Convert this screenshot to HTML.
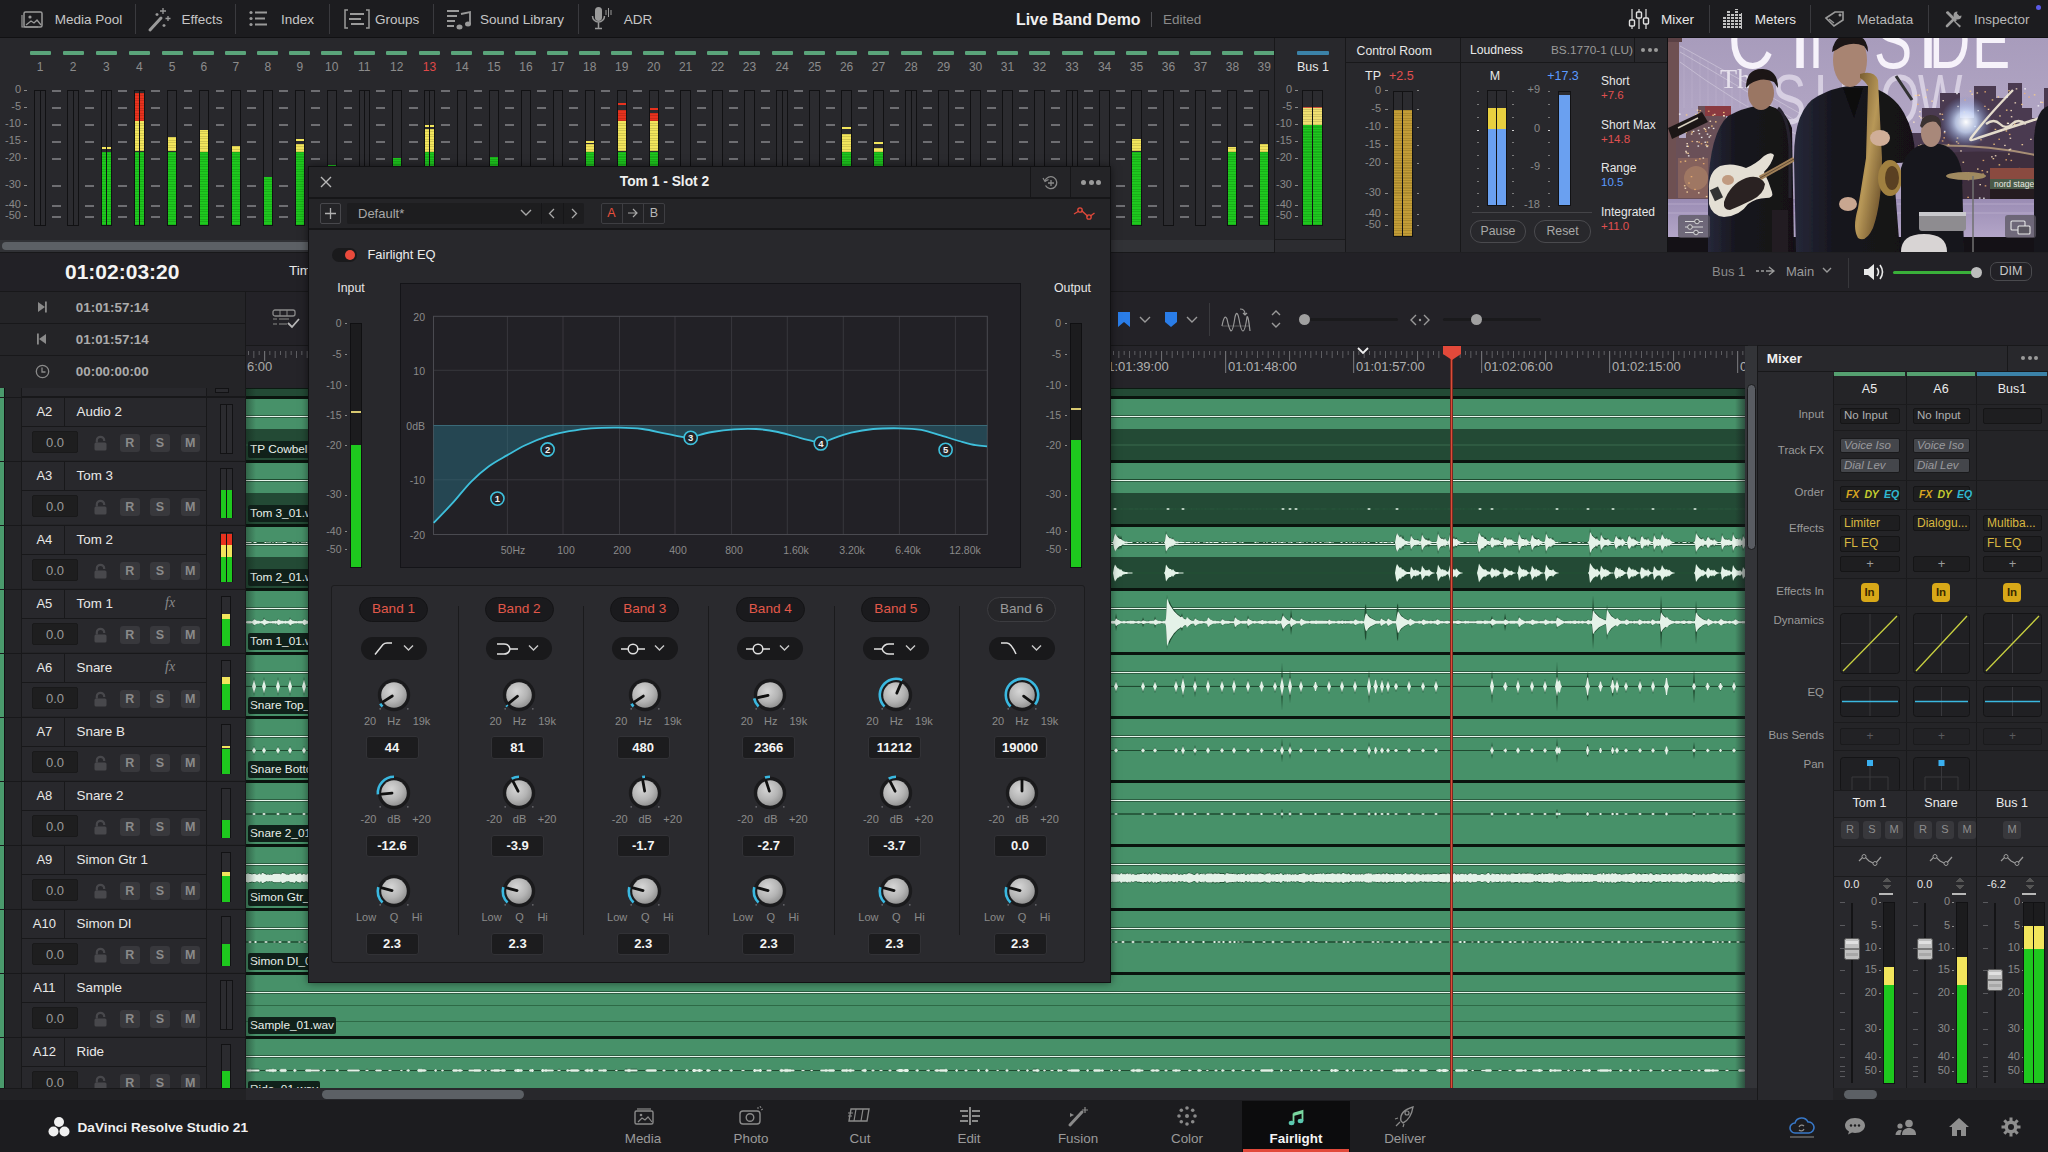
<!DOCTYPE html><html><head><meta charset="utf-8"><title>Fairlight</title><style>*{margin:0;padding:0}
body{width:2048px;height:1152px;overflow:hidden;position:relative;background:#1f1f22;font-family:"Liberation Sans",sans-serif}
div{position:absolute}
.t{white-space:nowrap}
svg{overflow:visible}
</style></head><body><div style="left:0px;top:0px;width:2048px;height:37px;background:#1c1c1f"></div>
<div style="left:0px;top:37px;width:2048px;height:1px;background:#111113"></div>
<div class="t" style="left:54.7px;top:11.7px;font-size:13.5px;line-height:16.2px;color:#c6c6c6;font-weight:400;">Media Pool</div>
<div class="t" style="left:181.6px;top:11.7px;font-size:13.5px;line-height:16.2px;color:#c6c6c6;font-weight:400;">Effects</div>
<div class="t" style="left:281px;top:11.7px;font-size:13.5px;line-height:16.2px;color:#c6c6c6;font-weight:400;">Index</div>
<div class="t" style="left:375px;top:11.7px;font-size:13.5px;line-height:16.2px;color:#c6c6c6;font-weight:400;">Groups</div>
<div class="t" style="left:480px;top:11.7px;font-size:13.5px;line-height:16.2px;color:#c6c6c6;font-weight:400;">Sound Library</div>
<div class="t" style="left:623.7px;top:11.7px;font-size:13.5px;line-height:16.2px;color:#c6c6c6;font-weight:400;">ADR</div>
<div style="left:135px;top:4px;width:1px;height:30px;background:#3a3a3e"></div>
<div style="left:235px;top:4px;width:1px;height:30px;background:#3a3a3e"></div>
<div style="left:329px;top:4px;width:1px;height:30px;background:#3a3a3e"></div>
<div style="left:433px;top:4px;width:1px;height:30px;background:#3a3a3e"></div>
<div style="left:578px;top:4px;width:1px;height:30px;background:#3a3a3e"></div>
<svg style="position:absolute;left:21px;top:8px;" width="23" height="22" viewBox="0 0 23 22"><rect x="3" y="4" width="18" height="15" rx="1.5" fill="none" stroke="#9a9a9a" stroke-width="1.5"/><path d="M1 7 v12 h16" fill="none" stroke="#9a9a9a" stroke-width="1.2"/><circle cx="9" cy="9" r="1.6" fill="#9a9a9a"/><path d="M5 17 l5-4 l3 2 l3-3 l4 5" fill="none" stroke="#9a9a9a" stroke-width="1.3"/></svg>
<svg style="position:absolute;left:148px;top:6px;" width="24" height="26" viewBox="0 0 24 26"><path d="M2 24 L13 12" stroke="#9a9a9a" stroke-width="3" stroke-linecap="round"/><path d="M15 2v6M12 5h6M20 10v5M17.5 12.5h5M9 7v3M7.5 8.5h3M16 18v3M14.5 19.5h3" stroke="#9a9a9a" stroke-width="1.3"/></svg>
<svg style="position:absolute;left:249px;top:10px;" width="20" height="17" viewBox="0 0 20 17"><circle cx="2" cy="2.5" r="1.6" fill="#9a9a9a"/><circle cx="2" cy="8.5" r="1.6" fill="#9a9a9a"/><circle cx="2" cy="14.5" r="1.6" fill="#9a9a9a"/><path d="M6 2.5h12M6 8.5h10M6 14.5h12" stroke="#9a9a9a" stroke-width="2"/></svg>
<svg style="position:absolute;left:344px;top:8px;" width="26" height="22" viewBox="0 0 26 22"><path d="M4 2H1v18h3M22 2h3v18h-3" fill="none" stroke="#9a9a9a" stroke-width="1.5"/><path d="M6 6h14M5 11h12M7 16h13" stroke="#9a9a9a" stroke-width="2.2"/></svg>
<svg style="position:absolute;left:446px;top:7px;" width="26" height="24" viewBox="0 0 26 24"><path d="M1 4h12M1 9h10M1 14h8M1 19h7" stroke="#9a9a9a" stroke-width="1.8"/><path d="M15 7 l9-2 v12" fill="none" stroke="#9a9a9a" stroke-width="1.8"/><ellipse cx="13.5" cy="20" rx="3" ry="2.5" fill="#9a9a9a"/><ellipse cx="22" cy="17" rx="3" ry="2.5" fill="#9a9a9a"/></svg>
<svg style="position:absolute;left:592px;top:6px;" width="22" height="26" viewBox="0 0 22 26"><rect x="3" y="1" width="7" height="14" rx="3.5" fill="#9a9a9a"/><path d="M0.5 10a6 6 0 0 0 12 0M6.5 16v6M3 22.5h7" fill="none" stroke="#9a9a9a" stroke-width="1.5"/><path d="M14 4v5M16.5 2v9M19 4v5" stroke="#9a9a9a" stroke-width="1"/></svg>
<div class="t" style="left:1016px;top:10.1px;font-size:15.9px;line-height:19.1px;color:#f0f0f0;font-weight:700;">Live Band Demo</div>
<div style="left:1151px;top:12px;width:1px;height:15px;background:#505054"></div>
<div class="t" style="left:1163px;top:11.5px;font-size:13.5px;line-height:16.2px;color:#8a8a8a;font-weight:400;">Edited</div>
<div class="t" style="left:1661px;top:11.7px;font-size:13.5px;line-height:16.2px;color:#e6e6e6;font-weight:400;">Mixer</div>
<div class="t" style="left:1754.7px;top:11.7px;font-size:13.5px;line-height:16.2px;color:#e6e6e6;font-weight:400;">Meters</div>
<div class="t" style="left:1857px;top:11.7px;font-size:13.5px;line-height:16.2px;color:#b8b8b8;font-weight:400;">Metadata</div>
<div class="t" style="left:1974px;top:11.7px;font-size:13.5px;line-height:16.2px;color:#b8b8b8;font-weight:400;">Inspector</div>
<div style="left:1709px;top:5px;width:1px;height:28px;background:#3a3a3e"></div>
<div style="left:1810px;top:5px;width:1px;height:28px;background:#3a3a3e"></div>
<div style="left:1928px;top:5px;width:1px;height:28px;background:#3a3a3e"></div>
<svg style="position:absolute;left:1628px;top:8px;" width="22" height="22" viewBox="0 0 22 22"><path d="M4 1v20M11 1v20M18 1v20" stroke="#e0e0e0" stroke-width="1.2"/><rect x="1.5" y="12" width="5" height="6" rx="1" fill="#1f1f22" stroke="#e0e0e0" stroke-width="1.4"/><rect x="8.5" y="4" width="5" height="6" rx="1" fill="#1f1f22" stroke="#e0e0e0" stroke-width="1.4"/><rect x="15.5" y="10" width="5" height="6" rx="1" fill="#1f1f22" stroke="#e0e0e0" stroke-width="1.4"/></svg>
<svg style="position:absolute;left:1723px;top:8px;" width="18" height="22" viewBox="0 0 18 22"><rect x="0" y="8" width="3" height="13" fill="#e0e0e0" opacity="0.85"/><rect x="4" y="3" width="3" height="18" fill="#e0e0e0" opacity="0.85"/><rect x="8" y="6" width="3" height="15" fill="#e0e0e0" opacity="0.85"/><rect x="12" y="1" width="3" height="20" fill="#e0e0e0" opacity="0.85"/><rect x="16" y="5" width="3" height="16" fill="#e0e0e0" opacity="0.85"/><rect x="0" y="2" width="18" height="1" fill="#1f1f22"/><rect x="0" y="5" width="18" height="1" fill="#1f1f22"/><rect x="0" y="8" width="18" height="1" fill="#1f1f22"/><rect x="0" y="11" width="18" height="1" fill="#1f1f22"/><rect x="0" y="14" width="18" height="1" fill="#1f1f22"/><rect x="0" y="17" width="18" height="1" fill="#1f1f22"/><rect x="0" y="20" width="18" height="1" fill="#1f1f22"/></svg>
<svg style="position:absolute;left:1824px;top:9px;" width="22" height="20" viewBox="0 0 22 20"><path d="M2 9 l9-6 h8 v8 l-9 6 z" fill="none" stroke="#9a9a9a" stroke-width="1.6"/><circle cx="16" cy="6" r="1.5" fill="#9a9a9a"/><path d="M5 10l5 4" stroke="#9a9a9a" stroke-width="1.3"/></svg>
<svg style="position:absolute;left:1944px;top:9px;" width="20" height="20" viewBox="0 0 20 20"><path d="M3 17 L12 8" stroke="#9a9a9a" stroke-width="2.6" stroke-linecap="round"/><path d="M13.5 2.5a4 4 0 1 0 4 4l-2 .5-2.5-2.5z" fill="#9a9a9a"/><path d="M2 3l2-1 9 9-2 2-9-9z" fill="#9a9a9a"/><path d="M11 12l6 5-1.5 1.5-5.5-6z" fill="#9a9a9a"/></svg>
<div style="left:2036px;top:5px;width:5px;height:5px;background:#5a5ae8;border-radius:50%"></div>
<div style="left:0px;top:38px;width:1275px;height:214px;background:#28282c"></div>
<div class="t" style="left:-9.0px;top:83.1px;width:30px;text-align:right;font-size:11px;line-height:13.2px;color:#8a8a8a;font-weight:400;">0</div>
<div style="left:24px;top:90px;width:3px;height:1px;background:#8a8a8a"></div>
<div class="t" style="left:-9.0px;top:100.3px;width:30px;text-align:right;font-size:11px;line-height:13.2px;color:#8a8a8a;font-weight:400;">-5</div>
<div style="left:24px;top:107px;width:3px;height:1px;background:#8a8a8a"></div>
<div class="t" style="left:-9.0px;top:117.4px;width:30px;text-align:right;font-size:11px;line-height:13.2px;color:#8a8a8a;font-weight:400;">-10</div>
<div style="left:24px;top:124px;width:3px;height:1px;background:#8a8a8a"></div>
<div class="t" style="left:-9.0px;top:134.4px;width:30px;text-align:right;font-size:11px;line-height:13.2px;color:#8a8a8a;font-weight:400;">-15</div>
<div style="left:24px;top:141px;width:3px;height:1px;background:#8a8a8a"></div>
<div class="t" style="left:-9.0px;top:151.4px;width:30px;text-align:right;font-size:11px;line-height:13.2px;color:#8a8a8a;font-weight:400;">-20</div>
<div style="left:24px;top:158px;width:3px;height:1px;background:#8a8a8a"></div>
<div class="t" style="left:-9.0px;top:178.1px;width:30px;text-align:right;font-size:11px;line-height:13.2px;color:#8a8a8a;font-weight:400;">-30</div>
<div style="left:24px;top:185px;width:3px;height:1px;background:#8a8a8a"></div>
<div class="t" style="left:-9.0px;top:198.4px;width:30px;text-align:right;font-size:11px;line-height:13.2px;color:#8a8a8a;font-weight:400;">-40</div>
<div style="left:24px;top:205px;width:3px;height:1px;background:#8a8a8a"></div>
<div class="t" style="left:-9.0px;top:209.0px;width:30px;text-align:right;font-size:11px;line-height:13.2px;color:#8a8a8a;font-weight:400;">-50</div>
<div style="left:24px;top:216px;width:3px;height:1px;background:#8a8a8a"></div>
<div style="left:29.50px;top:51px;width:21px;height:3.5px;background:#5aa47a;border-radius:1px"></div>
<div class="t" style="left:25.0px;top:60.1px;width:30px;text-align:center;font-size:12px;line-height:14.4px;color:#8c8c8c;font-weight:400;">1</div>
<div style="left:34.25px;top:89.7px;width:11.50px;height:136px;background:#2b2b2f;border:1px solid #111113;box-sizing:border-box"></div>
<div style="left:39.50px;top:89.7px;width:1px;height:136px;background:#111113"></div>
<div style="left:52.18px;top:90px;width:8.8px;height:2px;background:#6e6e72"></div>
<div style="left:52.18px;top:107px;width:8.8px;height:2px;background:#6e6e72"></div>
<div style="left:52.18px;top:124px;width:8.8px;height:2px;background:#6e6e72"></div>
<div style="left:52.18px;top:141px;width:8.8px;height:2px;background:#6e6e72"></div>
<div style="left:52.18px;top:158px;width:8.8px;height:2px;background:#6e6e72"></div>
<div style="left:52.18px;top:185px;width:8.8px;height:2px;background:#6e6e72"></div>
<div style="left:52.18px;top:205px;width:8.8px;height:2px;background:#6e6e72"></div>
<div style="left:52.18px;top:216px;width:8.8px;height:2px;background:#6e6e72"></div>
<div style="left:62.65px;top:51px;width:21px;height:3.5px;background:#5aa47a;border-radius:1px"></div>
<div class="t" style="left:58.2px;top:60.1px;width:30px;text-align:center;font-size:12px;line-height:14.4px;color:#8c8c8c;font-weight:400;">2</div>
<div style="left:67.40px;top:89.7px;width:11.50px;height:136px;background:#2b2b2f;border:1px solid #111113;box-sizing:border-box"></div>
<div style="left:72.65px;top:89.7px;width:1px;height:136px;background:#111113"></div>
<div style="left:85.33px;top:90px;width:8.8px;height:2px;background:#6e6e72"></div>
<div style="left:85.33px;top:107px;width:8.8px;height:2px;background:#6e6e72"></div>
<div style="left:85.33px;top:124px;width:8.8px;height:2px;background:#6e6e72"></div>
<div style="left:85.33px;top:141px;width:8.8px;height:2px;background:#6e6e72"></div>
<div style="left:85.33px;top:158px;width:8.8px;height:2px;background:#6e6e72"></div>
<div style="left:85.33px;top:185px;width:8.8px;height:2px;background:#6e6e72"></div>
<div style="left:85.33px;top:205px;width:8.8px;height:2px;background:#6e6e72"></div>
<div style="left:85.33px;top:216px;width:8.8px;height:2px;background:#6e6e72"></div>
<div style="left:95.80px;top:51px;width:21px;height:3.5px;background:#5aa47a;border-radius:1px"></div>
<div class="t" style="left:91.3px;top:60.1px;width:30px;text-align:center;font-size:12px;line-height:14.4px;color:#8c8c8c;font-weight:400;">3</div>
<div style="left:100.55px;top:89.7px;width:11.50px;height:136px;background:#2b2b2f;border:1px solid #111113;box-sizing:border-box"></div>
<div style="left:101.55px;top:151.5px;width:4.25px;height:73.5px;background:#1ec81e repeating-linear-gradient(0deg,rgba(0,0,0,.13) 0 1px,transparent 1px 2.5px)"></div>
<div style="left:101.55px;top:147px;width:4.25px;height:2px;background:#f2e55c"></div>
<div style="left:106.80px;top:151.5px;width:4.25px;height:73.5px;background:#1ec81e repeating-linear-gradient(0deg,rgba(0,0,0,.13) 0 1px,transparent 1px 2.5px)"></div>
<div style="left:106.80px;top:147px;width:4.25px;height:2px;background:#f2e55c"></div>
<div style="left:105.80px;top:89.7px;width:1px;height:136px;background:#111113"></div>
<div style="left:118.47px;top:90px;width:8.8px;height:2px;background:#6e6e72"></div>
<div style="left:118.47px;top:107px;width:8.8px;height:2px;background:#6e6e72"></div>
<div style="left:118.47px;top:124px;width:8.8px;height:2px;background:#6e6e72"></div>
<div style="left:118.47px;top:141px;width:8.8px;height:2px;background:#6e6e72"></div>
<div style="left:118.47px;top:158px;width:8.8px;height:2px;background:#6e6e72"></div>
<div style="left:118.47px;top:185px;width:8.8px;height:2px;background:#6e6e72"></div>
<div style="left:118.47px;top:205px;width:8.8px;height:2px;background:#6e6e72"></div>
<div style="left:118.47px;top:216px;width:8.8px;height:2px;background:#6e6e72"></div>
<div style="left:128.95px;top:51px;width:21px;height:3.5px;background:#5aa47a;border-radius:1px"></div>
<div class="t" style="left:124.4px;top:60.1px;width:30px;text-align:center;font-size:12px;line-height:14.4px;color:#8c8c8c;font-weight:400;">4</div>
<div style="left:133.70px;top:89.7px;width:11.50px;height:136px;background:#2b2b2f;border:1px solid #111113;box-sizing:border-box"></div>
<div style="left:134.70px;top:93.0px;width:4.25px;height:28.4px;background:#e8321e repeating-linear-gradient(0deg,rgba(0,0,0,.13) 0 1px,transparent 1px 2.5px)"></div>
<div style="left:134.70px;top:121.4px;width:4.25px;height:30.1px;background:#f2e55c repeating-linear-gradient(0deg,rgba(0,0,0,.13) 0 1px,transparent 1px 2.5px)"></div>
<div style="left:134.70px;top:151.5px;width:4.25px;height:73.5px;background:#1ec81e repeating-linear-gradient(0deg,rgba(0,0,0,.13) 0 1px,transparent 1px 2.5px)"></div>
<div style="left:139.95px;top:93.0px;width:4.25px;height:28.4px;background:#e8321e repeating-linear-gradient(0deg,rgba(0,0,0,.13) 0 1px,transparent 1px 2.5px)"></div>
<div style="left:139.95px;top:121.4px;width:4.25px;height:30.1px;background:#f2e55c repeating-linear-gradient(0deg,rgba(0,0,0,.13) 0 1px,transparent 1px 2.5px)"></div>
<div style="left:139.95px;top:151.5px;width:4.25px;height:73.5px;background:#1ec81e repeating-linear-gradient(0deg,rgba(0,0,0,.13) 0 1px,transparent 1px 2.5px)"></div>
<div style="left:138.95px;top:89.7px;width:1px;height:136px;background:#111113"></div>
<div style="left:151.32px;top:90px;width:8.8px;height:2px;background:#6e6e72"></div>
<div style="left:151.32px;top:107px;width:8.8px;height:2px;background:#6e6e72"></div>
<div style="left:151.32px;top:124px;width:8.8px;height:2px;background:#6e6e72"></div>
<div style="left:151.32px;top:141px;width:8.8px;height:2px;background:#6e6e72"></div>
<div style="left:151.32px;top:158px;width:8.8px;height:2px;background:#6e6e72"></div>
<div style="left:151.32px;top:185px;width:8.8px;height:2px;background:#6e6e72"></div>
<div style="left:151.32px;top:205px;width:8.8px;height:2px;background:#6e6e72"></div>
<div style="left:151.32px;top:216px;width:8.8px;height:2px;background:#6e6e72"></div>
<div style="left:161.50px;top:51px;width:21px;height:3.5px;background:#5aa47a;border-radius:1px"></div>
<div class="t" style="left:157.0px;top:60.1px;width:30px;text-align:center;font-size:12px;line-height:14.4px;color:#8c8c8c;font-weight:400;">5</div>
<div style="left:166.85px;top:89.7px;width:10.30px;height:136px;background:#2b2b2f;border:1px solid #111113;box-sizing:border-box"></div>
<div style="left:167.85px;top:136.7px;width:8.30px;height:14.8px;background:#f2e55c repeating-linear-gradient(0deg,rgba(0,0,0,.13) 0 1px,transparent 1px 2.5px)"></div>
<div style="left:167.85px;top:151.5px;width:8.30px;height:73.5px;background:#1ec81e repeating-linear-gradient(0deg,rgba(0,0,0,.13) 0 1px,transparent 1px 2.5px)"></div>
<div style="left:183.57px;top:90px;width:8.8px;height:2px;background:#6e6e72"></div>
<div style="left:183.57px;top:107px;width:8.8px;height:2px;background:#6e6e72"></div>
<div style="left:183.57px;top:124px;width:8.8px;height:2px;background:#6e6e72"></div>
<div style="left:183.57px;top:141px;width:8.8px;height:2px;background:#6e6e72"></div>
<div style="left:183.57px;top:158px;width:8.8px;height:2px;background:#6e6e72"></div>
<div style="left:183.57px;top:185px;width:8.8px;height:2px;background:#6e6e72"></div>
<div style="left:183.57px;top:205px;width:8.8px;height:2px;background:#6e6e72"></div>
<div style="left:183.57px;top:216px;width:8.8px;height:2px;background:#6e6e72"></div>
<div style="left:193.45px;top:51px;width:21px;height:3.5px;background:#5aa47a;border-radius:1px"></div>
<div class="t" style="left:188.9px;top:60.1px;width:30px;text-align:center;font-size:12px;line-height:14.4px;color:#8c8c8c;font-weight:400;">6</div>
<div style="left:198.80px;top:89.7px;width:10.30px;height:136px;background:#2b2b2f;border:1px solid #111113;box-sizing:border-box"></div>
<div style="left:199.80px;top:130.0px;width:8.30px;height:21.5px;background:#f2e55c repeating-linear-gradient(0deg,rgba(0,0,0,.13) 0 1px,transparent 1px 2.5px)"></div>
<div style="left:199.80px;top:151.5px;width:8.30px;height:73.5px;background:#1ec81e repeating-linear-gradient(0deg,rgba(0,0,0,.13) 0 1px,transparent 1px 2.5px)"></div>
<div style="left:215.52px;top:90px;width:8.8px;height:2px;background:#6e6e72"></div>
<div style="left:215.52px;top:107px;width:8.8px;height:2px;background:#6e6e72"></div>
<div style="left:215.52px;top:124px;width:8.8px;height:2px;background:#6e6e72"></div>
<div style="left:215.52px;top:141px;width:8.8px;height:2px;background:#6e6e72"></div>
<div style="left:215.52px;top:158px;width:8.8px;height:2px;background:#6e6e72"></div>
<div style="left:215.52px;top:185px;width:8.8px;height:2px;background:#6e6e72"></div>
<div style="left:215.52px;top:205px;width:8.8px;height:2px;background:#6e6e72"></div>
<div style="left:215.52px;top:216px;width:8.8px;height:2px;background:#6e6e72"></div>
<div style="left:225.40px;top:51px;width:21px;height:3.5px;background:#5aa47a;border-radius:1px"></div>
<div class="t" style="left:220.9px;top:60.1px;width:30px;text-align:center;font-size:12px;line-height:14.4px;color:#8c8c8c;font-weight:400;">7</div>
<div style="left:230.75px;top:89.7px;width:10.30px;height:136px;background:#2b2b2f;border:1px solid #111113;box-sizing:border-box"></div>
<div style="left:231.75px;top:146.0px;width:8.30px;height:5.5px;background:#f2e55c repeating-linear-gradient(0deg,rgba(0,0,0,.13) 0 1px,transparent 1px 2.5px)"></div>
<div style="left:231.75px;top:151.5px;width:8.30px;height:73.5px;background:#1ec81e repeating-linear-gradient(0deg,rgba(0,0,0,.13) 0 1px,transparent 1px 2.5px)"></div>
<div style="left:247.47px;top:90px;width:8.8px;height:2px;background:#6e6e72"></div>
<div style="left:247.47px;top:107px;width:8.8px;height:2px;background:#6e6e72"></div>
<div style="left:247.47px;top:124px;width:8.8px;height:2px;background:#6e6e72"></div>
<div style="left:247.47px;top:141px;width:8.8px;height:2px;background:#6e6e72"></div>
<div style="left:247.47px;top:158px;width:8.8px;height:2px;background:#6e6e72"></div>
<div style="left:247.47px;top:185px;width:8.8px;height:2px;background:#6e6e72"></div>
<div style="left:247.47px;top:205px;width:8.8px;height:2px;background:#6e6e72"></div>
<div style="left:247.47px;top:216px;width:8.8px;height:2px;background:#6e6e72"></div>
<div style="left:257.35px;top:51px;width:21px;height:3.5px;background:#5aa47a;border-radius:1px"></div>
<div class="t" style="left:252.8px;top:60.1px;width:30px;text-align:center;font-size:12px;line-height:14.4px;color:#8c8c8c;font-weight:400;">8</div>
<div style="left:262.70px;top:89.7px;width:10.30px;height:136px;background:#2b2b2f;border:1px solid #111113;box-sizing:border-box"></div>
<div style="left:263.70px;top:176.7px;width:8.30px;height:48.3px;background:#1ec81e repeating-linear-gradient(0deg,rgba(0,0,0,.13) 0 1px,transparent 1px 2.5px)"></div>
<div style="left:279.42px;top:90px;width:8.8px;height:2px;background:#6e6e72"></div>
<div style="left:279.42px;top:107px;width:8.8px;height:2px;background:#6e6e72"></div>
<div style="left:279.42px;top:124px;width:8.8px;height:2px;background:#6e6e72"></div>
<div style="left:279.42px;top:141px;width:8.8px;height:2px;background:#6e6e72"></div>
<div style="left:279.42px;top:158px;width:8.8px;height:2px;background:#6e6e72"></div>
<div style="left:279.42px;top:185px;width:8.8px;height:2px;background:#6e6e72"></div>
<div style="left:279.42px;top:205px;width:8.8px;height:2px;background:#6e6e72"></div>
<div style="left:279.42px;top:216px;width:8.8px;height:2px;background:#6e6e72"></div>
<div style="left:289.30px;top:51px;width:21px;height:3.5px;background:#5aa47a;border-radius:1px"></div>
<div class="t" style="left:284.8px;top:60.1px;width:30px;text-align:center;font-size:12px;line-height:14.4px;color:#8c8c8c;font-weight:400;">9</div>
<div style="left:294.65px;top:89.7px;width:10.30px;height:136px;background:#2b2b2f;border:1px solid #111113;box-sizing:border-box"></div>
<div style="left:295.65px;top:143.5px;width:8.30px;height:8.0px;background:#f2e55c repeating-linear-gradient(0deg,rgba(0,0,0,.13) 0 1px,transparent 1px 2.5px)"></div>
<div style="left:295.65px;top:151.5px;width:8.30px;height:73.5px;background:#1ec81e repeating-linear-gradient(0deg,rgba(0,0,0,.13) 0 1px,transparent 1px 2.5px)"></div>
<div style="left:295.65px;top:139px;width:8.30px;height:2px;background:#f2e55c"></div>
<div style="left:311.38px;top:90px;width:8.8px;height:2px;background:#6e6e72"></div>
<div style="left:311.38px;top:107px;width:8.8px;height:2px;background:#6e6e72"></div>
<div style="left:311.38px;top:124px;width:8.8px;height:2px;background:#6e6e72"></div>
<div style="left:311.38px;top:141px;width:8.8px;height:2px;background:#6e6e72"></div>
<div style="left:311.38px;top:158px;width:8.8px;height:2px;background:#6e6e72"></div>
<div style="left:311.38px;top:185px;width:8.8px;height:2px;background:#6e6e72"></div>
<div style="left:311.38px;top:205px;width:8.8px;height:2px;background:#6e6e72"></div>
<div style="left:311.38px;top:216px;width:8.8px;height:2px;background:#6e6e72"></div>
<div style="left:321.25px;top:51px;width:21px;height:3.5px;background:#5aa47a;border-radius:1px"></div>
<div class="t" style="left:316.7px;top:60.1px;width:30px;text-align:center;font-size:12px;line-height:14.4px;color:#8c8c8c;font-weight:400;">10</div>
<div style="left:326.60px;top:89.7px;width:10.30px;height:136px;background:#2b2b2f;border:1px solid #111113;box-sizing:border-box"></div>
<div style="left:327.60px;top:165.0px;width:8.30px;height:60.0px;background:#1ec81e repeating-linear-gradient(0deg,rgba(0,0,0,.13) 0 1px,transparent 1px 2.5px)"></div>
<div style="left:343.62px;top:90px;width:8.8px;height:2px;background:#6e6e72"></div>
<div style="left:343.62px;top:107px;width:8.8px;height:2px;background:#6e6e72"></div>
<div style="left:343.62px;top:124px;width:8.8px;height:2px;background:#6e6e72"></div>
<div style="left:343.62px;top:141px;width:8.8px;height:2px;background:#6e6e72"></div>
<div style="left:343.62px;top:158px;width:8.8px;height:2px;background:#6e6e72"></div>
<div style="left:343.62px;top:185px;width:8.8px;height:2px;background:#6e6e72"></div>
<div style="left:343.62px;top:205px;width:8.8px;height:2px;background:#6e6e72"></div>
<div style="left:343.62px;top:216px;width:8.8px;height:2px;background:#6e6e72"></div>
<div style="left:353.80px;top:51px;width:21px;height:3.5px;background:#5aa47a;border-radius:1px"></div>
<div class="t" style="left:349.3px;top:60.1px;width:30px;text-align:center;font-size:12px;line-height:14.4px;color:#8c8c8c;font-weight:400;">11</div>
<div style="left:358.55px;top:89.7px;width:11.50px;height:136px;background:#2b2b2f;border:1px solid #111113;box-sizing:border-box"></div>
<div style="left:363.80px;top:89.7px;width:1px;height:136px;background:#111113"></div>
<div style="left:376.17px;top:90px;width:8.8px;height:2px;background:#6e6e72"></div>
<div style="left:376.17px;top:107px;width:8.8px;height:2px;background:#6e6e72"></div>
<div style="left:376.17px;top:124px;width:8.8px;height:2px;background:#6e6e72"></div>
<div style="left:376.17px;top:141px;width:8.8px;height:2px;background:#6e6e72"></div>
<div style="left:376.17px;top:158px;width:8.8px;height:2px;background:#6e6e72"></div>
<div style="left:376.17px;top:185px;width:8.8px;height:2px;background:#6e6e72"></div>
<div style="left:376.17px;top:205px;width:8.8px;height:2px;background:#6e6e72"></div>
<div style="left:376.17px;top:216px;width:8.8px;height:2px;background:#6e6e72"></div>
<div style="left:386.35px;top:51px;width:21px;height:3.5px;background:#5aa47a;border-radius:1px"></div>
<div class="t" style="left:381.8px;top:60.1px;width:30px;text-align:center;font-size:12px;line-height:14.4px;color:#8c8c8c;font-weight:400;">12</div>
<div style="left:391.70px;top:89.7px;width:10.30px;height:136px;background:#2b2b2f;border:1px solid #111113;box-sizing:border-box"></div>
<div style="left:392.70px;top:158.0px;width:8.30px;height:67.0px;background:#1ec81e repeating-linear-gradient(0deg,rgba(0,0,0,.13) 0 1px,transparent 1px 2.5px)"></div>
<div style="left:408.73px;top:90px;width:8.8px;height:2px;background:#6e6e72"></div>
<div style="left:408.73px;top:107px;width:8.8px;height:2px;background:#6e6e72"></div>
<div style="left:408.73px;top:124px;width:8.8px;height:2px;background:#6e6e72"></div>
<div style="left:408.73px;top:141px;width:8.8px;height:2px;background:#6e6e72"></div>
<div style="left:408.73px;top:158px;width:8.8px;height:2px;background:#6e6e72"></div>
<div style="left:408.73px;top:185px;width:8.8px;height:2px;background:#6e6e72"></div>
<div style="left:408.73px;top:205px;width:8.8px;height:2px;background:#6e6e72"></div>
<div style="left:408.73px;top:216px;width:8.8px;height:2px;background:#6e6e72"></div>
<div style="left:418.90px;top:51px;width:21px;height:3.5px;background:#5aa47a;border-radius:1px"></div>
<div class="t" style="left:414.4px;top:60.1px;width:30px;text-align:center;font-size:12px;line-height:14.4px;color:#e04848;font-weight:400;">13</div>
<div style="left:423.65px;top:89.7px;width:11.50px;height:136px;background:#2b2b2f;border:1px solid #111113;box-sizing:border-box"></div>
<div style="left:424.65px;top:129.0px;width:4.25px;height:22.5px;background:#f2e55c repeating-linear-gradient(0deg,rgba(0,0,0,.13) 0 1px,transparent 1px 2.5px)"></div>
<div style="left:424.65px;top:151.5px;width:4.25px;height:73.5px;background:#1ec81e repeating-linear-gradient(0deg,rgba(0,0,0,.13) 0 1px,transparent 1px 2.5px)"></div>
<div style="left:424.65px;top:125px;width:4.25px;height:2px;background:#f2e55c"></div>
<div style="left:429.90px;top:129.0px;width:4.25px;height:22.5px;background:#f2e55c repeating-linear-gradient(0deg,rgba(0,0,0,.13) 0 1px,transparent 1px 2.5px)"></div>
<div style="left:429.90px;top:151.5px;width:4.25px;height:73.5px;background:#1ec81e repeating-linear-gradient(0deg,rgba(0,0,0,.13) 0 1px,transparent 1px 2.5px)"></div>
<div style="left:429.90px;top:125px;width:4.25px;height:2px;background:#f2e55c"></div>
<div style="left:428.90px;top:89.7px;width:1px;height:136px;background:#111113"></div>
<div style="left:441.27px;top:90px;width:8.8px;height:2px;background:#6e6e72"></div>
<div style="left:441.27px;top:107px;width:8.8px;height:2px;background:#6e6e72"></div>
<div style="left:441.27px;top:124px;width:8.8px;height:2px;background:#6e6e72"></div>
<div style="left:441.27px;top:141px;width:8.8px;height:2px;background:#6e6e72"></div>
<div style="left:441.27px;top:158px;width:8.8px;height:2px;background:#6e6e72"></div>
<div style="left:441.27px;top:185px;width:8.8px;height:2px;background:#6e6e72"></div>
<div style="left:441.27px;top:205px;width:8.8px;height:2px;background:#6e6e72"></div>
<div style="left:441.27px;top:216px;width:8.8px;height:2px;background:#6e6e72"></div>
<div style="left:451.45px;top:51px;width:21px;height:3.5px;background:#5aa47a;border-radius:1px"></div>
<div class="t" style="left:446.9px;top:60.1px;width:30px;text-align:center;font-size:12px;line-height:14.4px;color:#8c8c8c;font-weight:400;">14</div>
<div style="left:456.80px;top:89.7px;width:10.30px;height:136px;background:#2b2b2f;border:1px solid #111113;box-sizing:border-box"></div>
<div style="left:473.52px;top:90px;width:8.8px;height:2px;background:#6e6e72"></div>
<div style="left:473.52px;top:107px;width:8.8px;height:2px;background:#6e6e72"></div>
<div style="left:473.52px;top:124px;width:8.8px;height:2px;background:#6e6e72"></div>
<div style="left:473.52px;top:141px;width:8.8px;height:2px;background:#6e6e72"></div>
<div style="left:473.52px;top:158px;width:8.8px;height:2px;background:#6e6e72"></div>
<div style="left:473.52px;top:185px;width:8.8px;height:2px;background:#6e6e72"></div>
<div style="left:473.52px;top:205px;width:8.8px;height:2px;background:#6e6e72"></div>
<div style="left:473.52px;top:216px;width:8.8px;height:2px;background:#6e6e72"></div>
<div style="left:483.40px;top:51px;width:21px;height:3.5px;background:#5aa47a;border-radius:1px"></div>
<div class="t" style="left:478.9px;top:60.1px;width:30px;text-align:center;font-size:12px;line-height:14.4px;color:#8c8c8c;font-weight:400;">15</div>
<div style="left:488.75px;top:89.7px;width:10.30px;height:136px;background:#2b2b2f;border:1px solid #111113;box-sizing:border-box"></div>
<div style="left:489.75px;top:156.5px;width:8.30px;height:68.5px;background:#1ec81e repeating-linear-gradient(0deg,rgba(0,0,0,.13) 0 1px,transparent 1px 2.5px)"></div>
<div style="left:505.48px;top:90px;width:8.8px;height:2px;background:#6e6e72"></div>
<div style="left:505.48px;top:107px;width:8.8px;height:2px;background:#6e6e72"></div>
<div style="left:505.48px;top:124px;width:8.8px;height:2px;background:#6e6e72"></div>
<div style="left:505.48px;top:141px;width:8.8px;height:2px;background:#6e6e72"></div>
<div style="left:505.48px;top:158px;width:8.8px;height:2px;background:#6e6e72"></div>
<div style="left:505.48px;top:185px;width:8.8px;height:2px;background:#6e6e72"></div>
<div style="left:505.48px;top:205px;width:8.8px;height:2px;background:#6e6e72"></div>
<div style="left:505.48px;top:216px;width:8.8px;height:2px;background:#6e6e72"></div>
<div style="left:515.35px;top:51px;width:21px;height:3.5px;background:#5aa47a;border-radius:1px"></div>
<div class="t" style="left:510.9px;top:60.1px;width:30px;text-align:center;font-size:12px;line-height:14.4px;color:#8c8c8c;font-weight:400;">16</div>
<div style="left:520.70px;top:89.7px;width:10.30px;height:136px;background:#2b2b2f;border:1px solid #111113;box-sizing:border-box"></div>
<div style="left:537.43px;top:90px;width:8.8px;height:2px;background:#6e6e72"></div>
<div style="left:537.43px;top:107px;width:8.8px;height:2px;background:#6e6e72"></div>
<div style="left:537.43px;top:124px;width:8.8px;height:2px;background:#6e6e72"></div>
<div style="left:537.43px;top:141px;width:8.8px;height:2px;background:#6e6e72"></div>
<div style="left:537.43px;top:158px;width:8.8px;height:2px;background:#6e6e72"></div>
<div style="left:537.43px;top:185px;width:8.8px;height:2px;background:#6e6e72"></div>
<div style="left:537.43px;top:205px;width:8.8px;height:2px;background:#6e6e72"></div>
<div style="left:537.43px;top:216px;width:8.8px;height:2px;background:#6e6e72"></div>
<div style="left:547.30px;top:51px;width:21px;height:3.5px;background:#5aa47a;border-radius:1px"></div>
<div class="t" style="left:542.8px;top:60.1px;width:30px;text-align:center;font-size:12px;line-height:14.4px;color:#8c8c8c;font-weight:400;">17</div>
<div style="left:552.65px;top:89.7px;width:10.30px;height:136px;background:#2b2b2f;border:1px solid #111113;box-sizing:border-box"></div>
<div style="left:569.38px;top:90px;width:8.8px;height:2px;background:#6e6e72"></div>
<div style="left:569.38px;top:107px;width:8.8px;height:2px;background:#6e6e72"></div>
<div style="left:569.38px;top:124px;width:8.8px;height:2px;background:#6e6e72"></div>
<div style="left:569.38px;top:141px;width:8.8px;height:2px;background:#6e6e72"></div>
<div style="left:569.38px;top:158px;width:8.8px;height:2px;background:#6e6e72"></div>
<div style="left:569.38px;top:185px;width:8.8px;height:2px;background:#6e6e72"></div>
<div style="left:569.38px;top:205px;width:8.8px;height:2px;background:#6e6e72"></div>
<div style="left:569.38px;top:216px;width:8.8px;height:2px;background:#6e6e72"></div>
<div style="left:579.25px;top:51px;width:21px;height:3.5px;background:#5aa47a;border-radius:1px"></div>
<div class="t" style="left:574.8px;top:60.1px;width:30px;text-align:center;font-size:12px;line-height:14.4px;color:#8c8c8c;font-weight:400;">18</div>
<div style="left:584.60px;top:89.7px;width:10.30px;height:136px;background:#2b2b2f;border:1px solid #111113;box-sizing:border-box"></div>
<div style="left:585.60px;top:144.0px;width:8.30px;height:7.5px;background:#f2e55c repeating-linear-gradient(0deg,rgba(0,0,0,.13) 0 1px,transparent 1px 2.5px)"></div>
<div style="left:585.60px;top:151.5px;width:8.30px;height:73.5px;background:#1ec81e repeating-linear-gradient(0deg,rgba(0,0,0,.13) 0 1px,transparent 1px 2.5px)"></div>
<div style="left:585.60px;top:141px;width:8.30px;height:2px;background:#f2e55c"></div>
<div style="left:601.33px;top:90px;width:8.8px;height:2px;background:#6e6e72"></div>
<div style="left:601.33px;top:107px;width:8.8px;height:2px;background:#6e6e72"></div>
<div style="left:601.33px;top:124px;width:8.8px;height:2px;background:#6e6e72"></div>
<div style="left:601.33px;top:141px;width:8.8px;height:2px;background:#6e6e72"></div>
<div style="left:601.33px;top:158px;width:8.8px;height:2px;background:#6e6e72"></div>
<div style="left:601.33px;top:185px;width:8.8px;height:2px;background:#6e6e72"></div>
<div style="left:601.33px;top:205px;width:8.8px;height:2px;background:#6e6e72"></div>
<div style="left:601.33px;top:216px;width:8.8px;height:2px;background:#6e6e72"></div>
<div style="left:611.20px;top:51px;width:21px;height:3.5px;background:#5aa47a;border-radius:1px"></div>
<div class="t" style="left:606.7px;top:60.1px;width:30px;text-align:center;font-size:12px;line-height:14.4px;color:#8c8c8c;font-weight:400;">19</div>
<div style="left:616.55px;top:89.7px;width:10.30px;height:136px;background:#2b2b2f;border:1px solid #111113;box-sizing:border-box"></div>
<div style="left:617.55px;top:110.0px;width:8.30px;height:11.4px;background:#e8321e repeating-linear-gradient(0deg,rgba(0,0,0,.13) 0 1px,transparent 1px 2.5px)"></div>
<div style="left:617.55px;top:121.4px;width:8.30px;height:30.1px;background:#f2e55c repeating-linear-gradient(0deg,rgba(0,0,0,.13) 0 1px,transparent 1px 2.5px)"></div>
<div style="left:617.55px;top:151.5px;width:8.30px;height:73.5px;background:#1ec81e repeating-linear-gradient(0deg,rgba(0,0,0,.13) 0 1px,transparent 1px 2.5px)"></div>
<div style="left:617.55px;top:103px;width:8.30px;height:2px;background:#e8321e"></div>
<div style="left:633.28px;top:90px;width:8.8px;height:2px;background:#6e6e72"></div>
<div style="left:633.28px;top:107px;width:8.8px;height:2px;background:#6e6e72"></div>
<div style="left:633.28px;top:124px;width:8.8px;height:2px;background:#6e6e72"></div>
<div style="left:633.28px;top:141px;width:8.8px;height:2px;background:#6e6e72"></div>
<div style="left:633.28px;top:158px;width:8.8px;height:2px;background:#6e6e72"></div>
<div style="left:633.28px;top:185px;width:8.8px;height:2px;background:#6e6e72"></div>
<div style="left:633.28px;top:205px;width:8.8px;height:2px;background:#6e6e72"></div>
<div style="left:633.28px;top:216px;width:8.8px;height:2px;background:#6e6e72"></div>
<div style="left:643.15px;top:51px;width:21px;height:3.5px;background:#5aa47a;border-radius:1px"></div>
<div class="t" style="left:638.7px;top:60.1px;width:30px;text-align:center;font-size:12px;line-height:14.4px;color:#8c8c8c;font-weight:400;">20</div>
<div style="left:648.50px;top:89.7px;width:10.30px;height:136px;background:#2b2b2f;border:1px solid #111113;box-sizing:border-box"></div>
<div style="left:649.50px;top:112.8px;width:8.30px;height:8.6px;background:#e8321e repeating-linear-gradient(0deg,rgba(0,0,0,.13) 0 1px,transparent 1px 2.5px)"></div>
<div style="left:649.50px;top:121.4px;width:8.30px;height:30.1px;background:#f2e55c repeating-linear-gradient(0deg,rgba(0,0,0,.13) 0 1px,transparent 1px 2.5px)"></div>
<div style="left:649.50px;top:151.5px;width:8.30px;height:73.5px;background:#1ec81e repeating-linear-gradient(0deg,rgba(0,0,0,.13) 0 1px,transparent 1px 2.5px)"></div>
<div style="left:649.50px;top:108px;width:8.30px;height:2px;background:#e8321e"></div>
<div style="left:665.23px;top:90px;width:8.8px;height:2px;background:#6e6e72"></div>
<div style="left:665.23px;top:107px;width:8.8px;height:2px;background:#6e6e72"></div>
<div style="left:665.23px;top:124px;width:8.8px;height:2px;background:#6e6e72"></div>
<div style="left:665.23px;top:141px;width:8.8px;height:2px;background:#6e6e72"></div>
<div style="left:665.23px;top:158px;width:8.8px;height:2px;background:#6e6e72"></div>
<div style="left:665.23px;top:185px;width:8.8px;height:2px;background:#6e6e72"></div>
<div style="left:665.23px;top:205px;width:8.8px;height:2px;background:#6e6e72"></div>
<div style="left:665.23px;top:216px;width:8.8px;height:2px;background:#6e6e72"></div>
<div style="left:675.10px;top:51px;width:21px;height:3.5px;background:#5aa47a;border-radius:1px"></div>
<div class="t" style="left:670.6px;top:60.1px;width:30px;text-align:center;font-size:12px;line-height:14.4px;color:#8c8c8c;font-weight:400;">21</div>
<div style="left:680.45px;top:89.7px;width:10.30px;height:136px;background:#2b2b2f;border:1px solid #111113;box-sizing:border-box"></div>
<div style="left:697.18px;top:90px;width:8.8px;height:2px;background:#6e6e72"></div>
<div style="left:697.18px;top:107px;width:8.8px;height:2px;background:#6e6e72"></div>
<div style="left:697.18px;top:124px;width:8.8px;height:2px;background:#6e6e72"></div>
<div style="left:697.18px;top:141px;width:8.8px;height:2px;background:#6e6e72"></div>
<div style="left:697.18px;top:158px;width:8.8px;height:2px;background:#6e6e72"></div>
<div style="left:697.18px;top:185px;width:8.8px;height:2px;background:#6e6e72"></div>
<div style="left:697.18px;top:205px;width:8.8px;height:2px;background:#6e6e72"></div>
<div style="left:697.18px;top:216px;width:8.8px;height:2px;background:#6e6e72"></div>
<div style="left:707.05px;top:51px;width:21px;height:3.5px;background:#5aa47a;border-radius:1px"></div>
<div class="t" style="left:702.6px;top:60.1px;width:30px;text-align:center;font-size:12px;line-height:14.4px;color:#8c8c8c;font-weight:400;">22</div>
<div style="left:712.40px;top:89.7px;width:10.30px;height:136px;background:#2b2b2f;border:1px solid #111113;box-sizing:border-box"></div>
<div style="left:729.13px;top:90px;width:8.8px;height:2px;background:#6e6e72"></div>
<div style="left:729.13px;top:107px;width:8.8px;height:2px;background:#6e6e72"></div>
<div style="left:729.13px;top:124px;width:8.8px;height:2px;background:#6e6e72"></div>
<div style="left:729.13px;top:141px;width:8.8px;height:2px;background:#6e6e72"></div>
<div style="left:729.13px;top:158px;width:8.8px;height:2px;background:#6e6e72"></div>
<div style="left:729.13px;top:185px;width:8.8px;height:2px;background:#6e6e72"></div>
<div style="left:729.13px;top:205px;width:8.8px;height:2px;background:#6e6e72"></div>
<div style="left:729.13px;top:216px;width:8.8px;height:2px;background:#6e6e72"></div>
<div style="left:739.00px;top:51px;width:21px;height:3.5px;background:#5aa47a;border-radius:1px"></div>
<div class="t" style="left:734.5px;top:60.1px;width:30px;text-align:center;font-size:12px;line-height:14.4px;color:#8c8c8c;font-weight:400;">23</div>
<div style="left:744.35px;top:89.7px;width:10.30px;height:136px;background:#2b2b2f;border:1px solid #111113;box-sizing:border-box"></div>
<div style="left:761.38px;top:90px;width:8.8px;height:2px;background:#6e6e72"></div>
<div style="left:761.38px;top:107px;width:8.8px;height:2px;background:#6e6e72"></div>
<div style="left:761.38px;top:124px;width:8.8px;height:2px;background:#6e6e72"></div>
<div style="left:761.38px;top:141px;width:8.8px;height:2px;background:#6e6e72"></div>
<div style="left:761.38px;top:158px;width:8.8px;height:2px;background:#6e6e72"></div>
<div style="left:761.38px;top:185px;width:8.8px;height:2px;background:#6e6e72"></div>
<div style="left:761.38px;top:205px;width:8.8px;height:2px;background:#6e6e72"></div>
<div style="left:761.38px;top:216px;width:8.8px;height:2px;background:#6e6e72"></div>
<div style="left:771.55px;top:51px;width:21px;height:3.5px;background:#5aa47a;border-radius:1px"></div>
<div class="t" style="left:767.1px;top:60.1px;width:30px;text-align:center;font-size:12px;line-height:14.4px;color:#8c8c8c;font-weight:400;">24</div>
<div style="left:776.30px;top:89.7px;width:11.50px;height:136px;background:#2b2b2f;border:1px solid #111113;box-sizing:border-box"></div>
<div style="left:781.55px;top:89.7px;width:1px;height:136px;background:#111113"></div>
<div style="left:793.93px;top:90px;width:8.8px;height:2px;background:#6e6e72"></div>
<div style="left:793.93px;top:107px;width:8.8px;height:2px;background:#6e6e72"></div>
<div style="left:793.93px;top:124px;width:8.8px;height:2px;background:#6e6e72"></div>
<div style="left:793.93px;top:141px;width:8.8px;height:2px;background:#6e6e72"></div>
<div style="left:793.93px;top:158px;width:8.8px;height:2px;background:#6e6e72"></div>
<div style="left:793.93px;top:185px;width:8.8px;height:2px;background:#6e6e72"></div>
<div style="left:793.93px;top:205px;width:8.8px;height:2px;background:#6e6e72"></div>
<div style="left:793.93px;top:216px;width:8.8px;height:2px;background:#6e6e72"></div>
<div style="left:804.10px;top:51px;width:21px;height:3.5px;background:#5aa47a;border-radius:1px"></div>
<div class="t" style="left:799.6px;top:60.1px;width:30px;text-align:center;font-size:12px;line-height:14.4px;color:#8c8c8c;font-weight:400;">25</div>
<div style="left:809.45px;top:89.7px;width:10.30px;height:136px;background:#2b2b2f;border:1px solid #111113;box-sizing:border-box"></div>
<div style="left:826.18px;top:90px;width:8.8px;height:2px;background:#6e6e72"></div>
<div style="left:826.18px;top:107px;width:8.8px;height:2px;background:#6e6e72"></div>
<div style="left:826.18px;top:124px;width:8.8px;height:2px;background:#6e6e72"></div>
<div style="left:826.18px;top:141px;width:8.8px;height:2px;background:#6e6e72"></div>
<div style="left:826.18px;top:158px;width:8.8px;height:2px;background:#6e6e72"></div>
<div style="left:826.18px;top:185px;width:8.8px;height:2px;background:#6e6e72"></div>
<div style="left:826.18px;top:205px;width:8.8px;height:2px;background:#6e6e72"></div>
<div style="left:826.18px;top:216px;width:8.8px;height:2px;background:#6e6e72"></div>
<div style="left:836.05px;top:51px;width:21px;height:3.5px;background:#5aa47a;border-radius:1px"></div>
<div class="t" style="left:831.6px;top:60.1px;width:30px;text-align:center;font-size:12px;line-height:14.4px;color:#8c8c8c;font-weight:400;">26</div>
<div style="left:841.40px;top:89.7px;width:10.30px;height:136px;background:#2b2b2f;border:1px solid #111113;box-sizing:border-box"></div>
<div style="left:842.40px;top:134.0px;width:8.30px;height:17.5px;background:#f2e55c repeating-linear-gradient(0deg,rgba(0,0,0,.13) 0 1px,transparent 1px 2.5px)"></div>
<div style="left:842.40px;top:151.5px;width:8.30px;height:73.5px;background:#1ec81e repeating-linear-gradient(0deg,rgba(0,0,0,.13) 0 1px,transparent 1px 2.5px)"></div>
<div style="left:842.40px;top:127px;width:8.30px;height:2px;background:#f2e55c"></div>
<div style="left:858.13px;top:90px;width:8.8px;height:2px;background:#6e6e72"></div>
<div style="left:858.13px;top:107px;width:8.8px;height:2px;background:#6e6e72"></div>
<div style="left:858.13px;top:124px;width:8.8px;height:2px;background:#6e6e72"></div>
<div style="left:858.13px;top:141px;width:8.8px;height:2px;background:#6e6e72"></div>
<div style="left:858.13px;top:158px;width:8.8px;height:2px;background:#6e6e72"></div>
<div style="left:858.13px;top:185px;width:8.8px;height:2px;background:#6e6e72"></div>
<div style="left:858.13px;top:205px;width:8.8px;height:2px;background:#6e6e72"></div>
<div style="left:858.13px;top:216px;width:8.8px;height:2px;background:#6e6e72"></div>
<div style="left:868.00px;top:51px;width:21px;height:3.5px;background:#5aa47a;border-radius:1px"></div>
<div class="t" style="left:863.5px;top:60.1px;width:30px;text-align:center;font-size:12px;line-height:14.4px;color:#8c8c8c;font-weight:400;">27</div>
<div style="left:873.35px;top:89.7px;width:10.30px;height:136px;background:#2b2b2f;border:1px solid #111113;box-sizing:border-box"></div>
<div style="left:874.35px;top:148.0px;width:8.30px;height:3.5px;background:#f2e55c repeating-linear-gradient(0deg,rgba(0,0,0,.13) 0 1px,transparent 1px 2.5px)"></div>
<div style="left:874.35px;top:151.5px;width:8.30px;height:73.5px;background:#1ec81e repeating-linear-gradient(0deg,rgba(0,0,0,.13) 0 1px,transparent 1px 2.5px)"></div>
<div style="left:874.35px;top:142px;width:8.30px;height:2px;background:#f2e55c"></div>
<div style="left:890.38px;top:90px;width:8.8px;height:2px;background:#6e6e72"></div>
<div style="left:890.38px;top:107px;width:8.8px;height:2px;background:#6e6e72"></div>
<div style="left:890.38px;top:124px;width:8.8px;height:2px;background:#6e6e72"></div>
<div style="left:890.38px;top:141px;width:8.8px;height:2px;background:#6e6e72"></div>
<div style="left:890.38px;top:158px;width:8.8px;height:2px;background:#6e6e72"></div>
<div style="left:890.38px;top:185px;width:8.8px;height:2px;background:#6e6e72"></div>
<div style="left:890.38px;top:205px;width:8.8px;height:2px;background:#6e6e72"></div>
<div style="left:890.38px;top:216px;width:8.8px;height:2px;background:#6e6e72"></div>
<div style="left:900.55px;top:51px;width:21px;height:3.5px;background:#5aa47a;border-radius:1px"></div>
<div class="t" style="left:896.1px;top:60.1px;width:30px;text-align:center;font-size:12px;line-height:14.4px;color:#8c8c8c;font-weight:400;">28</div>
<div style="left:905.30px;top:89.7px;width:11.50px;height:136px;background:#2b2b2f;border:1px solid #111113;box-sizing:border-box"></div>
<div style="left:910.55px;top:89.7px;width:1px;height:136px;background:#111113"></div>
<div style="left:922.93px;top:90px;width:8.8px;height:2px;background:#6e6e72"></div>
<div style="left:922.93px;top:107px;width:8.8px;height:2px;background:#6e6e72"></div>
<div style="left:922.93px;top:124px;width:8.8px;height:2px;background:#6e6e72"></div>
<div style="left:922.93px;top:141px;width:8.8px;height:2px;background:#6e6e72"></div>
<div style="left:922.93px;top:158px;width:8.8px;height:2px;background:#6e6e72"></div>
<div style="left:922.93px;top:185px;width:8.8px;height:2px;background:#6e6e72"></div>
<div style="left:922.93px;top:205px;width:8.8px;height:2px;background:#6e6e72"></div>
<div style="left:922.93px;top:216px;width:8.8px;height:2px;background:#6e6e72"></div>
<div style="left:933.10px;top:51px;width:21px;height:3.5px;background:#5aa47a;border-radius:1px"></div>
<div class="t" style="left:928.6px;top:60.1px;width:30px;text-align:center;font-size:12px;line-height:14.4px;color:#8c8c8c;font-weight:400;">29</div>
<div style="left:938.45px;top:89.7px;width:10.30px;height:136px;background:#2b2b2f;border:1px solid #111113;box-sizing:border-box"></div>
<div style="left:955.18px;top:90px;width:8.8px;height:2px;background:#6e6e72"></div>
<div style="left:955.18px;top:107px;width:8.8px;height:2px;background:#6e6e72"></div>
<div style="left:955.18px;top:124px;width:8.8px;height:2px;background:#6e6e72"></div>
<div style="left:955.18px;top:141px;width:8.8px;height:2px;background:#6e6e72"></div>
<div style="left:955.18px;top:158px;width:8.8px;height:2px;background:#6e6e72"></div>
<div style="left:955.18px;top:185px;width:8.8px;height:2px;background:#6e6e72"></div>
<div style="left:955.18px;top:205px;width:8.8px;height:2px;background:#6e6e72"></div>
<div style="left:955.18px;top:216px;width:8.8px;height:2px;background:#6e6e72"></div>
<div style="left:965.05px;top:51px;width:21px;height:3.5px;background:#5aa47a;border-radius:1px"></div>
<div class="t" style="left:960.6px;top:60.1px;width:30px;text-align:center;font-size:12px;line-height:14.4px;color:#8c8c8c;font-weight:400;">30</div>
<div style="left:970.40px;top:89.7px;width:10.30px;height:136px;background:#2b2b2f;border:1px solid #111113;box-sizing:border-box"></div>
<div style="left:987.13px;top:90px;width:8.8px;height:2px;background:#6e6e72"></div>
<div style="left:987.13px;top:107px;width:8.8px;height:2px;background:#6e6e72"></div>
<div style="left:987.13px;top:124px;width:8.8px;height:2px;background:#6e6e72"></div>
<div style="left:987.13px;top:141px;width:8.8px;height:2px;background:#6e6e72"></div>
<div style="left:987.13px;top:158px;width:8.8px;height:2px;background:#6e6e72"></div>
<div style="left:987.13px;top:185px;width:8.8px;height:2px;background:#6e6e72"></div>
<div style="left:987.13px;top:205px;width:8.8px;height:2px;background:#6e6e72"></div>
<div style="left:987.13px;top:216px;width:8.8px;height:2px;background:#6e6e72"></div>
<div style="left:997.00px;top:51px;width:21px;height:3.5px;background:#5aa47a;border-radius:1px"></div>
<div class="t" style="left:992.5px;top:60.1px;width:30px;text-align:center;font-size:12px;line-height:14.4px;color:#8c8c8c;font-weight:400;">31</div>
<div style="left:1002.35px;top:89.7px;width:10.30px;height:136px;background:#2b2b2f;border:1px solid #111113;box-sizing:border-box"></div>
<div style="left:1019.08px;top:90px;width:8.8px;height:2px;background:#6e6e72"></div>
<div style="left:1019.08px;top:107px;width:8.8px;height:2px;background:#6e6e72"></div>
<div style="left:1019.08px;top:124px;width:8.8px;height:2px;background:#6e6e72"></div>
<div style="left:1019.08px;top:141px;width:8.8px;height:2px;background:#6e6e72"></div>
<div style="left:1019.08px;top:158px;width:8.8px;height:2px;background:#6e6e72"></div>
<div style="left:1019.08px;top:185px;width:8.8px;height:2px;background:#6e6e72"></div>
<div style="left:1019.08px;top:205px;width:8.8px;height:2px;background:#6e6e72"></div>
<div style="left:1019.08px;top:216px;width:8.8px;height:2px;background:#6e6e72"></div>
<div style="left:1028.95px;top:51px;width:21px;height:3.5px;background:#5aa47a;border-radius:1px"></div>
<div class="t" style="left:1024.5px;top:60.1px;width:30px;text-align:center;font-size:12px;line-height:14.4px;color:#8c8c8c;font-weight:400;">32</div>
<div style="left:1034.30px;top:89.7px;width:10.30px;height:136px;background:#2b2b2f;border:1px solid #111113;box-sizing:border-box"></div>
<div style="left:1051.33px;top:90px;width:8.8px;height:2px;background:#6e6e72"></div>
<div style="left:1051.33px;top:107px;width:8.8px;height:2px;background:#6e6e72"></div>
<div style="left:1051.33px;top:124px;width:8.8px;height:2px;background:#6e6e72"></div>
<div style="left:1051.33px;top:141px;width:8.8px;height:2px;background:#6e6e72"></div>
<div style="left:1051.33px;top:158px;width:8.8px;height:2px;background:#6e6e72"></div>
<div style="left:1051.33px;top:185px;width:8.8px;height:2px;background:#6e6e72"></div>
<div style="left:1051.33px;top:205px;width:8.8px;height:2px;background:#6e6e72"></div>
<div style="left:1051.33px;top:216px;width:8.8px;height:2px;background:#6e6e72"></div>
<div style="left:1061.50px;top:51px;width:21px;height:3.5px;background:#5aa47a;border-radius:1px"></div>
<div class="t" style="left:1057.0px;top:60.1px;width:30px;text-align:center;font-size:12px;line-height:14.4px;color:#8c8c8c;font-weight:400;">33</div>
<div style="left:1066.25px;top:89.7px;width:11.50px;height:136px;background:#2b2b2f;border:1px solid #111113;box-sizing:border-box"></div>
<div style="left:1071.50px;top:89.7px;width:1px;height:136px;background:#111113"></div>
<div style="left:1083.88px;top:90px;width:8.8px;height:2px;background:#6e6e72"></div>
<div style="left:1083.88px;top:107px;width:8.8px;height:2px;background:#6e6e72"></div>
<div style="left:1083.88px;top:124px;width:8.8px;height:2px;background:#6e6e72"></div>
<div style="left:1083.88px;top:141px;width:8.8px;height:2px;background:#6e6e72"></div>
<div style="left:1083.88px;top:158px;width:8.8px;height:2px;background:#6e6e72"></div>
<div style="left:1083.88px;top:185px;width:8.8px;height:2px;background:#6e6e72"></div>
<div style="left:1083.88px;top:205px;width:8.8px;height:2px;background:#6e6e72"></div>
<div style="left:1083.88px;top:216px;width:8.8px;height:2px;background:#6e6e72"></div>
<div style="left:1094.05px;top:51px;width:21px;height:3.5px;background:#5aa47a;border-radius:1px"></div>
<div class="t" style="left:1089.6px;top:60.1px;width:30px;text-align:center;font-size:12px;line-height:14.4px;color:#8c8c8c;font-weight:400;">34</div>
<div style="left:1099.40px;top:89.7px;width:10.30px;height:136px;background:#2b2b2f;border:1px solid #111113;box-sizing:border-box"></div>
<div style="left:1116.13px;top:90px;width:8.8px;height:2px;background:#6e6e72"></div>
<div style="left:1116.13px;top:107px;width:8.8px;height:2px;background:#6e6e72"></div>
<div style="left:1116.13px;top:124px;width:8.8px;height:2px;background:#6e6e72"></div>
<div style="left:1116.13px;top:141px;width:8.8px;height:2px;background:#6e6e72"></div>
<div style="left:1116.13px;top:158px;width:8.8px;height:2px;background:#6e6e72"></div>
<div style="left:1116.13px;top:185px;width:8.8px;height:2px;background:#6e6e72"></div>
<div style="left:1116.13px;top:205px;width:8.8px;height:2px;background:#6e6e72"></div>
<div style="left:1116.13px;top:216px;width:8.8px;height:2px;background:#6e6e72"></div>
<div style="left:1126.00px;top:51px;width:21px;height:3.5px;background:#5aa47a;border-radius:1px"></div>
<div class="t" style="left:1121.5px;top:60.1px;width:30px;text-align:center;font-size:12px;line-height:14.4px;color:#8c8c8c;font-weight:400;">35</div>
<div style="left:1131.35px;top:89.7px;width:10.30px;height:136px;background:#2b2b2f;border:1px solid #111113;box-sizing:border-box"></div>
<div style="left:1132.35px;top:139.4px;width:8.30px;height:12.1px;background:#f2e55c repeating-linear-gradient(0deg,rgba(0,0,0,.13) 0 1px,transparent 1px 2.5px)"></div>
<div style="left:1132.35px;top:151.5px;width:8.30px;height:73.5px;background:#1ec81e repeating-linear-gradient(0deg,rgba(0,0,0,.13) 0 1px,transparent 1px 2.5px)"></div>
<div style="left:1148.08px;top:90px;width:8.8px;height:2px;background:#6e6e72"></div>
<div style="left:1148.08px;top:107px;width:8.8px;height:2px;background:#6e6e72"></div>
<div style="left:1148.08px;top:124px;width:8.8px;height:2px;background:#6e6e72"></div>
<div style="left:1148.08px;top:141px;width:8.8px;height:2px;background:#6e6e72"></div>
<div style="left:1148.08px;top:158px;width:8.8px;height:2px;background:#6e6e72"></div>
<div style="left:1148.08px;top:185px;width:8.8px;height:2px;background:#6e6e72"></div>
<div style="left:1148.08px;top:205px;width:8.8px;height:2px;background:#6e6e72"></div>
<div style="left:1148.08px;top:216px;width:8.8px;height:2px;background:#6e6e72"></div>
<div style="left:1157.95px;top:51px;width:21px;height:3.5px;background:#5aa47a;border-radius:1px"></div>
<div class="t" style="left:1153.5px;top:60.1px;width:30px;text-align:center;font-size:12px;line-height:14.4px;color:#8c8c8c;font-weight:400;">36</div>
<div style="left:1163.30px;top:89.7px;width:10.30px;height:136px;background:#2b2b2f;border:1px solid #111113;box-sizing:border-box"></div>
<div style="left:1180.03px;top:90px;width:8.8px;height:2px;background:#6e6e72"></div>
<div style="left:1180.03px;top:107px;width:8.8px;height:2px;background:#6e6e72"></div>
<div style="left:1180.03px;top:124px;width:8.8px;height:2px;background:#6e6e72"></div>
<div style="left:1180.03px;top:141px;width:8.8px;height:2px;background:#6e6e72"></div>
<div style="left:1180.03px;top:158px;width:8.8px;height:2px;background:#6e6e72"></div>
<div style="left:1180.03px;top:185px;width:8.8px;height:2px;background:#6e6e72"></div>
<div style="left:1180.03px;top:205px;width:8.8px;height:2px;background:#6e6e72"></div>
<div style="left:1180.03px;top:216px;width:8.8px;height:2px;background:#6e6e72"></div>
<div style="left:1189.90px;top:51px;width:21px;height:3.5px;background:#5aa47a;border-radius:1px"></div>
<div class="t" style="left:1185.4px;top:60.1px;width:30px;text-align:center;font-size:12px;line-height:14.4px;color:#8c8c8c;font-weight:400;">37</div>
<div style="left:1195.25px;top:89.7px;width:10.30px;height:136px;background:#2b2b2f;border:1px solid #111113;box-sizing:border-box"></div>
<div style="left:1211.98px;top:90px;width:8.8px;height:2px;background:#6e6e72"></div>
<div style="left:1211.98px;top:107px;width:8.8px;height:2px;background:#6e6e72"></div>
<div style="left:1211.98px;top:124px;width:8.8px;height:2px;background:#6e6e72"></div>
<div style="left:1211.98px;top:141px;width:8.8px;height:2px;background:#6e6e72"></div>
<div style="left:1211.98px;top:158px;width:8.8px;height:2px;background:#6e6e72"></div>
<div style="left:1211.98px;top:185px;width:8.8px;height:2px;background:#6e6e72"></div>
<div style="left:1211.98px;top:205px;width:8.8px;height:2px;background:#6e6e72"></div>
<div style="left:1211.98px;top:216px;width:8.8px;height:2px;background:#6e6e72"></div>
<div style="left:1221.85px;top:51px;width:21px;height:3.5px;background:#5aa47a;border-radius:1px"></div>
<div class="t" style="left:1217.4px;top:60.1px;width:30px;text-align:center;font-size:12px;line-height:14.4px;color:#8c8c8c;font-weight:400;">38</div>
<div style="left:1227.20px;top:89.7px;width:10.30px;height:136px;background:#2b2b2f;border:1px solid #111113;box-sizing:border-box"></div>
<div style="left:1228.20px;top:147.0px;width:8.30px;height:4.5px;background:#f2e55c repeating-linear-gradient(0deg,rgba(0,0,0,.13) 0 1px,transparent 1px 2.5px)"></div>
<div style="left:1228.20px;top:151.5px;width:8.30px;height:73.5px;background:#1ec81e repeating-linear-gradient(0deg,rgba(0,0,0,.13) 0 1px,transparent 1px 2.5px)"></div>
<div style="left:1243.93px;top:90px;width:8.8px;height:2px;background:#6e6e72"></div>
<div style="left:1243.93px;top:107px;width:8.8px;height:2px;background:#6e6e72"></div>
<div style="left:1243.93px;top:124px;width:8.8px;height:2px;background:#6e6e72"></div>
<div style="left:1243.93px;top:141px;width:8.8px;height:2px;background:#6e6e72"></div>
<div style="left:1243.93px;top:158px;width:8.8px;height:2px;background:#6e6e72"></div>
<div style="left:1243.93px;top:185px;width:8.8px;height:2px;background:#6e6e72"></div>
<div style="left:1243.93px;top:205px;width:8.8px;height:2px;background:#6e6e72"></div>
<div style="left:1243.93px;top:216px;width:8.8px;height:2px;background:#6e6e72"></div>
<div style="left:1253.80px;top:51px;width:21px;height:3.5px;background:#5aa47a;border-radius:1px"></div>
<div class="t" style="left:1249.3px;top:60.1px;width:30px;text-align:center;font-size:12px;line-height:14.4px;color:#8c8c8c;font-weight:400;">39</div>
<div style="left:1259.15px;top:89.7px;width:10.30px;height:136px;background:#2b2b2f;border:1px solid #111113;box-sizing:border-box"></div>
<div style="left:1260.15px;top:143.5px;width:8.30px;height:8.0px;background:#f2e55c repeating-linear-gradient(0deg,rgba(0,0,0,.13) 0 1px,transparent 1px 2.5px)"></div>
<div style="left:1260.15px;top:151.5px;width:8.30px;height:73.5px;background:#1ec81e repeating-linear-gradient(0deg,rgba(0,0,0,.13) 0 1px,transparent 1px 2.5px)"></div>
<div style="left:0px;top:240px;width:1275px;height:12px;background:#313236"></div>
<div style="left:2px;top:242px;width:1000px;height:8px;background:#5c6065;border-radius:4px"></div>
<div style="left:0px;top:252px;width:1275px;height:1px;background:#18181a"></div>
<div style="left:1274px;top:38px;width:1px;height:214px;background:#18181a"></div>
<div style="left:1275px;top:38px;width:70px;height:214px;background:#28282c"></div>
<div style="left:1297px;top:51px;width:32px;height:4px;background:#3b82a8;border-radius:1px"></div>
<div class="t" style="left:1283.0px;top:59.5px;width:60px;text-align:center;font-size:12.5px;line-height:15.0px;color:#e8e8e8;font-weight:400;">Bus 1</div>
<div class="t" style="left:1262.0px;top:83.1px;width:30px;text-align:right;font-size:11px;line-height:13.2px;color:#8a8a8a;font-weight:400;">0</div>
<div style="left:1295px;top:90px;width:3px;height:1px;background:#8a8a8a"></div>
<div class="t" style="left:1262.0px;top:100.3px;width:30px;text-align:right;font-size:11px;line-height:13.2px;color:#8a8a8a;font-weight:400;">-5</div>
<div style="left:1295px;top:107px;width:3px;height:1px;background:#8a8a8a"></div>
<div class="t" style="left:1262.0px;top:117.4px;width:30px;text-align:right;font-size:11px;line-height:13.2px;color:#8a8a8a;font-weight:400;">-10</div>
<div style="left:1295px;top:124px;width:3px;height:1px;background:#8a8a8a"></div>
<div class="t" style="left:1262.0px;top:134.4px;width:30px;text-align:right;font-size:11px;line-height:13.2px;color:#8a8a8a;font-weight:400;">-15</div>
<div style="left:1295px;top:141px;width:3px;height:1px;background:#8a8a8a"></div>
<div class="t" style="left:1262.0px;top:151.4px;width:30px;text-align:right;font-size:11px;line-height:13.2px;color:#8a8a8a;font-weight:400;">-20</div>
<div style="left:1295px;top:158px;width:3px;height:1px;background:#8a8a8a"></div>
<div class="t" style="left:1262.0px;top:178.1px;width:30px;text-align:right;font-size:11px;line-height:13.2px;color:#8a8a8a;font-weight:400;">-30</div>
<div style="left:1295px;top:185px;width:3px;height:1px;background:#8a8a8a"></div>
<div class="t" style="left:1262.0px;top:198.4px;width:30px;text-align:right;font-size:11px;line-height:13.2px;color:#8a8a8a;font-weight:400;">-40</div>
<div style="left:1295px;top:205px;width:3px;height:1px;background:#8a8a8a"></div>
<div class="t" style="left:1262.0px;top:209.0px;width:30px;text-align:right;font-size:11px;line-height:13.2px;color:#8a8a8a;font-weight:400;">-50</div>
<div style="left:1295px;top:216px;width:3px;height:1px;background:#8a8a8a"></div>
<div style="left:1302px;top:90px;width:21px;height:136px;background:#2b2b2f;border:1px solid #121214;box-sizing:border-box"></div>
<div style="left:1303px;top:107px;width:9px;height:1px;background:#c8503a"></div>
<div style="left:1303px;top:108px;width:9px;height:17px;background:#f0e070 repeating-linear-gradient(0deg,rgba(0,0,0,.13) 0 1px,transparent 1px 2.5px)"></div>
<div style="left:1303px;top:125px;width:9px;height:100px;background:#1ec81e repeating-linear-gradient(0deg,rgba(0,0,0,.13) 0 1px,transparent 1px 2.5px)"></div>
<div style="left:1313px;top:107px;width:9px;height:1px;background:#c8503a"></div>
<div style="left:1313px;top:108px;width:9px;height:17px;background:#f0e070 repeating-linear-gradient(0deg,rgba(0,0,0,.13) 0 1px,transparent 1px 2.5px)"></div>
<div style="left:1313px;top:125px;width:9px;height:100px;background:#1ec81e repeating-linear-gradient(0deg,rgba(0,0,0,.13) 0 1px,transparent 1px 2.5px)"></div>
<div style="left:1312px;top:90px;width:1px;height:136px;background:#121214"></div>
<div style="left:1275px;top:239px;width:70px;height:13px;background:#2c2c30"></div>
<div style="left:1275px;top:239px;width:70px;height:1px;background:#1a1a1c"></div>
<div style="left:1345px;top:38px;width:1px;height:214px;background:#18181a"></div>
<div style="left:1346px;top:38px;width:115px;height:214px;background:#28282c"></div>
<div style="left:1346px;top:62px;width:115px;height:1px;background:#18181a"></div>
<div class="t" style="left:1356.6px;top:43.7px;font-size:12.2px;line-height:14.6px;color:#e8e8e8;font-weight:400;">Control Room</div>
<div class="t" style="left:1365px;top:68.5px;font-size:12.5px;line-height:15.0px;color:#e8e8e8;font-weight:400;">TP</div>
<div class="t" style="left:1389px;top:68.5px;font-size:12.5px;line-height:15.0px;color:#e05050;font-weight:400;">+2.5</div>
<div class="t" style="left:1351.0px;top:83.9px;width:30px;text-align:right;font-size:11px;line-height:13.2px;color:#8a8a8a;font-weight:400;">0</div>
<div style="left:1385px;top:90px;width:3px;height:1px;background:#8a8a8a"></div>
<div style="left:1417px;top:90px;width:2px;height:1px;background:#8a8a8a"></div>
<div class="t" style="left:1351.0px;top:102.0px;width:30px;text-align:right;font-size:11px;line-height:13.2px;color:#8a8a8a;font-weight:400;">-5</div>
<div style="left:1385px;top:109px;width:3px;height:1px;background:#8a8a8a"></div>
<div style="left:1417px;top:109px;width:2px;height:1px;background:#8a8a8a"></div>
<div class="t" style="left:1351.0px;top:120.0px;width:30px;text-align:right;font-size:11px;line-height:13.2px;color:#8a8a8a;font-weight:400;">-10</div>
<div style="left:1385px;top:127px;width:3px;height:1px;background:#8a8a8a"></div>
<div style="left:1417px;top:127px;width:2px;height:1px;background:#8a8a8a"></div>
<div class="t" style="left:1351.0px;top:138.0px;width:30px;text-align:right;font-size:11px;line-height:13.2px;color:#8a8a8a;font-weight:400;">-15</div>
<div style="left:1385px;top:145px;width:3px;height:1px;background:#8a8a8a"></div>
<div style="left:1417px;top:145px;width:2px;height:1px;background:#8a8a8a"></div>
<div class="t" style="left:1351.0px;top:156.2px;width:30px;text-align:right;font-size:11px;line-height:13.2px;color:#8a8a8a;font-weight:400;">-20</div>
<div style="left:1385px;top:163px;width:3px;height:1px;background:#8a8a8a"></div>
<div style="left:1417px;top:163px;width:2px;height:1px;background:#8a8a8a"></div>
<div class="t" style="left:1351.0px;top:186.0px;width:30px;text-align:right;font-size:11px;line-height:13.2px;color:#8a8a8a;font-weight:400;">-30</div>
<div style="left:1385px;top:193px;width:3px;height:1px;background:#8a8a8a"></div>
<div style="left:1417px;top:193px;width:2px;height:1px;background:#8a8a8a"></div>
<div class="t" style="left:1351.0px;top:207.4px;width:30px;text-align:right;font-size:11px;line-height:13.2px;color:#8a8a8a;font-weight:400;">-40</div>
<div style="left:1385px;top:214px;width:3px;height:1px;background:#8a8a8a"></div>
<div style="left:1417px;top:214px;width:2px;height:1px;background:#8a8a8a"></div>
<div class="t" style="left:1351.0px;top:218.4px;width:30px;text-align:right;font-size:11px;line-height:13.2px;color:#8a8a8a;font-weight:400;">-50</div>
<div style="left:1385px;top:225px;width:3px;height:1px;background:#8a8a8a"></div>
<div style="left:1417px;top:225px;width:2px;height:1px;background:#8a8a8a"></div>
<div style="left:1393px;top:91px;width:20px;height:146px;background:#2b2b2f;border:1px solid #121214;box-sizing:border-box"></div>
<div style="left:1394px;top:110px;width:8px;height:126px;background:#c39d36 repeating-linear-gradient(0deg,rgba(0,0,0,.13) 0 1px,transparent 1px 2.5px)"></div>
<div style="left:1403px;top:110px;width:9px;height:126px;background:#c39d36 repeating-linear-gradient(0deg,rgba(0,0,0,.13) 0 1px,transparent 1px 2.5px)"></div>
<div style="left:1402px;top:91px;width:1px;height:146px;background:#121214"></div>
<div style="left:1460px;top:38px;width:1px;height:214px;background:#18181a"></div>
<div style="left:1461px;top:38px;width:207px;height:214px;background:#28282c"></div>
<div style="left:1461px;top:62px;width:207px;height:1px;background:#18181a"></div>
<div class="t" style="left:1470px;top:42.7px;font-size:12.2px;line-height:14.6px;color:#e8e8e8;font-weight:400;">Loudness</div>
<div class="t" style="left:1551px;top:42.9px;font-size:11.8px;line-height:14.2px;color:#9a9a9a;font-weight:400;">BS.1770-1 (LU)</div>
<div style="left:1634px;top:38px;width:1px;height:24px;background:#18181a"></div>
<div style="left:1641.0px;top:48px;width:4px;height:4px;background:#9a9a9a;border-radius:50%"></div>
<div style="left:1647.5px;top:48px;width:4px;height:4px;background:#9a9a9a;border-radius:50%"></div>
<div style="left:1654.0px;top:48px;width:4px;height:4px;background:#9a9a9a;border-radius:50%"></div>
<div class="t" style="left:1480.0px;top:68.5px;width:30px;text-align:center;font-size:12.5px;line-height:15.0px;color:#e8e8e8;font-weight:400;">M</div>
<div class="t" style="left:1538.0px;top:68.5px;width:50px;text-align:center;font-size:12.5px;line-height:15.0px;color:#5b9bff;font-weight:400;">+17.3</div>
<div style="left:1487px;top:90px;width:20px;height:116px;background:#2b2b2f;border:1px solid #121214;box-sizing:border-box"></div>
<div style="left:1488px;top:107.5px;width:8px;height:22px;background:#e8d040"></div>
<div style="left:1497px;top:107.5px;width:9px;height:22px;background:#e8d040"></div>
<div style="left:1488px;top:129px;width:8px;height:76px;background:#6aa0f0"></div>
<div style="left:1497px;top:129px;width:9px;height:76px;background:#6aa0f0"></div>
<div style="left:1496px;top:90px;width:1px;height:116px;background:#121214"></div>
<div style="left:1558px;top:91px;width:13px;height:115px;background:#2b2b2f;border:1px solid #121214;box-sizing:border-box"></div>
<div style="left:1559px;top:95px;width:11px;height:110px;background:#6aa0f0"></div>
<div class="t" style="left:1510.0px;top:83.4px;width:30px;text-align:right;font-size:11px;line-height:13.2px;color:#8a8a8a;font-weight:400;">+9</div>
<div class="t" style="left:1510.0px;top:122.4px;width:30px;text-align:right;font-size:11px;line-height:13.2px;color:#8a8a8a;font-weight:400;">0</div>
<div class="t" style="left:1510.0px;top:160.4px;width:30px;text-align:right;font-size:11px;line-height:13.2px;color:#8a8a8a;font-weight:400;">-9</div>
<div class="t" style="left:1510.0px;top:198.4px;width:30px;text-align:right;font-size:11px;line-height:13.2px;color:#8a8a8a;font-weight:400;">-18</div>
<div style="left:1477px;top:91px;width:2px;height:1.2px;background:#7a7a7a"></div>
<div style="left:1512px;top:91px;width:2px;height:1.2px;background:#7a7a7a"></div>
<div style="left:1548px;top:91px;width:2px;height:1.2px;background:#7a7a7a"></div>
<div style="left:1477px;top:104px;width:2px;height:1.2px;background:#7a7a7a"></div>
<div style="left:1512px;top:104px;width:2px;height:1.2px;background:#7a7a7a"></div>
<div style="left:1548px;top:104px;width:2px;height:1.2px;background:#7a7a7a"></div>
<div style="left:1477px;top:117px;width:2px;height:1.2px;background:#7a7a7a"></div>
<div style="left:1512px;top:117px;width:2px;height:1.2px;background:#7a7a7a"></div>
<div style="left:1548px;top:117px;width:2px;height:1.2px;background:#7a7a7a"></div>
<div style="left:1477px;top:130px;width:2px;height:1.2px;background:#d0d0d0"></div>
<div style="left:1512px;top:130px;width:2px;height:1.2px;background:#d0d0d0"></div>
<div style="left:1548px;top:130px;width:2px;height:1.2px;background:#d0d0d0"></div>
<div style="left:1477px;top:142px;width:2px;height:1.2px;background:#7a7a7a"></div>
<div style="left:1512px;top:142px;width:2px;height:1.2px;background:#7a7a7a"></div>
<div style="left:1548px;top:142px;width:2px;height:1.2px;background:#7a7a7a"></div>
<div style="left:1477px;top:155px;width:2px;height:1.2px;background:#7a7a7a"></div>
<div style="left:1512px;top:155px;width:2px;height:1.2px;background:#7a7a7a"></div>
<div style="left:1548px;top:155px;width:2px;height:1.2px;background:#7a7a7a"></div>
<div style="left:1477px;top:168px;width:2px;height:1.2px;background:#7a7a7a"></div>
<div style="left:1512px;top:168px;width:2px;height:1.2px;background:#7a7a7a"></div>
<div style="left:1548px;top:168px;width:2px;height:1.2px;background:#7a7a7a"></div>
<div style="left:1477px;top:181px;width:2px;height:1.2px;background:#7a7a7a"></div>
<div style="left:1512px;top:181px;width:2px;height:1.2px;background:#7a7a7a"></div>
<div style="left:1548px;top:181px;width:2px;height:1.2px;background:#7a7a7a"></div>
<div style="left:1477px;top:193px;width:2px;height:1.2px;background:#7a7a7a"></div>
<div style="left:1512px;top:193px;width:2px;height:1.2px;background:#7a7a7a"></div>
<div style="left:1548px;top:193px;width:2px;height:1.2px;background:#7a7a7a"></div>
<div style="left:1477px;top:206px;width:2px;height:1.2px;background:#7a7a7a"></div>
<div style="left:1512px;top:206px;width:2px;height:1.2px;background:#7a7a7a"></div>
<div style="left:1548px;top:206px;width:2px;height:1.2px;background:#7a7a7a"></div>
<div style="left:1472px;top:212px;width:120px;height:1px;background:#444448"></div>
<div style="left:1470px;top:220px;width:56px;height:23px;border:1px solid #4a4a4e;border-radius:11px;box-sizing:border-box"></div>
<div class="t" style="left:1468.0px;top:224.1px;width:60px;text-align:center;font-size:12.3px;line-height:14.8px;color:#a8a8a8;font-weight:400;">Pause</div>
<div style="left:1534px;top:220px;width:57px;height:23px;border:1px solid #4a4a4e;border-radius:11px;box-sizing:border-box"></div>
<div class="t" style="left:1532.5px;top:224.1px;width:60px;text-align:center;font-size:12.3px;line-height:14.8px;color:#a8a8a8;font-weight:400;">Reset</div>
<div class="t" style="left:1601px;top:73.8px;font-size:12px;line-height:14.4px;color:#e6e6e6;font-weight:400;">Short</div>
<div class="t" style="left:1601px;top:89.1px;font-size:11.5px;line-height:13.8px;color:#e05050;font-weight:400;">+7.6</div>
<div class="t" style="left:1601px;top:117.8px;font-size:12px;line-height:14.4px;color:#e6e6e6;font-weight:400;">Short Max</div>
<div class="t" style="left:1601px;top:133.1px;font-size:11.5px;line-height:13.8px;color:#e05050;font-weight:400;">+14.8</div>
<div class="t" style="left:1601px;top:160.8px;font-size:12px;line-height:14.4px;color:#e6e6e6;font-weight:400;">Range</div>
<div class="t" style="left:1601px;top:176.1px;font-size:11.5px;line-height:13.8px;color:#5b9bff;font-weight:400;">10.5</div>
<div class="t" style="left:1601px;top:204.8px;font-size:12px;line-height:14.4px;color:#e6e6e6;font-weight:400;">Integrated</div>
<div class="t" style="left:1601px;top:220.1px;font-size:11.5px;line-height:13.8px;color:#e05050;font-weight:400;">+11.0</div>
<div style="left:1667px;top:38px;width:1px;height:214px;background:#111113"></div>
<svg style="position:absolute;left:1668px;top:38px;overflow:hidden" width="380" height="214" viewBox="0 0 380 214"><defs><linearGradient id="vbg" x1="0" y1="0" x2="0" y2="1"><stop offset="0" stop-color="#a89cbc"/><stop offset="0.5" stop-color="#b4a8c6"/><stop offset="1" stop-color="#a898bc"/></linearGradient><radialGradient id="glow" cx="0.5" cy="0.5" r="0.5"><stop offset="0" stop-color="#ffffff" stop-opacity="1"/><stop offset="0.4" stop-color="#cfe0ff" stop-opacity="0.8"/><stop offset="1" stop-color="#6a88d0" stop-opacity="0"/></radialGradient><linearGradient id="sax" x1="0" y1="0" x2="1" y2="1"><stop offset="0" stop-color="#6a5028"/><stop offset="0.5" stop-color="#b89858"/><stop offset="1" stop-color="#5a4020"/></linearGradient><linearGradient id="wat" x1="0" y1="0" x2="0" y2="1"><stop offset="0" stop-color="#9a8cb4"/><stop offset="1" stop-color="#b4a6c8"/></linearGradient></defs><rect width="380" height="214" fill="url(#vbg)"/><rect x="0" y="0" width="11" height="165" fill="#6e5052"/><rect x="0" y="0" width="14" height="4" fill="#5a4044"/><path d="M12 8 Q70 40 140 80 M12 14 Q70 48 140 90 M12 24 Q60 60 135 100" stroke="#d8d0e0" stroke-width="0.8" fill="none" opacity="0.7"/><path d="M16 10.0 V70" stroke="#c8c0d4" stroke-width="0.5" opacity="0.5"/><path d="M24 14.5 V70" stroke="#c8c0d4" stroke-width="0.5" opacity="0.5"/><path d="M32 19.0 V70" stroke="#c8c0d4" stroke-width="0.5" opacity="0.5"/><path d="M40 23.5 V70" stroke="#c8c0d4" stroke-width="0.5" opacity="0.5"/><path d="M48 28.0 V70" stroke="#c8c0d4" stroke-width="0.5" opacity="0.5"/><path d="M56 32.5 V70" stroke="#c8c0d4" stroke-width="0.5" opacity="0.5"/><path d="M64 37.0 V70" stroke="#c8c0d4" stroke-width="0.5" opacity="0.5"/><path d="M72 41.5 V70" stroke="#c8c0d4" stroke-width="0.5" opacity="0.5"/><path d="M80 46.0 V70" stroke="#c8c0d4" stroke-width="0.5" opacity="0.5"/><path d="M88 50.5 V70" stroke="#c8c0d4" stroke-width="0.5" opacity="0.5"/><path d="M96 55.0 V70" stroke="#c8c0d4" stroke-width="0.5" opacity="0.5"/><path d="M104 59.5 V70" stroke="#c8c0d4" stroke-width="0.5" opacity="0.5"/><path d="M112 64.0 V70" stroke="#c8c0d4" stroke-width="0.5" opacity="0.5"/><path d="M120 68.5 V70" stroke="#c8c0d4" stroke-width="0.5" opacity="0.5"/><text x="0" y="0" font-family="Liberation Sans" font-weight="400" font-size="79.6" fill="#f6f2fa" opacity="1.0" transform="translate(60 30) scale(0.8 1)">C</text><text x="0" y="0" font-family="Liberation Sans" font-weight="400" font-size="79.6" fill="#f6f2fa" opacity="1.0" transform="translate(121 30) scale(1.0 1)">I</text><text x="0" y="0" font-family="Liberation Sans" font-weight="400" font-size="79.6" fill="#f6f2fa" opacity="1.0" transform="translate(131 30) scale(0.7 1)">T</text><text x="0" y="0" font-family="Liberation Sans" font-weight="400" font-size="79.6" fill="#f6f2fa" opacity="1.0" transform="translate(206 30) scale(0.72 1)">S</text><text x="0" y="0" font-family="Liberation Sans" font-weight="400" font-size="79.6" fill="#f6f2fa" opacity="1.0" transform="translate(249 30) scale(1.0 1)">I</text><text x="0" y="0" font-family="Liberation Sans" font-weight="400" font-size="79.6" fill="#f6f2fa" opacity="1.0" transform="translate(261 30) scale(0.72 1)">D</text><text x="0" y="0" font-family="Liberation Sans" font-weight="400" font-size="79.6" fill="#f6f2fa" opacity="1.0" transform="translate(304 30) scale(0.72 1)">E</text><text x="0" y="0" font-family="Liberation Sans" font-weight="400" font-size="71.3" fill="#e8e2f0" opacity="0.7" transform="translate(104 86) scale(0.72 1)">S</text><text x="0" y="0" font-family="Liberation Sans" font-weight="400" font-size="71.3" fill="#e8e2f0" opacity="0.7" transform="translate(146 86) scale(0.72 1)">H</text><text x="0" y="0" font-family="Liberation Sans" font-weight="400" font-size="71.3" fill="#e8e2f0" opacity="0.7" transform="translate(212 86) scale(0.72 1)">O</text><text x="0" y="0" font-family="Liberation Sans" font-weight="400" font-size="71.3" fill="#e8e2f0" opacity="0.7" transform="translate(250 86) scale(0.66 1)">W</text><text x="52" y="50" font-family="Liberation Serif" font-size="28" fill="#f0ecf4" opacity="0.85">Th</text><path d="M240 162 V95 h14 V70 h18 V55 h20 V80 h14 V48 h22 V60 h12 V45 h14 V70 h10 V80 h12 V50 h14 V162 Z" fill="#4a3a50"/><path d="M240 162 V120 Q300 108 380 118 V162Z" fill="#3e2e3e"/><path d="M8 162 V100 h10 V85 h12 V68 h28 V90 h30 V162Z" fill="#6a5058"/><rect x="10" y="120" width="30" height="40" fill="#9a7060" opacity="0.55"/><circle cx="28" cy="140" r="12" fill="#d0a070" opacity="0.35"/><rect x="37" y="68" width="26" height="10" fill="#8a3a40"/><rect x="262.5" y="121.6" width="1.6" height="1.3" fill="#ffdca0" opacity="0.85"/><rect x="16.6" y="122.5" width="1.6" height="1.3" fill="#ffd080" opacity="0.85"/><rect x="253.7" y="96.0" width="1.6" height="1.3" fill="#ffe8c8" opacity="0.85"/><rect x="299.7" y="141.0" width="1.6" height="1.3" fill="#ffdca0" opacity="0.85"/><rect x="54.1" y="122.5" width="1.6" height="1.3" fill="#ffdca0" opacity="0.85"/><rect x="37.8" y="157.9" width="1.6" height="1.3" fill="#ffdca0" opacity="0.85"/><rect x="19.3" y="107.7" width="1.6" height="1.3" fill="#ffd080" opacity="0.85"/><rect x="284.0" y="139.8" width="1.6" height="1.3" fill="#ffe8c8" opacity="0.85"/><rect x="319.7" y="70.7" width="1.6" height="1.3" fill="#ffdca0" opacity="0.85"/><rect x="250.5" y="56.6" width="1.6" height="1.3" fill="#ffe8c8" opacity="0.85"/><rect x="314.3" y="135.5" width="1.6" height="1.3" fill="#f0b070" opacity="0.85"/><rect x="41.7" y="97.0" width="1.6" height="1.3" fill="#ffe8c8" opacity="0.85"/><rect x="27.1" y="121.7" width="1.6" height="1.3" fill="#ffd080" opacity="0.85"/><rect x="288.7" y="99.4" width="1.6" height="1.3" fill="#ffd080" opacity="0.85"/><rect x="18.3" y="107.6" width="1.6" height="1.3" fill="#ffffff" opacity="0.85"/><rect x="308.5" y="54.3" width="1.6" height="1.3" fill="#ffdca0" opacity="0.85"/><rect x="50.1" y="148.8" width="1.6" height="1.3" fill="#ffffff" opacity="0.85"/><rect x="289.6" y="104.6" width="1.6" height="1.3" fill="#f0b070" opacity="0.85"/><rect x="254.7" y="79.7" width="1.6" height="1.3" fill="#ffdca0" opacity="0.85"/><rect x="337.4" y="121.2" width="1.6" height="1.3" fill="#f0b070" opacity="0.85"/><rect x="294.5" y="123.6" width="1.6" height="1.3" fill="#ffdca0" opacity="0.85"/><rect x="34.9" y="125.0" width="1.6" height="1.3" fill="#f0b070" opacity="0.85"/><rect x="346.5" y="64.2" width="1.6" height="1.3" fill="#ffe8c8" opacity="0.85"/><rect x="366.7" y="104.6" width="1.6" height="1.3" fill="#ffe8c8" opacity="0.85"/><rect x="316.7" y="147.2" width="1.6" height="1.3" fill="#f0b070" opacity="0.85"/><rect x="29.5" y="107.4" width="1.6" height="1.3" fill="#ffffff" opacity="0.85"/><rect x="36.6" y="90.8" width="1.6" height="1.3" fill="#ffdca0" opacity="0.85"/><rect x="273.5" y="75.7" width="1.6" height="1.3" fill="#f0b070" opacity="0.85"/><rect x="22.8" y="95.4" width="1.6" height="1.3" fill="#ffe8c8" opacity="0.85"/><rect x="292.2" y="112.3" width="1.6" height="1.3" fill="#ffe8c8" opacity="0.85"/><rect x="46.1" y="125.6" width="1.6" height="1.3" fill="#ffdca0" opacity="0.85"/><rect x="360.5" y="154.7" width="1.6" height="1.3" fill="#ffd080" opacity="0.85"/><rect x="296.3" y="61.4" width="1.6" height="1.3" fill="#f0b070" opacity="0.85"/><rect x="251.2" y="73.0" width="1.6" height="1.3" fill="#ffe8c8" opacity="0.85"/><rect x="323.7" y="61.3" width="1.6" height="1.3" fill="#ffd080" opacity="0.85"/><rect x="255.8" y="90.0" width="1.6" height="1.3" fill="#ffdca0" opacity="0.85"/><rect x="270.3" y="91.4" width="1.6" height="1.3" fill="#ffffff" opacity="0.85"/><rect x="52.2" y="112.7" width="1.6" height="1.3" fill="#ffdca0" opacity="0.85"/><rect x="79.5" y="111.9" width="1.6" height="1.3" fill="#f0b070" opacity="0.85"/><rect x="261.6" y="132.5" width="1.6" height="1.3" fill="#ffffff" opacity="0.85"/><rect x="336.1" y="106.8" width="1.6" height="1.3" fill="#ffe8c8" opacity="0.85"/><rect x="47.0" y="83.2" width="1.6" height="1.3" fill="#ffd080" opacity="0.85"/><rect x="63.1" y="96.8" width="1.6" height="1.3" fill="#ffdca0" opacity="0.85"/><rect x="28.3" y="103.0" width="1.6" height="1.3" fill="#ffe8c8" opacity="0.85"/><rect x="272.3" y="109.6" width="1.6" height="1.3" fill="#ffd080" opacity="0.85"/><rect x="272.3" y="139.3" width="1.6" height="1.3" fill="#ffe8c8" opacity="0.85"/><rect x="67.3" y="136.6" width="1.6" height="1.3" fill="#ffe8c8" opacity="0.85"/><rect x="309.0" y="130.4" width="1.6" height="1.3" fill="#ffdca0" opacity="0.85"/><rect x="43.1" y="87.4" width="1.6" height="1.3" fill="#ffd080" opacity="0.85"/><rect x="41.3" y="154.3" width="1.6" height="1.3" fill="#ffffff" opacity="0.85"/><rect x="35.5" y="89.8" width="1.6" height="1.3" fill="#ffe8c8" opacity="0.85"/><rect x="287.9" y="103.1" width="1.6" height="1.3" fill="#ffd080" opacity="0.85"/><rect x="43.6" y="128.8" width="1.6" height="1.3" fill="#ffdca0" opacity="0.85"/><rect x="18.4" y="105.0" width="1.6" height="1.3" fill="#ffe8c8" opacity="0.85"/><rect x="266.3" y="136.8" width="1.6" height="1.3" fill="#ffffff" opacity="0.85"/><rect x="370.7" y="129.4" width="1.6" height="1.3" fill="#f0b070" opacity="0.85"/><rect x="370.8" y="129.7" width="1.6" height="1.3" fill="#ffe8c8" opacity="0.85"/><rect x="11.9" y="123.2" width="1.6" height="1.3" fill="#f0b070" opacity="0.85"/><rect x="20.2" y="144.4" width="1.6" height="1.3" fill="#f0b070" opacity="0.85"/><rect x="34.5" y="119.4" width="1.6" height="1.3" fill="#ffe8c8" opacity="0.85"/><rect x="350.7" y="129.9" width="1.6" height="1.3" fill="#ffdca0" opacity="0.85"/><rect x="369.0" y="97.7" width="1.6" height="1.3" fill="#ffe8c8" opacity="0.85"/><rect x="24.8" y="92.7" width="1.6" height="1.3" fill="#ffffff" opacity="0.85"/><rect x="345.9" y="85.9" width="1.6" height="1.3" fill="#ffd080" opacity="0.85"/><rect x="259.8" y="150.1" width="1.6" height="1.3" fill="#ffffff" opacity="0.85"/><rect x="56.4" y="143.4" width="1.6" height="1.3" fill="#ffd080" opacity="0.85"/><rect x="366.8" y="105.2" width="1.6" height="1.3" fill="#ffd080" opacity="0.85"/><rect x="311.4" y="146.0" width="1.6" height="1.3" fill="#ffe8c8" opacity="0.85"/><rect x="64.3" y="83.5" width="1.6" height="1.3" fill="#ffe8c8" opacity="0.85"/><rect x="340.6" y="111.2" width="1.6" height="1.3" fill="#ffffff" opacity="0.85"/><rect x="47.2" y="113.4" width="1.6" height="1.3" fill="#ffdca0" opacity="0.85"/><rect x="14.0" y="87.2" width="1.6" height="1.3" fill="#ffdca0" opacity="0.85"/><rect x="45.5" y="120.6" width="1.6" height="1.3" fill="#ffdca0" opacity="0.85"/><rect x="325.3" y="105.6" width="1.6" height="1.3" fill="#ffd080" opacity="0.85"/><rect x="279.7" y="105.9" width="1.6" height="1.3" fill="#f0b070" opacity="0.85"/><rect x="275.7" y="107.6" width="1.6" height="1.3" fill="#ffffff" opacity="0.85"/><rect x="72.5" y="88.2" width="1.6" height="1.3" fill="#f0b070" opacity="0.85"/><rect x="258.5" y="98.6" width="1.6" height="1.3" fill="#ffdca0" opacity="0.85"/><rect x="40.0" y="89.1" width="1.6" height="1.3" fill="#ffffff" opacity="0.85"/><rect x="72.8" y="83.9" width="1.6" height="1.3" fill="#ffffff" opacity="0.85"/><rect x="362.1" y="156.4" width="1.6" height="1.3" fill="#ffe8c8" opacity="0.85"/><rect x="16.6" y="149.6" width="1.6" height="1.3" fill="#ffe8c8" opacity="0.85"/><rect x="68.3" y="84.5" width="1.6" height="1.3" fill="#f0b070" opacity="0.85"/><rect x="38.3" y="107.9" width="1.6" height="1.3" fill="#ffffff" opacity="0.85"/><rect x="340.2" y="52.1" width="1.6" height="1.3" fill="#ffd080" opacity="0.85"/><rect x="337.6" y="92.3" width="1.6" height="1.3" fill="#ffd080" opacity="0.85"/><rect x="45.9" y="75.8" width="1.6" height="1.3" fill="#ffe8c8" opacity="0.85"/><rect x="17.3" y="93.9" width="1.6" height="1.3" fill="#ffdca0" opacity="0.85"/><rect x="22.7" y="138.0" width="1.6" height="1.3" fill="#f0b070" opacity="0.85"/><rect x="57.3" y="155.1" width="1.6" height="1.3" fill="#f0b070" opacity="0.85"/><rect x="367.0" y="112.8" width="1.6" height="1.3" fill="#ffffff" opacity="0.85"/><rect x="249.8" y="125.7" width="1.6" height="1.3" fill="#f0b070" opacity="0.85"/><rect x="28.8" y="71.5" width="1.6" height="1.3" fill="#ffdca0" opacity="0.85"/><rect x="15.9" y="147.1" width="1.6" height="1.3" fill="#ffdca0" opacity="0.85"/><rect x="258.5" y="51.3" width="1.6" height="1.3" fill="#ffd080" opacity="0.85"/><rect x="366.5" y="118.4" width="1.6" height="1.3" fill="#ffdca0" opacity="0.85"/><rect x="274.4" y="62.0" width="1.6" height="1.3" fill="#ffe8c8" opacity="0.85"/><rect x="266.6" y="152.5" width="1.6" height="1.3" fill="#ffffff" opacity="0.85"/><rect x="270.0" y="99.0" width="1.6" height="1.3" fill="#ffe8c8" opacity="0.85"/><rect x="351.3" y="159.4" width="1.6" height="1.3" fill="#ffdca0" opacity="0.85"/><rect x="341.7" y="110.6" width="1.6" height="1.3" fill="#ffe8c8" opacity="0.85"/><rect x="275.4" y="99.2" width="1.6" height="1.3" fill="#f0b070" opacity="0.85"/><rect x="48.2" y="150.0" width="1.6" height="1.3" fill="#ffd080" opacity="0.85"/><rect x="271.3" y="75.3" width="1.6" height="1.3" fill="#ffe8c8" opacity="0.85"/><rect x="59.5" y="127.2" width="1.6" height="1.3" fill="#f0b070" opacity="0.85"/><rect x="78.7" y="145.3" width="1.6" height="1.3" fill="#ffdca0" opacity="0.85"/><rect x="342.8" y="78.1" width="1.6" height="1.3" fill="#ffe8c8" opacity="0.85"/><rect x="332.5" y="91.9" width="1.6" height="1.3" fill="#ffd080" opacity="0.85"/><rect x="29.7" y="91.8" width="1.6" height="1.3" fill="#ffffff" opacity="0.85"/><rect x="267.2" y="79.6" width="1.6" height="1.3" fill="#ffdca0" opacity="0.85"/><rect x="372.8" y="157.0" width="1.6" height="1.3" fill="#ffd080" opacity="0.85"/><rect x="246.7" y="147.1" width="1.6" height="1.3" fill="#ffe8c8" opacity="0.85"/><rect x="242.1" y="92.0" width="1.6" height="1.3" fill="#f0b070" opacity="0.85"/><rect x="331.2" y="77.3" width="1.6" height="1.3" fill="#ffdca0" opacity="0.85"/><rect x="353.1" y="65.8" width="1.6" height="1.3" fill="#ffd080" opacity="0.85"/><rect x="245.1" y="83.5" width="1.6" height="1.3" fill="#ffe8c8" opacity="0.85"/><rect x="372.2" y="143.9" width="1.6" height="1.3" fill="#ffe8c8" opacity="0.85"/><rect x="60.1" y="149.1" width="1.6" height="1.3" fill="#f0b070" opacity="0.85"/><rect x="60.4" y="114.5" width="1.6" height="1.3" fill="#ffffff" opacity="0.85"/><rect x="55.0" y="73.9" width="1.6" height="1.3" fill="#ffd080" opacity="0.85"/><rect x="61.4" y="143.1" width="1.6" height="1.3" fill="#ffe8c8" opacity="0.85"/><rect x="62.7" y="121.2" width="1.6" height="1.3" fill="#ffdca0" opacity="0.85"/><rect x="50.9" y="150.4" width="1.6" height="1.3" fill="#ffe8c8" opacity="0.85"/><rect x="247.7" y="120.1" width="1.6" height="1.3" fill="#ffdca0" opacity="0.85"/><rect x="303.4" y="55.6" width="1.6" height="1.3" fill="#ffdca0" opacity="0.85"/><rect x="57.6" y="114.0" width="1.6" height="1.3" fill="#ffdca0" opacity="0.85"/><rect x="251.5" y="152.6" width="1.6" height="1.3" fill="#ffd080" opacity="0.85"/><rect x="313.5" y="132.0" width="1.6" height="1.3" fill="#f0b070" opacity="0.85"/><rect x="252.1" y="79.2" width="1.6" height="1.3" fill="#ffe8c8" opacity="0.85"/><rect x="330.4" y="100.6" width="1.6" height="1.3" fill="#f0b070" opacity="0.85"/><rect x="365.8" y="81.6" width="1.6" height="1.3" fill="#ffdca0" opacity="0.85"/><rect x="55.0" y="77.0" width="1.6" height="1.3" fill="#ffe8c8" opacity="0.85"/><rect x="330.6" y="126.2" width="1.6" height="1.3" fill="#ffd080" opacity="0.85"/><rect x="10.9" y="75.5" width="1.6" height="1.3" fill="#ffffff" opacity="0.85"/><rect x="17.0" y="89.6" width="1.6" height="1.3" fill="#f0b070" opacity="0.85"/><rect x="312.2" y="101.1" width="1.6" height="1.3" fill="#f0b070" opacity="0.85"/><rect x="79.5" y="119.4" width="1.6" height="1.3" fill="#ffffff" opacity="0.85"/><rect x="75.5" y="71.6" width="1.6" height="1.3" fill="#f0b070" opacity="0.85"/><rect x="310.9" y="159.4" width="1.6" height="1.3" fill="#ffffff" opacity="0.85"/><rect x="366.7" y="152.4" width="1.6" height="1.3" fill="#ffdca0" opacity="0.85"/><rect x="19.9" y="117.2" width="1.6" height="1.3" fill="#ffffff" opacity="0.85"/><rect x="353.5" y="106.0" width="1.6" height="1.3" fill="#ffdca0" opacity="0.85"/><rect x="26.2" y="150.8" width="1.6" height="1.3" fill="#f0b070" opacity="0.85"/><rect x="263.6" y="154.5" width="1.6" height="1.3" fill="#f0b070" opacity="0.85"/><rect x="340.9" y="95.8" width="1.6" height="1.3" fill="#f0b070" opacity="0.85"/><rect x="356.3" y="50.2" width="1.6" height="1.3" fill="#ffffff" opacity="0.85"/><rect x="18.4" y="153.4" width="1.6" height="1.3" fill="#ffdca0" opacity="0.85"/><rect x="30.3" y="103.5" width="1.6" height="1.3" fill="#f0b070" opacity="0.85"/><rect x="360.3" y="58.4" width="1.6" height="1.3" fill="#f0b070" opacity="0.85"/><rect x="69.8" y="95.3" width="1.6" height="1.3" fill="#ffdca0" opacity="0.85"/><rect x="30.0" y="154.2" width="1.6" height="1.3" fill="#ffe8c8" opacity="0.85"/><rect x="40.5" y="98.4" width="1.6" height="1.3" fill="#ffffff" opacity="0.85"/><rect x="39.9" y="72.6" width="1.6" height="1.3" fill="#f0b070" opacity="0.85"/><rect x="75.8" y="119.4" width="1.6" height="1.3" fill="#ffdca0" opacity="0.85"/><rect x="341.6" y="99.6" width="1.6" height="1.3" fill="#ffe8c8" opacity="0.85"/><rect x="30.0" y="74.4" width="1.6" height="1.3" fill="#ffd080" opacity="0.85"/><rect x="306.2" y="87.8" width="1.6" height="1.3" fill="#ffffff" opacity="0.85"/><rect x="342.5" y="121.8" width="1.6" height="1.3" fill="#f0b070" opacity="0.85"/><rect x="31.1" y="120.2" width="1.6" height="1.3" fill="#f0b070" opacity="0.85"/><rect x="329.5" y="58.3" width="1.6" height="1.3" fill="#ffd080" opacity="0.85"/><rect x="44.8" y="89.8" width="1.6" height="1.3" fill="#ffffff" opacity="0.85"/><rect x="41.5" y="82.6" width="1.6" height="1.3" fill="#ffe8c8" opacity="0.85"/><rect x="265.8" y="111.1" width="1.6" height="1.3" fill="#ffffff" opacity="0.85"/><rect x="277.1" y="112.7" width="1.6" height="1.3" fill="#ffdca0" opacity="0.85"/><rect x="38.9" y="107.2" width="1.6" height="1.3" fill="#ffd080" opacity="0.85"/><rect x="278.8" y="132.7" width="1.6" height="1.3" fill="#f0b070" opacity="0.85"/><rect x="373.6" y="63.8" width="1.6" height="1.3" fill="#ffd080" opacity="0.85"/><rect x="349.5" y="143.3" width="1.6" height="1.3" fill="#ffdca0" opacity="0.85"/><rect x="275.8" y="94.0" width="1.6" height="1.3" fill="#f0b070" opacity="0.85"/><rect x="284.4" y="139.6" width="1.6" height="1.3" fill="#ffdca0" opacity="0.85"/><rect x="299.8" y="134.0" width="1.6" height="1.3" fill="#f0b070" opacity="0.85"/><rect x="44.3" y="76.6" width="1.6" height="1.3" fill="#ffd080" opacity="0.85"/><rect x="78.1" y="92.4" width="1.6" height="1.3" fill="#ffdca0" opacity="0.85"/><rect x="262.7" y="156.9" width="1.6" height="1.3" fill="#ffdca0" opacity="0.85"/><rect x="60.5" y="128.3" width="1.6" height="1.3" fill="#f0b070" opacity="0.85"/><rect x="347.7" y="50.2" width="1.6" height="1.3" fill="#ffe8c8" opacity="0.85"/><rect x="367.1" y="121.0" width="1.6" height="1.3" fill="#ffffff" opacity="0.85"/><rect x="53.9" y="117.5" width="1.6" height="1.3" fill="#f0b070" opacity="0.85"/><rect x="17.8" y="76.3" width="1.6" height="1.3" fill="#ffd080" opacity="0.85"/><rect x="23.4" y="93.5" width="1.6" height="1.3" fill="#ffd080" opacity="0.85"/><rect x="315.1" y="159.6" width="1.6" height="1.3" fill="#ffffff" opacity="0.85"/><rect x="55.1" y="149.5" width="1.6" height="1.3" fill="#f0b070" opacity="0.85"/><rect x="316.4" y="53.2" width="1.6" height="1.3" fill="#f0b070" opacity="0.85"/><rect x="31.5" y="72.0" width="1.6" height="1.3" fill="#f0b070" opacity="0.85"/><rect x="55.3" y="77.3" width="1.6" height="1.3" fill="#ffe8c8" opacity="0.85"/><rect x="74.8" y="90.4" width="1.6" height="1.3" fill="#ffdca0" opacity="0.85"/><rect x="60.3" y="102.6" width="1.6" height="1.3" fill="#f0b070" opacity="0.85"/><rect x="350.4" y="131.3" width="1.6" height="1.3" fill="#ffd080" opacity="0.85"/><rect x="309.4" y="72.0" width="1.6" height="1.3" fill="#ffe8c8" opacity="0.85"/><rect x="272.1" y="133.7" width="1.6" height="1.3" fill="#ffffff" opacity="0.85"/><rect x="326.8" y="117.1" width="1.6" height="1.3" fill="#ffe8c8" opacity="0.85"/><rect x="365.8" y="56.2" width="1.6" height="1.3" fill="#ffd080" opacity="0.85"/><rect x="295.5" y="73.4" width="1.6" height="1.3" fill="#ffd080" opacity="0.85"/><rect x="249.1" y="56.6" width="1.6" height="1.3" fill="#f0b070" opacity="0.85"/><rect x="338.8" y="84.6" width="1.6" height="1.3" fill="#ffdca0" opacity="0.85"/><rect x="75.2" y="99.6" width="1.6" height="1.3" fill="#ffe8c8" opacity="0.85"/><rect x="46.7" y="112.1" width="1.6" height="1.3" fill="#ffffff" opacity="0.85"/><rect x="36.5" y="103.6" width="1.6" height="1.3" fill="#ffffff" opacity="0.85"/><rect x="256.8" y="58.6" width="1.6" height="1.3" fill="#ffdca0" opacity="0.85"/><rect x="372.0" y="63.6" width="1.6" height="1.3" fill="#ffe8c8" opacity="0.85"/><rect x="346.5" y="84.0" width="1.6" height="1.3" fill="#f0b070" opacity="0.85"/><rect x="337.9" y="71.5" width="1.6" height="1.3" fill="#ffd080" opacity="0.85"/><rect x="23.5" y="102.8" width="1.6" height="1.3" fill="#f0b070" opacity="0.85"/><rect x="297.9" y="139.3" width="1.6" height="1.3" fill="#f0b070" opacity="0.85"/><rect x="246.7" y="56.9" width="1.6" height="1.3" fill="#ffdca0" opacity="0.85"/><rect x="343.6" y="148.8" width="1.6" height="1.3" fill="#ffffff" opacity="0.85"/><rect x="287.6" y="154.9" width="1.6" height="1.3" fill="#ffdca0" opacity="0.85"/><rect x="339.5" y="84.8" width="1.6" height="1.3" fill="#ffffff" opacity="0.85"/><rect x="340.1" y="115.5" width="1.6" height="1.3" fill="#ffdca0" opacity="0.85"/><rect x="273.8" y="102.3" width="1.6" height="1.3" fill="#f0b070" opacity="0.85"/><rect x="37.1" y="92.6" width="1.6" height="1.3" fill="#f0b070" opacity="0.85"/><rect x="19.3" y="114.7" width="1.6" height="1.3" fill="#ffdca0" opacity="0.85"/><rect x="61.7" y="144.0" width="1.6" height="1.3" fill="#ffe8c8" opacity="0.85"/><rect x="32.9" y="98.8" width="1.6" height="1.3" fill="#ffffff" opacity="0.85"/><rect x="51.7" y="116.1" width="1.6" height="1.3" fill="#f0b070" opacity="0.85"/><rect x="27.3" y="75.8" width="1.6" height="1.3" fill="#ffdca0" opacity="0.85"/><rect x="316.1" y="67.7" width="1.6" height="1.3" fill="#f0b070" opacity="0.85"/><rect x="79.1" y="93.8" width="1.6" height="1.3" fill="#ffdca0" opacity="0.85"/><rect x="299.3" y="158.7" width="1.6" height="1.3" fill="#f0b070" opacity="0.85"/><rect x="260.1" y="100.7" width="1.6" height="1.3" fill="#ffe8c8" opacity="0.85"/><rect x="69.3" y="129.8" width="1.6" height="1.3" fill="#ffdca0" opacity="0.85"/><rect x="30.6" y="95.1" width="1.6" height="1.3" fill="#ffffff" opacity="0.85"/><rect x="342.4" y="71.9" width="1.6" height="1.3" fill="#ffe8c8" opacity="0.85"/><rect x="274.0" y="80.9" width="1.6" height="1.3" fill="#ffd080" opacity="0.85"/><rect x="250.8" y="77.7" width="1.6" height="1.3" fill="#ffe8c8" opacity="0.85"/><rect x="273.5" y="138.9" width="1.6" height="1.3" fill="#f0b070" opacity="0.85"/><rect x="17.2" y="112.7" width="1.6" height="1.3" fill="#ffe8c8" opacity="0.85"/><rect x="74.0" y="73.6" width="1.6" height="1.3" fill="#ffffff" opacity="0.85"/><rect x="248.9" y="116.1" width="1.6" height="1.3" fill="#ffd080" opacity="0.85"/><rect x="252.2" y="106.4" width="1.6" height="1.3" fill="#ffe8c8" opacity="0.85"/><rect x="277.4" y="135.6" width="1.6" height="1.3" fill="#ffdca0" opacity="0.85"/><rect x="323.1" y="118.2" width="1.6" height="1.3" fill="#ffe8c8" opacity="0.85"/><rect x="288.2" y="54.9" width="1.6" height="1.3" fill="#ffffff" opacity="0.85"/><rect x="341.6" y="150.5" width="1.6" height="1.3" fill="#ffdca0" opacity="0.85"/><rect x="38.6" y="103.5" width="1.6" height="1.3" fill="#ffd080" opacity="0.85"/><rect x="269.7" y="137.5" width="1.6" height="1.3" fill="#ffd080" opacity="0.85"/><rect x="297.5" y="137.5" width="1.6" height="1.3" fill="#ffd080" opacity="0.85"/><rect x="314.6" y="121.8" width="1.6" height="1.3" fill="#f0b070" opacity="0.85"/><rect x="38.7" y="95.5" width="1.6" height="1.3" fill="#ffffff" opacity="0.85"/><rect x="249.0" y="132.0" width="1.6" height="1.3" fill="#ffffff" opacity="0.85"/><rect x="244.5" y="134.3" width="1.6" height="1.3" fill="#ffffff" opacity="0.85"/><rect x="37.4" y="106.4" width="1.6" height="1.3" fill="#ffdca0" opacity="0.85"/><rect x="263.3" y="62.5" width="1.6" height="1.3" fill="#ffdca0" opacity="0.85"/><rect x="362.1" y="100.7" width="1.6" height="1.3" fill="#ffe8c8" opacity="0.85"/><rect x="249.0" y="65.7" width="1.6" height="1.3" fill="#f0b070" opacity="0.85"/><rect x="326.6" y="90.8" width="1.6" height="1.3" fill="#ffd080" opacity="0.85"/><rect x="289.3" y="67.8" width="1.6" height="1.3" fill="#ffe8c8" opacity="0.85"/><rect x="17.6" y="114.1" width="1.6" height="1.3" fill="#ffe8c8" opacity="0.85"/><rect x="355.9" y="54.8" width="1.6" height="1.3" fill="#f0b070" opacity="0.85"/><rect x="324.6" y="120.0" width="1.6" height="1.3" fill="#ffdca0" opacity="0.85"/><rect x="53.4" y="144.2" width="1.6" height="1.3" fill="#ffe8c8" opacity="0.85"/><rect x="70.0" y="125.9" width="1.6" height="1.3" fill="#ffd080" opacity="0.85"/><rect x="68.0" y="86.5" width="1.6" height="1.3" fill="#ffe8c8" opacity="0.85"/><rect x="369.6" y="67.2" width="1.6" height="1.3" fill="#ffffff" opacity="0.85"/><rect x="275.6" y="129.7" width="1.6" height="1.3" fill="#ffe8c8" opacity="0.85"/><rect x="318.5" y="133.3" width="1.6" height="1.3" fill="#ffdca0" opacity="0.85"/><rect x="32.7" y="105.1" width="1.6" height="1.3" fill="#f0b070" opacity="0.85"/><rect x="53.9" y="97.6" width="1.6" height="1.3" fill="#f0b070" opacity="0.85"/><rect x="275.9" y="92.8" width="1.6" height="1.3" fill="#ffffff" opacity="0.85"/><rect x="301.6" y="52.6" width="1.6" height="1.3" fill="#ffd080" opacity="0.85"/><path d="M250 108 Q320 105 380 120" stroke="#e8c890" stroke-width="2" fill="none" opacity="0.6"/><circle cx="298" cy="84" r="26" fill="url(#glow)"/><path d="M345 52 Q318 80 303 100 Q300 104 310 100 Q340 90 372 80 M318 86 q8-6 14 0 q6 6 12 0 q6-6 14 0" stroke="#f4ecd8" stroke-width="2.4" fill="none" opacity="0.9"/><rect x="0" y="161" width="380" height="39" fill="url(#wat)"/><path d="M0 166 H380 M0 175 H380" stroke="#c8bcd8" stroke-width="1" opacity="0.5"/><rect x="0" y="199" width="380" height="15" fill="#141116"/><rect x="322" y="130" width="58" height="11" fill="#8a4a40"/><rect x="322" y="141" width="58" height="10" fill="#4a5a48"/><text x="326" y="149" font-family="Liberation Sans" font-size="8.5" fill="#e8e8e0">nord stage2</text><rect x="322" y="151" width="58" height="10" fill="#241c20"/><path d="M0 90 L34 74 L40 84 L4 101 Z" fill="#1c1616"/><path d="M10 90 L30 80" stroke="#d8d0c0" stroke-width="1.5"/><defs><filter id="soft" x="-5%" y="-5%" width="110%" height="110%"><feGaussianBlur stdDeviation="0.6"/></filter><linearGradient id="jk" x1="0" y1="0" x2="1" y2="0"><stop offset="0" stop-color="#26283a"/><stop offset="0.35" stop-color="#16151c"/><stop offset="1" stop-color="#121116"/></linearGradient></defs><g filter="url(#soft)"><path d="M40 214 L40 150 Q42 95 60 78 Q75 70 88 68 L102 68 Q118 72 124 90 L126 214 Z" fill="url(#jk)"/><path d="M110 70 Q120 78 122 110 L122 160" stroke="#26242e" stroke-width="3" fill="none"/><ellipse cx="93" cy="55" rx="13" ry="17" fill="#9a7664"/><path d="M78 50 Q78 30 95 31 Q110 32 110 50 L106 44 Q94 38 82 46 Z" fill="#1a1414"/><rect x="104" y="172" width="16" height="42" fill="#201c22"/><path d="M41 152 Q40 134 52 128 Q64 124 78 130 Q88 126 96 118 Q103 113 106 117 Q104 126 96 134 Q101 144 104 154 Q106 160 98 160 Q88 160 80 166 Q72 178 56 179 Q44 178 41 166 Z" fill="#e4dfd4"/><path d="M56 164 Q62 146 78 140 Q92 136 97 146 Q96 156 84 162 Q72 168 62 172 Q55 172 56 164Z" fill="#2a2220"/><path d="M92 140 L126 121" stroke="#a08058" stroke-width="4.5"/><path d="M92 140 L126 121" stroke="#3a2a20" stroke-width="1" opacity="0.6"/><rect x="44" y="150" width="9" height="12" fill="#333" transform="rotate(-25 48 156)"/><ellipse cx="60" cy="142" rx="6" ry="5" fill="#c09a80"/><path d="M128 214 L126 120 Q126 70 150 58 Q165 50 180 48 L200 48 Q225 55 236 75 Q247 95 247 118 Q240 126 225 125 L232 214 Z" fill="url(#jk)"/><path d="M175 50 L186 80 L195 50" fill="#0c0c10"/><ellipse cx="182" cy="22" rx="17" ry="27" fill="#a88472"/><path d="M164 14 Q166 -4 184 -4 Q200 -2 200 14 L196 8 Q182 2 168 12 Z" fill="#1a1414"/><path d="M192 36 Q206 32 210 42 L214 120 Q214 165 205 190 Q198 205 190 200 Q184 190 190 170 L198 120 L200 48 Q196 42 192 40 Z" fill="url(#sax)"/><ellipse cx="222" cy="140" rx="12" ry="18" fill="#a08040"/><ellipse cx="224" cy="140" rx="7" ry="12" fill="#5a4020"/><ellipse cx="212" cy="100" rx="10" ry="8" fill="#d0ae98"/><ellipse cx="180" cy="166" rx="9" ry="7" fill="#c8a690"/><path d="M228 38 L244 62" stroke="#303030" stroke-width="3"/><path d="M233 214 L233 130 Q240 108 258 106 L272 106 Q290 110 294 135 L296 214Z" fill="#17161c"/><ellipse cx="263" cy="95" rx="10" ry="14" fill="#a8887a"/><path d="M252 88 Q254 76 264 77 Q274 78 273 90 L268 84 Q260 82 254 90Z" fill="#3a3030"/><ellipse cx="298" cy="138" rx="20" ry="4" fill="#a08a60"/><path d="M305 138 V214" stroke="#707070" stroke-width="1.5"/><rect x="251" y="174" width="47" height="19" rx="3" fill="#8e8c90"/><rect x="251" y="174" width="47" height="4" fill="#c8c8cc"/><path d="M233 214 Q233 196 256 196 Q279 196 279 214Z" fill="#d8d4d4"/><path d="M366 214 L366 100 Q368 72 380 68 V214 Z" fill="#16151a"/></g><rect x="10" y="177" width="32" height="23" rx="3" fill="#5a5660" opacity="0.75"/><path d="M17 183.5h18M17 189h18M17 194.5h18" stroke="#e0e0e0" stroke-width="0.9"/><circle cx="29" cy="183.5" r="2.3" fill="#5a5660" stroke="#e0e0e0" stroke-width="0.9"/><circle cx="22" cy="189" r="2.3" fill="#5a5660" stroke="#e0e0e0" stroke-width="0.9"/><circle cx="28" cy="194.5" r="2.3" fill="#5a5660" stroke="#e0e0e0" stroke-width="0.9"/><rect x="337" y="177" width="31" height="23" rx="3" fill="#5a5660" opacity="0.75"/><rect x="343" y="183" width="14" height="9" rx="1" fill="none" stroke="#e8e8e8" stroke-width="1.1"/><rect x="350" y="188" width="12" height="8" rx="1" fill="#5a5660" stroke="#e8e8e8" stroke-width="1.1"/></svg>
<div style="left:0px;top:253px;width:1757px;height:38px;background:#222126"></div>
<div style="left:1757px;top:253px;width:291px;height:38px;background:#222126"></div>
<div class="t" style="left:65px;top:258.9px;font-size:21px;line-height:25.2px;color:#f4f4f4;font-weight:700;">01:02:03:20</div>
<div class="t" style="left:289px;top:263.4px;font-size:13.5px;line-height:16.2px;color:#e8e8e8;font-weight:400;">Tim</div>
<div style="left:0px;top:291px;width:2048px;height:1px;background:#18181a"></div>
<div class="t" style="left:1712px;top:263.7px;font-size:13px;line-height:15.6px;color:#8a8a8a;font-weight:400;">Bus 1</div>
<svg style="position:absolute;left:1755px;top:265px;" width="22" height="12" viewBox="0 0 22 12"><path d="M1 6h3M6 6h3M11 6h7M14 2l5 4-5 4" fill="none" stroke="#9a9a9a" stroke-width="1.3"/></svg>
<div class="t" style="left:1786px;top:263.7px;font-size:13px;line-height:15.6px;color:#9a9a9a;font-weight:400;">Main</div>
<svg style="position:absolute;left:1822px;top:267px;" width="10" height="7" viewBox="0 0 10 7"><path d="M1 1l4 4 4-4" fill="none" stroke="#9a9a9a" stroke-width="1.4"/></svg>
<div style="left:1848px;top:258px;width:1px;height:30px;background:#38383c"></div>
<svg style="position:absolute;left:1862px;top:262px;" width="22" height="20" viewBox="0 0 22 20"><path d="M2 7h4l6-5v16l-6-5H2z" fill="#e8e8e8"/><path d="M15 6q3 4 0 8M18 3q5 7 0 14" fill="none" stroke="#e8e8e8" stroke-width="1.6"/></svg>
<div style="left:1893px;top:271px;width:84px;height:3px;background:#3ab03a;border-radius:2px"></div>
<div style="left:1971px;top:267px;width:11px;height:11px;background:#bdbdbd;border-radius:50%"></div>
<div style="left:1990px;top:262px;width:42px;height:19px;border:1px solid #4a4a4e;border-radius:7px;box-sizing:border-box"></div>
<div class="t" style="left:1991.0px;top:264.0px;width:40px;text-align:center;font-size:12.5px;line-height:15.0px;color:#c8c8c8;font-weight:400;">DIM</div>
<div style="left:0px;top:292px;width:246px;height:96px;background:#242427"></div>
<div style="left:0px;top:323px;width:246px;height:1px;background:#18181a"></div>
<div style="left:0px;top:355px;width:246px;height:1px;background:#18181a"></div>
<div style="left:245px;top:292px;width:1px;height:96px;background:#18181a"></div>
<svg style="position:absolute;left:37px;top:301px;" width="10" height="12" viewBox="0 0 10 12"><path d="M1 1l7 5-7 5z" fill="#8a8a8a"/><rect x="8" y="0.5" width="1.8" height="11" fill="#8a8a8a"/></svg>
<svg style="position:absolute;left:37px;top:333px;" width="10" height="12" viewBox="0 0 10 12"><path d="M9 1L2 6l7 5z" fill="#8a8a8a"/><rect x="0" y="0.5" width="1.8" height="11" fill="#8a8a8a"/></svg>
<svg style="position:absolute;left:35px;top:364px;" width="15" height="15" viewBox="0 0 15 15"><circle cx="7.5" cy="7.5" r="6.2" fill="none" stroke="#8a8a8a" stroke-width="1.3"/><path d="M7 3.5v4.5h3.5" fill="none" stroke="#8a8a8a" stroke-width="1.3"/></svg>
<div class="t" style="left:75.8px;top:299.5px;font-size:13.4px;line-height:16.1px;color:#ababab;font-weight:600;">01:01:57:14</div>
<div class="t" style="left:75.8px;top:331.5px;font-size:13.4px;line-height:16.1px;color:#ababab;font-weight:600;">01:01:57:14</div>
<div class="t" style="left:75.8px;top:363.5px;font-size:13.4px;line-height:16.1px;color:#ababab;font-weight:600;">00:00:00:00</div>
<div style="left:246px;top:292px;width:1511px;height:53px;background:#232227"></div>
<div style="left:246px;top:345px;width:1px;height:1px;"></div>
<svg style="position:absolute;left:272px;top:309px;" width="28" height="20" viewBox="0 0 28 20"><rect x="1" y="1" width="22" height="6" rx="2" fill="none" stroke="#8a8a8a" stroke-width="1.3"/><path d="M8 1v6M15 1v6" stroke="#8a8a8a"/><path d="M1 10h4M7 10h10M1 15h4M7 15h8" stroke="#6a6a6a" stroke-width="1.5"/><path d="M16 14l4 4 7-8" fill="none" stroke="#b8b8b8" stroke-width="1.8"/></svg>
<div style="left:246px;top:345px;width:1502px;height:44px;background:#252429"></div>
<div style="left:246px;top:345px;width:1502px;height:1px;background:#18181a"></div>
<svg style="position:absolute;left:1117px;top:311px;" width="14" height="17" viewBox="0 0 14 17"><path d="M1 1h12v15l-6-5-6 5z" fill="#2a7de8"/></svg>
<svg style="position:absolute;left:1139px;top:316px;" width="12" height="8" viewBox="0 0 12 8"><path d="M1 1l5 5 5-5" fill="none" stroke="#9a9a9a" stroke-width="1.4"/></svg>
<svg style="position:absolute;left:1164px;top:311px;" width="14" height="17" viewBox="0 0 14 17"><path d="M1 1h12v10l-6 5-6-5z" fill="#2a7de8"/></svg>
<svg style="position:absolute;left:1186px;top:316px;" width="12" height="8" viewBox="0 0 12 8"><path d="M1 1l5 5 5-5" fill="none" stroke="#9a9a9a" stroke-width="1.4"/></svg>
<div style="left:1209px;top:303px;width:1px;height:33px;background:#3a3a3e"></div>
<svg style="position:absolute;left:1221px;top:305px;" width="30" height="27" viewBox="0 0 30 27"><path d="M1 21H29" stroke="#6a6a6a" stroke-width="0.8"/><path d="M1 21 Q3.5 8 6 14 Q8 24 10 26 Q12 26 14 12 Q16 4 18 14 Q20 26 22 26 Q24 26 26 12 Q27 9 29 26" fill="none" stroke="#9a9a9a" stroke-width="1.2"/><path d="M19 4q5 0 5 5M22 8l2 2 2-2" fill="none" stroke="#9a9a9a" stroke-width="1.2"/></svg>
<svg style="position:absolute;left:1269px;top:309px;" width="14" height="20" viewBox="0 0 14 20"><path d="M3 6l4-4 4 4M3 14l4 4 4-4" fill="none" stroke="#9a9a9a" stroke-width="1.4"/></svg>
<div style="left:1299px;top:314px;width:11px;height:11px;background:#a0a0a0;border-radius:50%"></div>
<div style="left:1310px;top:318px;width:88px;height:3px;background:#1a1a1c;border-radius:1.5px"></div>
<svg style="position:absolute;left:1410px;top:314px;" width="20" height="12" viewBox="0 0 20 12"><path d="M6 1L1 6l5 5M14 1l5 5-5 5" fill="none" stroke="#9a9a9a" stroke-width="1.4"/><circle cx="10" cy="6" r="1.2" fill="#9a9a9a"/></svg>
<div style="left:1443px;top:318px;width:98px;height:3px;background:#1a1a1c;border-radius:1.5px"></div>
<div style="left:1471px;top:314px;width:11px;height:11px;background:#a0a0a0;border-radius:50%"></div>
<svg style="position:absolute;left:246px;top:346px;" width="1502" height="30" viewBox="0 0 1502 30"><rect x="856.33" y="5" width="1" height="4" fill="#5e5e62"/><rect x="861.67" y="5" width="1" height="7" fill="#5e5e62"/><rect x="867.00" y="5" width="1" height="4" fill="#5e5e62"/><rect x="872.33" y="5" width="1" height="7" fill="#5e5e62"/><rect x="877.67" y="5" width="1" height="4" fill="#5e5e62"/><rect x="883.00" y="5" width="1" height="7" fill="#5e5e62"/><rect x="888.33" y="5" width="1" height="4" fill="#5e5e62"/><rect x="893.67" y="5" width="1" height="7" fill="#5e5e62"/><rect x="899.00" y="5" width="1" height="4" fill="#5e5e62"/><rect x="904.33" y="5" width="1" height="7" fill="#5e5e62"/><rect x="909.67" y="5" width="1" height="4" fill="#5e5e62"/><rect x="915.00" y="5" width="1.1" height="10" fill="#6a6a6e"/><rect x="920.33" y="5" width="1" height="4" fill="#5e5e62"/><rect x="925.67" y="5" width="1" height="7" fill="#5e5e62"/><rect x="931.00" y="5" width="1" height="4" fill="#5e5e62"/><rect x="936.33" y="5" width="1" height="7" fill="#5e5e62"/><rect x="941.67" y="5" width="1" height="4" fill="#5e5e62"/><rect x="947.00" y="5" width="1" height="7" fill="#5e5e62"/><rect x="952.33" y="5" width="1" height="4" fill="#5e5e62"/><rect x="957.67" y="5" width="1" height="7" fill="#5e5e62"/><rect x="963.00" y="5" width="1" height="4" fill="#5e5e62"/><rect x="968.33" y="5" width="1" height="7" fill="#5e5e62"/><rect x="973.67" y="5" width="1" height="4" fill="#5e5e62"/><rect x="979.00" y="5" width="1.2" height="22" fill="#6e6e72"/><rect x="984.33" y="5" width="1" height="4" fill="#5e5e62"/><rect x="989.67" y="5" width="1" height="7" fill="#5e5e62"/><rect x="995.00" y="5" width="1" height="4" fill="#5e5e62"/><rect x="1000.33" y="5" width="1" height="7" fill="#5e5e62"/><rect x="1005.67" y="5" width="1" height="4" fill="#5e5e62"/><rect x="1011.00" y="5" width="1" height="7" fill="#5e5e62"/><rect x="1016.33" y="5" width="1" height="4" fill="#5e5e62"/><rect x="1021.67" y="5" width="1" height="7" fill="#5e5e62"/><rect x="1027.00" y="5" width="1" height="4" fill="#5e5e62"/><rect x="1032.33" y="5" width="1" height="7" fill="#5e5e62"/><rect x="1037.67" y="5" width="1" height="4" fill="#5e5e62"/><rect x="1043.00" y="5" width="1.1" height="10" fill="#6a6a6e"/><rect x="1048.33" y="5" width="1" height="4" fill="#5e5e62"/><rect x="1053.67" y="5" width="1" height="7" fill="#5e5e62"/><rect x="1059.00" y="5" width="1" height="4" fill="#5e5e62"/><rect x="1064.33" y="5" width="1" height="7" fill="#5e5e62"/><rect x="1069.67" y="5" width="1" height="4" fill="#5e5e62"/><rect x="1075.00" y="5" width="1" height="7" fill="#5e5e62"/><rect x="1080.33" y="5" width="1" height="4" fill="#5e5e62"/><rect x="1085.67" y="5" width="1" height="7" fill="#5e5e62"/><rect x="1091.00" y="5" width="1" height="4" fill="#5e5e62"/><rect x="1096.33" y="5" width="1" height="7" fill="#5e5e62"/><rect x="1101.67" y="5" width="1" height="4" fill="#5e5e62"/><rect x="1107.00" y="5" width="1.2" height="22" fill="#6e6e72"/><rect x="1112.33" y="5" width="1" height="4" fill="#5e5e62"/><rect x="1117.67" y="5" width="1" height="7" fill="#5e5e62"/><rect x="1123.00" y="5" width="1" height="4" fill="#5e5e62"/><rect x="1128.33" y="5" width="1" height="7" fill="#5e5e62"/><rect x="1133.67" y="5" width="1" height="4" fill="#5e5e62"/><rect x="1139.00" y="5" width="1" height="7" fill="#5e5e62"/><rect x="1144.33" y="5" width="1" height="4" fill="#5e5e62"/><rect x="1149.67" y="5" width="1" height="7" fill="#5e5e62"/><rect x="1155.00" y="5" width="1" height="4" fill="#5e5e62"/><rect x="1160.33" y="5" width="1" height="7" fill="#5e5e62"/><rect x="1165.67" y="5" width="1" height="4" fill="#5e5e62"/><rect x="1171.00" y="5" width="1.1" height="10" fill="#6a6a6e"/><rect x="1176.33" y="5" width="1" height="4" fill="#5e5e62"/><rect x="1181.67" y="5" width="1" height="7" fill="#5e5e62"/><rect x="1187.00" y="5" width="1" height="4" fill="#5e5e62"/><rect x="1192.33" y="5" width="1" height="7" fill="#5e5e62"/><rect x="1197.67" y="5" width="1" height="4" fill="#5e5e62"/><rect x="1203.00" y="5" width="1" height="7" fill="#5e5e62"/><rect x="1208.33" y="5" width="1" height="4" fill="#5e5e62"/><rect x="1213.67" y="5" width="1" height="7" fill="#5e5e62"/><rect x="1219.00" y="5" width="1" height="4" fill="#5e5e62"/><rect x="1224.33" y="5" width="1" height="7" fill="#5e5e62"/><rect x="1229.67" y="5" width="1" height="4" fill="#5e5e62"/><rect x="1235.00" y="5" width="1.2" height="22" fill="#6e6e72"/><rect x="1240.33" y="5" width="1" height="4" fill="#5e5e62"/><rect x="1245.67" y="5" width="1" height="7" fill="#5e5e62"/><rect x="1251.00" y="5" width="1" height="4" fill="#5e5e62"/><rect x="1256.33" y="5" width="1" height="7" fill="#5e5e62"/><rect x="1261.67" y="5" width="1" height="4" fill="#5e5e62"/><rect x="1267.00" y="5" width="1" height="7" fill="#5e5e62"/><rect x="1272.33" y="5" width="1" height="4" fill="#5e5e62"/><rect x="1277.67" y="5" width="1" height="7" fill="#5e5e62"/><rect x="1283.00" y="5" width="1" height="4" fill="#5e5e62"/><rect x="1288.33" y="5" width="1" height="7" fill="#5e5e62"/><rect x="1293.67" y="5" width="1" height="4" fill="#5e5e62"/><rect x="1299.00" y="5" width="1.1" height="10" fill="#6a6a6e"/><rect x="1304.33" y="5" width="1" height="4" fill="#5e5e62"/><rect x="1309.67" y="5" width="1" height="7" fill="#5e5e62"/><rect x="1315.00" y="5" width="1" height="4" fill="#5e5e62"/><rect x="1320.33" y="5" width="1" height="7" fill="#5e5e62"/><rect x="1325.67" y="5" width="1" height="4" fill="#5e5e62"/><rect x="1331.00" y="5" width="1" height="7" fill="#5e5e62"/><rect x="1336.33" y="5" width="1" height="4" fill="#5e5e62"/><rect x="1341.67" y="5" width="1" height="7" fill="#5e5e62"/><rect x="1347.00" y="5" width="1" height="4" fill="#5e5e62"/><rect x="1352.33" y="5" width="1" height="7" fill="#5e5e62"/><rect x="1357.67" y="5" width="1" height="4" fill="#5e5e62"/><rect x="1363.00" y="5" width="1.2" height="22" fill="#6e6e72"/><rect x="1368.33" y="5" width="1" height="4" fill="#5e5e62"/><rect x="1373.67" y="5" width="1" height="7" fill="#5e5e62"/><rect x="1379.00" y="5" width="1" height="4" fill="#5e5e62"/><rect x="1384.33" y="5" width="1" height="7" fill="#5e5e62"/><rect x="1389.67" y="5" width="1" height="4" fill="#5e5e62"/><rect x="1395.00" y="5" width="1" height="7" fill="#5e5e62"/><rect x="1400.33" y="5" width="1" height="4" fill="#5e5e62"/><rect x="1405.67" y="5" width="1" height="7" fill="#5e5e62"/><rect x="1411.00" y="5" width="1" height="4" fill="#5e5e62"/><rect x="1416.33" y="5" width="1" height="7" fill="#5e5e62"/><rect x="1421.67" y="5" width="1" height="4" fill="#5e5e62"/><rect x="1427.00" y="5" width="1.1" height="10" fill="#6a6a6e"/><rect x="1432.33" y="5" width="1" height="4" fill="#5e5e62"/><rect x="1437.67" y="5" width="1" height="7" fill="#5e5e62"/><rect x="1443.00" y="5" width="1" height="4" fill="#5e5e62"/><rect x="1448.33" y="5" width="1" height="7" fill="#5e5e62"/><rect x="1453.67" y="5" width="1" height="4" fill="#5e5e62"/><rect x="1459.00" y="5" width="1" height="7" fill="#5e5e62"/><rect x="1464.33" y="5" width="1" height="4" fill="#5e5e62"/><rect x="1469.67" y="5" width="1" height="7" fill="#5e5e62"/><rect x="1475.00" y="5" width="1" height="4" fill="#5e5e62"/><rect x="1480.33" y="5" width="1" height="7" fill="#5e5e62"/><rect x="1485.67" y="5" width="1" height="4" fill="#5e5e62"/><rect x="1491.00" y="5" width="1.2" height="22" fill="#6e6e72"/><rect x="1496.33" y="5" width="1" height="4" fill="#5e5e62"/><rect x="2.00" y="5" width="1" height="4" fill="#5e5e62"/><rect x="7.33" y="5" width="1" height="7" fill="#5e5e62"/><rect x="12.67" y="5" width="1" height="4" fill="#5e5e62"/><rect x="18.00" y="5" width="1.2" height="10" fill="#6e6e72"/><rect x="23.33" y="5" width="1" height="4" fill="#5e5e62"/><rect x="28.67" y="5" width="1" height="7" fill="#5e5e62"/><rect x="34.00" y="5" width="1" height="4" fill="#5e5e62"/><rect x="39.33" y="5" width="1" height="7" fill="#5e5e62"/><rect x="44.67" y="5" width="1" height="4" fill="#5e5e62"/><rect x="50.00" y="5" width="1" height="7" fill="#5e5e62"/><rect x="55.33" y="5" width="1" height="4" fill="#5e5e62"/><rect x="60.67" y="5" width="1" height="7" fill="#5e5e62"/><rect x="66.00" y="5" width="1" height="4" fill="#5e5e62"/></svg>
<div class="t" style="left:247px;top:359.2px;font-size:13px;line-height:15.6px;color:#a8a8a8;font-weight:400;">6:00</div>
<div class="t" style="left:1100px;top:359.2px;font-size:13px;line-height:15.6px;color:#b0b0b0;font-weight:400;">01:01:39:00</div>
<div class="t" style="left:1228px;top:359.2px;font-size:13px;line-height:15.6px;color:#b0b0b0;font-weight:400;">01:01:48:00</div>
<div class="t" style="left:1356px;top:359.2px;font-size:13px;line-height:15.6px;color:#b0b0b0;font-weight:400;">01:01:57:00</div>
<div class="t" style="left:1484px;top:359.2px;font-size:13px;line-height:15.6px;color:#b0b0b0;font-weight:400;">01:02:06:00</div>
<div class="t" style="left:1612px;top:359.2px;font-size:13px;line-height:15.6px;color:#b0b0b0;font-weight:400;">01:02:15:00</div>
<div class="t" style="left:1740px;top:359.2px;font-size:13px;line-height:15.6px;color:#b0b0b0;font-weight:400;">0</div>
<div style="left:0px;top:388px;width:246px;height:712px;background:#242427"></div>
<div style="left:0px;top:388px;width:5px;height:700px;background:#4a9a6c"></div>
<div style="left:4px;top:388px;width:1px;height:700px;background:#101012"></div>
<div style="left:21px;top:388px;width:1px;height:700px;background:#18181a"></div>
<div style="left:206px;top:388px;width:1px;height:700px;background:#18181a"></div>
<div style="left:245px;top:388px;width:1px;height:712px;background:#18181a"></div>
<div style="left:22px;top:388px;width:184px;height:9px;background:#28282c"></div>
<div style="left:22px;top:396px;width:224px;height:1px;background:#18181a"></div>
<div style="left:215px;top:388px;width:14px;height:5px;background:#2b2b2f;border:1px solid #121214;box-sizing:border-box"></div>
<div style="left:22px;top:397px;width:184px;height:63px;background:#28282c"></div>
<div style="left:207px;top:397px;width:38px;height:63px;background:#26262a"></div>
<div style="left:0px;top:396.8px;width:246px;height:1.2px;background:#18181a"></div>
<div style="left:22px;top:426px;width:184px;height:1px;background:#18181a"></div>
<div style="left:64px;top:397px;width:1px;height:29px;background:#18181a"></div>
<div class="t" style="left:24.4px;top:403.7px;width:40px;text-align:center;font-size:13px;line-height:15.6px;color:#e8e8e8;font-weight:400;">A2</div>
<div class="t" style="left:76.5px;top:403.5px;font-size:13.4px;line-height:16.1px;color:#e8e8e8;font-weight:400;">Audio 2</div>
<div style="left:32px;top:431px;width:46px;height:22px;background:#1e1e1f;border:1px solid #19191a;border-radius:2px;box-sizing:border-box"></div>
<div class="t" style="left:32.0px;top:434.7px;width:46px;text-align:center;font-size:13px;line-height:15.6px;color:#9a9a9a;font-weight:400;">0.0</div>
<svg style="position:absolute;left:94px;top:434px;" width="13" height="17" viewBox="0 0 13 17"><path d="M2.8 8.5V6.5a3.7 3.7 0 0 1 7.4 0V7" fill="none" stroke="#48484c" stroke-width="2.2"/><rect x="0.5" y="8.5" width="12" height="8" rx="1.5" fill="#48484c"/></svg>
<div style="left:120px;top:433.5px;width:19.5px;height:18.5px;background:#38383c;border-radius:3px"></div>
<div class="t" style="left:119.8px;top:435.5px;width:20px;text-align:center;font-size:12.5px;line-height:15.0px;color:#8a8a8a;font-weight:700;">R</div>
<div style="left:150px;top:433.5px;width:19.5px;height:18.5px;background:#38383c;border-radius:3px"></div>
<div class="t" style="left:149.8px;top:435.5px;width:20px;text-align:center;font-size:12.5px;line-height:15.0px;color:#8a8a8a;font-weight:700;">S</div>
<div style="left:180.5px;top:433.5px;width:19.5px;height:18.5px;background:#38383c;border-radius:3px"></div>
<div class="t" style="left:180.2px;top:435.5px;width:20px;text-align:center;font-size:12.5px;line-height:15.0px;color:#8a8a8a;font-weight:700;">M</div>
<div style="left:219.5px;top:404px;width:13px;height:50px;background:#2b2b2f;border:1px solid #121214;box-sizing:border-box"></div>
<div style="left:225.5px;top:404px;width:1px;height:50px;background:#121214"></div>
<div style="left:22px;top:461px;width:184px;height:63px;background:#28282c"></div>
<div style="left:207px;top:461px;width:38px;height:63px;background:#26262a"></div>
<div style="left:0px;top:460.8px;width:246px;height:1.2px;background:#18181a"></div>
<div style="left:22px;top:490px;width:184px;height:1px;background:#18181a"></div>
<div style="left:64px;top:461px;width:1px;height:29px;background:#18181a"></div>
<div class="t" style="left:24.4px;top:467.7px;width:40px;text-align:center;font-size:13px;line-height:15.6px;color:#e8e8e8;font-weight:400;">A3</div>
<div class="t" style="left:76.5px;top:467.5px;font-size:13.4px;line-height:16.1px;color:#e8e8e8;font-weight:400;">Tom 3</div>
<div style="left:32px;top:495px;width:46px;height:22px;background:#1e1e1f;border:1px solid #19191a;border-radius:2px;box-sizing:border-box"></div>
<div class="t" style="left:32.0px;top:498.7px;width:46px;text-align:center;font-size:13px;line-height:15.6px;color:#9a9a9a;font-weight:400;">0.0</div>
<svg style="position:absolute;left:94px;top:498px;" width="13" height="17" viewBox="0 0 13 17"><path d="M2.8 8.5V6.5a3.7 3.7 0 0 1 7.4 0V7" fill="none" stroke="#48484c" stroke-width="2.2"/><rect x="0.5" y="8.5" width="12" height="8" rx="1.5" fill="#48484c"/></svg>
<div style="left:120px;top:497.5px;width:19.5px;height:18.5px;background:#38383c;border-radius:3px"></div>
<div class="t" style="left:119.8px;top:499.5px;width:20px;text-align:center;font-size:12.5px;line-height:15.0px;color:#8a8a8a;font-weight:700;">R</div>
<div style="left:150px;top:497.5px;width:19.5px;height:18.5px;background:#38383c;border-radius:3px"></div>
<div class="t" style="left:149.8px;top:499.5px;width:20px;text-align:center;font-size:12.5px;line-height:15.0px;color:#8a8a8a;font-weight:700;">S</div>
<div style="left:180.5px;top:497.5px;width:19.5px;height:18.5px;background:#38383c;border-radius:3px"></div>
<div class="t" style="left:180.2px;top:499.5px;width:20px;text-align:center;font-size:12.5px;line-height:15.0px;color:#8a8a8a;font-weight:700;">M</div>
<div style="left:219.5px;top:468px;width:13px;height:50px;background:#2b2b2f;border:1px solid #121214;box-sizing:border-box"></div>
<div style="left:220.5px;top:490px;width:5px;height:28px;background:#1ec81e"></div>
<div style="left:226.5px;top:490px;width:5px;height:28px;background:#1ec81e"></div>
<div style="left:225.5px;top:468px;width:1px;height:50px;background:#121214"></div>
<div style="left:22px;top:525px;width:184px;height:63px;background:#28282c"></div>
<div style="left:207px;top:525px;width:38px;height:63px;background:#26262a"></div>
<div style="left:0px;top:524.8px;width:246px;height:1.2px;background:#18181a"></div>
<div style="left:22px;top:554px;width:184px;height:1px;background:#18181a"></div>
<div style="left:64px;top:525px;width:1px;height:29px;background:#18181a"></div>
<div class="t" style="left:24.4px;top:531.7px;width:40px;text-align:center;font-size:13px;line-height:15.6px;color:#e8e8e8;font-weight:400;">A4</div>
<div class="t" style="left:76.5px;top:531.5px;font-size:13.4px;line-height:16.1px;color:#e8e8e8;font-weight:400;">Tom 2</div>
<div style="left:32px;top:559px;width:46px;height:22px;background:#1e1e1f;border:1px solid #19191a;border-radius:2px;box-sizing:border-box"></div>
<div class="t" style="left:32.0px;top:562.7px;width:46px;text-align:center;font-size:13px;line-height:15.6px;color:#9a9a9a;font-weight:400;">0.0</div>
<svg style="position:absolute;left:94px;top:562px;" width="13" height="17" viewBox="0 0 13 17"><path d="M2.8 8.5V6.5a3.7 3.7 0 0 1 7.4 0V7" fill="none" stroke="#48484c" stroke-width="2.2"/><rect x="0.5" y="8.5" width="12" height="8" rx="1.5" fill="#48484c"/></svg>
<div style="left:120px;top:561.5px;width:19.5px;height:18.5px;background:#38383c;border-radius:3px"></div>
<div class="t" style="left:119.8px;top:563.5px;width:20px;text-align:center;font-size:12.5px;line-height:15.0px;color:#8a8a8a;font-weight:700;">R</div>
<div style="left:150px;top:561.5px;width:19.5px;height:18.5px;background:#38383c;border-radius:3px"></div>
<div class="t" style="left:149.8px;top:563.5px;width:20px;text-align:center;font-size:12.5px;line-height:15.0px;color:#8a8a8a;font-weight:700;">S</div>
<div style="left:180.5px;top:561.5px;width:19.5px;height:18.5px;background:#38383c;border-radius:3px"></div>
<div class="t" style="left:180.2px;top:563.5px;width:20px;text-align:center;font-size:12.5px;line-height:15.0px;color:#8a8a8a;font-weight:700;">M</div>
<div style="left:219.5px;top:532px;width:13px;height:50px;background:#2b2b2f;border:1px solid #121214;box-sizing:border-box"></div>
<div style="left:220.5px;top:534px;width:5px;height:11px;background:#e8321e"></div>
<div style="left:220.5px;top:545px;width:5px;height:12px;background:#f2e55c"></div>
<div style="left:220.5px;top:557px;width:5px;height:25px;background:#1ec81e"></div>
<div style="left:226.5px;top:534px;width:5px;height:11px;background:#e8321e"></div>
<div style="left:226.5px;top:545px;width:5px;height:12px;background:#f2e55c"></div>
<div style="left:226.5px;top:557px;width:5px;height:25px;background:#1ec81e"></div>
<div style="left:225.5px;top:532px;width:1px;height:50px;background:#121214"></div>
<div style="left:22px;top:589px;width:184px;height:63px;background:#28282c"></div>
<div style="left:207px;top:589px;width:38px;height:63px;background:#26262a"></div>
<div style="left:0px;top:588.8px;width:246px;height:1.2px;background:#18181a"></div>
<div style="left:22px;top:618px;width:184px;height:1px;background:#18181a"></div>
<div style="left:64px;top:589px;width:1px;height:29px;background:#18181a"></div>
<div class="t" style="left:24.4px;top:595.7px;width:40px;text-align:center;font-size:13px;line-height:15.6px;color:#e8e8e8;font-weight:400;">A5</div>
<div class="t" style="left:76.5px;top:595.5px;font-size:13.4px;line-height:16.1px;color:#e8e8e8;font-weight:400;">Tom 1</div>
<div class="t" style="left:165px;top:595.1px;font-size:14px;line-height:16.8px;color:#8a8a8a;font-weight:400;font-style:italic;font-family:'Liberation Serif'">fx</div>
<div style="left:32px;top:623px;width:46px;height:22px;background:#1e1e1f;border:1px solid #19191a;border-radius:2px;box-sizing:border-box"></div>
<div class="t" style="left:32.0px;top:626.7px;width:46px;text-align:center;font-size:13px;line-height:15.6px;color:#9a9a9a;font-weight:400;">0.0</div>
<svg style="position:absolute;left:94px;top:626px;" width="13" height="17" viewBox="0 0 13 17"><path d="M2.8 8.5V6.5a3.7 3.7 0 0 1 7.4 0V7" fill="none" stroke="#48484c" stroke-width="2.2"/><rect x="0.5" y="8.5" width="12" height="8" rx="1.5" fill="#48484c"/></svg>
<div style="left:120px;top:625.5px;width:19.5px;height:18.5px;background:#38383c;border-radius:3px"></div>
<div class="t" style="left:119.8px;top:627.5px;width:20px;text-align:center;font-size:12.5px;line-height:15.0px;color:#8a8a8a;font-weight:700;">R</div>
<div style="left:150px;top:625.5px;width:19.5px;height:18.5px;background:#38383c;border-radius:3px"></div>
<div class="t" style="left:149.8px;top:627.5px;width:20px;text-align:center;font-size:12.5px;line-height:15.0px;color:#8a8a8a;font-weight:700;">S</div>
<div style="left:180.5px;top:625.5px;width:19.5px;height:18.5px;background:#38383c;border-radius:3px"></div>
<div class="t" style="left:180.2px;top:627.5px;width:20px;text-align:center;font-size:12.5px;line-height:15.0px;color:#8a8a8a;font-weight:700;">M</div>
<div style="left:221px;top:596px;width:10px;height:50px;background:#2b2b2f;border:1px solid #121214;box-sizing:border-box"></div>
<div style="left:222px;top:614px;width:8px;height:5px;background:#f2e55c"></div>
<div style="left:222px;top:619px;width:8px;height:27px;background:#1ec81e"></div>
<div style="left:22px;top:653px;width:184px;height:63px;background:#28282c"></div>
<div style="left:207px;top:653px;width:38px;height:63px;background:#26262a"></div>
<div style="left:0px;top:652.8px;width:246px;height:1.2px;background:#18181a"></div>
<div style="left:22px;top:682px;width:184px;height:1px;background:#18181a"></div>
<div style="left:64px;top:653px;width:1px;height:29px;background:#18181a"></div>
<div class="t" style="left:24.4px;top:659.7px;width:40px;text-align:center;font-size:13px;line-height:15.6px;color:#e8e8e8;font-weight:400;">A6</div>
<div class="t" style="left:76.5px;top:659.5px;font-size:13.4px;line-height:16.1px;color:#e8e8e8;font-weight:400;">Snare</div>
<div class="t" style="left:165px;top:659.1px;font-size:14px;line-height:16.8px;color:#8a8a8a;font-weight:400;font-style:italic;font-family:'Liberation Serif'">fx</div>
<div style="left:32px;top:687px;width:46px;height:22px;background:#1e1e1f;border:1px solid #19191a;border-radius:2px;box-sizing:border-box"></div>
<div class="t" style="left:32.0px;top:690.7px;width:46px;text-align:center;font-size:13px;line-height:15.6px;color:#9a9a9a;font-weight:400;">0.0</div>
<svg style="position:absolute;left:94px;top:690px;" width="13" height="17" viewBox="0 0 13 17"><path d="M2.8 8.5V6.5a3.7 3.7 0 0 1 7.4 0V7" fill="none" stroke="#48484c" stroke-width="2.2"/><rect x="0.5" y="8.5" width="12" height="8" rx="1.5" fill="#48484c"/></svg>
<div style="left:120px;top:689.5px;width:19.5px;height:18.5px;background:#38383c;border-radius:3px"></div>
<div class="t" style="left:119.8px;top:691.5px;width:20px;text-align:center;font-size:12.5px;line-height:15.0px;color:#8a8a8a;font-weight:700;">R</div>
<div style="left:150px;top:689.5px;width:19.5px;height:18.5px;background:#38383c;border-radius:3px"></div>
<div class="t" style="left:149.8px;top:691.5px;width:20px;text-align:center;font-size:12.5px;line-height:15.0px;color:#8a8a8a;font-weight:700;">S</div>
<div style="left:180.5px;top:689.5px;width:19.5px;height:18.5px;background:#38383c;border-radius:3px"></div>
<div class="t" style="left:180.2px;top:691.5px;width:20px;text-align:center;font-size:12.5px;line-height:15.0px;color:#8a8a8a;font-weight:700;">M</div>
<div style="left:221px;top:660px;width:10px;height:50px;background:#2b2b2f;border:1px solid #121214;box-sizing:border-box"></div>
<div style="left:222px;top:677px;width:8px;height:7px;background:#f2e55c"></div>
<div style="left:222px;top:684px;width:8px;height:26px;background:#1ec81e"></div>
<div style="left:22px;top:717px;width:184px;height:63px;background:#28282c"></div>
<div style="left:207px;top:717px;width:38px;height:63px;background:#26262a"></div>
<div style="left:0px;top:716.8px;width:246px;height:1.2px;background:#18181a"></div>
<div style="left:22px;top:746px;width:184px;height:1px;background:#18181a"></div>
<div style="left:64px;top:717px;width:1px;height:29px;background:#18181a"></div>
<div class="t" style="left:24.4px;top:723.7px;width:40px;text-align:center;font-size:13px;line-height:15.6px;color:#e8e8e8;font-weight:400;">A7</div>
<div class="t" style="left:76.5px;top:723.5px;font-size:13.4px;line-height:16.1px;color:#e8e8e8;font-weight:400;">Snare B</div>
<div style="left:32px;top:751px;width:46px;height:22px;background:#1e1e1f;border:1px solid #19191a;border-radius:2px;box-sizing:border-box"></div>
<div class="t" style="left:32.0px;top:754.7px;width:46px;text-align:center;font-size:13px;line-height:15.6px;color:#9a9a9a;font-weight:400;">0.0</div>
<svg style="position:absolute;left:94px;top:754px;" width="13" height="17" viewBox="0 0 13 17"><path d="M2.8 8.5V6.5a3.7 3.7 0 0 1 7.4 0V7" fill="none" stroke="#48484c" stroke-width="2.2"/><rect x="0.5" y="8.5" width="12" height="8" rx="1.5" fill="#48484c"/></svg>
<div style="left:120px;top:753.5px;width:19.5px;height:18.5px;background:#38383c;border-radius:3px"></div>
<div class="t" style="left:119.8px;top:755.5px;width:20px;text-align:center;font-size:12.5px;line-height:15.0px;color:#8a8a8a;font-weight:700;">R</div>
<div style="left:150px;top:753.5px;width:19.5px;height:18.5px;background:#38383c;border-radius:3px"></div>
<div class="t" style="left:149.8px;top:755.5px;width:20px;text-align:center;font-size:12.5px;line-height:15.0px;color:#8a8a8a;font-weight:700;">S</div>
<div style="left:180.5px;top:753.5px;width:19.5px;height:18.5px;background:#38383c;border-radius:3px"></div>
<div class="t" style="left:180.2px;top:755.5px;width:20px;text-align:center;font-size:12.5px;line-height:15.0px;color:#8a8a8a;font-weight:700;">M</div>
<div style="left:221px;top:724px;width:10px;height:50px;background:#2b2b2f;border:1px solid #121214;box-sizing:border-box"></div>
<div style="left:222px;top:749px;width:8px;height:25px;background:#1ec81e"></div>
<div style="left:222px;top:746px;width:8px;height:2px;background:#f2e55c"></div>
<div style="left:22px;top:781px;width:184px;height:63px;background:#28282c"></div>
<div style="left:207px;top:781px;width:38px;height:63px;background:#26262a"></div>
<div style="left:0px;top:780.8px;width:246px;height:1.2px;background:#18181a"></div>
<div style="left:22px;top:810px;width:184px;height:1px;background:#18181a"></div>
<div style="left:64px;top:781px;width:1px;height:29px;background:#18181a"></div>
<div class="t" style="left:24.4px;top:787.7px;width:40px;text-align:center;font-size:13px;line-height:15.6px;color:#e8e8e8;font-weight:400;">A8</div>
<div class="t" style="left:76.5px;top:787.5px;font-size:13.4px;line-height:16.1px;color:#e8e8e8;font-weight:400;">Snare 2</div>
<div style="left:32px;top:815px;width:46px;height:22px;background:#1e1e1f;border:1px solid #19191a;border-radius:2px;box-sizing:border-box"></div>
<div class="t" style="left:32.0px;top:818.7px;width:46px;text-align:center;font-size:13px;line-height:15.6px;color:#9a9a9a;font-weight:400;">0.0</div>
<svg style="position:absolute;left:94px;top:818px;" width="13" height="17" viewBox="0 0 13 17"><path d="M2.8 8.5V6.5a3.7 3.7 0 0 1 7.4 0V7" fill="none" stroke="#48484c" stroke-width="2.2"/><rect x="0.5" y="8.5" width="12" height="8" rx="1.5" fill="#48484c"/></svg>
<div style="left:120px;top:817.5px;width:19.5px;height:18.5px;background:#38383c;border-radius:3px"></div>
<div class="t" style="left:119.8px;top:819.5px;width:20px;text-align:center;font-size:12.5px;line-height:15.0px;color:#8a8a8a;font-weight:700;">R</div>
<div style="left:150px;top:817.5px;width:19.5px;height:18.5px;background:#38383c;border-radius:3px"></div>
<div class="t" style="left:149.8px;top:819.5px;width:20px;text-align:center;font-size:12.5px;line-height:15.0px;color:#8a8a8a;font-weight:700;">S</div>
<div style="left:180.5px;top:817.5px;width:19.5px;height:18.5px;background:#38383c;border-radius:3px"></div>
<div class="t" style="left:180.2px;top:819.5px;width:20px;text-align:center;font-size:12.5px;line-height:15.0px;color:#8a8a8a;font-weight:700;">M</div>
<div style="left:221px;top:788px;width:10px;height:50px;background:#2b2b2f;border:1px solid #121214;box-sizing:border-box"></div>
<div style="left:222px;top:820px;width:8px;height:18px;background:#1ec81e"></div>
<div style="left:22px;top:845px;width:184px;height:63px;background:#28282c"></div>
<div style="left:207px;top:845px;width:38px;height:63px;background:#26262a"></div>
<div style="left:0px;top:844.8px;width:246px;height:1.2px;background:#18181a"></div>
<div style="left:22px;top:874px;width:184px;height:1px;background:#18181a"></div>
<div style="left:64px;top:845px;width:1px;height:29px;background:#18181a"></div>
<div class="t" style="left:24.4px;top:851.7px;width:40px;text-align:center;font-size:13px;line-height:15.6px;color:#e8e8e8;font-weight:400;">A9</div>
<div class="t" style="left:76.5px;top:851.5px;font-size:13.4px;line-height:16.1px;color:#e8e8e8;font-weight:400;">Simon Gtr 1</div>
<div style="left:32px;top:879px;width:46px;height:22px;background:#1e1e1f;border:1px solid #19191a;border-radius:2px;box-sizing:border-box"></div>
<div class="t" style="left:32.0px;top:882.7px;width:46px;text-align:center;font-size:13px;line-height:15.6px;color:#9a9a9a;font-weight:400;">0.0</div>
<svg style="position:absolute;left:94px;top:882px;" width="13" height="17" viewBox="0 0 13 17"><path d="M2.8 8.5V6.5a3.7 3.7 0 0 1 7.4 0V7" fill="none" stroke="#48484c" stroke-width="2.2"/><rect x="0.5" y="8.5" width="12" height="8" rx="1.5" fill="#48484c"/></svg>
<div style="left:120px;top:881.5px;width:19.5px;height:18.5px;background:#38383c;border-radius:3px"></div>
<div class="t" style="left:119.8px;top:883.5px;width:20px;text-align:center;font-size:12.5px;line-height:15.0px;color:#8a8a8a;font-weight:700;">R</div>
<div style="left:150px;top:881.5px;width:19.5px;height:18.5px;background:#38383c;border-radius:3px"></div>
<div class="t" style="left:149.8px;top:883.5px;width:20px;text-align:center;font-size:12.5px;line-height:15.0px;color:#8a8a8a;font-weight:700;">S</div>
<div style="left:180.5px;top:881.5px;width:19.5px;height:18.5px;background:#38383c;border-radius:3px"></div>
<div class="t" style="left:180.2px;top:883.5px;width:20px;text-align:center;font-size:12.5px;line-height:15.0px;color:#8a8a8a;font-weight:700;">M</div>
<div style="left:221px;top:852px;width:10px;height:50px;background:#2b2b2f;border:1px solid #121214;box-sizing:border-box"></div>
<div style="left:222px;top:872px;width:8px;height:4px;background:#f2e55c"></div>
<div style="left:222px;top:876px;width:8px;height:26px;background:#1ec81e"></div>
<div style="left:22px;top:909px;width:184px;height:63px;background:#28282c"></div>
<div style="left:207px;top:909px;width:38px;height:63px;background:#26262a"></div>
<div style="left:0px;top:908.8px;width:246px;height:1.2px;background:#18181a"></div>
<div style="left:22px;top:938px;width:184px;height:1px;background:#18181a"></div>
<div style="left:64px;top:909px;width:1px;height:29px;background:#18181a"></div>
<div class="t" style="left:24.4px;top:915.7px;width:40px;text-align:center;font-size:13px;line-height:15.6px;color:#e8e8e8;font-weight:400;">A10</div>
<div class="t" style="left:76.5px;top:915.5px;font-size:13.4px;line-height:16.1px;color:#e8e8e8;font-weight:400;">Simon DI</div>
<div style="left:32px;top:943px;width:46px;height:22px;background:#1e1e1f;border:1px solid #19191a;border-radius:2px;box-sizing:border-box"></div>
<div class="t" style="left:32.0px;top:946.7px;width:46px;text-align:center;font-size:13px;line-height:15.6px;color:#9a9a9a;font-weight:400;">0.0</div>
<svg style="position:absolute;left:94px;top:946px;" width="13" height="17" viewBox="0 0 13 17"><path d="M2.8 8.5V6.5a3.7 3.7 0 0 1 7.4 0V7" fill="none" stroke="#48484c" stroke-width="2.2"/><rect x="0.5" y="8.5" width="12" height="8" rx="1.5" fill="#48484c"/></svg>
<div style="left:120px;top:945.5px;width:19.5px;height:18.5px;background:#38383c;border-radius:3px"></div>
<div class="t" style="left:119.8px;top:947.5px;width:20px;text-align:center;font-size:12.5px;line-height:15.0px;color:#8a8a8a;font-weight:700;">R</div>
<div style="left:150px;top:945.5px;width:19.5px;height:18.5px;background:#38383c;border-radius:3px"></div>
<div class="t" style="left:149.8px;top:947.5px;width:20px;text-align:center;font-size:12.5px;line-height:15.0px;color:#8a8a8a;font-weight:700;">S</div>
<div style="left:180.5px;top:945.5px;width:19.5px;height:18.5px;background:#38383c;border-radius:3px"></div>
<div class="t" style="left:180.2px;top:947.5px;width:20px;text-align:center;font-size:12.5px;line-height:15.0px;color:#8a8a8a;font-weight:700;">M</div>
<div style="left:221px;top:916px;width:10px;height:50px;background:#2b2b2f;border:1px solid #121214;box-sizing:border-box"></div>
<div style="left:222px;top:944px;width:8px;height:22px;background:#1ec81e"></div>
<div style="left:22px;top:973px;width:184px;height:63px;background:#28282c"></div>
<div style="left:207px;top:973px;width:38px;height:63px;background:#26262a"></div>
<div style="left:0px;top:972.8px;width:246px;height:1.2px;background:#18181a"></div>
<div style="left:22px;top:1002px;width:184px;height:1px;background:#18181a"></div>
<div style="left:64px;top:973px;width:1px;height:29px;background:#18181a"></div>
<div class="t" style="left:24.4px;top:979.7px;width:40px;text-align:center;font-size:13px;line-height:15.6px;color:#e8e8e8;font-weight:400;">A11</div>
<div class="t" style="left:76.5px;top:979.5px;font-size:13.4px;line-height:16.1px;color:#e8e8e8;font-weight:400;">Sample</div>
<div style="left:32px;top:1007px;width:46px;height:22px;background:#1e1e1f;border:1px solid #19191a;border-radius:2px;box-sizing:border-box"></div>
<div class="t" style="left:32.0px;top:1010.7px;width:46px;text-align:center;font-size:13px;line-height:15.6px;color:#9a9a9a;font-weight:400;">0.0</div>
<svg style="position:absolute;left:94px;top:1010px;" width="13" height="17" viewBox="0 0 13 17"><path d="M2.8 8.5V6.5a3.7 3.7 0 0 1 7.4 0V7" fill="none" stroke="#48484c" stroke-width="2.2"/><rect x="0.5" y="8.5" width="12" height="8" rx="1.5" fill="#48484c"/></svg>
<div style="left:120px;top:1009.5px;width:19.5px;height:18.5px;background:#38383c;border-radius:3px"></div>
<div class="t" style="left:119.8px;top:1011.5px;width:20px;text-align:center;font-size:12.5px;line-height:15.0px;color:#8a8a8a;font-weight:700;">R</div>
<div style="left:150px;top:1009.5px;width:19.5px;height:18.5px;background:#38383c;border-radius:3px"></div>
<div class="t" style="left:149.8px;top:1011.5px;width:20px;text-align:center;font-size:12.5px;line-height:15.0px;color:#8a8a8a;font-weight:700;">S</div>
<div style="left:180.5px;top:1009.5px;width:19.5px;height:18.5px;background:#38383c;border-radius:3px"></div>
<div class="t" style="left:180.2px;top:1011.5px;width:20px;text-align:center;font-size:12.5px;line-height:15.0px;color:#8a8a8a;font-weight:700;">M</div>
<div style="left:219.5px;top:980px;width:13px;height:50px;background:#2b2b2f;border:1px solid #121214;box-sizing:border-box"></div>
<div style="left:225.5px;top:980px;width:1px;height:50px;background:#121214"></div>
<div style="left:22px;top:1037px;width:184px;height:63px;background:#28282c"></div>
<div style="left:207px;top:1037px;width:38px;height:63px;background:#26262a"></div>
<div style="left:0px;top:1036.8px;width:246px;height:1.2px;background:#18181a"></div>
<div style="left:22px;top:1066px;width:184px;height:1px;background:#18181a"></div>
<div style="left:64px;top:1037px;width:1px;height:29px;background:#18181a"></div>
<div class="t" style="left:24.4px;top:1043.7px;width:40px;text-align:center;font-size:13px;line-height:15.6px;color:#e8e8e8;font-weight:400;">A12</div>
<div class="t" style="left:76.5px;top:1043.5px;font-size:13.4px;line-height:16.1px;color:#e8e8e8;font-weight:400;">Ride</div>
<div style="left:32px;top:1071px;width:46px;height:22px;background:#1e1e1f;border:1px solid #19191a;border-radius:2px;box-sizing:border-box"></div>
<div class="t" style="left:32.0px;top:1074.7px;width:46px;text-align:center;font-size:13px;line-height:15.6px;color:#9a9a9a;font-weight:400;">0.0</div>
<svg style="position:absolute;left:94px;top:1074px;" width="13" height="17" viewBox="0 0 13 17"><path d="M2.8 8.5V6.5a3.7 3.7 0 0 1 7.4 0V7" fill="none" stroke="#48484c" stroke-width="2.2"/><rect x="0.5" y="8.5" width="12" height="8" rx="1.5" fill="#48484c"/></svg>
<div style="left:120px;top:1073.5px;width:19.5px;height:18.5px;background:#38383c;border-radius:3px"></div>
<div class="t" style="left:119.8px;top:1075.5px;width:20px;text-align:center;font-size:12.5px;line-height:15.0px;color:#8a8a8a;font-weight:700;">R</div>
<div style="left:150px;top:1073.5px;width:19.5px;height:18.5px;background:#38383c;border-radius:3px"></div>
<div class="t" style="left:149.8px;top:1075.5px;width:20px;text-align:center;font-size:12.5px;line-height:15.0px;color:#8a8a8a;font-weight:700;">S</div>
<div style="left:180.5px;top:1073.5px;width:19.5px;height:18.5px;background:#38383c;border-radius:3px"></div>
<div class="t" style="left:180.2px;top:1075.5px;width:20px;text-align:center;font-size:12.5px;line-height:15.0px;color:#8a8a8a;font-weight:700;">M</div>
<div style="left:221px;top:1044px;width:10px;height:50px;background:#2b2b2f;border:1px solid #121214;box-sizing:border-box"></div>
<div style="left:222px;top:1071px;width:8px;height:23px;background:#1ec81e"></div>
<div style="left:0px;top:1088px;width:246px;height:12px;background:#222225"></div>
<div style="left:0px;top:1088px;width:246px;height:1px;background:#18181a"></div>
<div style="left:246px;top:388px;width:1511px;height:712px;background:#1f1f22"></div>
<div style="left:246px;top:388px;width:1500px;height:9px;background:#0c1a12"></div>
<div style="left:246px;top:389px;width:1500px;height:7px;background:#234a35"></div>
<div style="left:246px;top:396px;width:1500px;height:3px;background:#0a140e"></div>
<div style="left:246px;top:399px;width:1500px;height:30px;background:#479169"></div>
<div style="left:246px;top:429px;width:1500px;height:31px;background:#234a35"></div>
<div style="left:246px;top:460px;width:1500px;height:3px;background:#0a140e"></div>
<div style="left:246px;top:463px;width:1500px;height:30px;background:#479169"></div>
<div style="left:246px;top:493px;width:1500px;height:31px;background:#234a35"></div>
<div style="left:246px;top:524px;width:1500px;height:3px;background:#0a140e"></div>
<div style="left:246px;top:527px;width:1500px;height:30px;background:#479169"></div>
<div style="left:246px;top:557px;width:1500px;height:31px;background:#234a35"></div>
<div style="left:246px;top:588px;width:1500px;height:3px;background:#0a140e"></div>
<div style="left:246px;top:591px;width:1500px;height:61px;background:#479169"></div>
<div style="left:246px;top:652px;width:1500px;height:3px;background:#0a140e"></div>
<div style="left:246px;top:655px;width:1500px;height:61px;background:#479169"></div>
<div style="left:246px;top:716px;width:1500px;height:3px;background:#0a140e"></div>
<div style="left:246px;top:719px;width:1500px;height:61px;background:#479169"></div>
<div style="left:246px;top:780px;width:1500px;height:3px;background:#0a140e"></div>
<div style="left:246px;top:783px;width:1500px;height:61px;background:#479169"></div>
<div style="left:246px;top:844px;width:1500px;height:3px;background:#0a140e"></div>
<div style="left:246px;top:847px;width:1500px;height:61px;background:#479169"></div>
<div style="left:246px;top:908px;width:1500px;height:3px;background:#0a140e"></div>
<div style="left:246px;top:911px;width:1500px;height:61px;background:#479169"></div>
<div style="left:246px;top:972px;width:1500px;height:3px;background:#0a140e"></div>
<div style="left:246px;top:975px;width:1500px;height:61px;background:#479169"></div>
<div style="left:246px;top:1036px;width:1500px;height:3px;background:#0a140e"></div>
<div style="left:246px;top:1039px;width:1500px;height:61px;background:#479169"></div>
<svg style="position:absolute;left:246px;top:388px;" width="1500" height="700" viewBox="0 0 1500 700"><rect x="0" y="56.5" width="1500" height="1" fill="#3a6a4e"/><rect x="0" y="27" width="1500" height="1" fill="#1c3a28" opacity="0.6"/><rect x="0" y="28" width="1500" height="1" fill="#e8f6ec"/><rect x="0" y="29" width="1500" height="1" fill="#1c3a28" opacity="0.6"/><rect x="0" y="120.5" width="1500" height="1" fill="#3a6a4e"/><rect x="0" y="91" width="1500" height="1" fill="#1c3a28" opacity="0.6"/><rect x="0" y="92" width="1500" height="1" fill="#e8f6ec"/><rect x="0" y="93" width="1500" height="1" fill="#1c3a28" opacity="0.6"/><rect x="0" y="184.5" width="1500" height="1" fill="#3a6a4e"/><rect x="0" y="155" width="1500" height="1" fill="#1c3a28" opacity="0.6"/><rect x="0" y="156" width="1500" height="1" fill="#e8f6ec"/><rect x="0" y="157" width="1500" height="1" fill="#1c3a28" opacity="0.6"/><rect x="0" y="219" width="1500" height="1" fill="#1c3a28" opacity="0.6"/><rect x="0" y="220" width="1500" height="1" fill="#e8f6ec"/><rect x="0" y="221" width="1500" height="1" fill="#1c3a28" opacity="0.6"/><rect x="0" y="283" width="1500" height="1" fill="#1c3a28" opacity="0.6"/><rect x="0" y="284" width="1500" height="1" fill="#e8f6ec"/><rect x="0" y="285" width="1500" height="1" fill="#1c3a28" opacity="0.6"/><rect x="0" y="347" width="1500" height="1" fill="#1c3a28" opacity="0.6"/><rect x="0" y="348" width="1500" height="1" fill="#e8f6ec"/><rect x="0" y="349" width="1500" height="1" fill="#1c3a28" opacity="0.6"/><rect x="0" y="411" width="1500" height="1" fill="#1c3a28" opacity="0.6"/><rect x="0" y="412" width="1500" height="1" fill="#e8f6ec"/><rect x="0" y="413" width="1500" height="1" fill="#1c3a28" opacity="0.6"/><rect x="0" y="475" width="1500" height="1" fill="#1c3a28" opacity="0.6"/><rect x="0" y="476" width="1500" height="1" fill="#e8f6ec"/><rect x="0" y="477" width="1500" height="1" fill="#1c3a28" opacity="0.6"/><rect x="0" y="539" width="1500" height="1" fill="#1c3a28" opacity="0.6"/><rect x="0" y="540" width="1500" height="1" fill="#e8f6ec"/><rect x="0" y="541" width="1500" height="1" fill="#1c3a28" opacity="0.6"/><rect x="0" y="603" width="1500" height="1" fill="#1c3a28" opacity="0.6"/><rect x="0" y="604" width="1500" height="1" fill="#e8f6ec"/><rect x="0" y="605" width="1500" height="1" fill="#1c3a28" opacity="0.6"/><rect x="0" y="667" width="1500" height="1" fill="#1c3a28" opacity="0.6"/><rect x="0" y="668" width="1500" height="1" fill="#e8f6ec"/><rect x="0" y="669" width="1500" height="1" fill="#1c3a28" opacity="0.6"/><path d="M0 91.5H1500" stroke="#1d4630" stroke-width="0.9"/><path d="M0 91 66 91 L66 92 0 92Z M862 91 1499 91 L1499 92 862 92Z" fill="#1f4a30"/><path d="M0 91.5 66 91.5 L66 91.5 0 91.5Z M862 91.5 1499 91.5 L1499 91.5 862 91.5Z" fill="#e4f2e8"/><path d="M0 121H1500" stroke="#1d4630" stroke-width="0.9"/><path d="M0 121 5 121 6 120.5 8 120.5 9 121 14 121 15 120.5 18 120.5 19 121 21 121 22 120.5 24 120.5 25 121 31 121 32 120.5 33 120.5 34 121 35 121 36 120.5 37 121 38 120.5 39 120.5 40 121 45 121 46 120.5 47 121 53 121 54 120.5 55 121 60 121 61 120.5 62 121 63 121 64 120.5 65 121 66 121 L66 121 65 121 64 121.5 63 121 62 121 61 121.5 60 121 55 121 54 121.5 53 121 47 121 46 121.5 45 121 40 121 39 121.5 38 121.5 37 121 36 121.5 35 121 34 121 33 121.5 32 121.5 31 121 25 121 24 121.5 22 121.5 21 121 19 121 18 121.5 15 121.5 14 121 9 121 8 121.5 6 121.5 5 121 0 121Z M862 121 863 120.5 864 121 868 121 869 119 870 120.5 874 120.5 875 121 876 121 877 120.5 878 120.5 879 121 880 120.5 881 121 882 120.5 883 121 887 121 888 120.5 889 121 892 121 893 120.5 894 121 896 121 897 120.5 898 121 902 121 903 120.5 904 121 907 121 908 120.5 909 121 910 121 911 120.5 912 121 913 120.5 914 121 919 121 920 120.5 921 120.5 922 119 923 121 927 121 928 120.5 929 121 930 121 931 120.5 932 121 933 120.5 934 121 935 120.5 936 121 937 119 938 120.5 939 121 941 121 942 120.5 944 120.5 945 121 946 121 947 120.5 948 121 949 120.5 950 121 951 121 952 120.5 953 121 954 120.5 955 120.5 956 121 957 120.5 958 120.5 959 121 960 121 961 120.5 962 121 963 120.5 964 121 968 121 969 120.5 970 120.5 971 121 972 121 973 120.5 974 121 975 120.5 976 121 977 120.5 979 120.5 980 121 981 120.5 982 121 984 121 985 120.5 986 120.5 987 121 992 121 993 120.5 994 121 996 121 997 120.5 998 121 999 121 1000 120.5 1001 120.5 1002 121 1004 121 1005 120.5 1006 121 1008 121 1009 120.5 1010 121 1012 121 1013 120.5 1014 121 1015 121 1016 120.5 1017 120.5 1018 121 1019 120.5 1020 121 1021 121 1022 120.5 1023 121 1024 120.5 1025 121 1026 120.5 1027 121 1031 121 1032 120.5 1033 120.5 1034 121 1036 121 1037 119 1038 120.5 1039 121 1041 121 1042 120.5 1043 121 1044 119 1045 120.5 1046 121 1047 120.5 1048 121 1049 121 1050 119 1051 121 1052 120.5 1053 121 1054 120.5 1055 120.5 1056 121 1058 121 1059 120.5 1060 121 1064 121 1065 120.5 1066 121 1067 120.5 1068 121 1073 121 1074 120.5 1075 121 1080 121 1081 120.5 1085 120.5 1086 121 1089 121 1090 120.5 1092 120.5 1093 121 1094 121 1095 120.5 1096 120.5 1097 121 1098 120.5 1099 121 1100 120.5 1101 121 1102 121 1103 120.5 1104 120.5 1105 121 1108 121 1109 120.5 1110 120.5 1111 121 1112 121 1113 120.5 1114 121 1118 121 1119 120.5 1120 121 1121 121 1122 120.5 1123 119 1124 121 1125 121 1126 120.5 1128 120.5 1129 121 1133 121 1134 120.5 1136 120.5 1137 121 1139 121 1140 120.5 1141 121 1142 120.5 1143 120.5 1144 121 1145 120.5 1146 121 1150 121 1151 119 1152 121 1153 121 1154 120.5 1155 121 1156 120.5 1158 120.5 1159 121 1160 120.5 1162 120.5 1163 121 1164 120.5 1165 120.5 1166 121 1168 121 1169 120.5 1170 121 1172 121 1173 120.5 1174 121 1175 121 1176 120.5 1177 120.5 1178 121 1181 121 1182 120.5 1183 121 1184 120.5 1185 121 1186 121 1187 120.5 1188 120.5 1189 121 1191 121 1192 120.5 1193 121 1194 120.5 1198 120.5 1199 121 1200 120.5 1201 120.5 1202 121 1204 121 1205 120.5 1206 121 1207 121 1208 120.5 1209 121 1212 121 1213 120.5 1214 121 1215 121 1216 120.5 1217 121 1218 121 1219 120.5 1222 120.5 1223 121 1224 120.5 1225 121 1226 121 1227 120.5 1228 121 1229 121 1230 120.5 1231 121 1233 121 1234 119 1235 121 1236 121 1237 120.5 1239 120.5 1240 121 1241 120.5 1242 120.5 1243 121 1244 121 1245 120.5 1246 119 1247 121 1248 121 1249 120.5 1250 121 1253 121 1254 120.5 1256 120.5 1257 121 1261 121 1262 120.5 1264 120.5 1265 121 1266 120.5 1268 120.5 1269 121 1271 121 1272 120.5 1273 120.5 1274 121 1275 120.5 1276 121 1277 121 1278 120.5 1279 121 1285 121 1286 120.5 1287 121 1288 120.5 1289 121 1290 120.5 1291 121 1293 121 1294 120.5 1295 121 1296 120.5 1297 121 1300 121 1301 120.5 1302 121 1303 121 1304 120.5 1305 121 1306 120.5 1307 121 1309 121 1310 120.5 1311 119 1312 120.5 1313 121 1314 120.5 1315 121 1316 120.5 1317 121 1321 121 1322 120.5 1323 121 1324 121 1325 120.5 1326 121 1327 121 1328 120.5 1331 120.5 1332 121 1333 120.5 1334 120.5 1335 121 1336 120.5 1337 121 1341 121 1342 119 1343 121 1344 120.5 1346 120.5 1347 121 1355 121 1356 120.5 1357 120.5 1358 121 1359 121 1360 120.5 1361 121 1363 121 1364 120.5 1366 120.5 1367 119 1368 121 1369 121 1370 120.5 1371 121 1378 121 1379 120.5 1380 120.5 1381 121 1384 121 1385 120.5 1386 121 1387 120.5 1388 121 1392 121 1393 120.5 1394 121 1395 121 1396 120.5 1397 121 1405 121 1406 120.5 1407 119 1408 120.5 1409 120.5 1410 121 1414 121 1415 120.5 1416 121 1418 121 1419 120.5 1420 121 1421 120.5 1422 121 1423 120.5 1424 121 1425 121 1426 120.5 1427 120.5 1428 121 1429 120.5 1430 120.5 1431 121 1435 121 1436 120.5 1437 121 1439 121 1440 120.5 1442 120.5 1443 121 1446 121 1447 120.5 1448 120.5 1449 119 1450 121 1452 121 1453 120.5 1454 121 1455 120.5 1457 120.5 1458 121 1459 120.5 1461 120.5 1462 121 1472 121 1473 120.5 1474 121 1477 121 1478 120.5 1479 121 1485 121 1486 120.5 1487 121 1488 120.5 1489 121 1492 121 1493 120.5 1494 121 1499 121 L1499 121 1494 121 1493 121.5 1492 121 1489 121 1488 121.5 1487 121 1486 121.5 1485 121 1479 121 1478 121.5 1477 121 1474 121 1473 121.5 1472 121 1462 121 1461 121.5 1459 121.5 1458 121 1457 121.5 1455 121.5 1454 121 1453 121.5 1452 121 1450 121 1449 123 1448 121.5 1447 121.5 1446 121 1443 121 1442 121.5 1440 121.5 1439 121 1437 121 1436 121.5 1435 121 1431 121 1430 121.5 1429 121.5 1428 121 1427 121.5 1426 121.5 1425 121 1424 121 1423 121.5 1422 121 1421 121.5 1420 121 1419 121.5 1418 121 1416 121 1415 121.5 1414 121 1410 121 1409 121.5 1408 121.5 1407 123 1406 121.5 1405 121 1397 121 1396 121.5 1395 121 1394 121 1393 121.5 1392 121 1388 121 1387 121.5 1386 121 1385 121.5 1384 121 1381 121 1380 121.5 1379 121.5 1378 121 1371 121 1370 121.5 1369 121 1368 121 1367 123 1366 121.5 1364 121.5 1363 121 1361 121 1360 121.5 1359 121 1358 121 1357 121.5 1356 121.5 1355 121 1347 121 1346 121.5 1344 121.5 1343 121 1342 123 1341 121 1337 121 1336 121.5 1335 121 1334 121.5 1333 121.5 1332 121 1331 121.5 1328 121.5 1327 121 1326 121 1325 121.5 1324 121 1323 121 1322 121.5 1321 121 1317 121 1316 121.5 1315 121 1314 121.5 1313 121 1312 121.5 1311 123 1310 121.5 1309 121 1307 121 1306 121.5 1305 121 1304 121.5 1303 121 1302 121 1301 121.5 1300 121 1297 121 1296 121.5 1295 121 1294 121.5 1293 121 1291 121 1290 121.5 1289 121 1288 121.5 1287 121 1286 121.5 1285 121 1279 121 1278 121.5 1277 121 1276 121 1275 121.5 1274 121 1273 121.5 1272 121.5 1271 121 1269 121 1268 121.5 1266 121.5 1265 121 1264 121.5 1262 121.5 1261 121 1257 121 1256 121.5 1254 121.5 1253 121 1250 121 1249 121.5 1248 121 1247 121 1246 123 1245 121.5 1244 121 1243 121 1242 121.5 1241 121.5 1240 121 1239 121.5 1237 121.5 1236 121 1235 121 1234 123 1233 121 1231 121 1230 121.5 1229 121 1228 121 1227 121.5 1226 121 1225 121 1224 121.5 1223 121 1222 121.5 1219 121.5 1218 121 1217 121 1216 121.5 1215 121 1214 121 1213 121.5 1212 121 1209 121 1208 121.5 1207 121 1206 121 1205 121.5 1204 121 1202 121 1201 121.5 1200 121.5 1199 121 1198 121.5 1194 121.5 1193 121 1192 121.5 1191 121 1189 121 1188 121.5 1187 121.5 1186 121 1185 121 1184 121.5 1183 121 1182 121.5 1181 121 1178 121 1177 121.5 1176 121.5 1175 121 1174 121 1173 121.5 1172 121 1170 121 1169 121.5 1168 121 1166 121 1165 121.5 1164 121.5 1163 121 1162 121.5 1160 121.5 1159 121 1158 121.5 1156 121.5 1155 121 1154 121.5 1153 121 1152 121 1151 123 1150 121 1146 121 1145 121.5 1144 121 1143 121.5 1142 121.5 1141 121 1140 121.5 1139 121 1137 121 1136 121.5 1134 121.5 1133 121 1129 121 1128 121.5 1126 121.5 1125 121 1124 121 1123 123 1122 121.5 1121 121 1120 121 1119 121.5 1118 121 1114 121 1113 121.5 1112 121 1111 121 1110 121.5 1109 121.5 1108 121 1105 121 1104 121.5 1103 121.5 1102 121 1101 121 1100 121.5 1099 121 1098 121.5 1097 121 1096 121.5 1095 121.5 1094 121 1093 121 1092 121.5 1090 121.5 1089 121 1086 121 1085 121.5 1081 121.5 1080 121 1075 121 1074 121.5 1073 121 1068 121 1067 121.5 1066 121 1065 121.5 1064 121 1060 121 1059 121.5 1058 121 1056 121 1055 121.5 1054 121.5 1053 121 1052 121.5 1051 121 1050 123 1049 121 1048 121 1047 121.5 1046 121 1045 121.5 1044 123 1043 121 1042 121.5 1041 121 1039 121 1038 121.5 1037 123 1036 121 1034 121 1033 121.5 1032 121.5 1031 121 1027 121 1026 121.5 1025 121 1024 121.5 1023 121 1022 121.5 1021 121 1020 121 1019 121.5 1018 121 1017 121.5 1016 121.5 1015 121 1014 121 1013 121.5 1012 121 1010 121 1009 121.5 1008 121 1006 121 1005 121.5 1004 121 1002 121 1001 121.5 1000 121.5 999 121 998 121 997 121.5 996 121 994 121 993 121.5 992 121 987 121 986 121.5 985 121.5 984 121 982 121 981 121.5 980 121 979 121.5 977 121.5 976 121 975 121.5 974 121 973 121.5 972 121 971 121 970 121.5 969 121.5 968 121 964 121 963 121.5 962 121 961 121.5 960 121 959 121 958 121.5 957 121.5 956 121 955 121.5 954 121.5 953 121 952 121.5 951 121 950 121 949 121.5 948 121 947 121.5 946 121 945 121 944 121.5 942 121.5 941 121 939 121 938 121.5 937 123 936 121 935 121.5 934 121 933 121.5 932 121 931 121.5 930 121 929 121 928 121.5 927 121 923 121 922 123 921 121.5 920 121.5 919 121 914 121 913 121.5 912 121 911 121.5 910 121 909 121 908 121.5 907 121 904 121 903 121.5 902 121 898 121 897 121.5 896 121 894 121 893 121.5 892 121 889 121 888 121.5 887 121 883 121 882 121.5 881 121 880 121.5 879 121 878 121.5 877 121.5 876 121 875 121 874 121.5 870 121.5 869 123 868 121 864 121 863 121.5 862 121Z" fill="#1f4a30"/><path d="M0 121 66 121 L66 121 0 121Z M862 121 867 121 868 120.5 869 120 870 120.5 871 121 920 121 921 120.5 922 120 923 120.5 924 121 935 121 936 120.5 937 120 938 120.5 939 121 1035 121 1036 120.5 1037 120 1038 120.5 1039 121 1042 121 1043 120.5 1044 120 1045 120.5 1046 121 1048 121 1049 120.5 1050 120 1051 120.5 1052 121 1121 121 1122 120.5 1123 120 1124 120.5 1125 121 1149 121 1150 120.5 1151 120 1152 120.5 1153 121 1232 121 1233 120.5 1234 120 1235 120.5 1236 121 1244 121 1245 120.5 1246 120 1247 120.5 1248 121 1309 121 1310 120.5 1311 120 1312 120.5 1313 121 1340 121 1341 120.5 1342 120 1343 120.5 1344 121 1365 121 1366 120.5 1367 120 1368 120.5 1369 121 1405 121 1406 120.5 1407 120 1408 120.5 1409 121 1447 121 1448 120.5 1449 120 1450 120.5 1451 121 1499 121 L1499 121 1451 121 1450 121.5 1449 122 1448 121.5 1447 121 1409 121 1408 121.5 1407 122 1406 121.5 1405 121 1369 121 1368 121.5 1367 122 1366 121.5 1365 121 1344 121 1343 121.5 1342 122 1341 121.5 1340 121 1313 121 1312 121.5 1311 122 1310 121.5 1309 121 1248 121 1247 121.5 1246 122 1245 121.5 1244 121 1236 121 1235 121.5 1234 122 1233 121.5 1232 121 1153 121 1152 121.5 1151 122 1150 121.5 1149 121 1125 121 1124 121.5 1123 122 1122 121.5 1121 121 1052 121 1051 121.5 1050 122 1049 121.5 1048 121 1046 121 1045 121.5 1044 122 1043 121.5 1042 121 1039 121 1038 121.5 1037 122 1036 121.5 1035 121 939 121 938 121.5 937 122 936 121.5 935 121 924 121 923 121.5 922 122 921 121.5 920 121 871 121 870 121.5 869 122 868 121.5 867 121 862 121Z" fill="#e4f2e8"/><path d="M0 154.5H1500" stroke="#1d4630" stroke-width="0.9"/><path d="M0 154 1 153.5 5 153.5 6 154 7 154 8 153.5 9 154 10 153.5 11 154 18 154 19 153.5 20 153.5 21 154 22 153.5 23 154 26 154 27 153.5 28 154 29 154 30 153.5 31 153.5 32 154 33 153.5 34 154 35 153.5 36 154 37 153.5 40 153.5 41 154 48 154 49 153.5 50 154 51 154 52 153.5 53 154 55 154 56 153.5 57 154 58 153.5 59 154 60 153.5 61 153.5 62 154 63 153.5 64 154 66 154 L66 155 64 155 63 155.5 62 155 61 155.5 60 155.5 59 155 58 155.5 57 155 56 155.5 55 155 53 155 52 155.5 51 155 50 155 49 155.5 48 155 41 155 40 155.5 37 155.5 36 155 35 155.5 34 155 33 155.5 32 155 31 155.5 30 155.5 29 155 28 155 27 155.5 26 155 23 155 22 155.5 21 155 20 155.5 19 155.5 18 155 11 155 10 155.5 9 155 8 155.5 7 155 6 155 5 155.5 1 155.5 0 155Z M862 154 863 154 864 153.5 865 154 866 153.5 867 153.5 868 147 869 145.5 870 151 871 147.5 872 149 873 147 874 150.5 875 147.5 876 151 877 152.5 878 153 879 153 880 153.5 882 153.5 883 154 884 153.5 885 154 890 154 891 153.5 892 153.5 893 154 894 154 895 153.5 896 154 899 154 900 153.5 901 154 903 154 904 153.5 905 154 906 154 907 153.5 908 154 909 153.5 910 153.5 911 154 912 153.5 913 154 915 154 916 153.5 917 154 918 154 919 152.5 920 142.5 921 150 922 147.5 923 149 924 149.5 925 150 926 151 927 149 928 152.5 929 153 930 153 931 153.5 933 153.5 934 154 936 154 937 153.5 938 153.5 939 154 940 153.5 942 153.5 943 154 944 153.5 945 154 946 153.5 947 154 948 154 949 153.5 950 153.5 951 154 952 153.5 953 154 959 154 960 153.5 961 154 962 153.5 963 154 964 154 965 153.5 966 153.5 967 154 968 153.5 972 153.5 973 154 975 154 976 153.5 977 153.5 978 154 979 153.5 981 153.5 982 154 983 153.5 984 154 987 154 988 153.5 989 154 990 153.5 991 154 995 154 996 153.5 997 154 1011 154 1012 153.5 1013 154 1017 154 1018 153.5 1019 154 1025 154 1026 153.5 1027 153.5 1028 154 1029 153.5 1030 154 1034 154 1035 153.5 1036 153.5 1037 154 1038 154 1039 153.5 1040 154 1045 154 1046 153.5 1047 154 1050 154 1051 153.5 1052 154 1053 153.5 1054 153.5 1055 154 1056 154 1057 153.5 1058 154 1060 154 1061 153.5 1062 154 1068 154 1069 153.5 1070 153.5 1071 154 1073 154 1074 153.5 1075 153.5 1076 154 1078 154 1079 153.5 1080 154 1084 154 1085 153.5 1086 154 1087 153.5 1088 154 1094 154 1095 153.5 1096 154 1099 154 1100 153.5 1101 153.5 1102 154 1103 154 1104 153.5 1105 154 1106 154 1107 153.5 1108 154 1109 154 1110 153.5 1111 154 1112 154 1113 153.5 1114 154 1115 154 1116 153.5 1117 154 1118 153.5 1119 153.5 1120 154 1121 154 1122 153.5 1123 153.5 1124 154 1130 154 1131 153.5 1132 154 1133 154 1134 153.5 1135 153.5 1136 154 1137 154 1138 153.5 1141 153.5 1142 154 1143 153.5 1144 154 1145 154 1146 153.5 1147 153.5 1148 154 1149 154 1150 146.5 1151 145 1152 151 1153 147.5 1154 148.5 1155 146.5 1156 150.5 1157 147 1158 151 1159 152.5 1160 152.5 1161 153 1162 153.5 1163 153.5 1164 153 1165 145.5 1166 151 1167 150 1168 151 1170 151 1171 152 1172 150.5 1173 153.5 1174 153.5 1175 152.5 1176 144 1177 150.5 1178 149 1179 150.5 1181 150.5 1182 151.5 1183 149.5 1184 153.5 1185 153.5 1186 154 1187 153.5 1188 154 1189 153.5 1190 154 1191 152.5 1192 142.5 1193 150 1194 148.5 1195 150 1196 149.5 1197 150 1198 151 1199 149 1200 153.5 1201 152.5 1202 153.5 1203 149.5 1204 144.5 1205 152 1206 148 1207 150.5 1208 148 1209 151.5 1210 149 1211 150.5 1212 152 1213 153 1214 153.5 1215 154 1220 154 1221 153.5 1222 154 1223 153.5 1224 154 1225 153.5 1226 154 1228 154 1229 153.5 1230 154 1231 154 1232 148.5 1233 143 1234 152 1235 146.5 1236 148.5 1237 147 1238 150.5 1239 148.5 1240 150 1241 152 1242 152.5 1243 153 1244 153.5 1245 149.5 1246 148.5 1247 152.5 1248 150 1249 151.5 1250 149.5 1251 153 1252 149.5 1253 152 1254 153 1255 153.5 1256 154 1257 154 1258 149 1259 148 1260 152 1261 150 1262 151.5 1263 149.5 1264 153 1265 149.5 1266 152 1267 153 1268 153.5 1269 153.5 1270 154 1271 154 1272 152.5 1273 143 1274 150.5 1275 149 1276 150.5 1277 150 1278 150.5 1279 151 1280 149.5 1281 153.5 1282 153 1283 153.5 1284 154 1285 150.5 1286 144.5 1287 151.5 1288 148 1289 150.5 1290 149 1291 151 1292 150 1293 150.5 1294 152 1295 153 1296 153.5 1297 154 1298 154 1299 152.5 1300 142.5 1301 150 1302 148.5 1303 150 1304 149.5 1305 150 1306 151 1307 149 1308 153.5 1309 153 1310 153.5 1311 154 1313 154 1314 153.5 1315 154 1322 154 1323 153.5 1324 154 1325 153.5 1326 154 1332 154 1333 153.5 1334 153.5 1335 154 1336 154 1337 153.5 1338 154 1341 154 1342 153.5 1343 152 1344 140 1345 149 1346 146 1347 147.5 1348 149 1349 149 1350 150 1351 148 1352 152 1353 152.5 1354 152.5 1355 143.5 1356 150.5 1357 149 1358 150.5 1359 150 1360 150.5 1361 151 1362 149.5 1363 153.5 1364 153 1365 153.5 1366 154 1367 154 1368 153.5 1369 149 1370 146.5 1371 152.5 1372 149 1373 151 1374 148 1375 152 1376 149.5 1377 151.5 1378 152 1379 153 1380 153.5 1381 154 1382 148 1383 147 1384 152 1385 149 1386 151 1387 148.5 1388 152.5 1389 148.5 1390 151.5 1391 153 1392 153.5 1393 154 1394 154 1395 147.5 1396 148 1397 151.5 1398 150 1399 151.5 1400 149 1401 152.5 1402 148.5 1403 152 1404 152.5 1405 153.5 1406 153.5 1407 153 1408 144.5 1409 150.5 1410 149.5 1411 151 1412 150.5 1413 151 1414 151.5 1415 150 1416 143 1417 150 1418 149 1419 150.5 1420 150 1421 150 1422 151 1423 149.5 1424 153.5 1425 152.5 1426 153.5 1427 154 1432 154 1433 153.5 1434 154 1436 154 1437 153.5 1439 153.5 1440 154 1442 154 1443 153.5 1444 154 1447 154 1448 153.5 1449 152.5 1450 142 1451 149.5 1452 147 1453 148.5 1454 149.5 1455 150 1456 150.5 1457 149 1458 152.5 1459 152.5 1460 153 1461 149 1462 148 1463 152 1464 150 1465 151.5 1466 149.5 1467 153 1468 149.5 1469 152 1470 153 1471 153.5 1473 153.5 1474 154 1475 153 1476 144.5 1477 150.5 1478 149.5 1479 151 1480 150.5 1481 151 1482 151.5 1483 150 1484 153.5 1485 153 1486 152.5 1487 143.5 1488 150.5 1489 149 1490 150.5 1491 150 1492 150.5 1493 151 1494 149.5 1495 153.5 1496 152.5 1497 145.5 1498 151 1499 150 L1499 159 1498 158 1497 163.5 1496 156.5 1495 155.5 1494 159.5 1493 158 1492 158.5 1491 159 1490 158.5 1489 160 1488 158.5 1487 165.5 1486 156.5 1485 156 1484 155.5 1483 159 1482 157.5 1481 158 1480 158.5 1479 158 1478 159.5 1477 158.5 1476 164.5 1475 156 1474 155 1473 155.5 1471 155.5 1470 156 1469 157 1468 159.5 1467 156 1466 159.5 1465 157.5 1464 159 1463 157 1462 161 1461 160 1460 156 1459 156.5 1458 156.5 1457 160 1456 158.5 1455 159 1454 159.5 1453 160.5 1452 162 1451 159.5 1450 167 1449 156.5 1448 155.5 1447 155 1444 155 1443 155.5 1442 155 1440 155 1439 155.5 1437 155.5 1436 155 1434 155 1433 155.5 1432 155 1427 155 1426 155.5 1425 156.5 1424 155.5 1423 159.5 1422 158 1421 159 1420 159 1419 158.5 1418 160 1417 159 1416 166 1415 159 1414 157.5 1413 158 1412 158.5 1411 158 1410 159.5 1409 158.5 1408 164.5 1407 156 1406 155.5 1405 155.5 1404 156.5 1403 157 1402 160.5 1401 156.5 1400 160 1399 157.5 1398 159 1397 157.5 1396 161 1395 161.5 1394 155 1393 155 1392 155.5 1391 156 1390 157.5 1389 160.5 1388 156.5 1387 160.5 1386 158 1385 160 1384 157 1383 162 1382 161 1381 155 1380 155.5 1379 156 1378 157 1377 157.5 1376 159.5 1375 157 1374 161 1373 158 1372 160 1371 156.5 1370 162.5 1369 160 1368 155.5 1367 155 1366 155 1365 155.5 1364 156 1363 155.5 1362 159.5 1361 158 1360 158.5 1359 159 1358 158.5 1357 160 1356 158.5 1355 165.5 1354 156.5 1353 156.5 1352 157 1351 161 1350 159 1349 160 1348 160 1347 161.5 1346 163 1345 160 1344 169 1343 157 1342 155.5 1341 155 1338 155 1337 155.5 1336 155 1335 155 1334 155.5 1333 155.5 1332 155 1326 155 1325 155.5 1324 155 1323 155.5 1322 155 1315 155 1314 155.5 1313 155 1311 155 1310 155.5 1309 156 1308 155.5 1307 160 1306 158 1305 159 1304 159.5 1303 159 1302 160.5 1301 159 1300 166.5 1299 156.5 1298 155 1297 155 1296 155.5 1295 156 1294 157 1293 158.5 1292 159 1291 158 1290 160 1289 158.5 1288 161 1287 157.5 1286 164.5 1285 158.5 1284 155 1283 155.5 1282 156 1281 155.5 1280 159.5 1279 158 1278 158.5 1277 159 1276 158.5 1275 160 1274 158.5 1273 166 1272 156.5 1271 155 1270 155 1269 155.5 1268 155.5 1267 156 1266 157 1265 159.5 1264 156 1263 159.5 1262 157.5 1261 159 1260 157 1259 161 1258 160 1257 155 1256 155 1255 155.5 1254 156 1253 157 1252 159.5 1251 156 1250 159.5 1249 157.5 1248 159 1247 156.5 1246 160.5 1245 159.5 1244 155.5 1243 156 1242 156.5 1241 157 1240 159 1239 160.5 1238 158.5 1237 162 1236 160.5 1235 162.5 1234 157 1233 166 1232 160.5 1231 155 1230 155 1229 155.5 1228 155 1226 155 1225 155.5 1224 155 1223 155.5 1222 155 1221 155.5 1220 155 1215 155 1214 155.5 1213 156 1212 157 1211 158.5 1210 160 1209 157.5 1208 161 1207 158.5 1206 161 1205 157 1204 164.5 1203 159.5 1202 155.5 1201 156.5 1200 155.5 1199 160 1198 158 1197 159 1196 159.5 1195 159 1194 160.5 1193 159 1192 166.5 1191 156.5 1190 155 1189 155.5 1188 155 1187 155.5 1186 155 1185 155.5 1184 155.5 1183 159.5 1182 157.5 1181 158.5 1179 158.5 1178 160 1177 158.5 1176 165 1175 156.5 1174 155.5 1173 155.5 1172 158.5 1171 157 1170 158 1168 158 1167 159 1166 158 1165 163.5 1164 156 1163 155.5 1162 155.5 1161 156 1160 156.5 1159 156.5 1158 158 1157 162 1156 158.5 1155 162.5 1154 160.5 1153 161.5 1152 158 1151 164 1150 162.5 1149 155 1148 155 1147 155.5 1146 155.5 1145 155 1144 155 1143 155.5 1142 155 1141 155.5 1138 155.5 1137 155 1136 155 1135 155.5 1134 155.5 1133 155 1132 155 1131 155.5 1130 155 1124 155 1123 155.5 1122 155.5 1121 155 1120 155 1119 155.5 1118 155.5 1117 155 1116 155.5 1115 155 1114 155 1113 155.5 1112 155 1111 155 1110 155.5 1109 155 1108 155 1107 155.5 1106 155 1105 155 1104 155.5 1103 155 1102 155 1101 155.5 1100 155.5 1099 155 1096 155 1095 155.5 1094 155 1088 155 1087 155.5 1086 155 1085 155.5 1084 155 1080 155 1079 155.5 1078 155 1076 155 1075 155.5 1074 155.5 1073 155 1071 155 1070 155.5 1069 155.5 1068 155 1062 155 1061 155.5 1060 155 1058 155 1057 155.5 1056 155 1055 155 1054 155.5 1053 155.5 1052 155 1051 155.5 1050 155 1047 155 1046 155.5 1045 155 1040 155 1039 155.5 1038 155 1037 155 1036 155.5 1035 155.5 1034 155 1030 155 1029 155.5 1028 155 1027 155.5 1026 155.5 1025 155 1019 155 1018 155.5 1017 155 1013 155 1012 155.5 1011 155 997 155 996 155.5 995 155 991 155 990 155.5 989 155 988 155.5 987 155 984 155 983 155.5 982 155 981 155.5 979 155.5 978 155 977 155.5 976 155.5 975 155 973 155 972 155.5 968 155.5 967 155 966 155.5 965 155.5 964 155 963 155 962 155.5 961 155 960 155.5 959 155 953 155 952 155.5 951 155 950 155.5 949 155.5 948 155 947 155 946 155.5 945 155 944 155.5 943 155 942 155.5 940 155.5 939 155 938 155.5 937 155.5 936 155 934 155 933 155.5 931 155.5 930 156 929 156 928 156.5 927 160 926 158 925 159 924 159.5 923 160 922 161.5 921 159 920 166.5 919 156.5 918 155 917 155 916 155.5 915 155 913 155 912 155.5 911 155 910 155.5 909 155.5 908 155 907 155.5 906 155 905 155 904 155.5 903 155 901 155 900 155.5 899 155 896 155 895 155.5 894 155 893 155 892 155.5 891 155.5 890 155 885 155 884 155.5 883 155 882 155.5 880 155.5 879 156 878 156 877 156.5 876 158 875 161.5 874 158.5 873 162 872 160 871 161.5 870 158 869 163.5 868 162 867 155.5 866 155.5 865 155 864 155.5 863 155 862 155Z" fill="#1f4a30"/><path d="M0 154 5 154 6 154.5 7 154.5 8 154 10 154 11 154.5 18 154.5 19 154 20 154 21 154.5 22 154 23 154.5 24 154 25 154.5 26 154.5 27 154 28 154.5 29 154.5 30 154 31 154 32 154.5 33 154 34 154.5 35 154 36 154.5 37 154 40 154 41 154.5 46 154.5 47 154 48 154.5 49 154 50 154.5 51 154.5 52 154 53 154.5 55 154.5 56 154 57 154.5 58 154 59 154.5 60 154 61 154 62 154.5 63 154 64 154.5 66 154.5 L66 154.5 64 154.5 63 155 62 154.5 61 155 60 155 59 154.5 58 155 57 154.5 56 155 55 154.5 53 154.5 52 155 51 154.5 50 154.5 49 155 48 154.5 47 155 46 154.5 41 154.5 40 155 37 155 36 154.5 35 155 34 154.5 33 155 32 154.5 31 155 30 155 29 154.5 28 154.5 27 155 26 154.5 25 154.5 24 155 23 154.5 22 155 21 154.5 20 155 19 155 18 154.5 11 154.5 10 155 8 155 7 154.5 6 154.5 5 155 0 155Z M862 154.5 863 154.5 864 154 865 154.5 866 154 867 154 868 149 869 145.5 870 147 871 148.5 872 149.5 873 150.5 874 151 875 151 876 152 877 152.5 878 153 879 153.5 881 153.5 882 154 886 154 887 154.5 890 154.5 891 154 892 154 893 154.5 894 154.5 895 154 896 154.5 898 154.5 899 154 900 154 901 154.5 903 154.5 904 154 905 154.5 906 154.5 907 154 908 154.5 909 154 912 154 913 154.5 915 154.5 916 154 917 154.5 918 154.5 919 153 920 145.5 921 147 922 148.5 923 149.5 924 150.5 925 150 926 151.5 927 150.5 928 152 929 153 930 153.5 932 153.5 933 154 938 154 939 154.5 940 154 944 154 945 154.5 946 154 947 154.5 948 154.5 949 154 950 154 951 154.5 952 154 953 154 954 154.5 957 154.5 958 154 959 154.5 960 154 962 154 963 154.5 964 154 966 154 967 154.5 968 154 972 154 973 154.5 975 154.5 976 154 977 154 978 154.5 979 154 981 154 982 154.5 983 154 984 154.5 985 154 986 154.5 987 154 990 154 991 154.5 993 154.5 994 154 995 154.5 996 154 997 154 998 154.5 1008 154.5 1009 154 1010 154 1011 154.5 1012 154 1013 154.5 1017 154.5 1018 154 1019 154.5 1020 154.5 1021 154 1022 154.5 1025 154.5 1026 154 1027 154 1028 154.5 1029 154 1030 154 1031 154.5 1032 154.5 1033 154 1034 154.5 1035 154 1037 154 1038 154.5 1039 154 1040 154.5 1042 154.5 1043 154 1044 154.5 1045 154 1046 154 1047 154.5 1050 154.5 1051 154 1052 154.5 1053 154 1055 154 1056 154.5 1057 154 1058 154.5 1060 154.5 1061 154 1062 154.5 1065 154.5 1066 154 1067 154.5 1068 154.5 1069 154 1070 154 1071 154.5 1073 154.5 1074 154 1075 154 1076 154.5 1078 154.5 1079 154 1080 154.5 1081 154 1082 154.5 1083 154 1085 154 1086 154.5 1087 154 1088 154.5 1094 154.5 1095 154 1096 154 1097 154.5 1099 154.5 1100 154 1101 154 1102 154.5 1103 154.5 1104 154 1105 154.5 1106 154.5 1107 154 1108 154 1109 154.5 1110 154 1111 154.5 1112 154.5 1113 154 1114 154.5 1115 154.5 1116 154 1117 154.5 1118 154 1119 154 1120 154.5 1121 154.5 1122 154 1123 154 1124 154.5 1129 154.5 1130 154 1131 154 1132 154.5 1133 154.5 1134 154 1136 154 1137 154.5 1138 154 1141 154 1142 154.5 1143 154 1144 154.5 1145 154 1147 154 1148 154.5 1149 154.5 1150 148.5 1151 145 1152 147 1153 148 1154 149.5 1155 148 1156 150.5 1157 150.5 1158 151.5 1159 152.5 1160 153 1161 153 1162 153.5 1164 153.5 1165 147.5 1166 149.5 1167 150.5 1168 151.5 1169 152 1170 151.5 1171 152.5 1172 152 1173 153 1174 153.5 1175 153 1176 146.5 1177 148.5 1178 150 1179 151 1180 152 1181 151.5 1182 153 1183 152 1184 153 1185 153.5 1186 154 1190 154 1191 153 1192 145.5 1193 148 1194 149.5 1195 150.5 1196 151 1197 150.5 1198 152 1199 150 1200 152 1201 153 1202 153.5 1203 151 1204 146 1205 148.5 1206 149.5 1207 151 1208 150 1209 151.5 1210 151 1211 151 1212 152.5 1213 153 1214 153.5 1215 154 1217 154 1218 154.5 1220 154.5 1221 154 1223 154 1224 154.5 1225 154 1226 154.5 1227 154 1228 154.5 1229 154 1230 154.5 1231 154.5 1232 150 1233 144.5 1234 146.5 1235 148 1236 149 1237 148.5 1238 150 1239 151 1240 151 1241 152.5 1242 153 1243 153 1244 153.5 1245 150.5 1246 149 1247 150 1248 151 1249 152 1250 151 1251 152.5 1252 151.5 1253 152.5 1254 153 1255 153.5 1256 154 1257 154 1258 150.5 1259 148.5 1260 150 1261 151 1262 152 1263 150.5 1264 152 1265 151 1266 152 1267 153 1268 153.5 1269 154 1270 154 1271 154.5 1272 153 1273 146 1274 148 1275 150 1276 151 1278 151 1279 152 1280 150.5 1281 152 1282 153 1283 153.5 1284 154 1285 151.5 1286 146.5 1287 148.5 1288 150 1289 151 1290 151 1291 152 1292 151 1293 151 1294 152.5 1295 153 1296 153.5 1297 154 1298 154 1299 153 1300 145.5 1301 147.5 1302 149.5 1303 150.5 1304 150.5 1305 150 1306 151.5 1307 151.5 1308 152.5 1309 153.5 1310 154 1312 154 1313 154.5 1314 154 1315 154.5 1322 154.5 1323 154 1325 154 1326 154.5 1331 154.5 1332 154 1334 154 1335 154.5 1336 154.5 1337 154 1338 154.5 1341 154.5 1342 154 1343 152.5 1344 144 1345 145.5 1346 147.5 1347 148.5 1348 149.5 1349 150 1350 151.5 1351 150 1352 152 1353 152.5 1354 153 1355 146.5 1356 148.5 1357 150 1358 151 1359 152 1360 151.5 1361 152 1362 150.5 1363 152 1364 153 1365 153.5 1366 154 1368 154 1369 150.5 1370 147.5 1371 149.5 1372 150.5 1373 151.5 1374 151 1375 152.5 1376 150.5 1377 151 1378 152.5 1379 153.5 1380 154 1381 154 1382 150 1383 147.5 1384 149 1385 150 1386 151.5 1387 150 1388 151.5 1389 151.5 1390 152.5 1391 153 1392 153.5 1393 154 1394 154 1395 149.5 1396 148 1397 149.5 1398 151 1399 151.5 1400 151 1401 152.5 1402 150 1403 152 1404 153 1405 153.5 1406 154 1407 153.5 1408 147 1409 149 1410 150.5 1411 151.5 1412 151 1413 151 1414 152 1415 150.5 1416 146 1417 148 1418 149.5 1419 151 1420 150.5 1421 150 1422 152 1423 150.5 1424 152 1425 153 1426 153.5 1427 154 1428 154 1429 154.5 1432 154.5 1433 154 1434 154.5 1436 154.5 1437 154 1440 154 1441 154.5 1442 154.5 1443 154 1444 154.5 1447 154.5 1448 154 1449 153 1450 145 1451 147 1452 148 1453 149.5 1454 150.5 1455 151 1456 151.5 1457 150 1458 152 1459 153 1460 153 1461 150.5 1462 148.5 1463 150 1464 151 1465 152 1466 151.5 1467 153 1468 151 1469 152 1470 153 1471 153.5 1472 154 1474 154 1475 153.5 1476 147 1477 149 1478 150.5 1479 151.5 1481 151.5 1482 152 1483 151 1484 152.5 1485 153 1486 153 1487 146 1488 148.5 1489 150 1490 151 1491 151 1492 150.5 1493 152 1494 150 1495 152 1496 153 1497 148 1498 149.5 1499 151 L1499 158 1498 159.5 1497 161 1496 156 1495 157 1494 159 1493 157 1492 158.5 1491 158 1490 158 1489 159 1488 160.5 1487 163 1486 156 1485 156 1484 156.5 1483 158 1482 157 1481 157.5 1479 157.5 1478 158.5 1477 160 1476 162 1475 155.5 1474 155 1472 155 1471 155.5 1470 156 1469 157 1468 158 1467 156 1466 157.5 1465 157 1464 158 1463 159 1462 160.5 1461 158.5 1460 156 1459 156 1458 157 1457 159 1456 157.5 1455 158 1454 158.5 1453 159.5 1452 161 1451 162 1450 164 1449 156 1448 155 1447 154.5 1444 154.5 1443 155 1442 154.5 1441 154.5 1440 155 1437 155 1436 154.5 1434 154.5 1433 155 1432 154.5 1429 154.5 1428 155 1427 155 1426 155.5 1425 156 1424 157 1423 158.5 1422 157 1421 159 1420 158.5 1419 158 1418 159.5 1417 161 1416 163 1415 158.5 1414 157 1413 158 1412 158 1411 157.5 1410 158.5 1409 160 1408 162 1407 155.5 1406 155 1405 155.5 1404 156 1403 157 1402 159 1401 156.5 1400 158 1399 157.5 1398 158 1397 159.5 1396 161 1395 159.5 1394 155 1393 155 1392 155.5 1391 156 1390 156.5 1389 157.5 1388 157.5 1387 159 1386 157.5 1385 159 1384 160 1383 161.5 1382 159 1381 155 1380 155 1379 155.5 1378 156.5 1377 158 1376 158.5 1375 156.5 1374 158 1373 157.5 1372 158.5 1371 159.5 1370 161.5 1369 158.5 1368 155 1366 155 1365 155.5 1364 156 1363 157 1362 158.5 1361 157 1360 157.5 1359 157 1358 158 1357 159 1356 160.5 1355 162.5 1354 156 1353 156.5 1352 157 1351 159 1350 157.5 1349 159 1348 159.5 1347 160.5 1346 161.5 1345 163.5 1344 165 1343 156.5 1342 155 1341 154.5 1338 154.5 1337 155 1336 154.5 1335 154.5 1334 155 1332 155 1331 154.5 1326 154.5 1325 155 1323 155 1322 154.5 1315 154.5 1314 155 1313 154.5 1312 155 1310 155 1309 155.5 1308 156.5 1307 157.5 1306 157.5 1305 159 1304 158.5 1303 158.5 1302 159.5 1301 161.5 1300 163.5 1299 156 1298 155 1297 155 1296 155.5 1295 156 1294 156.5 1293 158 1292 158 1291 157 1290 158 1289 158 1288 159 1287 160.5 1286 162.5 1285 157.5 1284 155 1283 155.5 1282 156 1281 157 1280 158.5 1279 157 1278 158 1276 158 1275 159 1274 161 1273 163 1272 156 1271 154.5 1270 155 1269 155 1268 155.5 1267 156 1266 157 1265 158 1264 157 1263 158.5 1262 157 1261 158 1260 159 1259 160.5 1258 158.5 1257 155 1256 155 1255 155.5 1254 156 1253 156.5 1252 157.5 1251 156.5 1250 158 1249 157 1248 158 1247 159 1246 160 1245 158.5 1244 155.5 1243 156 1242 156 1241 156.5 1240 158 1239 158 1238 159 1237 160.5 1236 160 1235 161 1234 162.5 1233 164.5 1232 159 1231 154.5 1230 154.5 1229 155 1228 154.5 1227 155 1226 154.5 1225 155 1224 154.5 1223 155 1221 155 1220 154.5 1218 154.5 1217 155 1215 155 1214 155.5 1213 156 1212 156.5 1211 158 1210 158 1209 157.5 1208 159 1207 158 1206 159.5 1205 160.5 1204 163 1203 158 1202 155.5 1201 156 1200 157 1199 159 1198 157 1197 158.5 1196 158 1195 158.5 1194 159.5 1193 161 1192 163.5 1191 156 1190 155 1186 155 1185 155.5 1184 156 1183 157 1182 156 1181 157.5 1180 157 1179 158 1178 159 1177 160.5 1176 162.5 1175 156 1174 155.5 1173 156 1172 157 1171 156.5 1170 157.5 1169 157 1168 157.5 1167 158.5 1166 159.5 1165 161.5 1164 155.5 1162 155.5 1161 156 1160 156 1159 156.5 1158 157.5 1157 158.5 1156 158.5 1155 161 1154 159.5 1153 161 1152 162 1151 164 1150 160.5 1149 154.5 1148 154.5 1147 155 1145 155 1144 154.5 1143 155 1142 154.5 1141 155 1138 155 1137 154.5 1136 155 1134 155 1133 154.5 1132 154.5 1131 155 1130 155 1129 154.5 1124 154.5 1123 155 1122 155 1121 154.5 1120 154.5 1119 155 1118 155 1117 154.5 1116 155 1115 154.5 1114 154.5 1113 155 1112 154.5 1111 154.5 1110 155 1109 154.5 1108 155 1107 155 1106 154.5 1105 154.5 1104 155 1103 154.5 1102 154.5 1101 155 1100 155 1099 154.5 1097 154.5 1096 155 1095 155 1094 154.5 1088 154.5 1087 155 1086 154.5 1085 155 1083 155 1082 154.5 1081 155 1080 154.5 1079 155 1078 154.5 1076 154.5 1075 155 1074 155 1073 154.5 1071 154.5 1070 155 1069 155 1068 154.5 1067 154.5 1066 155 1065 154.5 1062 154.5 1061 155 1060 154.5 1058 154.5 1057 155 1056 154.5 1055 155 1053 155 1052 154.5 1051 155 1050 154.5 1047 154.5 1046 155 1045 155 1044 154.5 1043 155 1042 154.5 1040 154.5 1039 155 1038 154.5 1037 155 1035 155 1034 154.5 1033 155 1032 154.5 1031 154.5 1030 155 1029 155 1028 154.5 1027 155 1026 155 1025 154.5 1022 154.5 1021 155 1020 154.5 1019 154.5 1018 155 1017 154.5 1013 154.5 1012 155 1011 154.5 1010 155 1009 155 1008 154.5 998 154.5 997 155 996 155 995 154.5 994 155 993 154.5 991 154.5 990 155 987 155 986 154.5 985 155 984 154.5 983 155 982 154.5 981 155 979 155 978 154.5 977 155 976 155 975 154.5 973 154.5 972 155 968 155 967 154.5 966 155 964 155 963 154.5 962 155 960 155 959 154.5 958 155 957 154.5 954 154.5 953 155 952 155 951 154.5 950 155 949 155 948 154.5 947 154.5 946 155 945 154.5 944 155 940 155 939 154.5 938 155 933 155 932 155.5 930 155.5 929 156 928 157 927 158.5 926 157.5 925 159 924 158.5 923 159.5 922 160.5 921 162 920 163.5 919 156 918 154.5 917 154.5 916 155 915 154.5 913 154.5 912 155 909 155 908 154.5 907 155 906 154.5 905 154.5 904 155 903 154.5 901 154.5 900 155 899 155 898 154.5 896 154.5 895 155 894 154.5 893 154.5 892 155 891 155 890 154.5 887 154.5 886 155 882 155 881 155.5 879 155.5 878 156 877 156.5 876 157 875 158 874 158 873 158.5 872 159.5 871 160.5 870 162 869 163.5 868 160 867 155 866 155 865 154.5 864 155 863 154.5 862 154.5Z" fill="#e4f2e8"/><path d="M0 185H1500" stroke="#1d4630" stroke-width="0.9"/><path d="M0 184.5 66 184.5 L66 185.5 0 185.5Z M862 184.5 867 184.5 868 177.5 869 176 870 181.5 871 178.5 872 179.5 873 177.5 874 181.5 875 178 876 181.5 877 183 878 183.5 879 183.5 880 184 881 184 882 184.5 918 184.5 919 183 920 173.5 921 180.5 922 178.5 923 179.5 924 180 925 180.5 926 181.5 927 179.5 928 183 929 183.5 930 183.5 931 184 932 184 933 184.5 1149 184.5 1150 177 1151 175.5 1152 181.5 1153 178 1154 179.5 1155 177 1156 181 1157 177.5 1158 181.5 1159 183 1160 183.5 1161 183.5 1162 184 1163 184 1164 183.5 1165 176 1166 181.5 1167 180.5 1168 182 1169 181.5 1170 181.5 1171 182.5 1172 181 1173 184 1174 184 1175 183.5 1176 174.5 1177 181 1178 179.5 1179 181.5 1180 181 1181 181 1182 182 1183 180 1184 184 1185 183.5 1186 184 1187 184.5 1190 184.5 1191 183 1192 173.5 1193 180.5 1194 179 1195 181 1196 180 1197 180.5 1198 181.5 1199 179.5 1200 184 1201 183.5 1202 184 1203 180 1204 175.5 1205 183 1206 178.5 1207 181 1208 178.5 1209 182 1210 179.5 1211 181 1212 182 1213 183.5 1214 184 1215 184.5 1231 184.5 1232 179.5 1233 174 1234 182.5 1235 177 1236 179 1237 177.5 1238 181 1239 179 1240 180.5 1241 182.5 1242 183 1243 183.5 1244 184 1245 180 1246 179 1247 183 1248 180.5 1249 182.5 1250 180 1251 183.5 1252 180 1253 182.5 1254 183.5 1255 184 1256 184.5 1257 184.5 1258 180 1259 179 1260 182.5 1261 180.5 1262 182.5 1263 180 1264 183.5 1265 180 1266 182.5 1267 183.5 1268 184 1269 184.5 1271 184.5 1272 183 1273 174 1274 181 1275 179.5 1276 181 1277 180.5 1278 181 1279 181.5 1280 180 1281 184 1282 183.5 1283 184 1284 184.5 1285 181.5 1286 175.5 1287 182.5 1288 178.5 1289 181.5 1290 179.5 1291 181.5 1292 180.5 1293 181 1294 183 1295 184 1296 184.5 1298 184.5 1299 183 1300 173.5 1301 180.5 1302 179 1303 181 1304 180 1305 180.5 1306 181.5 1307 179.5 1308 184 1309 183.5 1310 184 1311 184.5 1342 184.5 1343 182.5 1344 171 1345 180 1346 177 1347 178.5 1348 179.5 1349 179.5 1350 180.5 1351 178.5 1352 182.5 1353 183 1354 183 1355 174.5 1356 181 1357 179.5 1358 181 1359 180.5 1360 181 1361 181.5 1362 180 1363 184 1364 184 1365 184.5 1368 184.5 1369 180 1370 177.5 1371 183 1372 179.5 1373 182 1374 178.5 1375 182.5 1376 180 1377 182 1378 183 1379 184 1380 184.5 1381 184.5 1382 179 1383 178 1384 182.5 1385 179.5 1386 181.5 1387 179 1388 183 1389 179 1390 182 1391 183.5 1392 184 1393 184.5 1394 184.5 1395 178.5 1396 178.5 1397 182 1398 180.5 1399 182 1400 179.5 1401 183.5 1402 179 1403 182.5 1404 183 1405 184 1406 184.5 1407 183.5 1408 175.5 1409 181.5 1410 180 1411 181.5 1412 181 1413 181.5 1414 182 1415 180.5 1416 174 1417 181 1418 179.5 1419 181 1420 180.5 1421 180.5 1422 181.5 1423 180 1424 184 1425 183.5 1426 184 1427 184.5 1448 184.5 1449 183 1450 172.5 1451 180.5 1452 178 1453 179.5 1454 180 1455 180.5 1456 181 1457 179.5 1458 183 1459 183.5 1460 183.5 1461 180 1462 179 1463 182.5 1464 180.5 1465 182 1466 180 1467 183.5 1468 180 1469 182.5 1470 183 1471 184 1472 184.5 1474 184.5 1475 183.5 1476 175.5 1477 181.5 1478 180 1479 181.5 1480 181 1481 181.5 1482 182 1483 180.5 1484 184 1485 183.5 1486 183 1487 174 1488 181 1489 179.5 1490 181 1491 180.5 1492 181 1493 181.5 1494 180 1495 184 1496 183.5 1497 176.5 1498 182 1499 180.5 L1499 189.5 1498 188 1497 193.5 1496 186.5 1495 186 1494 190 1493 188.5 1492 189 1491 189.5 1490 189 1489 190.5 1488 189 1487 196 1486 187 1485 186.5 1484 186 1483 189.5 1482 188 1481 188.5 1480 189 1479 188.5 1478 190 1477 188.5 1476 194.5 1475 186.5 1474 185.5 1472 185.5 1471 186 1470 187 1469 187.5 1468 190 1467 186.5 1466 190 1465 188 1464 189.5 1463 187.5 1462 191 1461 190 1460 186.5 1459 186.5 1458 187 1457 190.5 1456 189 1455 189.5 1454 190 1453 190.5 1452 192 1451 189.5 1450 197.5 1449 187 1448 185.5 1427 185.5 1426 186 1425 186.5 1424 186 1423 190 1422 188.5 1421 189.5 1420 189.5 1419 189 1418 190.5 1417 189 1416 196 1415 189.5 1414 188 1413 188.5 1412 189 1411 188.5 1410 190 1409 188.5 1408 194.5 1407 186.5 1406 185.5 1405 186 1404 187 1403 187.5 1402 191 1401 186.5 1400 190.5 1399 188 1398 189.5 1397 188 1396 191.5 1395 191.5 1394 185.5 1393 185.5 1392 186 1391 186.5 1390 188 1389 191 1388 187 1387 191 1386 188.5 1385 190.5 1384 187.5 1383 192 1382 191 1381 185.5 1380 185.5 1379 186 1378 187 1377 188 1376 190 1375 187.5 1374 191.5 1373 188 1372 190.5 1371 187 1370 192.5 1369 190 1368 185.5 1365 185.5 1364 186 1363 186 1362 190 1361 188.5 1360 189 1359 189.5 1358 189 1357 190.5 1356 189 1355 195.5 1354 187 1353 187 1352 187.5 1351 191.5 1350 189.5 1349 190.5 1348 190.5 1347 191.5 1346 193 1345 190 1344 199 1343 187.5 1342 185.5 1311 185.5 1310 186 1309 186.5 1308 186 1307 190.5 1306 188.5 1305 189.5 1304 190 1303 189 1302 191 1301 189.5 1300 196.5 1299 187 1298 185.5 1296 185.5 1295 186 1294 187 1293 189 1292 189.5 1291 188.5 1290 190.5 1289 188.5 1288 191.5 1287 187.5 1286 194.5 1285 188.5 1284 185.5 1283 186 1282 186.5 1281 186 1280 190 1279 188.5 1278 189 1277 189.5 1276 189 1275 190.5 1274 189 1273 196 1272 187 1271 185.5 1269 185.5 1268 186 1267 186.5 1266 187.5 1265 190 1264 186.5 1263 190 1262 187.5 1261 189.5 1260 187.5 1259 191 1258 190 1257 185.5 1256 185.5 1255 186 1254 186.5 1253 187.5 1252 190 1251 186.5 1250 190 1249 187.5 1248 189.5 1247 187 1246 191 1245 190 1244 186 1243 186.5 1242 187 1241 187.5 1240 189.5 1239 191 1238 189 1237 192.5 1236 191 1235 193 1234 187.5 1233 196 1232 190.5 1231 185.5 1215 185.5 1214 186 1213 186.5 1212 188 1211 189 1210 190.5 1209 188 1208 191.5 1207 189 1206 191.5 1205 187 1204 194.5 1203 190 1202 186 1201 186.5 1200 186 1199 190.5 1198 188.5 1197 189.5 1196 190 1195 189 1194 191 1193 189.5 1192 196.5 1191 187 1190 185.5 1187 185.5 1186 186 1185 186.5 1184 186 1183 190 1182 188 1181 189 1180 189 1179 188.5 1178 190.5 1177 189 1176 195.5 1175 186.5 1174 186 1173 186 1172 189 1171 187.5 1170 188.5 1169 188.5 1168 188 1167 189.5 1166 188.5 1165 194 1164 186.5 1163 186 1162 186 1161 186.5 1160 186.5 1159 187 1158 188.5 1157 192.5 1156 189 1155 193 1154 190.5 1153 192 1152 188.5 1151 194.5 1150 193 1149 185.5 933 185.5 932 186 931 186 930 186.5 929 186.5 928 187 927 190.5 926 188.5 925 189.5 924 190 923 190.5 922 191.5 921 189.5 920 196.5 919 187 918 185.5 882 185.5 881 186 880 186 879 186.5 878 186.5 877 187 876 188.5 875 192 874 188.5 873 192.5 872 190.5 871 191.5 870 188.5 869 194 868 192.5 867 185.5 862 185.5Z" fill="#1f4a30"/><path d="M0 185 66 185 L66 185 0 185Z M862 185 867 185 868 179.5 869 176.5 870 178 871 179.5 872 180.5 873 180.5 874 182 875 181 876 182.5 877 183.5 878 183.5 879 184 881 184 882 184.5 886 184.5 887 185 918 185 919 183.5 920 176.5 921 178 922 179.5 923 180.5 924 181 925 181 926 182.5 927 181 928 182.5 929 183.5 930 184 932 184 933 184.5 937 184.5 938 185 1149 185 1150 179 1151 176 1152 177.5 1153 179 1154 180 1155 179 1156 181.5 1157 181 1158 182 1159 183 1160 183.5 1161 184 1164 184 1165 178.5 1166 180 1167 181.5 1168 182.5 1169 182 1170 181.5 1171 183 1172 182 1173 183.5 1174 184 1175 183.5 1176 177.5 1177 179.5 1178 180.5 1179 182 1180 182.5 1181 182 1182 182.5 1183 181 1184 182.5 1185 183.5 1186 184 1187 184.5 1188 184.5 1189 185 1190 185 1191 183.5 1192 176.5 1193 178.5 1194 180 1195 181.5 1196 181.5 1197 181 1198 182.5 1199 181.5 1200 183 1201 183.5 1202 184 1203 181.5 1204 177 1205 179 1206 180 1207 181.5 1208 181 1209 182.5 1210 180.5 1211 181 1212 182.5 1213 183.5 1214 184 1215 184.5 1216 184.5 1217 185 1231 185 1232 181 1233 175.5 1234 177.5 1235 178.5 1236 180 1237 181 1238 181.5 1240 181.5 1241 183 1242 183.5 1243 183.5 1244 184 1245 181.5 1246 179.5 1247 181 1248 181.5 1249 182.5 1250 180.5 1251 182.5 1252 182 1253 183 1254 184 1255 184.5 1257 184.5 1258 181 1259 179.5 1260 181 1261 181 1262 182.5 1263 182.5 1264 183.5 1265 182.5 1266 183 1267 184 1268 184.5 1269 184.5 1270 185 1271 185 1272 183.5 1273 177 1274 179 1275 180.5 1276 181.5 1277 181.5 1278 181 1279 182.5 1280 181.5 1281 183 1282 184 1283 184.5 1284 184.5 1285 182.5 1286 177.5 1287 179.5 1288 180.5 1289 182 1290 180.5 1291 181.5 1292 182.5 1293 182 1294 183.5 1295 184 1296 184.5 1297 184.5 1298 185 1299 183.5 1300 176.5 1301 178.5 1302 180 1303 181.5 1304 182 1305 182 1306 182.5 1307 181 1308 182.5 1309 183.5 1310 184 1311 184.5 1312 184.5 1313 185 1342 185 1343 183.5 1344 175 1345 176.5 1346 178 1347 179.5 1348 180.5 1349 181 1350 182 1351 180.5 1352 182 1353 183.5 1354 183.5 1355 177.5 1356 179 1357 180.5 1358 181.5 1359 181.5 1360 181 1361 182.5 1362 182 1363 183.5 1364 184 1365 184.5 1367 184.5 1368 185 1369 181.5 1370 178.5 1371 180 1372 180 1373 182 1374 180 1375 182 1376 182 1377 182.5 1378 183.5 1379 184 1380 184.5 1381 184.5 1382 180.5 1383 178.5 1384 180 1385 181 1386 182 1387 180.5 1388 182.5 1389 181.5 1390 182.5 1391 183.5 1392 184 1393 184.5 1394 184.5 1395 180 1396 179 1397 180.5 1398 180.5 1399 182.5 1400 181.5 1401 183 1402 180.5 1403 182.5 1404 183.5 1405 184 1406 184.5 1407 184 1408 178 1409 179.5 1410 181 1411 182 1412 182.5 1414 182.5 1415 181 1416 177 1417 179 1418 180.5 1419 181.5 1420 181.5 1421 181 1422 182.5 1423 181.5 1424 182.5 1425 183.5 1426 184 1427 184.5 1428 184.5 1429 185 1448 185 1449 183.5 1450 176 1451 177.5 1452 179 1453 180 1454 181 1455 181.5 1456 182.5 1457 181.5 1458 183 1459 183.5 1460 184 1461 181 1462 179.5 1463 180.5 1464 182 1465 182.5 1466 181.5 1467 183 1468 181.5 1469 182.5 1470 183.5 1471 184 1472 184.5 1473 184.5 1474 185 1475 184 1476 178 1477 179.5 1478 181 1479 181.5 1480 182 1481 181.5 1482 183 1483 182 1484 183 1485 184 1486 183.5 1487 177 1488 179 1489 180.5 1490 181.5 1491 182.5 1492 182.5 1493 183 1494 182 1495 183 1496 184 1497 179 1498 180.5 1499 181.5 L1499 188.5 1498 189.5 1497 191 1496 186 1495 187 1494 188 1493 187 1492 187.5 1491 187.5 1490 188.5 1489 189.5 1488 191 1487 193 1486 186.5 1485 186 1484 187 1483 188 1482 187 1481 188.5 1480 188 1479 188.5 1478 189 1477 190.5 1476 192 1475 186 1474 185 1473 185.5 1472 185.5 1471 186 1470 186.5 1469 187.5 1468 188.5 1467 187 1466 188.5 1465 187.5 1464 188 1463 189.5 1462 190.5 1461 189 1460 186 1459 186.5 1458 187 1457 188.5 1456 187.5 1455 188.5 1454 189 1453 190 1452 191 1451 192.5 1450 194 1449 186.5 1448 185 1429 185 1428 185.5 1427 185.5 1426 186 1425 186.5 1424 187.5 1423 188.5 1422 187.5 1421 189 1420 188.5 1419 188.5 1418 189.5 1417 191 1416 193 1415 189 1414 187.5 1412 187.5 1411 188 1410 189 1409 190.5 1408 192 1407 186 1406 185.5 1405 186 1404 186.5 1403 187.5 1402 189.5 1401 187 1400 188.5 1399 187.5 1398 189.5 1397 189.5 1396 191 1395 190 1394 185.5 1393 185.5 1392 186 1391 186.5 1390 187.5 1389 188.5 1388 187.5 1387 189.5 1386 188 1385 189 1384 190 1383 191.5 1382 189.5 1381 185.5 1380 185.5 1379 186 1378 186.5 1377 187.5 1376 188 1375 188 1374 190 1373 188 1372 190 1371 190 1370 191.5 1369 188.5 1368 185 1367 185.5 1365 185.5 1364 186 1363 186.5 1362 188 1361 187.5 1360 189 1359 188.5 1358 188.5 1357 189.5 1356 191 1355 192.5 1354 186.5 1353 186.5 1352 188 1351 189.5 1350 188 1349 189 1348 189.5 1347 190.5 1346 192 1345 193.5 1344 195 1343 186.5 1342 185 1313 185 1312 185.5 1311 185.5 1310 186 1309 186.5 1308 187.5 1307 189 1306 187.5 1305 188 1304 188 1303 188.5 1302 190 1301 191.5 1300 193.5 1299 186.5 1298 185 1297 185.5 1296 185.5 1295 186 1294 186.5 1293 188 1292 187.5 1291 188.5 1290 189.5 1289 188 1288 189.5 1287 190.5 1286 192.5 1285 187.5 1284 185.5 1283 185.5 1282 186 1281 187 1280 188.5 1279 187.5 1278 189 1277 188.5 1276 188.5 1275 189.5 1274 191 1273 193 1272 186.5 1271 185 1270 185 1269 185.5 1268 185.5 1267 186 1266 187 1265 187.5 1264 186.5 1263 187.5 1262 187.5 1261 189 1260 189 1259 190.5 1258 189 1257 185.5 1255 185.5 1254 186 1253 187 1252 188 1251 187.5 1250 189.5 1249 187.5 1248 188.5 1247 189 1246 190.5 1245 188.5 1244 186 1243 186.5 1242 186.5 1241 187 1240 188.5 1238 188.5 1237 189 1236 190 1235 191.5 1234 192.5 1233 194.5 1232 189 1231 185 1217 185 1216 185.5 1215 185.5 1214 186 1213 186.5 1212 187.5 1211 189 1210 189.5 1209 187.5 1208 189 1207 188.5 1206 190 1205 191 1204 193 1203 188.5 1202 186 1201 186.5 1200 187 1199 188.5 1198 187.5 1197 189 1196 188.5 1195 188.5 1194 190 1193 191.5 1192 193.5 1191 186.5 1190 185 1189 185 1188 185.5 1187 185.5 1186 186 1185 186.5 1184 187.5 1183 189 1182 187.5 1181 188 1180 187.5 1179 188 1178 189.5 1177 190.5 1176 192.5 1175 186.5 1174 186 1173 186.5 1172 188 1171 187 1170 188.5 1169 188 1168 187.5 1167 188.5 1166 190 1165 191.5 1164 186 1161 186 1160 186.5 1159 187 1158 188 1157 189 1156 188.5 1155 191 1154 190 1153 191 1152 192.5 1151 194 1150 191 1149 185 938 185 937 185.5 933 185.5 932 186 930 186 929 186.5 928 187.5 927 189 926 187.5 925 189 924 189 923 189.5 922 190.5 921 192 920 193.5 919 186.5 918 185 887 185 886 185.5 882 185.5 881 186 879 186 878 186.5 877 186.5 876 187.5 875 189 874 188 873 189.5 872 189.5 871 190.5 870 192 869 193.5 868 190.5 867 185 862 185Z" fill="#e4f2e8"/><path d="M0 234.29999999999995H1500" stroke="#1d4630" stroke-width="0.9"/><path d="M0 232.8 1 233.3 2 232.8 3 233.3 4 232.8 5 232.8 6 233.3 7 232.8 8 230.3 9 232.8 10 232.3 11 232.8 13 232.8 14 233.3 15 232.8 16 232.8 17 232.3 18 229.3 19 232.3 20 231.8 21 232.3 22 232.3 23 232.8 24 233.3 25 233.3 26 232.8 31 232.8 32 230.3 33 232.8 34 232.3 35 232.8 43 232.8 44 229.3 45 232.3 46 231.8 47 232.3 48 232.8 49 232.8 50 232.3 51 233.3 52 232.8 53 232.8 54 233.3 55 232.8 56 233.3 57 232.8 58 230.3 59 232.8 60 232.3 61 232.8 66 232.8 L66 235.8 61 235.8 60 236.3 59 235.8 58 238.3 57 235.8 56 235.3 55 235.8 54 235.3 53 235.8 52 235.8 51 235.3 50 236.3 49 235.8 48 235.8 47 236.3 46 236.8 45 236.3 44 239.3 43 235.8 35 235.8 34 236.3 33 235.8 32 238.3 31 235.8 26 235.8 25 235.3 24 235.3 23 235.8 22 236.3 21 236.3 20 236.8 19 236.3 18 239.3 17 236.3 16 235.8 15 235.8 14 235.3 13 235.8 11 235.8 10 236.3 9 235.8 8 238.3 7 235.8 6 235.3 5 235.8 4 235.8 3 235.3 2 235.8 1 235.3 0 235.8Z M862 232.3 863 232.8 864 232.8 865 233.3 866 232.8 867 232.8 868 232.3 869 232.8 870 225.3 871 230.8 872 231.3 873 232.3 874 232.8 875 232.8 876 233.3 877 233.3 878 232.8 879 233.3 880 232.8 881 232.8 882 232.3 883 233.3 884 232.8 885 232.8 886 232.3 887 232.8 888 232.3 889 232.8 891 232.8 892 232.3 893 232.3 894 233.3 895 232.8 896 232.8 897 229.3 898 232.3 899 232.8 900 232.8 901 233.3 902 232.8 904 232.8 905 232.3 906 232.8 908 232.8 909 228.3 910 232.3 911 232.3 912 232.8 913 232.3 914 232.8 916 232.8 917 233.3 918 232.8 919 233.3 920 229.8 921 206.3 922 223.8 923 212.3 924 214.3 925 216.8 926 218.3 927 220.3 928 221.8 929 222.8 930 224.3 931 225.3 932 226.3 933 226.8 934 227.8 935 228.3 936 225.3 937 229.8 938 230.3 939 230.8 940 230.8 941 229.3 942 231.8 943 230.3 944 231.3 945 231.8 946 232.3 947 232.8 948 232.3 949 229.3 950 232.3 951 231.3 952 232.3 953 232.8 954 232.3 955 232.3 956 232.8 958 232.8 959 233.3 960 232.8 961 232.8 962 228.3 963 232.3 964 230.8 965 231.8 966 232.3 967 232.3 968 232.8 973 232.8 974 233.3 975 233.3 976 230.3 977 232.8 978 232.3 979 232.3 980 232.8 981 232.3 983 232.3 984 232.8 988 232.8 989 227.3 990 231.8 991 230.8 992 231.8 993 232.3 994 232.8 996 232.8 997 232.3 998 232.8 1001 232.8 1002 227.3 1003 231.8 1004 231.3 1005 232.3 1006 232.8 1007 232.8 1008 232.3 1009 232.8 1010 233.3 1012 233.3 1013 232.3 1014 232.8 1015 232.3 1016 231.3 1017 232.3 1018 232.3 1019 232.8 1020 232.8 1021 233.3 1022 233.3 1023 232.3 1024 232.8 1025 232.8 1026 232.3 1027 232.8 1028 232.3 1029 232.3 1030 231.3 1031 232.8 1032 232.3 1033 232.8 1035 232.8 1036 227.8 1037 224.8 1038 232.3 1039 229.3 1040 230.3 1041 231.3 1042 231.8 1043 232.3 1044 232.3 1045 221.3 1046 229.3 1047 230.8 1048 231.8 1049 232.3 1050 232.8 1054 232.8 1055 229.3 1056 232.3 1057 231.3 1058 232.3 1059 232.8 1060 232.8 1061 233.3 1062 232.8 1068 232.8 1069 232.3 1070 232.3 1071 232.8 1077 232.8 1078 232.3 1079 232.8 1080 232.3 1081 232.3 1082 232.8 1083 230.8 1084 232.3 1085 232.3 1086 232.8 1087 233.3 1088 232.8 1089 233.3 1090 232.8 1091 233.3 1092 232.8 1093 232.8 1094 232.3 1095 233.3 1096 231.3 1097 232.8 1098 232.8 1099 232.3 1100 232.3 1101 232.8 1102 232.3 1103 232.8 1104 232.8 1105 232.3 1106 232.8 1107 233.3 1108 232.8 1109 230.3 1110 232.8 1111 232.3 1112 232.8 1113 232.8 1114 233.3 1115 232.8 1116 232.8 1117 233.3 1118 232.8 1119 218.8 1120 215.8 1121 232.8 1122 226.8 1123 227.8 1124 228.8 1125 229.8 1126 230.3 1127 230.8 1128 231.3 1129 231.8 1130 232.3 1131 232.8 1132 232.3 1133 232.8 1134 232.8 1135 229.3 1136 232.3 1137 231.3 1138 232.3 1139 232.8 1141 232.8 1142 229.3 1143 232.3 1144 231.3 1145 232.3 1146 232.8 1147 232.8 1148 232.3 1149 233.3 1150 232.3 1151 217.8 1152 215.3 1153 232.3 1154 225.3 1155 226.8 1156 227.8 1157 228.8 1158 229.8 1159 230.3 1160 230.8 1161 231.3 1162 231.8 1163 232.3 1164 229.3 1165 232.3 1166 231.3 1167 232.3 1168 232.8 1169 232.8 1170 233.3 1171 232.8 1172 233.3 1173 232.8 1176 232.8 1177 230.3 1178 232.8 1179 232.3 1180 232.8 1185 232.8 1186 232.3 1187 232.8 1190 232.8 1191 230.3 1192 232.8 1193 232.3 1194 232.8 1197 232.8 1198 233.3 1199 233.3 1200 232.3 1201 232.3 1202 232.8 1206 232.8 1207 233.3 1208 232.8 1209 232.8 1210 232.3 1211 232.3 1212 231.3 1213 232.8 1214 232.3 1215 232.8 1216 232.8 1217 233.3 1218 232.8 1222 232.8 1223 233.3 1224 232.8 1225 233.3 1226 232.8 1227 233.3 1228 233.3 1229 232.8 1235 232.8 1236 232.3 1237 232.8 1238 232.8 1239 232.3 1240 233.3 1241 232.8 1242 232.8 1243 233.3 1244 232.8 1245 230.8 1246 227.8 1247 232.8 1248 231.8 1249 232.3 1250 232.8 1255 232.8 1256 232.3 1257 232.8 1258 232.8 1259 225.3 1260 230.8 1261 232.3 1262 232.8 1269 232.8 1270 233.3 1271 232.8 1272 232.8 1273 227.3 1274 231.8 1275 230.8 1276 231.8 1277 232.3 1278 232.8 1283 232.8 1284 232.3 1285 232.8 1286 230.3 1287 232.8 1288 232.3 1289 232.8 1291 232.8 1292 233.3 1293 233.3 1294 232.8 1297 232.8 1298 233.3 1299 230.3 1300 232.8 1301 232.3 1302 232.8 1307 232.8 1308 233.3 1309 232.3 1310 232.8 1311 227.3 1312 231.8 1313 229.3 1314 231.8 1315 231.3 1316 232.3 1317 232.8 1319 232.8 1320 232.3 1321 232.8 1322 232.8 1323 233.3 1324 232.8 1325 232.3 1326 233.3 1327 232.8 1328 232.8 1329 231.8 1330 232.8 1331 232.8 1332 232.3 1333 232.8 1334 233.3 1335 233.3 1336 232.8 1338 232.8 1339 233.3 1340 232.8 1341 232.3 1342 231.3 1343 233.3 1344 232.3 1345 232.8 1346 229.8 1347 207.3 1348 224.3 1349 223.8 1350 225.3 1351 226.3 1352 227.3 1353 228.3 1354 229.3 1355 229.8 1356 230.3 1357 230.8 1358 231.3 1359 231.8 1360 231.3 1361 216.3 1362 227.3 1363 223.8 1364 225.3 1365 226.8 1366 227.8 1367 228.8 1368 229.8 1369 230.3 1370 230.8 1371 229.8 1372 231.8 1373 231.3 1374 231.8 1375 232.3 1376 232.8 1379 232.8 1380 230.3 1381 232.8 1382 232.3 1383 232.3 1384 232.8 1388 232.8 1389 232.3 1390 232.8 1392 232.8 1393 230.3 1394 232.8 1395 232.3 1396 232.8 1397 232.8 1398 232.3 1399 232.8 1400 232.8 1401 232.3 1402 232.3 1403 232.8 1404 233.3 1405 232.8 1406 230.3 1407 232.8 1408 232.3 1409 232.8 1411 232.8 1412 232.3 1413 232.8 1414 229.8 1415 207.3 1416 224.3 1417 226.3 1418 227.3 1419 228.3 1420 229.3 1421 229.3 1422 230.8 1423 230.8 1424 231.3 1425 232.3 1426 232.3 1427 232.8 1430 232.8 1431 232.3 1433 232.3 1434 233.3 1435 233.3 1436 232.8 1437 232.3 1438 231.3 1439 232.8 1441 232.8 1442 232.3 1443 232.8 1444 232.3 1445 232.3 1446 232.8 1447 233.3 1448 233.3 1449 230.8 1450 212.3 1451 226.3 1452 226.3 1453 227.3 1454 228.3 1455 229.3 1456 230.3 1457 230.8 1458 231.3 1459 231.8 1460 232.3 1461 232.3 1462 229.3 1463 232.3 1464 231.3 1465 232.3 1466 232.8 1467 232.8 1468 233.3 1469 232.8 1473 232.8 1474 231.3 1475 230.8 1476 232.8 1477 231.8 1478 232.3 1479 232.3 1480 232.8 1482 232.8 1483 232.3 1484 232.8 1485 232.8 1486 233.3 1487 232.8 1488 232.8 1489 230.3 1490 232.8 1491 232.3 1492 232.3 1493 232.8 1494 233.3 1495 232.8 1499 232.8 L1499 235.8 1495 235.8 1494 235.3 1493 235.8 1492 236.3 1491 236.3 1490 235.8 1489 238.3 1488 235.8 1487 235.8 1486 235.3 1485 235.8 1484 235.8 1483 236.3 1482 235.8 1480 235.8 1479 236.3 1478 236.3 1477 236.8 1476 235.8 1475 237.8 1474 237.3 1473 235.8 1469 235.8 1468 235.3 1467 235.8 1466 235.8 1465 236.3 1464 237.3 1463 236.3 1462 239.3 1461 236.3 1460 236.3 1459 236.8 1458 237.3 1457 237.8 1456 238.3 1455 239.3 1454 240.3 1453 241.3 1452 242.3 1451 242.3 1450 256.3 1449 237.8 1448 235.3 1447 235.3 1446 235.8 1445 236.3 1444 236.3 1443 235.8 1442 236.3 1441 235.8 1439 235.8 1438 237.3 1437 236.3 1436 235.8 1435 235.3 1434 235.3 1433 236.3 1431 236.3 1430 235.8 1427 235.8 1426 236.3 1425 236.3 1424 237.3 1423 237.8 1422 237.8 1421 239.3 1420 239.3 1419 240.3 1418 241.3 1417 242.3 1416 244.3 1415 261.3 1414 238.8 1413 235.8 1412 236.3 1411 235.8 1409 235.8 1408 236.3 1407 235.8 1406 238.3 1405 235.8 1404 235.3 1403 235.8 1402 236.3 1401 236.3 1400 235.8 1399 235.8 1398 236.3 1397 235.8 1396 235.8 1395 236.3 1394 235.8 1393 238.3 1392 235.8 1390 235.8 1389 236.3 1388 235.8 1384 235.8 1383 236.3 1382 236.3 1381 235.8 1380 238.3 1379 235.8 1376 235.8 1375 236.3 1374 236.8 1373 237.3 1372 236.8 1371 238.8 1370 237.8 1369 238.3 1368 238.8 1367 239.8 1366 240.8 1365 241.8 1364 243.3 1363 244.8 1362 241.3 1361 252.3 1360 237.3 1359 236.8 1358 237.3 1357 237.8 1356 238.3 1355 238.8 1354 239.3 1353 240.3 1352 241.3 1351 242.3 1350 243.3 1349 244.8 1348 244.3 1347 261.3 1346 238.8 1345 235.8 1344 236.3 1343 235.3 1342 237.3 1341 236.3 1340 235.8 1339 235.3 1338 235.8 1336 235.8 1335 235.3 1334 235.3 1333 235.8 1332 236.3 1331 235.8 1330 235.8 1329 236.8 1328 235.8 1327 235.8 1326 235.3 1325 236.3 1324 235.8 1323 235.3 1322 235.8 1321 235.8 1320 236.3 1319 235.8 1317 235.8 1316 236.3 1315 237.3 1314 236.8 1313 239.3 1312 236.8 1311 241.3 1310 235.8 1309 236.3 1308 235.3 1307 235.8 1302 235.8 1301 236.3 1300 235.8 1299 238.3 1298 235.3 1297 235.8 1294 235.8 1293 235.3 1292 235.3 1291 235.8 1289 235.8 1288 236.3 1287 235.8 1286 238.3 1285 235.8 1284 236.3 1283 235.8 1278 235.8 1277 236.3 1276 236.8 1275 237.8 1274 236.8 1273 241.3 1272 235.8 1271 235.8 1270 235.3 1269 235.8 1262 235.8 1261 236.3 1260 237.8 1259 243.3 1258 235.8 1257 235.8 1256 236.3 1255 235.8 1250 235.8 1249 236.3 1248 236.8 1247 235.8 1246 240.8 1245 237.8 1244 235.8 1243 235.3 1242 235.8 1241 235.8 1240 235.3 1239 236.3 1238 235.8 1237 235.8 1236 236.3 1235 235.8 1229 235.8 1228 235.3 1227 235.3 1226 235.8 1225 235.3 1224 235.8 1223 235.3 1222 235.8 1218 235.8 1217 235.3 1216 235.8 1215 235.8 1214 236.3 1213 235.8 1212 237.3 1211 236.3 1210 236.3 1209 235.8 1208 235.8 1207 235.3 1206 235.8 1202 235.8 1201 236.3 1200 236.3 1199 235.3 1198 235.3 1197 235.8 1194 235.8 1193 236.3 1192 235.8 1191 238.3 1190 235.8 1187 235.8 1186 236.3 1185 235.8 1180 235.8 1179 236.3 1178 235.8 1177 238.3 1176 235.8 1173 235.8 1172 235.3 1171 235.8 1170 235.3 1169 235.8 1168 235.8 1167 236.3 1166 237.3 1165 236.3 1164 239.3 1163 236.3 1162 236.8 1161 237.3 1160 237.8 1159 238.3 1158 238.8 1157 239.8 1156 240.8 1155 241.8 1154 243.3 1153 236.3 1152 253.3 1151 250.8 1150 236.3 1149 235.3 1148 236.3 1147 235.8 1146 235.8 1145 236.3 1144 237.3 1143 236.3 1142 239.3 1141 235.8 1139 235.8 1138 236.3 1137 237.3 1136 236.3 1135 239.3 1134 235.8 1133 235.8 1132 236.3 1131 235.8 1130 236.3 1129 236.8 1128 237.3 1127 237.8 1126 238.3 1125 238.8 1124 239.8 1123 240.8 1122 241.8 1121 235.8 1120 252.8 1119 249.8 1118 235.8 1117 235.3 1116 235.8 1115 235.8 1114 235.3 1113 235.8 1112 235.8 1111 236.3 1110 235.8 1109 238.3 1108 235.8 1107 235.3 1106 235.8 1105 236.3 1104 235.8 1103 235.8 1102 236.3 1101 235.8 1100 236.3 1099 236.3 1098 235.8 1097 235.8 1096 237.3 1095 235.3 1094 236.3 1093 235.8 1092 235.8 1091 235.3 1090 235.8 1089 235.3 1088 235.8 1087 235.3 1086 235.8 1085 236.3 1084 236.3 1083 237.8 1082 235.8 1081 236.3 1080 236.3 1079 235.8 1078 236.3 1077 235.8 1071 235.8 1070 236.3 1069 236.3 1068 235.8 1062 235.8 1061 235.3 1060 235.8 1059 235.8 1058 236.3 1057 237.3 1056 236.3 1055 239.3 1054 235.8 1050 235.8 1049 236.3 1048 236.8 1047 237.8 1046 239.3 1045 247.3 1044 236.3 1043 236.3 1042 236.8 1041 237.3 1040 238.3 1039 239.3 1038 236.3 1037 243.8 1036 240.8 1035 235.8 1033 235.8 1032 236.3 1031 235.8 1030 237.3 1029 236.3 1028 236.3 1027 235.8 1026 236.3 1025 235.8 1024 235.8 1023 236.3 1022 235.3 1021 235.3 1020 235.8 1019 235.8 1018 236.3 1017 236.3 1016 237.3 1015 236.3 1014 235.8 1013 236.3 1012 235.3 1010 235.3 1009 235.8 1008 236.3 1007 235.8 1006 235.8 1005 236.3 1004 237.3 1003 236.8 1002 241.3 1001 235.8 998 235.8 997 236.3 996 235.8 994 235.8 993 236.3 992 236.8 991 237.8 990 236.8 989 241.3 988 235.8 984 235.8 983 236.3 981 236.3 980 235.8 979 236.3 978 236.3 977 235.8 976 238.3 975 235.3 974 235.3 973 235.8 968 235.8 967 236.3 966 236.3 965 236.8 964 237.8 963 236.3 962 240.3 961 235.8 960 235.8 959 235.3 958 235.8 956 235.8 955 236.3 954 236.3 953 235.8 952 236.3 951 237.3 950 236.3 949 239.3 948 236.3 947 235.8 946 236.3 945 236.8 944 237.3 943 238.3 942 236.8 941 239.3 940 237.8 939 237.8 938 238.3 937 238.8 936 243.3 935 240.3 934 240.8 933 241.8 932 242.3 931 243.3 930 244.3 929 245.8 928 246.8 927 248.3 926 250.3 925 251.8 924 254.3 923 256.3 922 244.8 921 262.3 920 238.8 919 235.3 918 235.8 917 235.3 916 235.8 914 235.8 913 236.3 912 235.8 911 236.3 910 236.3 909 240.3 908 235.8 906 235.8 905 236.3 904 235.8 902 235.8 901 235.3 900 235.8 899 235.8 898 236.3 897 239.3 896 235.8 895 235.8 894 235.3 893 236.3 892 236.3 891 235.8 889 235.8 888 236.3 887 235.8 886 236.3 885 235.8 884 235.8 883 235.3 882 236.3 881 235.8 880 235.8 879 235.3 878 235.8 877 235.3 876 235.3 875 235.8 874 235.8 873 236.3 872 237.3 871 237.8 870 243.3 869 235.8 868 236.3 867 235.8 866 235.8 865 235.3 864 235.8 863 235.8 862 236.3Z" fill="#1f4a30"/><path d="M0 233.3 1 233.3 2 232.8 3 233.3 4 232.8 5 233.3 6 233.3 7 232.8 8 231.3 9 231.8 10 232.3 11 232.8 13 232.8 14 233.3 15 233.3 16 232.8 17 232.8 18 230.8 19 231.8 20 232.3 21 232.8 22 232.8 23 233.3 26 233.3 27 232.8 28 233.3 29 232.8 30 232.8 31 233.3 32 231.3 33 231.8 34 232.3 35 232.8 37 232.8 38 233.3 39 232.8 40 232.8 41 233.3 42 232.8 43 232.8 44 230.8 45 231.8 46 232.3 47 232.8 48 232.8 49 233.3 50 232.8 51 233.3 52 233.3 53 232.8 54 233.3 55 232.8 56 233.3 57 232.8 58 231.3 59 231.8 60 232.3 61 232.8 66 232.8 L66 235.8 61 235.8 60 236.3 59 236.8 58 237.3 57 235.8 56 235.3 55 235.8 54 235.3 53 235.8 52 235.3 51 235.3 50 235.8 49 235.3 48 235.8 47 235.8 46 236.3 45 236.8 44 237.8 43 235.8 42 235.8 41 235.3 40 235.8 39 235.8 38 235.3 37 235.8 35 235.8 34 236.3 33 236.8 32 237.3 31 235.3 30 235.8 29 235.8 28 235.3 27 235.8 26 235.3 23 235.3 22 235.8 21 235.8 20 236.3 19 236.8 18 237.8 17 235.8 16 235.8 15 235.3 14 235.3 13 235.8 11 235.8 10 236.3 9 236.8 8 237.3 7 235.8 6 235.3 5 235.3 4 235.8 3 235.3 2 235.8 1 235.3 0 235.3Z M862 232.8 864 232.8 865 233.3 866 232.8 869 232.8 870 230.3 871 231.3 872 231.8 873 232.3 874 232.8 875 233.3 877 233.3 878 232.8 879 233.3 881 233.3 882 232.8 883 233.3 884 232.8 888 232.8 889 233.3 891 233.3 892 232.8 893 232.8 894 233.3 896 233.3 897 232.3 898 232.8 899 232.8 900 233.3 903 233.3 904 232.8 908 232.8 909 231.3 910 231.8 911 232.3 912 232.8 914 232.8 915 233.3 917 233.3 918 232.8 919 233.3 920 230.3 921 210.3 922 212.8 923 215.3 924 217.3 925 218.8 926 220.3 927 221.8 928 223.3 929 224.3 930 225.3 931 226.3 932 227.3 933 227.8 934 228.8 935 229.3 936 228.3 937 229.8 938 230.8 939 231.3 940 231.3 941 228.8 942 230.3 943 230.8 944 231.8 945 232.3 946 232.8 948 232.8 949 230.3 950 231.3 951 231.8 952 232.3 953 232.8 956 232.8 957 233.3 959 233.3 960 232.8 961 232.8 962 229.3 963 230.3 964 231.3 965 231.8 966 232.3 967 232.8 970 232.8 971 233.3 972 232.8 973 233.3 975 233.3 976 231.3 977 231.8 978 232.3 979 232.8 983 232.8 984 233.3 988 233.3 989 229.3 990 230.3 991 231.3 992 231.8 993 232.3 994 232.8 995 233.3 996 232.8 1000 232.8 1001 233.3 1002 230.3 1003 231.3 1004 231.8 1005 232.3 1006 232.8 1007 233.3 1008 232.8 1009 232.8 1010 233.3 1012 233.3 1013 232.8 1015 232.8 1016 231.8 1017 232.3 1018 232.8 1020 232.8 1021 233.3 1022 233.3 1023 232.8 1029 232.8 1030 231.8 1031 232.3 1032 232.8 1034 232.8 1035 233.3 1036 230.3 1037 227.3 1038 228.8 1039 229.8 1040 230.8 1041 231.8 1042 232.3 1043 232.8 1044 232.8 1045 229.3 1046 230.3 1047 231.3 1048 231.8 1049 232.3 1050 232.8 1051 233.3 1052 232.8 1053 233.3 1054 232.8 1055 230.3 1056 231.3 1057 231.8 1058 232.3 1059 232.8 1060 232.8 1061 233.3 1062 232.8 1063 233.3 1064 233.3 1065 232.8 1069 232.8 1070 232.3 1071 232.8 1081 232.8 1082 233.3 1083 231.3 1084 232.3 1085 232.8 1086 232.8 1087 233.3 1088 232.8 1089 233.3 1091 233.3 1092 232.8 1094 232.8 1095 233.3 1096 232.3 1097 232.8 1098 233.3 1099 232.8 1100 232.8 1101 233.3 1102 232.8 1103 233.3 1104 232.8 1106 232.8 1107 233.3 1108 232.8 1109 231.3 1110 231.8 1111 232.3 1112 232.8 1113 232.8 1114 233.3 1115 232.8 1116 232.8 1117 233.3 1118 233.3 1119 228.3 1120 225.3 1121 226.3 1122 227.8 1123 228.8 1124 229.8 1125 230.3 1126 230.8 1127 231.3 1128 231.8 1129 232.3 1130 232.8 1133 232.8 1134 233.3 1135 230.3 1136 231.3 1137 231.8 1138 232.3 1139 232.8 1140 233.3 1141 232.8 1142 230.3 1143 231.3 1144 231.8 1145 232.3 1146 232.8 1147 233.3 1148 232.8 1149 233.3 1150 232.8 1151 227.3 1152 223.3 1153 224.8 1154 226.3 1155 227.8 1156 228.8 1157 229.3 1158 230.3 1159 230.8 1160 231.3 1161 231.8 1162 232.3 1163 232.3 1164 230.3 1165 231.3 1166 231.8 1167 232.3 1168 232.8 1169 233.3 1172 233.3 1173 232.8 1174 232.8 1175 233.3 1176 232.8 1177 231.3 1178 231.8 1179 232.3 1180 232.8 1182 232.8 1183 233.3 1184 232.8 1186 232.8 1187 233.3 1188 232.8 1190 232.8 1191 231.3 1192 231.8 1193 232.3 1194 232.8 1195 233.3 1196 232.8 1197 233.3 1199 233.3 1200 232.8 1202 232.8 1203 233.3 1205 233.3 1206 232.8 1207 233.3 1208 232.8 1209 233.3 1210 232.8 1211 232.8 1212 232.3 1213 232.8 1214 232.8 1215 233.3 1218 233.3 1219 232.8 1220 232.8 1221 233.3 1222 232.8 1223 233.3 1230 233.3 1231 232.8 1236 232.8 1237 233.3 1238 232.8 1239 232.3 1240 232.8 1242 232.8 1243 233.3 1244 232.8 1245 232.8 1246 230.8 1247 231.3 1248 231.8 1249 232.3 1250 232.8 1258 232.8 1259 231.3 1260 231.8 1261 232.3 1262 232.8 1263 233.3 1264 232.8 1269 232.8 1270 233.3 1271 232.8 1272 232.8 1273 229.3 1274 230.3 1275 231.3 1276 231.8 1277 232.3 1278 232.8 1279 233.3 1280 233.3 1281 232.8 1282 233.3 1283 232.8 1285 232.8 1286 231.3 1287 231.8 1288 232.3 1289 232.8 1291 232.8 1292 233.3 1294 233.3 1295 232.8 1296 233.3 1297 232.8 1298 233.3 1299 231.3 1300 231.8 1301 232.3 1302 232.8 1303 232.8 1304 233.3 1305 232.8 1307 232.8 1308 233.3 1309 232.8 1310 233.3 1311 229.3 1312 230.3 1313 230.3 1314 231.3 1315 231.8 1316 232.3 1317 232.8 1318 233.3 1319 233.3 1320 232.8 1321 233.3 1322 232.8 1323 233.3 1324 232.8 1325 232.8 1326 233.3 1327 232.8 1328 232.8 1329 232.3 1330 232.8 1331 233.3 1332 232.8 1333 232.8 1334 233.3 1335 233.3 1336 232.8 1337 232.8 1338 233.3 1340 233.3 1341 232.8 1342 231.8 1343 232.3 1344 232.8 1345 232.8 1346 232.3 1347 222.3 1348 223.8 1349 225.3 1350 226.3 1351 227.3 1352 228.3 1353 229.3 1354 229.8 1355 230.3 1356 230.8 1357 231.3 1358 231.8 1359 232.3 1360 232.3 1361 221.3 1362 223.3 1363 224.8 1364 226.3 1365 227.8 1366 228.8 1367 229.3 1368 230.3 1369 230.8 1370 231.3 1371 229.8 1372 230.8 1373 231.8 1374 232.3 1375 232.8 1379 232.8 1380 231.3 1381 231.8 1382 232.3 1383 232.8 1384 233.3 1385 232.8 1386 233.3 1387 233.3 1388 232.8 1389 232.8 1390 233.3 1391 232.8 1392 233.3 1393 231.3 1394 231.8 1395 232.3 1396 232.8 1397 233.3 1398 232.8 1399 232.8 1400 233.3 1401 232.8 1403 232.8 1404 233.3 1405 233.3 1406 231.3 1407 231.8 1408 232.3 1409 232.8 1410 233.3 1411 232.8 1414 232.8 1415 224.3 1416 225.8 1417 227.3 1418 228.3 1419 229.3 1420 229.8 1421 228.8 1422 230.3 1423 231.3 1424 231.8 1425 232.3 1426 232.8 1427 232.8 1428 233.3 1429 233.3 1430 232.8 1433 232.8 1434 233.3 1435 233.3 1436 232.8 1437 232.8 1438 232.3 1439 232.8 1440 233.3 1441 233.3 1442 232.8 1445 232.8 1446 233.3 1448 233.3 1449 232.8 1450 224.3 1451 225.8 1452 227.3 1453 228.3 1454 229.3 1455 229.8 1456 230.8 1457 231.3 1458 231.8 1459 232.3 1460 232.3 1461 232.8 1462 230.3 1463 231.3 1464 231.8 1465 232.3 1466 232.8 1467 233.3 1468 233.3 1469 232.8 1470 232.8 1471 233.3 1472 233.3 1473 232.8 1474 231.8 1475 230.8 1476 231.8 1477 232.3 1478 232.8 1480 232.8 1481 233.3 1482 233.3 1483 232.8 1484 232.8 1485 233.3 1486 233.3 1487 232.8 1488 232.8 1489 231.3 1490 231.8 1491 232.3 1492 232.8 1493 233.3 1496 233.3 1497 232.8 1498 233.3 1499 232.8 L1499 235.8 1498 235.3 1497 235.8 1496 235.3 1493 235.3 1492 235.8 1491 236.3 1490 236.8 1489 237.3 1488 235.8 1487 235.8 1486 235.3 1485 235.3 1484 235.8 1483 235.8 1482 235.3 1481 235.3 1480 235.8 1478 235.8 1477 236.3 1476 236.8 1475 237.8 1474 236.8 1473 235.8 1472 235.3 1471 235.3 1470 235.8 1469 235.8 1468 235.3 1467 235.3 1466 235.8 1465 236.3 1464 236.8 1463 237.3 1462 238.3 1461 235.8 1460 236.3 1459 236.3 1458 236.8 1457 237.3 1456 237.8 1455 238.8 1454 239.3 1453 240.3 1452 241.3 1451 242.8 1450 244.3 1449 235.8 1448 235.3 1446 235.3 1445 235.8 1442 235.8 1441 235.3 1440 235.3 1439 235.8 1438 236.3 1437 235.8 1436 235.8 1435 235.3 1434 235.3 1433 235.8 1430 235.8 1429 235.3 1428 235.3 1427 235.8 1426 235.8 1425 236.3 1424 236.8 1423 237.3 1422 238.3 1421 239.8 1420 238.8 1419 239.3 1418 240.3 1417 241.3 1416 242.8 1415 244.3 1414 235.8 1411 235.8 1410 235.3 1409 235.8 1408 236.3 1407 236.8 1406 237.3 1405 235.3 1404 235.3 1403 235.8 1401 235.8 1400 235.3 1399 235.8 1398 235.8 1397 235.3 1396 235.8 1395 236.3 1394 236.8 1393 237.3 1392 235.3 1391 235.8 1390 235.3 1389 235.8 1388 235.8 1387 235.3 1386 235.3 1385 235.8 1384 235.3 1383 235.8 1382 236.3 1381 236.8 1380 237.3 1379 235.8 1375 235.8 1374 236.3 1373 236.8 1372 237.8 1371 238.8 1370 237.3 1369 237.8 1368 238.3 1367 239.3 1366 239.8 1365 240.8 1364 242.3 1363 243.8 1362 245.3 1361 247.3 1360 236.3 1359 236.3 1358 236.8 1357 237.3 1356 237.8 1355 238.3 1354 238.8 1353 239.3 1352 240.3 1351 241.3 1350 242.3 1349 243.3 1348 244.8 1347 246.3 1346 236.3 1345 235.8 1344 235.8 1343 236.3 1342 236.8 1341 235.8 1340 235.3 1338 235.3 1337 235.8 1336 235.8 1335 235.3 1334 235.3 1333 235.8 1332 235.8 1331 235.3 1330 235.8 1329 236.3 1328 235.8 1327 235.8 1326 235.3 1325 235.8 1324 235.8 1323 235.3 1322 235.8 1321 235.3 1320 235.8 1319 235.3 1318 235.3 1317 235.8 1316 236.3 1315 236.8 1314 237.3 1313 238.3 1312 238.3 1311 239.3 1310 235.3 1309 235.8 1308 235.3 1307 235.8 1305 235.8 1304 235.3 1303 235.8 1302 235.8 1301 236.3 1300 236.8 1299 237.3 1298 235.3 1297 235.8 1296 235.3 1295 235.8 1294 235.3 1292 235.3 1291 235.8 1289 235.8 1288 236.3 1287 236.8 1286 237.3 1285 235.8 1283 235.8 1282 235.3 1281 235.8 1280 235.3 1279 235.3 1278 235.8 1277 236.3 1276 236.8 1275 237.3 1274 238.3 1273 239.3 1272 235.8 1271 235.8 1270 235.3 1269 235.8 1264 235.8 1263 235.3 1262 235.8 1261 236.3 1260 236.8 1259 237.3 1258 235.8 1250 235.8 1249 236.3 1248 236.8 1247 237.3 1246 237.8 1245 235.8 1244 235.8 1243 235.3 1242 235.8 1240 235.8 1239 236.3 1238 235.8 1237 235.3 1236 235.8 1231 235.8 1230 235.3 1223 235.3 1222 235.8 1221 235.3 1220 235.8 1219 235.8 1218 235.3 1215 235.3 1214 235.8 1213 235.8 1212 236.3 1211 235.8 1210 235.8 1209 235.3 1208 235.8 1207 235.3 1206 235.8 1205 235.3 1203 235.3 1202 235.8 1200 235.8 1199 235.3 1197 235.3 1196 235.8 1195 235.3 1194 235.8 1193 236.3 1192 236.8 1191 237.3 1190 235.8 1188 235.8 1187 235.3 1186 235.8 1184 235.8 1183 235.3 1182 235.8 1180 235.8 1179 236.3 1178 236.8 1177 237.3 1176 235.8 1175 235.3 1174 235.8 1173 235.8 1172 235.3 1169 235.3 1168 235.8 1167 236.3 1166 236.8 1165 237.3 1164 238.3 1163 236.3 1162 236.3 1161 236.8 1160 237.3 1159 237.8 1158 238.3 1157 239.3 1156 239.8 1155 240.8 1154 242.3 1153 243.8 1152 245.3 1151 241.3 1150 235.8 1149 235.3 1148 235.8 1147 235.3 1146 235.8 1145 236.3 1144 236.8 1143 237.3 1142 238.3 1141 235.8 1140 235.3 1139 235.8 1138 236.3 1137 236.8 1136 237.3 1135 238.3 1134 235.3 1133 235.8 1130 235.8 1129 236.3 1128 236.8 1127 237.3 1126 237.8 1125 238.3 1124 238.8 1123 239.8 1122 240.8 1121 242.3 1120 243.3 1119 240.3 1118 235.3 1117 235.3 1116 235.8 1115 235.8 1114 235.3 1113 235.8 1112 235.8 1111 236.3 1110 236.8 1109 237.3 1108 235.8 1107 235.3 1106 235.8 1104 235.8 1103 235.3 1102 235.8 1101 235.3 1100 235.8 1099 235.8 1098 235.3 1097 235.8 1096 236.3 1095 235.3 1094 235.8 1092 235.8 1091 235.3 1089 235.3 1088 235.8 1087 235.3 1086 235.8 1085 235.8 1084 236.3 1083 237.3 1082 235.3 1081 235.8 1071 235.8 1070 236.3 1069 235.8 1065 235.8 1064 235.3 1063 235.3 1062 235.8 1061 235.3 1060 235.8 1059 235.8 1058 236.3 1057 236.8 1056 237.3 1055 238.3 1054 235.8 1053 235.3 1052 235.8 1051 235.3 1050 235.8 1049 236.3 1048 236.8 1047 237.3 1046 238.3 1045 239.3 1044 235.8 1043 235.8 1042 236.3 1041 236.8 1040 237.8 1039 238.8 1038 239.8 1037 241.3 1036 238.3 1035 235.3 1034 235.8 1032 235.8 1031 236.3 1030 236.8 1029 235.8 1023 235.8 1022 235.3 1021 235.3 1020 235.8 1018 235.8 1017 236.3 1016 236.8 1015 235.8 1013 235.8 1012 235.3 1010 235.3 1009 235.8 1008 235.8 1007 235.3 1006 235.8 1005 236.3 1004 236.8 1003 237.3 1002 238.3 1001 235.3 1000 235.8 996 235.8 995 235.3 994 235.8 993 236.3 992 236.8 991 237.3 990 238.3 989 239.3 988 235.3 984 235.3 983 235.8 979 235.8 978 236.3 977 236.8 976 237.3 975 235.3 973 235.3 972 235.8 971 235.3 970 235.8 967 235.8 966 236.3 965 236.8 964 237.3 963 238.3 962 239.3 961 235.8 960 235.8 959 235.3 957 235.3 956 235.8 953 235.8 952 236.3 951 236.8 950 237.3 949 238.3 948 235.8 946 235.8 945 236.3 944 236.8 943 237.8 942 238.3 941 239.8 940 237.3 939 237.3 938 237.8 937 238.8 936 240.3 935 239.3 934 239.8 933 240.8 932 241.3 931 242.3 930 243.3 929 244.3 928 245.3 927 246.8 926 248.3 925 249.8 924 251.3 923 253.3 922 255.8 921 258.3 920 238.3 919 235.3 918 235.8 917 235.3 915 235.3 914 235.8 912 235.8 911 236.3 910 236.8 909 237.3 908 235.8 904 235.8 903 235.3 900 235.3 899 235.8 898 235.8 897 236.3 896 235.3 894 235.3 893 235.8 892 235.8 891 235.3 889 235.3 888 235.8 884 235.8 883 235.3 882 235.8 881 235.3 879 235.3 878 235.8 877 235.3 875 235.3 874 235.8 873 236.3 872 236.8 871 237.3 870 238.3 869 235.8 866 235.8 865 235.3 864 235.8 862 235.8Z" fill="#e4f2e8"/><path d="M0 298.4H1500" stroke="#1d4630" stroke-width="0.9"/><path d="M0 297.9 7 297.9 8 288.4 9 297.9 17 297.9 18 288.4 19 297.9 31 297.9 32 288.4 33 297.9 43 297.9 44 288.4 45 297.9 57 297.9 58 288.4 59 297.9 66 297.9 L66 298.9 59 298.9 58 308.4 57 298.9 45 298.9 44 308.4 43 298.9 33 298.9 32 308.4 31 298.9 19 298.9 18 308.4 17 298.9 9 298.9 8 308.4 7 298.9 0 298.9Z M862 297.9 869 297.9 870 291.4 871 297.9 896 297.9 897 291.4 898 297.9 908 297.9 909 291.4 910 297.9 929 297.9 930 290.4 931 297.9 935 297.9 936 297.4 937 286.4 938 297.4 939 297.9 947 297.9 948 297.4 949 287.4 950 297.4 951 297.9 961 297.9 962 289.4 963 297.9 975 297.9 976 290.4 977 297.9 987 297.9 988 289.4 989 297.9 1001 297.9 1002 290.4 1003 297.9 1014 297.9 1015 294.4 1016 292.9 1017 297.9 1028 297.9 1029 291.4 1030 297.9 1034 297.9 1035 296.4 1036 274.4 1037 296.4 1038 297.9 1042 297.9 1043 296.9 1044 281.4 1045 296.9 1046 297.9 1054 297.9 1055 290.4 1056 297.9 1068 297.9 1069 293.9 1070 293.9 1071 297.9 1082 297.9 1083 290.4 1084 297.9 1095 297.9 1096 290.4 1097 297.9 1108 297.9 1109 290.4 1110 297.9 1121 297.9 1122 296.9 1123 281.4 1124 296.9 1125 297.9 1128 297.9 1129 293.4 1130 291.4 1131 297.9 1135 297.9 1136 289.4 1137 297.9 1141 297.9 1142 290.4 1143 297.9 1149 297.9 1150 292.4 1151 297.9 1162 297.9 1163 290.4 1164 297.9 1176 297.9 1177 291.4 1178 297.9 1189 297.9 1190 290.4 1191 297.9 1244 297.9 1245 296.9 1246 281.4 1247 296.9 1248 297.9 1258 297.9 1259 293.4 1260 294.9 1261 297.9 1271 297.9 1272 289.4 1273 297.9 1285 297.9 1286 290.4 1287 297.9 1298 297.9 1299 290.4 1300 297.9 1309 297.9 1310 296.4 1311 273.4 1312 296.4 1313 292.9 1314 292.9 1315 297.9 1340 297.9 1341 287.9 1342 283.4 1343 297.9 1353 297.9 1354 293.4 1355 293.4 1356 297.9 1365 297.9 1366 290.9 1367 287.9 1368 297.9 1370 297.9 1371 289.4 1372 297.9 1379 297.9 1380 291.4 1381 297.9 1393 297.9 1394 290.4 1395 297.9 1406 297.9 1407 290.4 1408 297.9 1419 297.9 1420 290.4 1421 290.4 1422 297.9 1446 297.9 1447 296.9 1448 281.4 1449 296.9 1450 297.9 1460 297.9 1461 295.4 1462 293.9 1463 297.9 1473 297.9 1474 294.4 1475 294.4 1476 297.9 1487 297.9 1488 291.4 1489 297.9 1499 297.9 L1499 298.9 1489 298.9 1488 305.4 1487 298.9 1476 298.9 1475 302.4 1474 302.4 1473 298.9 1463 298.9 1462 302.9 1461 301.4 1460 298.9 1450 298.9 1449 299.9 1448 315.4 1447 299.9 1446 298.9 1422 298.9 1421 306.4 1420 306.4 1419 298.9 1408 298.9 1407 306.4 1406 298.9 1395 298.9 1394 306.4 1393 298.9 1381 298.9 1380 305.4 1379 298.9 1372 298.9 1371 307.4 1370 298.9 1368 298.9 1367 308.9 1366 305.9 1365 298.9 1356 298.9 1355 303.4 1354 303.4 1353 298.9 1343 298.9 1342 313.4 1341 308.9 1340 298.9 1315 298.9 1314 303.9 1313 303.9 1312 300.4 1311 323.4 1310 300.4 1309 298.9 1300 298.9 1299 306.4 1298 298.9 1287 298.9 1286 306.4 1285 298.9 1273 298.9 1272 307.4 1271 298.9 1261 298.9 1260 301.9 1259 303.4 1258 298.9 1248 298.9 1247 299.9 1246 315.4 1245 299.9 1244 298.9 1191 298.9 1190 306.4 1189 298.9 1178 298.9 1177 305.4 1176 298.9 1164 298.9 1163 306.4 1162 298.9 1151 298.9 1150 304.4 1149 298.9 1143 298.9 1142 306.4 1141 298.9 1137 298.9 1136 307.4 1135 298.9 1131 298.9 1130 305.4 1129 303.4 1128 298.9 1125 298.9 1124 299.9 1123 315.4 1122 299.9 1121 298.9 1110 298.9 1109 306.4 1108 298.9 1097 298.9 1096 306.4 1095 298.9 1084 298.9 1083 306.4 1082 298.9 1071 298.9 1070 302.9 1069 302.9 1068 298.9 1056 298.9 1055 306.4 1054 298.9 1046 298.9 1045 299.9 1044 315.4 1043 299.9 1042 298.9 1038 298.9 1037 300.4 1036 322.4 1035 300.4 1034 298.9 1030 298.9 1029 305.4 1028 298.9 1017 298.9 1016 303.9 1015 302.4 1014 298.9 1003 298.9 1002 306.4 1001 298.9 989 298.9 988 307.4 987 298.9 977 298.9 976 306.4 975 298.9 963 298.9 962 307.4 961 298.9 951 298.9 950 299.4 949 309.4 948 299.4 947 298.9 939 298.9 938 299.4 937 310.4 936 299.4 935 298.9 931 298.9 930 306.4 929 298.9 910 298.9 909 305.4 908 298.9 898 298.9 897 305.4 896 298.9 871 298.9 870 305.4 869 298.9 862 298.9Z" fill="#1f4a30"/><path d="M0 298.4 6 298.4 7 295.4 8 291.4 9 295.4 10 298.4 16 298.4 17 295.4 18 291.4 19 295.4 20 298.4 30 298.4 31 295.4 32 291.4 33 295.4 34 298.4 42 298.4 43 295.4 44 291.4 45 295.4 46 298.4 56 298.4 57 295.4 58 291.4 59 295.4 60 298.4 66 298.4 L66 298.4 60 298.4 59 301.4 58 305.4 57 301.4 56 298.4 46 298.4 45 301.4 44 305.4 43 301.4 42 298.4 34 298.4 33 301.4 32 305.4 31 301.4 30 298.4 20 298.4 19 301.4 18 305.4 17 301.4 16 298.4 10 298.4 9 301.4 8 305.4 7 301.4 6 298.4 0 298.4Z M862 298.4 868 298.4 869 296.4 870 293.4 871 296.4 872 298.4 895 298.4 896 296.4 897 293.4 898 296.4 899 298.4 907 298.4 908 296.4 909 293.4 910 296.4 911 298.4 928 298.4 929 295.9 930 292.4 931 295.9 932 298.4 935 298.4 936 294.4 937 289.4 938 294.4 939 298.4 947 298.4 948 295.9 949 292.4 950 295.9 951 298.4 960 298.4 961 295.4 962 291.4 963 295.4 964 298.4 974 298.4 975 295.9 976 292.4 977 295.9 978 298.4 986 298.4 987 295.4 988 291.4 989 295.4 990 298.4 1000 298.4 1001 295.9 1002 292.4 1003 295.9 1004 298.4 1013 298.4 1014 297.4 1015 293.9 1016 292.9 1017 296.9 1018 298.4 1027 298.4 1028 296.4 1029 293.4 1030 296.4 1031 298.4 1034 298.4 1035 293.9 1036 288.4 1037 293.9 1038 298.4 1042 298.4 1043 294.4 1044 289.4 1045 294.4 1046 298.4 1053 298.4 1054 295.9 1055 292.4 1056 295.9 1057 298.4 1067 298.4 1068 297.4 1069 293.9 1070 293.9 1071 297.4 1072 298.4 1081 298.4 1082 295.9 1083 292.4 1084 295.9 1085 298.4 1094 298.4 1095 295.9 1096 292.4 1097 295.9 1098 298.4 1107 298.4 1108 295.9 1109 292.4 1110 295.9 1111 298.4 1121 298.4 1122 293.9 1123 288.4 1124 293.9 1125 298.4 1127 298.4 1128 297.4 1129 292.4 1130 291.4 1131 296.4 1132 298.4 1134 298.4 1135 295.4 1136 291.4 1137 295.4 1138 298.4 1140 298.4 1141 295.9 1142 292.4 1143 295.9 1144 298.4 1148 298.4 1149 296.4 1150 294.4 1151 296.4 1152 298.4 1161 298.4 1162 295.9 1163 292.4 1164 295.9 1165 298.4 1175 298.4 1176 296.4 1177 293.4 1178 296.4 1179 298.4 1188 298.4 1189 295.9 1190 292.4 1191 295.9 1192 298.4 1244 298.4 1245 294.4 1246 289.4 1247 294.4 1248 298.4 1257 298.4 1258 296.9 1259 293.9 1260 294.4 1261 297.9 1262 298.4 1270 298.4 1271 295.4 1272 291.4 1273 295.4 1274 298.4 1284 298.4 1285 295.9 1286 292.4 1287 295.9 1288 298.4 1297 298.4 1298 295.9 1299 292.4 1300 295.9 1301 298.4 1309 298.4 1310 293.9 1311 288.4 1312 293.9 1313 292.4 1314 292.4 1315 296.9 1316 298.4 1339 298.4 1340 296.9 1341 290.4 1342 288.9 1343 295.9 1344 298.4 1352 298.4 1353 297.4 1354 293.4 1355 293.4 1356 297.4 1357 298.4 1364 298.4 1365 297.4 1366 292.4 1367 291.4 1368 296.4 1369 298.4 1370 295.4 1371 291.4 1372 295.4 1373 298.4 1378 298.4 1379 296.4 1380 293.4 1381 296.4 1382 298.4 1392 298.4 1393 295.9 1394 292.4 1395 295.9 1396 298.4 1405 298.4 1406 295.9 1407 292.4 1408 295.9 1409 298.4 1418 298.4 1419 296.4 1420 289.9 1421 289.9 1422 296.4 1423 298.4 1446 298.4 1447 296.4 1448 294.4 1449 296.4 1450 298.4 1459 298.4 1460 297.9 1461 294.9 1462 294.4 1463 297.4 1464 298.4 1472 298.4 1473 297.4 1474 294.9 1475 294.9 1476 297.4 1477 298.4 1486 298.4 1487 296.4 1488 293.4 1489 296.4 1490 298.4 1499 298.4 L1499 298.4 1490 298.4 1489 300.4 1488 303.4 1487 300.4 1486 298.4 1477 298.4 1476 299.4 1475 301.9 1474 301.9 1473 299.4 1472 298.4 1464 298.4 1463 299.4 1462 302.4 1461 301.9 1460 298.9 1459 298.4 1450 298.4 1449 300.4 1448 302.4 1447 300.4 1446 298.4 1423 298.4 1422 300.4 1421 306.9 1420 306.9 1419 300.4 1418 298.4 1409 298.4 1408 300.9 1407 304.4 1406 300.9 1405 298.4 1396 298.4 1395 300.9 1394 304.4 1393 300.9 1392 298.4 1382 298.4 1381 300.4 1380 303.4 1379 300.4 1378 298.4 1373 298.4 1372 301.4 1371 305.4 1370 301.4 1369 298.4 1368 300.4 1367 305.4 1366 304.4 1365 299.4 1364 298.4 1357 298.4 1356 299.4 1355 303.4 1354 303.4 1353 299.4 1352 298.4 1344 298.4 1343 300.9 1342 307.9 1341 306.4 1340 299.9 1339 298.4 1316 298.4 1315 299.9 1314 304.4 1313 304.4 1312 302.9 1311 308.4 1310 302.9 1309 298.4 1301 298.4 1300 300.9 1299 304.4 1298 300.9 1297 298.4 1288 298.4 1287 300.9 1286 304.4 1285 300.9 1284 298.4 1274 298.4 1273 301.4 1272 305.4 1271 301.4 1270 298.4 1262 298.4 1261 298.9 1260 302.4 1259 302.9 1258 299.9 1257 298.4 1248 298.4 1247 302.4 1246 307.4 1245 302.4 1244 298.4 1192 298.4 1191 300.9 1190 304.4 1189 300.9 1188 298.4 1179 298.4 1178 300.4 1177 303.4 1176 300.4 1175 298.4 1165 298.4 1164 300.9 1163 304.4 1162 300.9 1161 298.4 1152 298.4 1151 300.4 1150 302.4 1149 300.4 1148 298.4 1144 298.4 1143 300.9 1142 304.4 1141 300.9 1140 298.4 1138 298.4 1137 301.4 1136 305.4 1135 301.4 1134 298.4 1132 298.4 1131 300.4 1130 305.4 1129 304.4 1128 299.4 1127 298.4 1125 298.4 1124 302.9 1123 308.4 1122 302.9 1121 298.4 1111 298.4 1110 300.9 1109 304.4 1108 300.9 1107 298.4 1098 298.4 1097 300.9 1096 304.4 1095 300.9 1094 298.4 1085 298.4 1084 300.9 1083 304.4 1082 300.9 1081 298.4 1072 298.4 1071 299.4 1070 302.9 1069 302.9 1068 299.4 1067 298.4 1057 298.4 1056 300.9 1055 304.4 1054 300.9 1053 298.4 1046 298.4 1045 302.4 1044 307.4 1043 302.4 1042 298.4 1038 298.4 1037 302.9 1036 308.4 1035 302.9 1034 298.4 1031 298.4 1030 300.4 1029 303.4 1028 300.4 1027 298.4 1018 298.4 1017 299.9 1016 303.9 1015 302.9 1014 299.4 1013 298.4 1004 298.4 1003 300.9 1002 304.4 1001 300.9 1000 298.4 990 298.4 989 301.4 988 305.4 987 301.4 986 298.4 978 298.4 977 300.9 976 304.4 975 300.9 974 298.4 964 298.4 963 301.4 962 305.4 961 301.4 960 298.4 951 298.4 950 300.9 949 304.4 948 300.9 947 298.4 939 298.4 938 302.4 937 307.4 936 302.4 935 298.4 932 298.4 931 300.9 930 304.4 929 300.9 928 298.4 911 298.4 910 300.4 909 303.4 908 300.4 907 298.4 899 298.4 898 300.4 897 303.4 896 300.4 895 298.4 872 298.4 871 300.4 870 303.4 869 300.4 868 298.4 862 298.4Z" fill="#e4f2e8"/><path d="M0 362.5H1500" stroke="#1d4630" stroke-width="0.9"/><path d="M0 362 7 362 8 357.5 9 362 17 362 18 357.5 19 362 31 362 32 357.5 33 362 43 362 44 357.5 45 362 57 362 58 357.5 59 362 66 362 L66 363 59 363 58 367.5 57 363 45 363 44 367.5 43 363 33 363 32 367.5 31 363 19 363 18 367.5 17 363 9 363 8 367.5 7 363 0 363Z M862 362 869 362 870 359 871 362 896 362 897 359 898 362 908 362 909 359 910 362 929 362 930 358.5 931 362 936 362 937 356.5 938 362 948 362 949 357 950 362 961 362 962 358 963 362 975 362 976 358.5 977 362 987 362 988 358 989 362 1001 362 1002 358.5 1003 362 1014 362 1015 361 1016 360 1017 362 1028 362 1029 359 1030 362 1035 362 1036 350.5 1037 362 1043 362 1044 354 1045 362 1054 362 1055 358.5 1056 362 1068 362 1069 360.5 1070 360.5 1071 362 1082 362 1083 358.5 1084 362 1095 362 1096 358.5 1097 362 1108 362 1109 358.5 1110 362 1122 362 1123 354 1124 362 1128 362 1129 360.5 1130 359.5 1131 362 1135 362 1136 358 1137 362 1141 362 1142 358.5 1143 362 1149 362 1150 359.5 1151 362 1162 362 1163 358.5 1164 362 1176 362 1177 359 1178 362 1189 362 1190 358.5 1191 362 1245 362 1246 354 1247 362 1258 362 1259 360 1260 361 1261 362 1271 362 1272 358 1273 362 1285 362 1286 358.5 1287 362 1298 362 1299 358.5 1300 362 1310 362 1311 350 1312 362 1313 360 1314 360 1315 362 1340 362 1341 358 1342 355.5 1343 362 1353 362 1354 360.5 1355 360.5 1356 362 1365 362 1366 359.5 1367 357.5 1368 362 1370 362 1371 358 1372 362 1379 362 1380 359 1381 362 1393 362 1394 358.5 1395 362 1406 362 1407 358.5 1408 362 1419 362 1420 359 1421 359 1422 362 1447 362 1448 354 1449 362 1460 362 1461 361 1462 360.5 1463 362 1473 362 1474 361 1475 361 1476 362 1487 362 1488 359 1489 362 1499 362 L1499 363 1489 363 1488 366 1487 363 1476 363 1475 364 1474 364 1473 363 1463 363 1462 364.5 1461 364 1460 363 1449 363 1448 371 1447 363 1422 363 1421 366 1420 366 1419 363 1408 363 1407 366.5 1406 363 1395 363 1394 366.5 1393 363 1381 363 1380 366 1379 363 1372 363 1371 367 1370 363 1368 363 1367 367.5 1366 365.5 1365 363 1356 363 1355 364.5 1354 364.5 1353 363 1343 363 1342 369.5 1341 367 1340 363 1315 363 1314 365 1313 365 1312 363 1311 375 1310 363 1300 363 1299 366.5 1298 363 1287 363 1286 366.5 1285 363 1273 363 1272 367 1271 363 1261 363 1260 364 1259 365 1258 363 1247 363 1246 371 1245 363 1191 363 1190 366.5 1189 363 1178 363 1177 366 1176 363 1164 363 1163 366.5 1162 363 1151 363 1150 365.5 1149 363 1143 363 1142 366.5 1141 363 1137 363 1136 367 1135 363 1131 363 1130 365.5 1129 364.5 1128 363 1124 363 1123 371 1122 363 1110 363 1109 366.5 1108 363 1097 363 1096 366.5 1095 363 1084 363 1083 366.5 1082 363 1071 363 1070 364.5 1069 364.5 1068 363 1056 363 1055 366.5 1054 363 1045 363 1044 371 1043 363 1037 363 1036 374.5 1035 363 1030 363 1029 366 1028 363 1017 363 1016 365 1015 364 1014 363 1003 363 1002 366.5 1001 363 989 363 988 367 987 363 977 363 976 366.5 975 363 963 363 962 367 961 363 950 363 949 368 948 363 938 363 937 368.5 936 363 931 363 930 366.5 929 363 910 363 909 366 908 363 898 363 897 366 896 363 871 363 870 366 869 363 862 363Z" fill="#1f4a30"/><path d="M0 362.5 6 362.5 7 361 8 359 9 361 10 362.5 16 362.5 17 361 18 359 19 361 20 362.5 30 362.5 31 361 32 359 33 361 34 362.5 42 362.5 43 361 44 359 45 361 46 362.5 56 362.5 57 361 58 359 59 361 60 362.5 66 362.5 L66 362.5 60 362.5 59 364 58 366 57 364 56 362.5 46 362.5 45 364 44 366 43 364 42 362.5 34 362.5 33 364 32 366 31 364 30 362.5 20 362.5 19 364 18 366 17 364 16 362.5 10 362.5 9 364 8 366 7 364 6 362.5 0 362.5Z M862 362.5 868 362.5 869 361.5 870 360 871 361.5 872 362.5 895 362.5 896 361.5 897 360 898 361.5 899 362.5 907 362.5 908 361.5 909 360 910 361.5 911 362.5 928 362.5 929 361.5 930 359.5 931 361.5 932 362.5 935 362.5 936 361 937 358 938 361 939 362.5 947 362.5 948 361.5 949 359.5 950 361.5 951 362.5 960 362.5 961 361 962 359 963 361 964 362.5 974 362.5 975 361.5 976 359.5 977 361.5 978 362.5 986 362.5 987 361 988 359 989 361 990 362.5 1000 362.5 1001 361.5 1002 359.5 1003 361.5 1004 362.5 1014 362.5 1015 360.5 1016 360 1017 362 1018 362.5 1027 362.5 1028 361.5 1029 360 1030 361.5 1031 362.5 1034 362.5 1035 360.5 1036 357.5 1037 360.5 1038 362.5 1042 362.5 1043 361 1044 358 1045 361 1046 362.5 1053 362.5 1054 361.5 1055 359.5 1056 361.5 1057 362.5 1068 362.5 1069 360.5 1070 360.5 1071 362.5 1081 362.5 1082 361.5 1083 359.5 1084 361.5 1085 362.5 1094 362.5 1095 361.5 1096 359.5 1097 361.5 1098 362.5 1107 362.5 1108 361.5 1109 359.5 1110 361.5 1111 362.5 1121 362.5 1122 360.5 1123 357.5 1124 360.5 1125 362.5 1128 362.5 1129 359.5 1130 359 1131 362 1132 362.5 1134 362.5 1135 361 1136 359 1137 361 1138 362.5 1140 362.5 1141 361.5 1142 359.5 1143 361.5 1144 362.5 1148 362.5 1149 361.5 1150 360.5 1151 361.5 1152 362.5 1161 362.5 1162 361.5 1163 359.5 1164 361.5 1165 362.5 1175 362.5 1176 361.5 1177 360 1178 361.5 1179 362.5 1188 362.5 1189 361.5 1190 359.5 1191 361.5 1192 362.5 1244 362.5 1245 361 1246 358 1247 361 1248 362.5 1257 362.5 1258 362 1259 360.5 1260 360.5 1261 362.5 1270 362.5 1271 361 1272 359 1273 361 1274 362.5 1284 362.5 1285 361.5 1286 359.5 1287 361.5 1288 362.5 1297 362.5 1298 361.5 1299 359.5 1300 361.5 1301 362.5 1309 362.5 1310 360.5 1311 357.5 1312 360.5 1313 359.5 1314 359.5 1315 362.5 1340 362.5 1341 358.5 1342 358 1343 362 1344 362.5 1353 362.5 1354 360 1355 360 1356 362.5 1365 362.5 1366 359.5 1367 359 1368 362 1369 362.5 1370 361 1371 359 1372 361 1373 362.5 1378 362.5 1379 361.5 1380 360 1381 361.5 1382 362.5 1392 362.5 1393 361.5 1394 359.5 1395 361.5 1396 362.5 1405 362.5 1406 361.5 1407 359.5 1408 361.5 1409 362.5 1418 362.5 1419 362 1420 358.5 1421 358.5 1422 362 1423 362.5 1446 362.5 1447 361.5 1448 360.5 1449 361.5 1450 362.5 1460 362.5 1461 361 1462 360.5 1463 362 1464 362.5 1473 362.5 1474 361 1475 361 1476 362.5 1486 362.5 1487 361.5 1488 360 1489 361.5 1490 362.5 1499 362.5 L1499 362.5 1490 362.5 1489 363.5 1488 365 1487 363.5 1486 362.5 1476 362.5 1475 364 1474 364 1473 362.5 1464 362.5 1463 363 1462 364.5 1461 364 1460 362.5 1450 362.5 1449 363.5 1448 364.5 1447 363.5 1446 362.5 1423 362.5 1422 363 1421 366.5 1420 366.5 1419 363 1418 362.5 1409 362.5 1408 363.5 1407 365.5 1406 363.5 1405 362.5 1396 362.5 1395 363.5 1394 365.5 1393 363.5 1392 362.5 1382 362.5 1381 363.5 1380 365 1379 363.5 1378 362.5 1373 362.5 1372 364 1371 366 1370 364 1369 362.5 1368 363 1367 366 1366 365.5 1365 362.5 1356 362.5 1355 365 1354 365 1353 362.5 1344 362.5 1343 363 1342 367 1341 366.5 1340 362.5 1315 362.5 1314 365.5 1313 365.5 1312 364.5 1311 367.5 1310 364.5 1309 362.5 1301 362.5 1300 363.5 1299 365.5 1298 363.5 1297 362.5 1288 362.5 1287 363.5 1286 365.5 1285 363.5 1284 362.5 1274 362.5 1273 364 1272 366 1271 364 1270 362.5 1261 362.5 1260 364.5 1259 364.5 1258 363 1257 362.5 1248 362.5 1247 364 1246 367 1245 364 1244 362.5 1192 362.5 1191 363.5 1190 365.5 1189 363.5 1188 362.5 1179 362.5 1178 363.5 1177 365 1176 363.5 1175 362.5 1165 362.5 1164 363.5 1163 365.5 1162 363.5 1161 362.5 1152 362.5 1151 363.5 1150 364.5 1149 363.5 1148 362.5 1144 362.5 1143 363.5 1142 365.5 1141 363.5 1140 362.5 1138 362.5 1137 364 1136 366 1135 364 1134 362.5 1132 362.5 1131 363 1130 366 1129 365.5 1128 362.5 1125 362.5 1124 364.5 1123 367.5 1122 364.5 1121 362.5 1111 362.5 1110 363.5 1109 365.5 1108 363.5 1107 362.5 1098 362.5 1097 363.5 1096 365.5 1095 363.5 1094 362.5 1085 362.5 1084 363.5 1083 365.5 1082 363.5 1081 362.5 1071 362.5 1070 364.5 1069 364.5 1068 362.5 1057 362.5 1056 363.5 1055 365.5 1054 363.5 1053 362.5 1046 362.5 1045 364 1044 367 1043 364 1042 362.5 1038 362.5 1037 364.5 1036 367.5 1035 364.5 1034 362.5 1031 362.5 1030 363.5 1029 365 1028 363.5 1027 362.5 1018 362.5 1017 363 1016 365 1015 364.5 1014 362.5 1004 362.5 1003 363.5 1002 365.5 1001 363.5 1000 362.5 990 362.5 989 364 988 366 987 364 986 362.5 978 362.5 977 363.5 976 365.5 975 363.5 974 362.5 964 362.5 963 364 962 366 961 364 960 362.5 951 362.5 950 363.5 949 365.5 948 363.5 947 362.5 939 362.5 938 364 937 367 936 364 935 362.5 932 362.5 931 363.5 930 365.5 929 363.5 928 362.5 911 362.5 910 363.5 909 365 908 363.5 907 362.5 899 362.5 898 363.5 897 365 896 363.5 895 362.5 872 362.5 871 363.5 870 365 869 363.5 868 362.5 862 362.5Z" fill="#e4f2e8"/><path d="M0 426H1500" stroke="#1d4630" stroke-width="0.9"/><path d="M0 425.5 7 425.5 8 424 9 425.5 17 425.5 18 424 19 425.5 31 425.5 32 424 33 425.5 43 425.5 44 424 45 425.5 57 425.5 58 424 59 425.5 66 425.5 L66 426.5 59 426.5 58 428 57 426.5 45 426.5 44 428 43 426.5 33 426.5 32 428 31 426.5 19 426.5 18 428 17 426.5 9 426.5 8 428 7 426.5 0 426.5Z M862 425.5 869 425.5 870 424.5 871 425.5 896 425.5 897 424.5 898 425.5 908 425.5 909 424.5 910 425.5 929 425.5 930 424 931 425.5 936 425.5 937 423.5 938 425.5 948 425.5 949 423.5 950 425.5 961 425.5 962 424 963 425.5 975 425.5 976 424 977 425.5 987 425.5 988 424 989 425.5 1001 425.5 1002 424 1003 425.5 1015 425.5 1016 425 1017 425.5 1028 425.5 1029 424.5 1030 425.5 1035 425.5 1036 420.5 1037 425.5 1043 425.5 1044 422.5 1045 425.5 1054 425.5 1055 424 1056 425.5 1082 425.5 1083 424 1084 425.5 1095 425.5 1096 424 1097 425.5 1108 425.5 1109 424 1110 425.5 1122 425.5 1123 422.5 1124 425.5 1129 425.5 1130 424.5 1131 425.5 1135 425.5 1136 424 1137 425.5 1141 425.5 1142 424 1143 425.5 1149 425.5 1150 424.5 1151 425.5 1162 425.5 1163 424 1164 425.5 1176 425.5 1177 424.5 1178 425.5 1189 425.5 1190 424 1191 425.5 1245 425.5 1246 422.5 1247 425.5 1258 425.5 1259 425 1260 425.5 1271 425.5 1272 424 1273 425.5 1285 425.5 1286 424 1287 425.5 1298 425.5 1299 424 1300 425.5 1310 425.5 1311 420.5 1312 425.5 1313 425 1314 425 1315 425.5 1340 425.5 1341 424.5 1342 423 1343 425.5 1353 425.5 1354 425 1355 425 1356 425.5 1365 425.5 1366 425 1367 424 1368 425.5 1370 425.5 1371 424 1372 425.5 1379 425.5 1380 424.5 1381 425.5 1393 425.5 1394 424 1395 425.5 1406 425.5 1407 424 1408 425.5 1419 425.5 1420 424.5 1421 424.5 1422 425.5 1447 425.5 1448 422.5 1449 425.5 1461 425.5 1462 425 1463 425.5 1487 425.5 1488 424.5 1489 425.5 1499 425.5 L1499 426.5 1489 426.5 1488 427.5 1487 426.5 1463 426.5 1462 427 1461 426.5 1449 426.5 1448 429.5 1447 426.5 1422 426.5 1421 427.5 1420 427.5 1419 426.5 1408 426.5 1407 428 1406 426.5 1395 426.5 1394 428 1393 426.5 1381 426.5 1380 427.5 1379 426.5 1372 426.5 1371 428 1370 426.5 1368 426.5 1367 428 1366 427 1365 426.5 1356 426.5 1355 427 1354 427 1353 426.5 1343 426.5 1342 429 1341 427.5 1340 426.5 1315 426.5 1314 427 1313 427 1312 426.5 1311 431.5 1310 426.5 1300 426.5 1299 428 1298 426.5 1287 426.5 1286 428 1285 426.5 1273 426.5 1272 428 1271 426.5 1260 426.5 1259 427 1258 426.5 1247 426.5 1246 429.5 1245 426.5 1191 426.5 1190 428 1189 426.5 1178 426.5 1177 427.5 1176 426.5 1164 426.5 1163 428 1162 426.5 1151 426.5 1150 427.5 1149 426.5 1143 426.5 1142 428 1141 426.5 1137 426.5 1136 428 1135 426.5 1131 426.5 1130 427.5 1129 426.5 1124 426.5 1123 429.5 1122 426.5 1110 426.5 1109 428 1108 426.5 1097 426.5 1096 428 1095 426.5 1084 426.5 1083 428 1082 426.5 1056 426.5 1055 428 1054 426.5 1045 426.5 1044 429.5 1043 426.5 1037 426.5 1036 431.5 1035 426.5 1030 426.5 1029 427.5 1028 426.5 1017 426.5 1016 427 1015 426.5 1003 426.5 1002 428 1001 426.5 989 426.5 988 428 987 426.5 977 426.5 976 428 975 426.5 963 426.5 962 428 961 426.5 950 426.5 949 428.5 948 426.5 938 426.5 937 428.5 936 426.5 931 426.5 930 428 929 426.5 910 426.5 909 427.5 908 426.5 898 426.5 897 427.5 896 426.5 871 426.5 870 427.5 869 426.5 862 426.5Z" fill="#1f4a30"/><path d="M0 426 6 426 7 425.5 8 424.5 9 425.5 10 426 16 426 17 425.5 18 424.5 19 425.5 20 426 30 426 31 425.5 32 424.5 33 425.5 34 426 42 426 43 425.5 44 424.5 45 425.5 46 426 56 426 57 425.5 58 424.5 59 425.5 60 426 66 426 L66 426 60 426 59 426.5 58 427.5 57 426.5 56 426 46 426 45 426.5 44 427.5 43 426.5 42 426 34 426 33 426.5 32 427.5 31 426.5 30 426 20 426 19 426.5 18 427.5 17 426.5 16 426 10 426 9 426.5 8 427.5 7 426.5 6 426 0 426Z M862 426 868 426 869 425.5 870 425 871 425.5 872 426 895 426 896 425.5 897 425 898 425.5 899 426 907 426 908 425.5 909 425 910 425.5 911 426 928 426 929 425.5 930 424.5 931 425.5 932 426 935 426 936 425.5 937 424 938 425.5 939 426 947 426 948 425.5 949 424.5 950 425.5 951 426 960 426 961 425.5 962 424.5 963 425.5 964 426 974 426 975 425.5 976 424.5 977 425.5 978 426 986 426 987 425.5 988 424.5 989 425.5 990 426 1000 426 1001 425.5 1002 424.5 1003 425.5 1004 426 1014 426 1015 425 1016 425 1017 426 1027 426 1028 425.5 1029 425 1030 425.5 1031 426 1034 426 1035 425.5 1036 424 1037 425.5 1038 426 1042 426 1043 425.5 1044 424 1045 425.5 1046 426 1053 426 1054 425.5 1055 424.5 1056 425.5 1057 426 1068 426 1069 425 1070 425 1071 426 1081 426 1082 425.5 1083 424.5 1084 425.5 1085 426 1094 426 1095 425.5 1096 424.5 1097 425.5 1098 426 1107 426 1108 425.5 1109 424.5 1110 425.5 1111 426 1121 426 1122 425.5 1123 424 1124 425.5 1125 426 1128 426 1129 425 1130 424.5 1131 426 1134 426 1135 425.5 1136 424.5 1137 425.5 1138 426 1140 426 1141 425.5 1142 424.5 1143 425.5 1144 426 1148 426 1149 425.5 1150 425 1151 425.5 1152 426 1161 426 1162 425.5 1163 424.5 1164 425.5 1165 426 1175 426 1176 425.5 1177 425 1178 425.5 1179 426 1188 426 1189 425.5 1190 424.5 1191 425.5 1192 426 1244 426 1245 425.5 1246 424 1247 425.5 1248 426 1258 426 1259 425 1260 425 1261 426 1270 426 1271 425.5 1272 424.5 1273 425.5 1274 426 1284 426 1285 425.5 1286 424.5 1287 425.5 1288 426 1297 426 1298 425.5 1299 424.5 1300 425.5 1301 426 1309 426 1310 425.5 1311 424 1312 425.5 1313 425 1314 425 1315 426 1340 426 1341 424.5 1342 424 1343 426 1353 426 1354 425 1355 425 1356 426 1365 426 1366 425 1367 424.5 1368 426 1369 426 1370 425.5 1371 424.5 1372 425.5 1373 426 1378 426 1379 425.5 1380 425 1381 425.5 1382 426 1392 426 1393 425.5 1394 424.5 1395 425.5 1396 426 1405 426 1406 425.5 1407 424.5 1408 425.5 1409 426 1419 426 1420 424.5 1421 424.5 1422 426 1446 426 1447 425.5 1448 425 1449 425.5 1450 426 1460 426 1461 425.5 1462 425 1463 426 1473 426 1474 425.5 1475 425.5 1476 426 1486 426 1487 425.5 1488 425 1489 425.5 1490 426 1499 426 L1499 426 1490 426 1489 426.5 1488 427 1487 426.5 1486 426 1476 426 1475 426.5 1474 426.5 1473 426 1463 426 1462 427 1461 426.5 1460 426 1450 426 1449 426.5 1448 427 1447 426.5 1446 426 1422 426 1421 427.5 1420 427.5 1419 426 1409 426 1408 426.5 1407 427.5 1406 426.5 1405 426 1396 426 1395 426.5 1394 427.5 1393 426.5 1392 426 1382 426 1381 426.5 1380 427 1379 426.5 1378 426 1373 426 1372 426.5 1371 427.5 1370 426.5 1369 426 1368 426 1367 427.5 1366 427 1365 426 1356 426 1355 427 1354 427 1353 426 1343 426 1342 428 1341 427.5 1340 426 1315 426 1314 427 1313 427 1312 426.5 1311 428 1310 426.5 1309 426 1301 426 1300 426.5 1299 427.5 1298 426.5 1297 426 1288 426 1287 426.5 1286 427.5 1285 426.5 1284 426 1274 426 1273 426.5 1272 427.5 1271 426.5 1270 426 1261 426 1260 427 1259 427 1258 426 1248 426 1247 426.5 1246 428 1245 426.5 1244 426 1192 426 1191 426.5 1190 427.5 1189 426.5 1188 426 1179 426 1178 426.5 1177 427 1176 426.5 1175 426 1165 426 1164 426.5 1163 427.5 1162 426.5 1161 426 1152 426 1151 426.5 1150 427 1149 426.5 1148 426 1144 426 1143 426.5 1142 427.5 1141 426.5 1140 426 1138 426 1137 426.5 1136 427.5 1135 426.5 1134 426 1131 426 1130 427.5 1129 427 1128 426 1125 426 1124 426.5 1123 428 1122 426.5 1121 426 1111 426 1110 426.5 1109 427.5 1108 426.5 1107 426 1098 426 1097 426.5 1096 427.5 1095 426.5 1094 426 1085 426 1084 426.5 1083 427.5 1082 426.5 1081 426 1071 426 1070 427 1069 427 1068 426 1057 426 1056 426.5 1055 427.5 1054 426.5 1053 426 1046 426 1045 426.5 1044 428 1043 426.5 1042 426 1038 426 1037 426.5 1036 428 1035 426.5 1034 426 1031 426 1030 426.5 1029 427 1028 426.5 1027 426 1017 426 1016 427 1015 427 1014 426 1004 426 1003 426.5 1002 427.5 1001 426.5 1000 426 990 426 989 426.5 988 427.5 987 426.5 986 426 978 426 977 426.5 976 427.5 975 426.5 974 426 964 426 963 426.5 962 427.5 961 426.5 960 426 951 426 950 426.5 949 427.5 948 426.5 947 426 939 426 938 426.5 937 428 936 426.5 935 426 932 426 931 426.5 930 427.5 929 426.5 928 426 911 426 910 426.5 909 427 908 426.5 907 426 899 426 898 426.5 897 427 896 426.5 895 426 872 426 871 426.5 870 427 869 426.5 868 426 862 426Z" fill="#e4f2e8"/><path d="M0 490H1500" stroke="#1d4630" stroke-width="0.9"/><path d="M0 485.5 1 485.5 2 484.5 3 485.5 4 485.5 5 485 6 486 7 485.5 8 485 9 485 10 486 12 486 13 485 14 485 15 486.5 16 484.5 17 484.5 18 485 19 485 20 486 21 486.5 22 485.5 23 486.5 24 486 25 486 26 486.5 27 485.5 28 485.5 29 484.5 30 485.5 31 485 32 485.5 33 485 34 485.5 35 486 36 484.5 38 484.5 39 485 40 486 42 486 43 486.5 44 485 45 485.5 46 484.5 47 485.5 48 484.5 49 484.5 50 486.5 51 486 52 484.5 53 485.5 54 484.5 55 485.5 56 486.5 57 485 58 485 59 486 60 486.5 61 485.5 62 484.5 63 485 64 486 66 486 L66 494 64 494 63 495 62 495.5 61 494.5 60 493.5 59 494 58 495 57 495 56 493.5 55 494.5 54 495.5 53 494.5 52 495.5 51 494 50 493.5 49 495.5 48 495.5 47 494.5 46 495.5 45 494.5 44 495 43 493.5 42 494 40 494 39 495 38 495.5 36 495.5 35 494 34 494.5 33 495 32 494.5 31 495 30 494.5 29 495.5 28 494.5 27 494.5 26 493.5 25 494 24 494 23 493.5 22 494.5 21 493.5 20 494 19 495 18 495 17 495.5 16 495.5 15 493.5 14 495 13 495 12 494 10 494 9 495 8 495 7 494.5 6 494 5 495 4 494.5 3 494.5 2 495.5 1 494.5 0 494.5Z M862 486.5 863 485 864 486 865 485.5 866 485.5 867 486 868 485 869 486 870 485 871 486 872 485.5 873 486 874 486 875 484.5 876 485 877 486 878 484.5 879 486 880 485.5 881 484.5 882 485 883 486 884 484.5 885 486 886 486 887 485 888 486 889 486 890 486.5 891 486 892 485 893 486 894 485 895 485.5 896 485.5 897 484.5 898 485.5 899 485 900 484.5 901 486 902 486 903 484.5 904 484.5 905 486 906 486 907 485 908 484.5 909 486 910 484.5 911 484.5 912 485 913 485.5 914 486 915 486.5 916 484.5 917 486 918 485 919 486 920 484.5 921 485 922 486 923 486 924 485 925 486.5 926 486 927 485.5 928 484.5 929 485 930 486 931 484.5 932 486 933 486.5 934 486 935 485.5 936 486.5 937 486 938 485.5 939 485.5 940 486 941 485.5 942 484.5 943 484.5 944 485 946 485 947 486 948 486.5 949 486.5 950 484.5 951 485 952 484.5 953 486.5 954 485 955 485.5 956 485 957 486 958 484.5 959 486.5 960 485.5 961 485 962 484.5 963 485 965 485 966 484.5 967 485.5 968 485 969 484.5 970 484.5 971 485.5 972 485 973 484.5 974 485 975 485 976 485.5 977 485 978 485 979 486.5 980 485 981 484.5 982 484.5 983 485 984 485.5 985 485 986 485 987 485.5 988 484.5 989 486.5 990 485 991 486.5 992 485 993 485.5 994 486 995 485 996 485.5 997 485 998 484.5 999 486 1000 486.5 1001 486 1002 485 1003 486 1004 486 1005 484.5 1006 485 1007 485.5 1008 484.5 1009 486 1010 485 1011 486 1012 485.5 1013 485 1014 484.5 1015 484.5 1016 485.5 1017 485 1018 486 1019 486 1020 485.5 1021 484.5 1022 484.5 1023 485 1024 484.5 1025 486 1026 486 1027 485.5 1028 486 1029 486 1030 485.5 1031 485 1032 485.5 1033 486 1034 484.5 1035 484.5 1036 485.5 1037 486.5 1038 486.5 1039 484.5 1040 486.5 1041 485 1042 485.5 1043 486 1044 485 1045 486.5 1046 486 1047 485.5 1048 486.5 1049 484.5 1050 486 1051 486 1052 486.5 1053 485 1054 485.5 1055 485 1057 485 1058 484.5 1059 485 1060 486 1061 485.5 1062 486 1063 486.5 1064 485.5 1065 485 1066 486 1067 486 1068 485.5 1069 485 1070 485.5 1071 485 1072 485 1073 485.5 1074 485 1075 484.5 1076 486.5 1077 484.5 1078 485 1079 486 1080 485.5 1081 485 1082 484.5 1083 485.5 1084 485.5 1085 484.5 1086 485 1087 484.5 1088 485.5 1089 485 1090 486 1091 485 1092 484.5 1093 485 1094 485 1095 486 1096 484.5 1098 484.5 1099 485.5 1100 485 1101 486 1102 484.5 1103 484.5 1104 485.5 1105 486.5 1106 485.5 1107 485.5 1108 485 1109 485.5 1110 486.5 1111 485 1112 486.5 1113 485 1114 486 1115 485.5 1116 485 1117 486 1118 486 1119 485.5 1120 485 1121 484.5 1122 485 1123 484.5 1124 485.5 1125 484.5 1126 486.5 1127 486 1128 485.5 1129 486 1130 485 1131 485 1132 485.5 1133 484.5 1134 485.5 1135 486 1136 485.5 1137 484.5 1138 484.5 1139 486 1140 484.5 1141 484.5 1142 485.5 1143 485 1144 486 1145 485.5 1146 485.5 1147 485 1148 486.5 1149 484.5 1150 485.5 1151 485.5 1152 485 1153 485.5 1154 485.5 1155 485 1156 486.5 1157 485.5 1158 485.5 1159 484.5 1160 484.5 1161 486 1162 485.5 1163 486 1164 485.5 1165 484.5 1166 484.5 1167 485.5 1168 486 1169 486 1170 485 1171 484.5 1172 486 1173 485 1174 486.5 1175 486 1176 486 1177 485 1178 486 1179 485.5 1180 485 1181 486 1182 485 1183 486 1184 485.5 1185 486 1186 486 1187 485.5 1191 485.5 1192 486 1193 486 1194 485 1195 485 1196 485.5 1197 484.5 1198 485 1199 484.5 1200 486 1201 485 1202 485 1203 484.5 1204 486 1205 486 1206 484.5 1207 486 1208 484.5 1209 484.5 1210 486 1211 486 1212 485 1213 486 1214 486 1215 484.5 1216 485.5 1217 485 1218 486 1219 485.5 1220 485 1221 486.5 1222 486 1223 485 1224 484.5 1225 484.5 1226 486 1227 485.5 1228 485 1229 485.5 1230 485 1231 486 1232 486.5 1233 486 1234 486.5 1235 485.5 1237 485.5 1238 486 1240 486 1241 484.5 1243 484.5 1244 486 1245 486.5 1246 484.5 1247 485.5 1248 485 1249 486 1250 485.5 1252 485.5 1253 485 1254 486.5 1255 485 1256 484.5 1257 486 1258 485.5 1259 485 1260 485.5 1261 486 1262 486 1263 485.5 1264 486.5 1265 484.5 1266 485 1267 485 1268 484.5 1269 485 1270 485.5 1271 485 1272 485.5 1273 484.5 1274 485 1275 486 1276 484.5 1277 485 1278 485 1279 484.5 1280 485.5 1281 484.5 1282 484.5 1283 485 1285 485 1286 485.5 1287 485 1288 486.5 1289 485.5 1290 485.5 1291 486.5 1292 485.5 1293 485 1294 485 1295 486 1296 484.5 1297 485 1298 485.5 1299 485 1300 485.5 1302 485.5 1303 484.5 1304 485 1306 485 1307 484.5 1308 486.5 1309 485 1310 485 1311 486 1312 485.5 1313 486.5 1314 486 1315 485.5 1316 486 1317 486 1318 484.5 1319 485.5 1320 485.5 1321 484.5 1322 485.5 1323 484.5 1324 485 1325 485 1326 486.5 1327 485 1328 485 1329 486.5 1330 484.5 1331 486 1332 485.5 1333 486 1334 485.5 1335 485 1336 486.5 1337 484.5 1338 485.5 1339 485.5 1340 485 1341 485.5 1342 486 1343 485 1344 485.5 1345 486 1346 485 1347 486 1348 486.5 1349 486 1350 486.5 1351 486 1352 485 1353 485.5 1354 484.5 1355 485 1356 486.5 1357 484.5 1358 484.5 1359 486.5 1360 484.5 1361 485.5 1362 485.5 1363 484.5 1364 486 1365 485.5 1366 484.5 1367 485 1368 485.5 1369 484.5 1370 484.5 1371 485 1372 486 1373 485 1374 485.5 1375 486 1376 486.5 1377 485.5 1378 486 1379 485.5 1380 485 1381 485.5 1382 486 1383 485 1384 485.5 1385 485 1386 485.5 1387 484.5 1388 484.5 1389 485 1390 486 1391 486 1392 484.5 1393 485 1394 485 1395 485.5 1396 486 1397 485 1398 485.5 1399 485 1401 485 1402 486 1403 486 1404 484.5 1406 484.5 1407 486.5 1408 486.5 1409 486 1410 485.5 1411 485 1412 486 1413 485.5 1414 486.5 1415 486.5 1416 485 1417 485.5 1418 485 1419 485.5 1420 485.5 1421 486 1422 485.5 1423 485 1424 484.5 1425 486.5 1426 486 1427 485 1429 485 1430 486 1431 485.5 1432 486 1433 485 1434 485.5 1435 485 1436 484.5 1437 486 1438 485.5 1439 485 1440 484.5 1441 485.5 1442 485.5 1443 486 1444 484.5 1445 486.5 1446 486.5 1447 485.5 1448 485.5 1449 485 1450 486 1451 485 1452 486.5 1453 486 1454 485 1455 486.5 1456 486 1457 485 1458 485 1459 486 1460 486 1461 485.5 1462 485 1463 485.5 1464 486 1465 485 1466 485.5 1467 484.5 1469 484.5 1470 485.5 1471 485 1472 486 1473 486 1474 485.5 1475 484.5 1476 484.5 1477 486 1478 485.5 1482 485.5 1483 486 1484 485.5 1485 485 1486 485.5 1487 484.5 1488 485.5 1489 486 1490 485 1491 484.5 1492 486 1493 486.5 1494 485.5 1496 485.5 1497 484.5 1498 485 1499 485 L1499 495 1498 495 1497 495.5 1496 494.5 1494 494.5 1493 493.5 1492 494 1491 495.5 1490 495 1489 494 1488 494.5 1487 495.5 1486 494.5 1485 495 1484 494.5 1483 494 1482 494.5 1478 494.5 1477 494 1476 495.5 1475 495.5 1474 494.5 1473 494 1472 494 1471 495 1470 494.5 1469 495.5 1467 495.5 1466 494.5 1465 495 1464 494 1463 494.5 1462 495 1461 494.5 1460 494 1459 494 1458 495 1457 495 1456 494 1455 493.5 1454 495 1453 494 1452 493.5 1451 495 1450 494 1449 495 1448 494.5 1447 494.5 1446 493.5 1445 493.5 1444 495.5 1443 494 1442 494.5 1441 494.5 1440 495.5 1439 495 1438 494.5 1437 494 1436 495.5 1435 495 1434 494.5 1433 495 1432 494 1431 494.5 1430 494 1429 495 1427 495 1426 494 1425 493.5 1424 495.5 1423 495 1422 494.5 1421 494 1420 494.5 1419 494.5 1418 495 1417 494.5 1416 495 1415 493.5 1414 493.5 1413 494.5 1412 494 1411 495 1410 494.5 1409 494 1408 493.5 1407 493.5 1406 495.5 1404 495.5 1403 494 1402 494 1401 495 1399 495 1398 494.5 1397 495 1396 494 1395 494.5 1394 495 1393 495 1392 495.5 1391 494 1390 494 1389 495 1388 495.5 1387 495.5 1386 494.5 1385 495 1384 494.5 1383 495 1382 494 1381 494.5 1380 495 1379 494.5 1378 494 1377 494.5 1376 493.5 1375 494 1374 494.5 1373 495 1372 494 1371 495 1370 495.5 1369 495.5 1368 494.5 1367 495 1366 495.5 1365 494.5 1364 494 1363 495.5 1362 494.5 1361 494.5 1360 495.5 1359 493.5 1358 495.5 1357 495.5 1356 493.5 1355 495 1354 495.5 1353 494.5 1352 495 1351 494 1350 493.5 1349 494 1348 493.5 1347 494 1346 495 1345 494 1344 494.5 1343 495 1342 494 1341 494.5 1340 495 1339 494.5 1338 494.5 1337 495.5 1336 493.5 1335 495 1334 494.5 1333 494 1332 494.5 1331 494 1330 495.5 1329 493.5 1328 495 1327 495 1326 493.5 1325 495 1324 495 1323 495.5 1322 494.5 1321 495.5 1320 494.5 1319 494.5 1318 495.5 1317 494 1316 494 1315 494.5 1314 494 1313 493.5 1312 494.5 1311 494 1310 495 1309 495 1308 493.5 1307 495.5 1306 495 1304 495 1303 495.5 1302 494.5 1300 494.5 1299 495 1298 494.5 1297 495 1296 495.5 1295 494 1294 495 1293 495 1292 494.5 1291 493.5 1290 494.5 1289 494.5 1288 493.5 1287 495 1286 494.5 1285 495 1283 495 1282 495.5 1281 495.5 1280 494.5 1279 495.5 1278 495 1277 495 1276 495.5 1275 494 1274 495 1273 495.5 1272 494.5 1271 495 1270 494.5 1269 495 1268 495.5 1267 495 1266 495 1265 495.5 1264 493.5 1263 494.5 1262 494 1261 494 1260 494.5 1259 495 1258 494.5 1257 494 1256 495.5 1255 495 1254 493.5 1253 495 1252 494.5 1250 494.5 1249 494 1248 495 1247 494.5 1246 495.5 1245 493.5 1244 494 1243 495.5 1241 495.5 1240 494 1238 494 1237 494.5 1235 494.5 1234 493.5 1233 494 1232 493.5 1231 494 1230 495 1229 494.5 1228 495 1227 494.5 1226 494 1225 495.5 1224 495.5 1223 495 1222 494 1221 493.5 1220 495 1219 494.5 1218 494 1217 495 1216 494.5 1215 495.5 1214 494 1213 494 1212 495 1211 494 1210 494 1209 495.5 1208 495.5 1207 494 1206 495.5 1205 494 1204 494 1203 495.5 1202 495 1201 495 1200 494 1199 495.5 1198 495 1197 495.5 1196 494.5 1195 495 1194 495 1193 494 1192 494 1191 494.5 1187 494.5 1186 494 1185 494 1184 494.5 1183 494 1182 495 1181 494 1180 495 1179 494.5 1178 494 1177 495 1176 494 1175 494 1174 493.5 1173 495 1172 494 1171 495.5 1170 495 1169 494 1168 494 1167 494.5 1166 495.5 1165 495.5 1164 494.5 1163 494 1162 494.5 1161 494 1160 495.5 1159 495.5 1158 494.5 1157 494.5 1156 493.5 1155 495 1154 494.5 1153 494.5 1152 495 1151 494.5 1150 494.5 1149 495.5 1148 493.5 1147 495 1146 494.5 1145 494.5 1144 494 1143 495 1142 494.5 1141 495.5 1140 495.5 1139 494 1138 495.5 1137 495.5 1136 494.5 1135 494 1134 494.5 1133 495.5 1132 494.5 1131 495 1130 495 1129 494 1128 494.5 1127 494 1126 493.5 1125 495.5 1124 494.5 1123 495.5 1122 495 1121 495.5 1120 495 1119 494.5 1118 494 1117 494 1116 495 1115 494.5 1114 494 1113 495 1112 493.5 1111 495 1110 493.5 1109 494.5 1108 495 1107 494.5 1106 494.5 1105 493.5 1104 494.5 1103 495.5 1102 495.5 1101 494 1100 495 1099 494.5 1098 495.5 1096 495.5 1095 494 1094 495 1093 495 1092 495.5 1091 495 1090 494 1089 495 1088 494.5 1087 495.5 1086 495 1085 495.5 1084 494.5 1083 494.5 1082 495.5 1081 495 1080 494.5 1079 494 1078 495 1077 495.5 1076 493.5 1075 495.5 1074 495 1073 494.5 1072 495 1071 495 1070 494.5 1069 495 1068 494.5 1067 494 1066 494 1065 495 1064 494.5 1063 493.5 1062 494 1061 494.5 1060 494 1059 495 1058 495.5 1057 495 1055 495 1054 494.5 1053 495 1052 493.5 1051 494 1050 494 1049 495.5 1048 493.5 1047 494.5 1046 494 1045 493.5 1044 495 1043 494 1042 494.5 1041 495 1040 493.5 1039 495.5 1038 493.5 1037 493.5 1036 494.5 1035 495.5 1034 495.5 1033 494 1032 494.5 1031 495 1030 494.5 1029 494 1028 494 1027 494.5 1026 494 1025 494 1024 495.5 1023 495 1022 495.5 1021 495.5 1020 494.5 1019 494 1018 494 1017 495 1016 494.5 1015 495.5 1014 495.5 1013 495 1012 494.5 1011 494 1010 495 1009 494 1008 495.5 1007 494.5 1006 495 1005 495.5 1004 494 1003 494 1002 495 1001 494 1000 493.5 999 494 998 495.5 997 495 996 494.5 995 495 994 494 993 494.5 992 495 991 493.5 990 495 989 493.5 988 495.5 987 494.5 986 495 985 495 984 494.5 983 495 982 495.5 981 495.5 980 495 979 493.5 978 495 977 495 976 494.5 975 495 974 495 973 495.5 972 495 971 494.5 970 495.5 969 495.5 968 495 967 494.5 966 495.5 965 495 963 495 962 495.5 961 495 960 494.5 959 493.5 958 495.5 957 494 956 495 955 494.5 954 495 953 493.5 952 495.5 951 495 950 495.5 949 493.5 948 493.5 947 494 946 495 944 495 943 495.5 942 495.5 941 494.5 940 494 939 494.5 938 494.5 937 494 936 493.5 935 494.5 934 494 933 493.5 932 494 931 495.5 930 494 929 495 928 495.5 927 494.5 926 494 925 493.5 924 495 923 494 922 494 921 495 920 495.5 919 494 918 495 917 494 916 495.5 915 493.5 914 494 913 494.5 912 495 911 495.5 910 495.5 909 494 908 495.5 907 495 906 494 905 494 904 495.5 903 495.5 902 494 901 494 900 495.5 899 495 898 494.5 897 495.5 896 494.5 895 494.5 894 495 893 494 892 495 891 494 890 493.5 889 494 888 494 887 495 886 494 885 494 884 495.5 883 494 882 495 881 495.5 880 494.5 879 494 878 495.5 877 494 876 495 875 495.5 874 494 873 494 872 494.5 871 494 870 495 869 494 868 495 867 494 866 494.5 865 494.5 864 494 863 495 862 493.5Z" fill="#1f4a30"/><path d="M0 486 1 486 2 485 3 486 5 486 6 486.5 7 486 8 486 9 485.5 10 486.5 12 486.5 13 485.5 14 485.5 15 487 16 485 17 485 18 485.5 19 486 20 486.5 21 487 22 486 23 487 24 486.5 25 486.5 26 487 27 486 28 486 29 485.5 30 486 31 485.5 32 486 33 485.5 34 486 35 486.5 36 485 37 485 38 485.5 39 485.5 40 486.5 42 486.5 43 487 44 485.5 45 486 46 485.5 47 486 48 485 49 485.5 50 487 51 486.5 52 485.5 53 486 54 485 55 486 56 487 57 486 58 485.5 59 486.5 61 486.5 62 485 63 485.5 64 486.5 66 486.5 L66 493.5 64 493.5 63 494.5 62 495 61 493.5 59 493.5 58 494.5 57 494 56 493 55 494 54 495 53 494 52 494.5 51 493.5 50 493 49 494.5 48 495 47 494 46 494.5 45 494 44 494.5 43 493 42 493.5 40 493.5 39 494.5 38 494.5 37 495 36 495 35 493.5 34 494 33 494.5 32 494 31 494.5 30 494 29 494.5 28 494 27 494 26 493 25 493.5 24 493.5 23 493 22 494 21 493 20 493.5 19 494 18 494.5 17 495 16 495 15 493 14 494.5 13 494.5 12 493.5 10 493.5 9 494.5 8 494 7 494 6 493.5 5 494 3 494 2 495 1 494 0 494Z M862 487 863 485.5 864 486.5 865 486 866 486 867 486.5 868 485.5 869 486.5 870 485.5 871 486.5 872 486 873 486.5 874 486.5 875 485 876 485.5 877 486.5 878 485.5 879 486.5 880 486 881 485.5 882 485.5 883 486.5 884 485 885 486.5 886 486.5 887 485.5 888 486.5 889 486.5 890 487 891 486.5 892 486 893 486.5 894 486 896 486 897 485 898 486 899 486 900 485.5 901 486.5 902 486.5 903 485.5 904 485.5 905 486.5 906 486.5 907 485.5 908 485 909 486.5 910 485 911 485.5 912 486 913 486 914 486.5 915 487 916 485 917 486.5 918 485.5 919 486.5 920 485.5 921 486 922 486.5 923 486.5 924 485.5 925 487 926 486.5 927 486 928 485.5 929 486 930 486.5 931 485 932 486.5 933 487 934 486.5 935 486 936 487 937 486.5 938 486 939 486 940 486.5 941 486 942 485.5 943 485 944 485.5 945 485.5 946 486 947 486.5 948 487 949 487 950 485.5 951 485.5 952 485 953 487 954 486 955 486 956 485.5 957 486.5 958 485 959 487 960 486 961 485.5 966 485.5 967 486.5 968 485.5 970 485.5 971 486 972 485.5 973 485.5 974 486 978 486 979 487 980 485.5 981 485 982 485.5 983 485.5 984 486 985 485.5 986 486 987 486 988 485.5 989 486.5 990 485.5 991 487 992 486 993 486 994 486.5 995 485.5 996 486 997 486 998 485 999 486.5 1000 487 1001 486.5 1002 485.5 1003 486.5 1004 486.5 1005 485.5 1006 485.5 1007 486 1008 485.5 1009 486.5 1010 485.5 1011 486.5 1012 486 1013 485.5 1015 485.5 1016 486 1017 486 1018 486.5 1019 486.5 1020 486 1021 485.5 1023 485.5 1024 485 1025 486.5 1026 486.5 1027 486 1028 486.5 1029 486.5 1030 486 1032 486 1033 486.5 1034 485.5 1035 485 1036 486 1037 487 1038 487 1039 485.5 1040 487 1041 485.5 1042 486 1043 486.5 1044 485.5 1045 487 1046 486.5 1047 486 1048 487 1049 485.5 1050 486.5 1051 486.5 1052 487 1053 486 1055 486 1056 485.5 1057 485.5 1058 485 1059 485.5 1060 486.5 1061 486 1062 486.5 1063 487 1064 486 1065 485.5 1066 486.5 1068 486.5 1069 485.5 1070 486 1071 486 1072 485.5 1073 486 1074 485.5 1075 485.5 1076 486.5 1077 485 1078 485.5 1079 486.5 1080 486 1081 486 1082 485.5 1083 486 1084 486 1085 485.5 1086 485.5 1087 485 1088 486 1089 485.5 1090 486.5 1091 485.5 1094 485.5 1095 486.5 1096 485.5 1097 485 1098 485 1099 486 1100 485.5 1101 486.5 1102 485.5 1103 485.5 1104 486.5 1105 487 1106 486 1107 486 1108 485.5 1109 486 1110 487 1111 485.5 1112 487 1113 485.5 1114 486.5 1115 486.5 1116 485.5 1117 486.5 1118 486.5 1119 486 1120 485.5 1122 485.5 1123 485 1124 486 1125 485 1126 486.5 1127 486.5 1128 486 1129 486.5 1130 485.5 1131 486 1132 486 1133 485.5 1134 486 1135 486.5 1136 486 1137 485.5 1138 485.5 1139 486.5 1140 485.5 1141 485 1142 486 1143 486 1144 486.5 1145 486 1147 486 1148 487 1149 485 1150 486 1151 486 1152 485.5 1153 486 1154 486 1155 485.5 1156 487 1157 486 1158 486 1159 485 1160 485 1161 486.5 1162 486 1163 486.5 1164 486 1165 485.5 1166 485.5 1167 486 1168 486.5 1169 486.5 1170 486 1171 485 1172 486.5 1173 485.5 1174 487 1175 486.5 1176 486.5 1177 485.5 1178 486.5 1179 486.5 1180 486 1181 486.5 1182 485.5 1183 486.5 1184 486 1185 486.5 1186 486.5 1187 486 1191 486 1192 486.5 1193 486.5 1194 486 1196 486 1197 485.5 1198 486 1199 485.5 1200 486.5 1201 485.5 1203 485.5 1204 486.5 1205 486.5 1206 485 1207 486.5 1208 485 1209 485.5 1210 486.5 1211 486.5 1212 485.5 1213 486.5 1214 486.5 1215 485.5 1216 486 1217 485.5 1218 486.5 1219 486 1220 485.5 1221 487 1222 486.5 1223 485.5 1224 485.5 1225 485 1226 486.5 1227 486 1228 485.5 1229 486 1230 485.5 1231 486.5 1232 487 1233 486.5 1234 487 1235 486 1237 486 1238 486.5 1240 486.5 1241 485.5 1242 485 1243 485 1244 486.5 1245 487 1246 485 1247 486 1248 485.5 1249 486.5 1250 486 1253 486 1254 487 1255 485.5 1256 485.5 1257 486.5 1258 486 1259 485.5 1260 486 1261 486.5 1262 486.5 1263 486 1264 487 1265 485.5 1268 485.5 1269 486 1272 486 1273 485 1274 485.5 1275 486.5 1276 485.5 1279 485.5 1280 486 1281 485.5 1285 485.5 1286 486 1287 485.5 1288 487 1289 486.5 1290 486 1291 487 1292 486.5 1293 486 1294 486 1295 486.5 1296 485 1297 485.5 1298 486.5 1299 485.5 1300 486 1302 486 1303 485 1304 485.5 1306 485.5 1307 485 1308 487 1309 486 1310 485.5 1311 486.5 1312 486 1313 487 1314 486.5 1315 486 1316 486.5 1317 486.5 1318 485.5 1319 486 1320 486 1321 485 1322 486 1323 485 1324 486 1325 485.5 1326 487 1327 486 1328 485.5 1329 487 1330 485 1331 486.5 1332 486 1333 486.5 1334 486 1335 486 1336 487 1337 485 1338 486 1341 486 1342 486.5 1343 485.5 1344 486 1345 486.5 1346 485.5 1347 486.5 1348 487 1349 486.5 1350 487 1351 486.5 1352 485.5 1353 486 1354 485.5 1355 485.5 1356 487 1357 485 1358 485 1359 487 1360 485.5 1361 486 1362 486 1363 485 1364 486.5 1365 486 1366 485 1367 485.5 1368 486 1369 485 1370 485.5 1371 486 1372 486.5 1373 486 1374 486 1375 486.5 1376 487 1377 486 1378 486.5 1379 486 1380 485.5 1381 486 1382 486.5 1383 486 1384 486 1385 485.5 1386 486 1387 485 1388 485 1389 485.5 1390 486.5 1391 486.5 1392 485.5 1393 485.5 1394 486 1395 486.5 1396 486.5 1397 485.5 1398 486 1400 486 1401 485.5 1402 486.5 1403 486.5 1404 485 1405 485.5 1406 485.5 1407 487 1408 487 1409 486.5 1410 486 1411 486 1412 486.5 1413 486 1414 487 1415 486.5 1416 485.5 1417 486 1420 486 1421 486.5 1422 486.5 1423 485.5 1424 485.5 1425 487 1426 486.5 1427 485.5 1428 486 1429 485.5 1430 486.5 1431 486 1432 486.5 1433 485.5 1434 486 1435 485.5 1436 485 1437 486.5 1438 486 1439 485.5 1440 485 1441 486 1442 486 1443 486.5 1444 485.5 1445 487 1446 487 1447 486 1448 486 1449 485.5 1450 486.5 1451 485.5 1452 487 1453 486.5 1454 485.5 1455 487 1456 486.5 1457 485.5 1458 485.5 1459 486.5 1461 486.5 1462 485.5 1463 486 1464 486.5 1465 485.5 1466 486 1467 485 1468 485 1469 485.5 1470 486 1471 485.5 1472 486.5 1473 486.5 1474 486 1475 485 1476 485.5 1477 486.5 1478 486 1482 486 1483 486.5 1484 486 1485 485.5 1486 486 1487 485.5 1488 486 1489 486.5 1490 485.5 1491 485.5 1492 486.5 1493 487 1494 486 1496 486 1497 485 1498 485.5 1499 485.5 L1499 494.5 1498 494.5 1497 495 1496 494 1494 494 1493 493 1492 493.5 1491 494.5 1490 494.5 1489 493.5 1488 494 1487 494.5 1486 494 1485 494.5 1484 494 1483 493.5 1482 494 1478 494 1477 493.5 1476 494.5 1475 495 1474 494 1473 493.5 1472 493.5 1471 494.5 1470 494 1469 494.5 1468 495 1467 495 1466 494 1465 494.5 1464 493.5 1463 494 1462 494.5 1461 493.5 1459 493.5 1458 494.5 1457 494.5 1456 493.5 1455 493 1454 494.5 1453 493.5 1452 493 1451 494.5 1450 493.5 1449 494.5 1448 494 1447 494 1446 493 1445 493 1444 494.5 1443 493.5 1442 494 1441 494 1440 495 1439 494.5 1438 494 1437 493.5 1436 495 1435 494.5 1434 494 1433 494.5 1432 493.5 1431 494 1430 493.5 1429 494.5 1428 494 1427 494.5 1426 493.5 1425 493 1424 494.5 1423 494.5 1422 493.5 1421 493.5 1420 494 1417 494 1416 494.5 1415 493.5 1414 493 1413 494 1412 493.5 1411 494 1410 494 1409 493.5 1408 493 1407 493 1406 494.5 1405 494.5 1404 495 1403 493.5 1402 493.5 1401 494.5 1400 494 1398 494 1397 494.5 1396 493.5 1395 493.5 1394 494 1393 494.5 1392 494.5 1391 493.5 1390 493.5 1389 494.5 1388 495 1387 495 1386 494 1385 494.5 1384 494 1383 494 1382 493.5 1381 494 1380 494.5 1379 494 1378 493.5 1377 494 1376 493 1375 493.5 1374 494 1373 494 1372 493.5 1371 494 1370 494.5 1369 495 1368 494 1367 494.5 1366 495 1365 494 1364 493.5 1363 495 1362 494 1361 494 1360 494.5 1359 493 1358 495 1357 495 1356 493 1355 494.5 1354 494.5 1353 494 1352 494.5 1351 493.5 1350 493 1349 493.5 1348 493 1347 493.5 1346 494.5 1345 493.5 1344 494 1343 494.5 1342 493.5 1341 494 1338 494 1337 495 1336 493 1335 494 1334 494 1333 493.5 1332 494 1331 493.5 1330 495 1329 493 1328 494.5 1327 494 1326 493 1325 494.5 1324 494 1323 495 1322 494 1321 495 1320 494 1319 494 1318 494.5 1317 493.5 1316 493.5 1315 494 1314 493.5 1313 493 1312 494 1311 493.5 1310 494.5 1309 494 1308 493 1307 495 1306 494.5 1304 494.5 1303 495 1302 494 1300 494 1299 494.5 1298 493.5 1297 494.5 1296 495 1295 493.5 1294 494 1293 494 1292 493.5 1291 493 1290 494 1289 493.5 1288 493 1287 494.5 1286 494 1285 494.5 1281 494.5 1280 494 1279 494.5 1276 494.5 1275 493.5 1274 494.5 1273 495 1272 494 1269 494 1268 494.5 1265 494.5 1264 493 1263 494 1262 493.5 1261 493.5 1260 494 1259 494.5 1258 494 1257 493.5 1256 494.5 1255 494.5 1254 493 1253 494 1250 494 1249 493.5 1248 494.5 1247 494 1246 495 1245 493 1244 493.5 1243 495 1242 495 1241 494.5 1240 493.5 1238 493.5 1237 494 1235 494 1234 493 1233 493.5 1232 493 1231 493.5 1230 494.5 1229 494 1228 494.5 1227 494 1226 493.5 1225 495 1224 494.5 1223 494.5 1222 493.5 1221 493 1220 494.5 1219 494 1218 493.5 1217 494.5 1216 494 1215 494.5 1214 493.5 1213 493.5 1212 494.5 1211 493.5 1210 493.5 1209 494.5 1208 495 1207 493.5 1206 495 1205 493.5 1204 493.5 1203 494.5 1201 494.5 1200 493.5 1199 494.5 1198 494 1197 494.5 1196 494 1194 494 1193 493.5 1192 493.5 1191 494 1187 494 1186 493.5 1185 493.5 1184 494 1183 493.5 1182 494.5 1181 493.5 1180 494 1179 493.5 1178 493.5 1177 494.5 1176 493.5 1175 493.5 1174 493 1173 494.5 1172 493.5 1171 495 1170 494 1169 493.5 1168 493.5 1167 494 1166 494.5 1165 494.5 1164 494 1163 493.5 1162 494 1161 493.5 1160 495 1159 495 1158 494 1157 494 1156 493 1155 494.5 1154 494 1153 494 1152 494.5 1151 494 1150 494 1149 495 1148 493 1147 494 1145 494 1144 493.5 1143 494 1142 494 1141 495 1140 494.5 1139 493.5 1138 494.5 1137 494.5 1136 494 1135 493.5 1134 494 1133 494.5 1132 494 1131 494 1130 494.5 1129 493.5 1128 494 1127 493.5 1126 493.5 1125 495 1124 494 1123 495 1122 494.5 1120 494.5 1119 494 1118 493.5 1117 493.5 1116 494.5 1115 493.5 1114 493.5 1113 494.5 1112 493 1111 494.5 1110 493 1109 494 1108 494.5 1107 494 1106 494 1105 493 1104 493.5 1103 494.5 1102 494.5 1101 493.5 1100 494.5 1099 494 1098 495 1097 495 1096 494.5 1095 493.5 1094 494.5 1091 494.5 1090 493.5 1089 494.5 1088 494 1087 495 1086 494.5 1085 494.5 1084 494 1083 494 1082 494.5 1081 494 1080 494 1079 493.5 1078 494.5 1077 495 1076 493.5 1075 494.5 1074 494.5 1073 494 1072 494.5 1071 494 1070 494 1069 494.5 1068 493.5 1066 493.5 1065 494.5 1064 494 1063 493 1062 493.5 1061 494 1060 493.5 1059 494.5 1058 495 1057 494.5 1056 494.5 1055 494 1053 494 1052 493 1051 493.5 1050 493.5 1049 494.5 1048 493 1047 494 1046 493.5 1045 493 1044 494.5 1043 493.5 1042 494 1041 494.5 1040 493 1039 494.5 1038 493 1037 493 1036 494 1035 495 1034 494.5 1033 493.5 1032 494 1030 494 1029 493.5 1028 493.5 1027 494 1026 493.5 1025 493.5 1024 495 1023 494.5 1021 494.5 1020 494 1019 493.5 1018 493.5 1017 494 1016 494 1015 494.5 1013 494.5 1012 494 1011 493.5 1010 494.5 1009 493.5 1008 494.5 1007 494 1006 494.5 1005 494.5 1004 493.5 1003 493.5 1002 494.5 1001 493.5 1000 493 999 493.5 998 495 997 494 996 494 995 494.5 994 493.5 993 494 992 494 991 493 990 494.5 989 493.5 988 494.5 987 494 986 494 985 494.5 984 494 983 494.5 982 494.5 981 495 980 494.5 979 493 978 494 974 494 973 494.5 972 494.5 971 494 970 494.5 968 494.5 967 493.5 966 494.5 961 494.5 960 494 959 493 958 495 957 493.5 956 494.5 955 494 954 494 953 493 952 495 951 494.5 950 494.5 949 493 948 493 947 493.5 946 494 945 494.5 944 494.5 943 495 942 494.5 941 494 940 493.5 939 494 938 494 937 493.5 936 493 935 494 934 493.5 933 493 932 493.5 931 495 930 493.5 929 494 928 494.5 927 494 926 493.5 925 493 924 494.5 923 493.5 922 493.5 921 494 920 494.5 919 493.5 918 494.5 917 493.5 916 495 915 493 914 493.5 913 494 912 494 911 494.5 910 495 909 493.5 908 495 907 494.5 906 493.5 905 493.5 904 494.5 903 494.5 902 493.5 901 493.5 900 494.5 899 494 898 494 897 495 896 494 894 494 893 493.5 892 494 891 493.5 890 493 889 493.5 888 493.5 887 494.5 886 493.5 885 493.5 884 495 883 493.5 882 494.5 881 494.5 880 494 879 493.5 878 494.5 877 493.5 876 494.5 875 495 874 493.5 873 493.5 872 494 871 493.5 870 494.5 869 493.5 868 494.5 867 493.5 866 494 865 494 864 493.5 863 494.5 862 493Z" fill="#e4f2e8"/><path d="M0 554H1500" stroke="#1d4630" stroke-width="0.9"/><path d="M0 553.5 3 553.5 4 552 5 553.5 8 553.5 9 553 10 553.5 19 553.5 20 552.5 21 553.5 27 553.5 28 553 29 553 30 553.5 33 553.5 34 552 35 553.5 42 553.5 43 552.5 44 553.5 53 553.5 54 552.5 55 553.5 58 553.5 59 552 60 553.5 66 553.5 L66 554.5 60 554.5 59 556 58 554.5 55 554.5 54 555.5 53 554.5 44 554.5 43 555.5 42 554.5 35 554.5 34 556 33 554.5 30 554.5 29 555 28 555 27 554.5 21 554.5 20 555.5 19 554.5 10 554.5 9 555 8 554.5 5 554.5 4 556 3 554.5 0 554.5Z M862 553.5 864 553.5 865 552.5 866 553.5 869 553.5 870 552.5 871 553.5 876 553.5 877 552 878 553.5 886 553.5 887 552.5 888 553.5 895 553.5 896 553 897 553 898 553.5 905 553.5 906 552.5 907 553.5 912 553.5 913 553 914 553 915 553.5 923 553.5 924 552.5 925 553.5 931 553.5 932 552 933 553.5 939 553.5 940 553 941 553 942 553.5 946 553.5 947 552 948 553.5 957 553.5 958 553 959 553.5 967 553.5 968 553 969 553 970 553.5 972 553.5 973 552.5 974 553.5 976 553.5 977 553 978 553 979 553.5 983 553.5 984 552 985 553.5 987 553.5 988 553 989 553 990 553.5 992 553.5 993 552.5 994 553.5 996 553.5 997 552.5 998 553.5 1007 553.5 1008 553 1009 553.5 1017 553.5 1018 552 1019 553.5 1026 553.5 1027 552.5 1028 553.5 1035 553.5 1036 552 1037 553.5 1046 553.5 1047 552.5 1048 553.5 1054 553.5 1055 553 1056 553 1057 553.5 1061 553.5 1062 552.5 1063 553.5 1069 553.5 1070 552 1071 553.5 1079 553.5 1080 553 1081 553.5 1089 553.5 1090 553 1091 553.5 1097 553.5 1098 552 1099 553.5 1101 553.5 1102 552.5 1103 553.5 1107 553.5 1108 552.5 1109 553.5 1115 553.5 1116 553 1117 553 1118 553.5 1126 553.5 1127 552.5 1128 553.5 1131 553.5 1132 552 1133 553.5 1135 553.5 1136 553 1137 553 1138 553.5 1145 553.5 1146 552.5 1147 553.5 1153 553.5 1154 552.5 1155 553.5 1160 553.5 1161 552.5 1162 553.5 1170 553.5 1171 552.5 1172 553.5 1174 553.5 1175 552.5 1176 553.5 1184 553.5 1185 552.5 1186 553.5 1193 553.5 1194 552.5 1195 553.5 1204 553.5 1205 552 1206 553.5 1213 553.5 1214 552.5 1215 553.5 1218 553.5 1219 552.5 1220 553.5 1226 553.5 1227 552.5 1228 553.5 1231 553.5 1232 553 1233 553 1234 553.5 1239 553.5 1240 552.5 1241 553.5 1245 553.5 1246 552.5 1247 553.5 1255 553.5 1256 553 1257 553 1258 553.5 1263 553.5 1264 552.5 1265 553.5 1268 553.5 1269 552 1270 553.5 1276 553.5 1277 552.5 1278 553.5 1281 553.5 1282 552.5 1283 553.5 1288 553.5 1289 552.5 1290 553.5 1293 553.5 1294 552.5 1295 553.5 1300 553.5 1301 552 1302 553.5 1305 553.5 1306 552.5 1307 553.5 1310 553.5 1311 552.5 1312 553.5 1318 553.5 1319 553 1320 553 1321 553.5 1325 553.5 1326 552.5 1327 553.5 1330 553.5 1331 553 1332 553.5 1335 553.5 1336 553 1337 553 1338 553.5 1346 553.5 1347 552.5 1348 553.5 1356 553.5 1357 552 1358 553.5 1365 553.5 1366 552.5 1367 553.5 1372 553.5 1373 552.5 1374 553.5 1381 553.5 1382 553 1383 553.5 1389 553.5 1390 552.5 1391 553.5 1395 553.5 1396 552.5 1397 553.5 1405 553.5 1406 553 1407 553 1408 553.5 1416 553.5 1417 552 1418 553.5 1420 553.5 1421 552 1422 553.5 1427 553.5 1428 552 1429 553.5 1437 553.5 1438 552.5 1439 553.5 1444 553.5 1445 552.5 1446 553.5 1450 553.5 1451 552.5 1452 553.5 1457 553.5 1458 553 1459 553.5 1467 553.5 1468 552.5 1469 553.5 1471 553.5 1472 552.5 1473 553.5 1476 553.5 1477 552.5 1478 553.5 1482 553.5 1483 553 1484 553 1485 553.5 1491 553.5 1492 552.5 1493 553.5 1499 553.5 L1499 554.5 1493 554.5 1492 555.5 1491 554.5 1485 554.5 1484 555 1483 555 1482 554.5 1478 554.5 1477 555.5 1476 554.5 1473 554.5 1472 555.5 1471 554.5 1469 554.5 1468 555.5 1467 554.5 1459 554.5 1458 555 1457 554.5 1452 554.5 1451 555.5 1450 554.5 1446 554.5 1445 555.5 1444 554.5 1439 554.5 1438 555.5 1437 554.5 1429 554.5 1428 556 1427 554.5 1422 554.5 1421 556 1420 554.5 1418 554.5 1417 556 1416 554.5 1408 554.5 1407 555 1406 555 1405 554.5 1397 554.5 1396 555.5 1395 554.5 1391 554.5 1390 555.5 1389 554.5 1383 554.5 1382 555 1381 554.5 1374 554.5 1373 555.5 1372 554.5 1367 554.5 1366 555.5 1365 554.5 1358 554.5 1357 556 1356 554.5 1348 554.5 1347 555.5 1346 554.5 1338 554.5 1337 555 1336 555 1335 554.5 1332 554.5 1331 555 1330 554.5 1327 554.5 1326 555.5 1325 554.5 1321 554.5 1320 555 1319 555 1318 554.5 1312 554.5 1311 555.5 1310 554.5 1307 554.5 1306 555.5 1305 554.5 1302 554.5 1301 556 1300 554.5 1295 554.5 1294 555.5 1293 554.5 1290 554.5 1289 555.5 1288 554.5 1283 554.5 1282 555.5 1281 554.5 1278 554.5 1277 555.5 1276 554.5 1270 554.5 1269 556 1268 554.5 1265 554.5 1264 555.5 1263 554.5 1258 554.5 1257 555 1256 555 1255 554.5 1247 554.5 1246 555.5 1245 554.5 1241 554.5 1240 555.5 1239 554.5 1234 554.5 1233 555 1232 555 1231 554.5 1228 554.5 1227 555.5 1226 554.5 1220 554.5 1219 555.5 1218 554.5 1215 554.5 1214 555.5 1213 554.5 1206 554.5 1205 556 1204 554.5 1195 554.5 1194 555.5 1193 554.5 1186 554.5 1185 555.5 1184 554.5 1176 554.5 1175 555.5 1174 554.5 1172 554.5 1171 555.5 1170 554.5 1162 554.5 1161 555.5 1160 554.5 1155 554.5 1154 555.5 1153 554.5 1147 554.5 1146 555.5 1145 554.5 1138 554.5 1137 555 1136 555 1135 554.5 1133 554.5 1132 556 1131 554.5 1128 554.5 1127 555.5 1126 554.5 1118 554.5 1117 555 1116 555 1115 554.5 1109 554.5 1108 555.5 1107 554.5 1103 554.5 1102 555.5 1101 554.5 1099 554.5 1098 556 1097 554.5 1091 554.5 1090 555 1089 554.5 1081 554.5 1080 555 1079 554.5 1071 554.5 1070 556 1069 554.5 1063 554.5 1062 555.5 1061 554.5 1057 554.5 1056 555 1055 555 1054 554.5 1048 554.5 1047 555.5 1046 554.5 1037 554.5 1036 556 1035 554.5 1028 554.5 1027 555.5 1026 554.5 1019 554.5 1018 556 1017 554.5 1009 554.5 1008 555 1007 554.5 998 554.5 997 555.5 996 554.5 994 554.5 993 555.5 992 554.5 990 554.5 989 555 988 555 987 554.5 985 554.5 984 556 983 554.5 979 554.5 978 555 977 555 976 554.5 974 554.5 973 555.5 972 554.5 970 554.5 969 555 968 555 967 554.5 959 554.5 958 555 957 554.5 948 554.5 947 556 946 554.5 942 554.5 941 555 940 555 939 554.5 933 554.5 932 556 931 554.5 925 554.5 924 555.5 923 554.5 915 554.5 914 555 913 555 912 554.5 907 554.5 906 555.5 905 554.5 898 554.5 897 555 896 555 895 554.5 888 554.5 887 555.5 886 554.5 878 554.5 877 556 876 554.5 871 554.5 870 555.5 869 554.5 866 554.5 865 555.5 864 554.5 862 554.5Z" fill="#1f4a30"/><path d="M0 554 2 554 3 553.5 4 552.5 5 553.5 6 554 8 554 9 553 10 553 11 554 18 554 19 553.5 20 553 21 553.5 22 554 27 554 28 553.5 29 553.5 30 554 32 554 33 553.5 34 553 35 553.5 36 554 41 554 42 553.5 43 553 44 553.5 45 554 52 554 53 553.5 54 553.5 55 554 57 554 58 553.5 59 553 60 553.5 61 554 66 554 L66 554 61 554 60 554.5 59 555 58 554.5 57 554 55 554 54 554.5 53 554.5 52 554 45 554 44 554.5 43 555 42 554.5 41 554 36 554 35 554.5 34 555 33 554.5 32 554 30 554 29 554.5 28 554.5 27 554 22 554 21 554.5 20 555 19 554.5 18 554 11 554 10 555 9 555 8 554 6 554 5 554.5 4 555.5 3 554.5 2 554 0 554Z M862 554 863 554 864 553.5 865 553 866 554 868 554 869 553.5 870 553 871 553.5 872 554 875 554 876 553.5 877 552.5 878 553.5 879 554 885 554 886 553.5 887 552.5 888 553.5 889 554 895 554 896 553.5 897 553.5 898 554 904 554 905 553.5 906 553 907 553.5 908 554 912 554 913 553.5 914 553.5 915 554 922 554 923 553.5 924 553 925 554 930 554 931 553.5 932 552.5 933 553.5 934 554 939 554 940 553 941 553 942 554 945 554 946 553.5 947 552.5 948 553.5 949 554 956 554 957 553 958 553 959 554 967 554 968 553 969 553 970 554 971 554 972 553.5 973 553 974 553.5 975 554 976 554 977 553 978 553 979 554 982 554 983 553.5 984 552.5 985 553.5 986 554 987 554 988 553 989 553 990 554 991 554 992 553.5 993 553.5 994 554 995 554 996 553.5 997 553.5 998 554 1006 554 1007 553 1008 553 1009 554 1016 554 1017 553.5 1018 553 1019 553.5 1020 554 1025 554 1026 553.5 1027 552.5 1028 553.5 1029 554 1034 554 1035 553.5 1036 553 1037 553.5 1038 554 1045 554 1046 553.5 1047 553 1048 553.5 1049 554 1054 554 1055 553.5 1056 553.5 1057 554 1060 554 1061 553.5 1062 553 1063 553 1064 554 1068 554 1069 553.5 1070 553 1071 553.5 1072 554 1079 554 1080 553 1081 553.5 1082 554 1089 554 1090 553.5 1091 553.5 1092 554 1096 554 1097 553.5 1098 552.5 1099 553.5 1100 554 1101 553.5 1102 553 1103 553.5 1104 554 1106 554 1107 553.5 1108 553 1109 553.5 1110 554 1115 554 1116 553.5 1117 553.5 1118 554 1125 554 1126 553.5 1127 553 1128 553.5 1129 554 1130 554 1131 553.5 1132 553 1133 553.5 1134 554 1135 554 1136 553.5 1137 553.5 1138 554 1144 554 1145 553.5 1146 553 1147 553.5 1148 554 1152 554 1153 553 1154 553 1155 554 1159 554 1160 553.5 1161 552.5 1162 553.5 1163 554 1169 554 1170 553.5 1171 553.5 1172 554 1173 554 1174 553.5 1175 552.5 1176 553.5 1177 554 1183 554 1184 553.5 1185 552.5 1186 553 1187 554 1192 554 1193 553.5 1194 553 1195 553.5 1196 554 1203 554 1204 553.5 1205 552.5 1206 553.5 1207 554 1212 554 1213 553.5 1214 553 1215 553 1216 554 1217 554 1218 553 1219 553 1220 554 1225 554 1226 553.5 1227 553.5 1228 554 1231 554 1232 553 1233 553 1234 554 1238 554 1239 553.5 1240 553 1241 553.5 1242 554 1244 554 1245 553.5 1246 553 1247 553.5 1248 554 1255 554 1256 553 1257 553 1258 554 1262 554 1263 553.5 1264 553 1265 553 1266 554 1267 554 1268 553.5 1269 553 1270 553.5 1271 554 1275 554 1276 553.5 1277 552.5 1278 553.5 1279 554 1280 554 1281 553.5 1282 553.5 1283 554 1287 554 1288 553.5 1289 553 1290 553.5 1291 554 1292 554 1293 553.5 1294 553 1295 553.5 1296 554 1299 554 1300 553.5 1301 552.5 1302 553.5 1303 554 1304 554 1305 553.5 1306 553 1307 553 1308 554 1309 554 1310 553.5 1311 553 1312 553.5 1313 554 1318 554 1319 553.5 1320 553.5 1321 554 1324 554 1325 553.5 1326 553 1327 554 1330 554 1331 553 1332 553 1333 554 1335 554 1336 553 1337 553 1338 554 1345 554 1346 553.5 1347 553 1348 553.5 1349 554 1355 554 1356 553.5 1357 553 1358 553.5 1359 554 1365 554 1366 553 1367 553.5 1368 554 1371 554 1372 553 1373 552.5 1374 553.5 1375 554 1380 554 1381 553.5 1382 553 1383 554 1388 554 1389 553.5 1390 553 1391 554 1394 554 1395 553 1396 553 1397 554 1405 554 1406 553.5 1407 553.5 1408 554 1415 554 1416 553.5 1417 552.5 1418 553.5 1419 554 1420 553.5 1421 553 1422 553.5 1423 554 1426 554 1427 553.5 1428 552.5 1429 553.5 1430 554 1436 554 1437 553.5 1438 553 1439 553.5 1440 554 1443 554 1444 553.5 1445 552.5 1446 553 1447 554 1449 554 1450 553.5 1451 553.5 1452 554 1456 554 1457 553 1458 553 1459 554 1466 554 1467 553 1468 553 1469 553.5 1470 554 1471 553.5 1472 553 1473 554 1475 554 1476 553.5 1477 553 1478 554 1482 554 1483 553 1484 553 1485 554 1490 554 1491 553.5 1492 553 1493 553.5 1494 554 1499 554 L1499 554 1494 554 1493 554.5 1492 555 1491 554.5 1490 554 1485 554 1484 555 1483 555 1482 554 1478 554 1477 555 1476 554.5 1475 554 1473 554 1472 555 1471 554.5 1470 554 1469 554.5 1468 555 1467 555 1466 554 1459 554 1458 555 1457 555 1456 554 1452 554 1451 554.5 1450 554.5 1449 554 1447 554 1446 555 1445 555.5 1444 554.5 1443 554 1440 554 1439 554.5 1438 555 1437 554.5 1436 554 1430 554 1429 554.5 1428 555.5 1427 554.5 1426 554 1423 554 1422 554.5 1421 555 1420 554.5 1419 554 1418 554.5 1417 555.5 1416 554.5 1415 554 1408 554 1407 554.5 1406 554.5 1405 554 1397 554 1396 555 1395 555 1394 554 1391 554 1390 555 1389 554.5 1388 554 1383 554 1382 555 1381 554.5 1380 554 1375 554 1374 554.5 1373 555.5 1372 555 1371 554 1368 554 1367 554.5 1366 555 1365 554 1359 554 1358 554.5 1357 555 1356 554.5 1355 554 1349 554 1348 554.5 1347 555 1346 554.5 1345 554 1338 554 1337 555 1336 555 1335 554 1333 554 1332 555 1331 555 1330 554 1327 554 1326 555 1325 554.5 1324 554 1321 554 1320 554.5 1319 554.5 1318 554 1313 554 1312 554.5 1311 555 1310 554.5 1309 554 1308 554 1307 555 1306 555 1305 554.5 1304 554 1303 554 1302 554.5 1301 555.5 1300 554.5 1299 554 1296 554 1295 554.5 1294 555 1293 554.5 1292 554 1291 554 1290 554.5 1289 555 1288 554.5 1287 554 1283 554 1282 554.5 1281 554.5 1280 554 1279 554 1278 554.5 1277 555.5 1276 554.5 1275 554 1271 554 1270 554.5 1269 555 1268 554.5 1267 554 1266 554 1265 555 1264 555 1263 554.5 1262 554 1258 554 1257 555 1256 555 1255 554 1248 554 1247 554.5 1246 555 1245 554.5 1244 554 1242 554 1241 554.5 1240 555 1239 554.5 1238 554 1234 554 1233 555 1232 555 1231 554 1228 554 1227 554.5 1226 554.5 1225 554 1220 554 1219 555 1218 555 1217 554 1216 554 1215 555 1214 555 1213 554.5 1212 554 1207 554 1206 554.5 1205 555.5 1204 554.5 1203 554 1196 554 1195 554.5 1194 555 1193 554.5 1192 554 1187 554 1186 555 1185 555.5 1184 554.5 1183 554 1177 554 1176 554.5 1175 555.5 1174 554.5 1173 554 1172 554 1171 554.5 1170 554.5 1169 554 1163 554 1162 554.5 1161 555.5 1160 554.5 1159 554 1155 554 1154 555 1153 555 1152 554 1148 554 1147 554.5 1146 555 1145 554.5 1144 554 1138 554 1137 554.5 1136 554.5 1135 554 1134 554 1133 554.5 1132 555 1131 554.5 1130 554 1129 554 1128 554.5 1127 555 1126 554.5 1125 554 1118 554 1117 554.5 1116 554.5 1115 554 1110 554 1109 554.5 1108 555 1107 554.5 1106 554 1104 554 1103 554.5 1102 555 1101 554.5 1100 554 1099 554.5 1098 555.5 1097 554.5 1096 554 1092 554 1091 554.5 1090 554.5 1089 554 1082 554 1081 554.5 1080 555 1079 554 1072 554 1071 554.5 1070 555 1069 554.5 1068 554 1064 554 1063 555 1062 555 1061 554.5 1060 554 1057 554 1056 554.5 1055 554.5 1054 554 1049 554 1048 554.5 1047 555 1046 554.5 1045 554 1038 554 1037 554.5 1036 555 1035 554.5 1034 554 1029 554 1028 554.5 1027 555.5 1026 554.5 1025 554 1020 554 1019 554.5 1018 555 1017 554.5 1016 554 1009 554 1008 555 1007 555 1006 554 998 554 997 554.5 996 554.5 995 554 994 554 993 554.5 992 554.5 991 554 990 554 989 555 988 555 987 554 986 554 985 554.5 984 555.5 983 554.5 982 554 979 554 978 555 977 555 976 554 975 554 974 554.5 973 555 972 554.5 971 554 970 554 969 555 968 555 967 554 959 554 958 555 957 555 956 554 949 554 948 554.5 947 555.5 946 554.5 945 554 942 554 941 555 940 555 939 554 934 554 933 554.5 932 555.5 931 554.5 930 554 925 554 924 555 923 554.5 922 554 915 554 914 554.5 913 554.5 912 554 908 554 907 554.5 906 555 905 554.5 904 554 898 554 897 554.5 896 554.5 895 554 889 554 888 554.5 887 555.5 886 554.5 885 554 879 554 878 554.5 877 555.5 876 554.5 875 554 872 554 871 554.5 870 555 869 554.5 868 554 866 554 865 555 864 554.5 863 554 862 554Z" fill="#e4f2e8"/><rect x="0" y="617" width="1500" height="1" fill="#2e6a46"/><rect x="0" y="633" width="1500" height="1" fill="#2e6a46"/><path d="M0 682.5H1500" stroke="#1d4630" stroke-width="0.9"/><path d="M0 682 1 682 2 680 3 682 4 680 5 682 6 680 7 682 8 680 9 682 10 680 11 682 12 680 13 682 20 682 21 680.5 22 682 23 680.5 24 682 25 680.5 26 682 27 680.5 28 682 29 680.5 30 682 34 682 35 680.5 36 682 37 680.5 38 682 39 680.5 40 682 48 682 49 680.5 50 682 59 682 60 681 61 681.5 62 681 63 681.5 64 681 65 681.5 66 681 67 681.5 68 681 69 681.5 70 681 71 681.5 72 681 73 681.5 74 682 77 682 78 681 79 682 90 682 91 681 92 682 101 682 102 681.5 113 681.5 114 682 120 682 121 680.5 122 682 129 682 130 681 131 681.5 132 681 133 681.5 134 681 135 681.5 136 682 143 682 144 681 145 682 154 682 155 681 156 682 161 682 162 681 163 682 172 682 173 680.5 174 682 175 680.5 176 682 177 680.5 178 682 179 680.5 180 682 188 682 189 681.5 190 681.5 191 682 195 682 196 681.5 197 681.5 198 682 206 682 207 681.5 208 681 209 681.5 210 681 211 681.5 212 681 213 681.5 214 681 215 681.5 216 681 217 682 223 682 224 680.5 225 682 226 680.5 227 682 228 680.5 229 682 230 680.5 231 682 232 680.5 233 682 234 680.5 235 682 238 682 239 681.5 240 681.5 241 682 245 682 246 680.5 247 682 248 680.5 249 682 250 680.5 251 682 252 680.5 253 682 254 680.5 255 682 256 680.5 257 682 258 680.5 259 682 268 682 269 681 270 682 271 681 272 682 273 681 274 682 275 681 276 682 283 682 284 681 285 681.5 286 681 287 681.5 288 682 295 682 296 681.5 307 681.5 308 682 312 682 313 680.5 314 682 321 682 322 680.5 323 682 324 680.5 325 682 326 680.5 327 682 328 680.5 329 682 330 680.5 331 682 332 680.5 333 682 339 682 340 680.5 341 682 342 680.5 343 682 344 680.5 345 682 346 680.5 347 682 353 682 354 681 355 682 356 681 357 682 358 681 359 682 360 681 361 682 369 682 370 681 371 682 379 682 380 680 381 682 382 680 383 682 384 680 385 682 386 680 387 682 388 680 389 682 390 680 391 682 400 682 401 680.5 402 682 403 680.5 404 682 405 680.5 406 682 407 680.5 408 682 409 680.5 410 682 417 682 418 680.5 419 682 429 682 430 681 431 682 439 682 440 681.5 441 681 442 682 446 682 447 681 448 681.5 449 681 450 681.5 451 681 452 681.5 453 681 454 681.5 455 681 456 681.5 457 682 461 682 462 681 463 682 464 681 465 682 473 682 474 681 475 682 484 682 485 681 486 682 496 682 497 680.5 498 682 507 682 508 681.5 515 681.5 516 682 521 682 522 680.5 523 682 524 680.5 525 682 534 682 535 680.5 536 682 537 680.5 538 682 539 680.5 540 682 541 680.5 542 682 543 680.5 544 682 545 680.5 546 682 547 680.5 548 682 556 682 557 680.5 558 682 564 682 565 681.5 566 681 567 682 575 682 576 681 577 682 578 681 579 682 580 681 581 682 582 681 583 682 584 681 585 682 586 681 587 682 588 681 589 682 596 682 597 680.5 598 682 599 680.5 600 682 601 680.5 602 682 603 680.5 604 682 605 680.5 606 682 607 680.5 608 682 616 682 617 680.5 618 682 619 680.5 620 682 626 682 627 680.5 628 682 634 682 635 680.5 636 682 643 682 644 680.5 645 682 650 682 651 681.5 662 681.5 663 682 670 682 671 681 672 682 681 682 682 681 683 682 689 682 690 680.5 691 682 692 680.5 693 682 694 680.5 695 682 696 680.5 697 682 698 680.5 699 682 700 680.5 701 682 709 682 710 681.5 711 681.5 712 682 719 682 720 680.5 721 682 731 682 732 681.5 733 681.5 734 682 740 682 741 680.5 742 682 751 682 752 681 753 682 760 682 761 680.5 762 682 771 682 772 681.5 773 681.5 774 682 780 682 781 681 782 681.5 783 682 787 682 788 680 789 682 790 680 791 682 792 680 793 682 797 682 798 681.5 799 681 800 682 805 682 806 680.5 807 682 812 682 813 680.5 814 682 815 680.5 816 682 821 682 822 681 823 682 824 681 825 682 826 681 827 682 828 681 829 682 830 681 831 682 832 681 833 682 840 682 841 681.5 842 681.5 843 682 848 682 849 681 850 682 851 681 852 682 853 681 854 682 855 681 856 682 857 681 858 682 864 682 865 681.5 866 681 867 682 872 682 873 681.5 874 681.5 875 682 885 682 886 680.5 887 682 888 680.5 889 682 890 680.5 891 682 892 680.5 893 682 894 680.5 895 682 896 680.5 897 682 905 682 906 680.5 907 682 908 680.5 909 682 910 680.5 911 682 912 680.5 913 682 919 682 920 680.5 921 682 927 682 928 681 929 682 930 681 931 682 932 681 933 682 934 681 935 682 943 682 944 681 945 682 952 682 953 681 954 682 955 681 956 682 960 682 961 681 962 681.5 963 682 969 682 970 680.5 971 682 976 682 977 681 978 682 986 682 987 680.5 988 682 996 682 997 681 998 682 1006 682 1007 680.5 1008 682 1015 682 1016 680.5 1017 682 1018 680.5 1019 682 1020 680.5 1021 682 1022 680.5 1023 682 1024 680.5 1025 682 1026 680.5 1027 682 1034 682 1035 681.5 1036 681.5 1037 682 1043 682 1044 681.5 1045 681.5 1046 682 1054 682 1055 681.5 1056 681.5 1057 682 1064 682 1065 681.5 1066 681.5 1067 682 1072 682 1073 680.5 1074 682 1084 682 1085 681.5 1092 681.5 1093 682 1100 682 1101 680.5 1102 682 1106 682 1107 681.5 1108 681.5 1109 682 1118 682 1119 681 1120 682 1124 682 1125 680.5 1126 682 1135 682 1136 680.5 1137 682 1147 682 1148 680.5 1149 682 1150 680.5 1151 682 1152 680.5 1153 682 1154 680.5 1155 682 1156 680.5 1157 682 1158 680.5 1159 682 1160 680.5 1161 682 1166 682 1167 680.5 1168 682 1174 682 1175 681 1176 682 1177 681 1178 682 1179 681 1180 682 1181 681 1182 682 1190 682 1191 681.5 1202 681.5 1203 682 1209 682 1210 681 1211 682 1212 681 1213 682 1214 681 1215 682 1216 681 1217 682 1218 681 1219 682 1220 681 1221 682 1225 682 1226 681.5 1227 681.5 1228 682 1235 682 1236 681 1237 682 1238 681 1239 682 1240 681 1241 682 1242 681 1243 682 1244 681 1245 682 1253 682 1254 680.5 1255 682 1263 682 1264 681 1265 682 1270 682 1271 680.5 1272 682 1273 680.5 1274 682 1275 680.5 1276 682 1277 680.5 1278 682 1279 680.5 1280 682 1286 682 1287 681.5 1296 681.5 1297 682 1303 682 1304 681.5 1315 681.5 1316 682 1321 682 1322 681.5 1323 681 1324 682 1327 682 1328 681.5 1329 681 1330 682 1336 682 1337 681.5 1338 681 1339 681.5 1340 681 1341 681.5 1342 681 1343 681.5 1344 681 1345 682 1352 682 1353 681 1354 682 1355 681 1356 682 1357 681 1358 682 1359 681 1360 682 1361 681 1362 682 1363 681 1364 682 1365 681 1366 682 1374 682 1375 680.5 1376 682 1383 682 1384 680.5 1385 682 1391 682 1392 681.5 1393 681.5 1394 682 1404 682 1405 681 1406 682 1416 682 1417 680.5 1418 682 1423 682 1424 680.5 1425 682 1433 682 1434 680.5 1435 682 1445 682 1446 681 1447 682 1452 682 1453 680.5 1454 682 1458 682 1459 681 1460 682 1461 681 1462 682 1463 681 1464 682 1465 681 1466 682 1467 681 1468 682 1469 681 1470 682 1471 681 1472 682 1480 682 1481 680.5 1482 682 1493 682 1494 680.5 1495 682 1496 680.5 1497 682 1498 680.5 1499 682 L1499 683 1498 684.5 1497 683 1496 684.5 1495 683 1494 684.5 1493 683 1482 683 1481 684.5 1480 683 1472 683 1471 684 1470 683 1469 684 1468 683 1467 684 1466 683 1465 684 1464 683 1463 684 1462 683 1461 684 1460 683 1459 684 1458 683 1454 683 1453 684.5 1452 683 1447 683 1446 684 1445 683 1435 683 1434 684.5 1433 683 1425 683 1424 684.5 1423 683 1418 683 1417 684.5 1416 683 1406 683 1405 684 1404 683 1394 683 1393 683.5 1392 683.5 1391 683 1385 683 1384 684.5 1383 683 1376 683 1375 684.5 1374 683 1366 683 1365 684 1364 683 1363 684 1362 683 1361 684 1360 683 1359 684 1358 683 1357 684 1356 683 1355 684 1354 683 1353 684 1352 683 1345 683 1344 684 1343 683.5 1342 684 1341 683.5 1340 684 1339 683.5 1338 684 1337 683.5 1336 683 1330 683 1329 684 1328 683.5 1327 683 1324 683 1323 684 1322 683.5 1321 683 1316 683 1315 683.5 1304 683.5 1303 683 1297 683 1296 683.5 1287 683.5 1286 683 1280 683 1279 684.5 1278 683 1277 684.5 1276 683 1275 684.5 1274 683 1273 684.5 1272 683 1271 684.5 1270 683 1265 683 1264 684 1263 683 1255 683 1254 684.5 1253 683 1245 683 1244 684 1243 683 1242 684 1241 683 1240 684 1239 683 1238 684 1237 683 1236 684 1235 683 1228 683 1227 683.5 1226 683.5 1225 683 1221 683 1220 684 1219 683 1218 684 1217 683 1216 684 1215 683 1214 684 1213 683 1212 684 1211 683 1210 684 1209 683 1203 683 1202 683.5 1191 683.5 1190 683 1182 683 1181 684 1180 683 1179 684 1178 683 1177 684 1176 683 1175 684 1174 683 1168 683 1167 684.5 1166 683 1161 683 1160 684.5 1159 683 1158 684.5 1157 683 1156 684.5 1155 683 1154 684.5 1153 683 1152 684.5 1151 683 1150 684.5 1149 683 1148 684.5 1147 683 1137 683 1136 684.5 1135 683 1126 683 1125 684.5 1124 683 1120 683 1119 684 1118 683 1109 683 1108 683.5 1107 683.5 1106 683 1102 683 1101 684.5 1100 683 1093 683 1092 683.5 1085 683.5 1084 683 1074 683 1073 684.5 1072 683 1067 683 1066 683.5 1065 683.5 1064 683 1057 683 1056 683.5 1055 683.5 1054 683 1046 683 1045 683.5 1044 683.5 1043 683 1037 683 1036 683.5 1035 683.5 1034 683 1027 683 1026 684.5 1025 683 1024 684.5 1023 683 1022 684.5 1021 683 1020 684.5 1019 683 1018 684.5 1017 683 1016 684.5 1015 683 1008 683 1007 684.5 1006 683 998 683 997 684 996 683 988 683 987 684.5 986 683 978 683 977 684 976 683 971 683 970 684.5 969 683 963 683 962 683.5 961 684 960 683 956 683 955 684 954 683 953 684 952 683 945 683 944 684 943 683 935 683 934 684 933 683 932 684 931 683 930 684 929 683 928 684 927 683 921 683 920 684.5 919 683 913 683 912 684.5 911 683 910 684.5 909 683 908 684.5 907 683 906 684.5 905 683 897 683 896 684.5 895 683 894 684.5 893 683 892 684.5 891 683 890 684.5 889 683 888 684.5 887 683 886 684.5 885 683 875 683 874 683.5 873 683.5 872 683 867 683 866 684 865 683.5 864 683 858 683 857 684 856 683 855 684 854 683 853 684 852 683 851 684 850 683 849 684 848 683 843 683 842 683.5 841 683.5 840 683 833 683 832 684 831 683 830 684 829 683 828 684 827 683 826 684 825 683 824 684 823 683 822 684 821 683 816 683 815 684.5 814 683 813 684.5 812 683 807 683 806 684.5 805 683 800 683 799 684 798 683.5 797 683 793 683 792 685 791 683 790 685 789 683 788 685 787 683 783 683 782 683.5 781 684 780 683 774 683 773 683.5 772 683.5 771 683 762 683 761 684.5 760 683 753 683 752 684 751 683 742 683 741 684.5 740 683 734 683 733 683.5 732 683.5 731 683 721 683 720 684.5 719 683 712 683 711 683.5 710 683.5 709 683 701 683 700 684.5 699 683 698 684.5 697 683 696 684.5 695 683 694 684.5 693 683 692 684.5 691 683 690 684.5 689 683 683 683 682 684 681 683 672 683 671 684 670 683 663 683 662 683.5 651 683.5 650 683 645 683 644 684.5 643 683 636 683 635 684.5 634 683 628 683 627 684.5 626 683 620 683 619 684.5 618 683 617 684.5 616 683 608 683 607 684.5 606 683 605 684.5 604 683 603 684.5 602 683 601 684.5 600 683 599 684.5 598 683 597 684.5 596 683 589 683 588 684 587 683 586 684 585 683 584 684 583 683 582 684 581 683 580 684 579 683 578 684 577 683 576 684 575 683 567 683 566 684 565 683.5 564 683 558 683 557 684.5 556 683 548 683 547 684.5 546 683 545 684.5 544 683 543 684.5 542 683 541 684.5 540 683 539 684.5 538 683 537 684.5 536 683 535 684.5 534 683 525 683 524 684.5 523 683 522 684.5 521 683 516 683 515 683.5 508 683.5 507 683 498 683 497 684.5 496 683 486 683 485 684 484 683 475 683 474 684 473 683 465 683 464 684 463 683 462 684 461 683 457 683 456 683.5 455 684 454 683.5 453 684 452 683.5 451 684 450 683.5 449 684 448 683.5 447 684 446 683 442 683 441 684 440 683.5 439 683 431 683 430 684 429 683 419 683 418 684.5 417 683 410 683 409 684.5 408 683 407 684.5 406 683 405 684.5 404 683 403 684.5 402 683 401 684.5 400 683 391 683 390 685 389 683 388 685 387 683 386 685 385 683 384 685 383 683 382 685 381 683 380 685 379 683 371 683 370 684 369 683 361 683 360 684 359 683 358 684 357 683 356 684 355 683 354 684 353 683 347 683 346 684.5 345 683 344 684.5 343 683 342 684.5 341 683 340 684.5 339 683 333 683 332 684.5 331 683 330 684.5 329 683 328 684.5 327 683 326 684.5 325 683 324 684.5 323 683 322 684.5 321 683 314 683 313 684.5 312 683 308 683 307 683.5 296 683.5 295 683 288 683 287 683.5 286 684 285 683.5 284 684 283 683 276 683 275 684 274 683 273 684 272 683 271 684 270 683 269 684 268 683 259 683 258 684.5 257 683 256 684.5 255 683 254 684.5 253 683 252 684.5 251 683 250 684.5 249 683 248 684.5 247 683 246 684.5 245 683 241 683 240 683.5 239 683.5 238 683 235 683 234 684.5 233 683 232 684.5 231 683 230 684.5 229 683 228 684.5 227 683 226 684.5 225 683 224 684.5 223 683 217 683 216 684 215 683.5 214 684 213 683.5 212 684 211 683.5 210 684 209 683.5 208 684 207 683.5 206 683 198 683 197 683.5 196 683.5 195 683 191 683 190 683.5 189 683.5 188 683 180 683 179 684.5 178 683 177 684.5 176 683 175 684.5 174 683 173 684.5 172 683 163 683 162 684 161 683 156 683 155 684 154 683 145 683 144 684 143 683 136 683 135 683.5 134 684 133 683.5 132 684 131 683.5 130 684 129 683 122 683 121 684.5 120 683 114 683 113 683.5 102 683.5 101 683 92 683 91 684 90 683 79 683 78 684 77 683 74 683 73 683.5 72 684 71 683.5 70 684 69 683.5 68 684 67 683.5 66 684 65 683.5 64 684 63 683.5 62 684 61 683.5 60 684 59 683 50 683 49 684.5 48 683 40 683 39 684.5 38 683 37 684.5 36 683 35 684.5 34 683 30 683 29 684.5 28 683 27 684.5 26 683 25 684.5 24 683 23 684.5 22 683 21 684.5 20 683 13 683 12 685 11 683 10 685 9 683 8 685 7 683 6 685 5 683 4 685 3 683 2 685 1 683 0 683Z" fill="#1f4a30"/><path d="M0 682.5 1 682 2 680.5 3 682 4 680.5 5 682 6 681 7 682 8 681 9 682 10 681 11 682 12 681 13 682 14 682.5 19 682.5 20 682 21 681 22 682 23 681 24 681.5 25 681 26 681.5 27 680.5 28 681.5 29 681 30 681.5 31 682.5 33 682.5 34 682 35 680.5 36 681.5 37 680.5 38 681.5 39 680.5 40 681.5 41 682.5 47 682.5 48 681.5 49 680.5 50 682 51 682.5 59 682.5 60 681 61 681.5 62 681 63 681.5 64 681 65 681.5 73 681.5 74 682.5 76 682.5 77 682 78 681 79 681.5 80 682.5 89 682.5 90 682 91 681 92 681.5 93 682.5 101 682.5 102 681.5 113 681.5 114 682.5 119 682.5 120 682 121 681.5 122 682 123 682.5 129 682.5 130 681.5 135 681.5 136 682.5 142 682.5 143 682 144 681.5 145 682 146 682.5 154 682.5 155 681.5 156 682 157 682.5 160 682.5 161 682 162 681 163 681.5 164 682.5 171 682.5 172 681.5 173 680.5 174 681.5 175 680.5 176 681.5 177 681 178 681.5 179 681 180 682 181 682.5 188 682.5 189 681.5 190 681 191 682.5 195 682.5 196 681.5 197 681.5 198 682.5 206 682.5 207 681.5 208 681 209 681.5 210 681 211 681.5 213 681.5 214 681 215 681.5 216 681.5 217 682.5 222 682.5 223 682 224 681 225 682 226 681 227 682 228 681 229 681.5 230 681 231 681.5 232 681 233 681.5 234 681 235 682 236 682.5 238 682.5 239 681.5 240 681.5 241 682.5 244 682.5 245 682 246 681 247 682 248 681 249 681.5 250 681 251 681.5 252 681 253 681.5 254 681.5 255 682 256 681 257 681.5 258 681 259 681.5 260 682.5 268 682.5 269 681 270 681.5 271 681 273 681 274 681.5 275 681 276 681.5 277 682.5 283 682.5 284 681 285 681.5 286 681 287 681 288 682.5 295 682.5 296 681 297 681 298 681.5 299 681.5 300 681 301 681.5 307 681.5 308 682.5 311 682.5 312 682 313 681.5 314 682 315 682.5 320 682.5 321 681.5 322 681 323 682 324 681.5 325 681.5 326 681 327 681.5 328 681 329 681.5 330 681 331 681.5 332 681 333 682 334 682.5 338 682.5 339 682 340 681 341 681.5 342 680.5 343 682 344 681 345 681.5 346 680.5 347 682 348 682.5 352 682.5 353 681.5 357 681.5 358 681 359 681.5 360 681 361 682.5 369 682.5 370 681.5 371 682 372 682.5 378 682.5 379 682 380 681 381 682 382 680.5 383 681.5 384 680.5 385 682 386 681 387 682 388 681 389 682 390 681 391 682 392 682.5 399 682.5 400 682 401 681 402 681.5 403 681 404 681.5 405 681 406 681.5 407 681 408 681.5 409 681 410 681.5 411 682.5 416 682.5 417 682 418 681 419 682 420 682.5 428 682.5 429 682 430 681 431 681.5 432 682.5 439 682.5 440 681.5 441 681 442 682 443 682.5 446 682.5 447 681 449 681 450 681.5 452 681.5 453 681 454 681 455 681.5 456 681.5 457 682.5 460 682.5 461 681.5 462 681 463 681.5 464 681.5 465 682.5 472 682.5 473 681.5 474 681 475 682 476 682.5 483 682.5 484 682 485 681 486 681.5 487 682.5 495 682.5 496 682 497 681.5 498 682 499 682.5 507 682.5 508 681 509 681 510 681.5 513 681.5 514 681 515 681 516 682.5 520 682.5 521 682 522 681 523 682 524 681 525 682 526 682.5 533 682.5 534 682 535 680.5 536 681.5 537 681 538 682 539 680.5 540 681.5 541 680.5 542 681.5 543 681 544 681.5 545 681 546 682 547 681 548 682 549 682.5 555 682.5 556 682 557 681.5 558 682 559 682.5 564 682.5 565 682 566 681.5 567 682.5 574 682.5 575 681.5 579 681.5 580 681 581 681.5 583 681.5 584 681 585 681.5 586 681 587 681.5 588 681 589 682.5 595 682.5 596 681.5 597 681 598 681.5 599 681 600 681.5 601 680.5 602 682 603 681 604 681.5 605 680.5 606 682 607 681 608 682 609 682.5 615 682.5 616 682 617 681 618 681.5 619 680.5 620 681.5 621 682.5 625 682.5 626 682 627 681 628 682 629 682.5 633 682.5 634 682 635 681.5 636 682 637 682.5 642 682.5 643 682 644 681 645 682 646 682.5 650 682.5 651 681.5 652 681.5 653 681 656 681 657 681.5 658 681.5 659 681 662 681 663 682.5 669 682.5 670 682 671 681 672 681.5 673 682.5 680 682.5 681 682 682 681.5 683 681.5 684 682.5 688 682.5 689 682 690 681 691 681.5 692 681 693 682 694 681 695 681.5 696 681 697 681.5 698 681 699 681.5 700 680.5 701 681.5 702 682.5 709 682.5 710 681.5 711 681 712 682.5 718 682.5 719 682 720 681 721 682 722 682.5 731 682.5 732 681 733 681 734 682.5 739 682.5 740 681.5 741 680.5 742 682 743 682.5 750 682.5 751 682 752 681.5 753 682.5 759 682.5 760 682 761 680.5 762 682 763 682.5 771 682.5 772 681.5 773 681.5 774 682.5 780 682.5 781 681 782 681.5 783 682.5 786 682.5 787 682 788 681 789 682 790 681 791 681.5 792 680.5 793 682 794 682.5 797 682.5 798 681.5 799 681.5 800 682.5 804 682.5 805 682 806 681.5 807 682 808 682.5 811 682.5 812 681.5 813 681 814 682 815 681 816 682 817 682.5 821 682.5 822 681.5 825 681.5 826 681 827 681.5 828 681 829 681.5 830 681 831 681.5 832 681 833 681.5 834 682.5 840 682.5 841 681.5 842 681 843 682.5 847 682.5 848 681.5 849 681 850 681.5 851 681 852 681.5 853 681 854 681.5 856 681.5 857 681 858 682.5 864 682.5 865 681.5 866 681.5 867 682.5 872 682.5 873 681.5 874 681.5 875 682.5 884 682.5 885 682 886 681 887 681.5 888 680.5 889 682 890 681 891 681.5 892 680.5 893 681.5 894 680.5 895 682 896 681 897 682 898 682.5 904 682.5 905 682 906 681 907 681.5 908 681 909 682 910 681 911 681.5 912 681 913 682 914 682.5 918 682.5 919 682 920 681 921 682 922 682.5 926 682.5 927 681.5 929 681.5 930 681 931 681.5 934 681.5 935 682.5 942 682.5 943 681.5 944 681.5 945 682 946 682.5 951 682.5 952 681.5 953 681 954 681.5 955 681.5 956 682.5 960 682.5 961 681.5 962 682 963 682.5 968 682.5 969 682 970 681 971 682 972 682.5 975 682.5 976 681.5 977 681 978 682 979 682.5 985 682.5 986 682 987 681 988 681.5 989 682.5 995 682.5 996 682 997 681.5 998 681.5 999 682.5 1005 682.5 1006 682 1007 681 1008 681.5 1009 682.5 1014 682.5 1015 681.5 1016 681 1017 681.5 1018 681 1019 681.5 1020 681 1021 681.5 1022 681 1023 681.5 1024 681 1025 681.5 1026 680.5 1027 682 1028 682.5 1034 682.5 1035 681 1036 681.5 1037 682.5 1043 682.5 1044 681.5 1045 681.5 1046 682.5 1054 682.5 1055 681.5 1056 681 1057 682.5 1064 682.5 1065 681.5 1066 681.5 1067 682.5 1071 682.5 1072 682 1073 681 1074 682 1075 682.5 1084 682.5 1085 681 1086 681 1087 681.5 1088 681.5 1089 681 1090 681 1091 681.5 1092 681.5 1093 682.5 1099 682.5 1100 682 1101 681 1102 681.5 1103 682.5 1106 682.5 1107 681.5 1108 681 1109 682.5 1117 682.5 1118 681.5 1119 681.5 1120 682 1121 682.5 1123 682.5 1124 682 1125 681 1126 682 1127 682.5 1134 682.5 1135 682 1136 681 1137 682 1138 682.5 1146 682.5 1147 682 1148 681 1149 682 1150 680.5 1151 681.5 1152 681 1153 681.5 1154 681 1155 681.5 1156 680.5 1157 681.5 1158 681 1159 681.5 1160 681 1161 681.5 1162 682.5 1165 682.5 1166 682 1167 681 1168 682 1169 682.5 1173 682.5 1174 681.5 1175 681 1176 681.5 1177 681 1178 681.5 1179 681 1180 681.5 1181 681.5 1182 682.5 1190 682.5 1191 681.5 1192 681.5 1193 681 1194 681 1195 681.5 1196 681.5 1197 681 1200 681 1201 681.5 1202 681.5 1203 682.5 1209 682.5 1210 681 1211 681.5 1212 681 1213 681.5 1214 681 1215 681.5 1216 681 1217 681.5 1219 681.5 1220 681 1221 681.5 1222 682.5 1225 682.5 1226 682 1227 681.5 1228 682.5 1235 682.5 1236 681.5 1237 682 1238 681.5 1239 682 1240 681 1241 681.5 1242 681 1243 681.5 1244 681 1245 681.5 1246 682.5 1252 682.5 1253 682 1254 681.5 1255 682 1256 682.5 1262 682.5 1263 682 1264 681.5 1265 682 1266 682.5 1269 682.5 1270 682 1271 681 1272 681.5 1273 681 1274 681.5 1275 681 1276 681.5 1277 681.5 1278 682 1279 681 1280 681.5 1281 682.5 1286 682.5 1287 681.5 1292 681.5 1293 681 1294 681 1295 681.5 1296 681.5 1297 682.5 1303 682.5 1304 681 1305 681 1306 681.5 1308 681.5 1309 681 1310 681.5 1315 681.5 1316 682.5 1321 682.5 1322 681.5 1323 681.5 1324 682.5 1327 682.5 1328 681.5 1329 681.5 1330 682.5 1336 682.5 1337 681.5 1338 681 1339 681.5 1342 681.5 1343 681 1344 681 1345 682.5 1351 682.5 1352 681.5 1354 681.5 1355 681 1356 681.5 1357 681 1358 681.5 1359 681 1360 681.5 1361 681 1362 681.5 1364 681.5 1365 681 1366 682.5 1373 682.5 1374 681.5 1375 681 1376 682 1377 682.5 1382 682.5 1383 682 1384 680.5 1385 681.5 1386 682.5 1391 682.5 1392 681.5 1393 681.5 1394 682.5 1403 682.5 1404 681.5 1405 681 1406 682 1407 682.5 1415 682.5 1416 681.5 1417 681 1418 682 1419 682.5 1422 682.5 1423 682 1424 681.5 1425 682 1426 682.5 1432 682.5 1433 682 1434 681 1435 682 1436 682.5 1444 682.5 1445 682 1446 681.5 1447 682.5 1451 682.5 1452 682 1453 681 1454 682 1455 682.5 1458 682.5 1459 681 1460 681.5 1461 681 1462 681.5 1463 681 1464 681.5 1466 681.5 1467 681 1468 681.5 1472 681.5 1473 682.5 1479 682.5 1480 682 1481 681.5 1482 682 1483 682.5 1492 682.5 1493 681.5 1494 681 1495 681.5 1496 681 1497 681.5 1498 681 1499 682 L1499 683 1498 684 1497 683.5 1496 684 1495 683.5 1494 684 1493 683.5 1492 682.5 1483 682.5 1482 683 1481 683.5 1480 683 1479 682.5 1473 682.5 1472 683.5 1468 683.5 1467 684 1466 683.5 1464 683.5 1463 684 1462 683.5 1461 684 1460 683.5 1459 684 1458 682.5 1455 682.5 1454 683 1453 684 1452 683 1451 682.5 1447 682.5 1446 683.5 1445 683 1444 682.5 1436 682.5 1435 683 1434 684 1433 683 1432 682.5 1426 682.5 1425 683 1424 683.5 1423 683 1422 682.5 1419 682.5 1418 683 1417 684 1416 683.5 1415 682.5 1407 682.5 1406 683 1405 684 1404 683.5 1403 682.5 1394 682.5 1393 683.5 1392 683.5 1391 682.5 1386 682.5 1385 683.5 1384 684.5 1383 683 1382 682.5 1377 682.5 1376 683 1375 684 1374 683.5 1373 682.5 1366 682.5 1365 684 1364 683.5 1362 683.5 1361 684 1360 683.5 1359 684 1358 683.5 1357 684 1356 683.5 1355 684 1354 683.5 1352 683.5 1351 682.5 1345 682.5 1344 684 1343 684 1342 683.5 1339 683.5 1338 684 1337 683.5 1336 682.5 1330 682.5 1329 683.5 1328 683.5 1327 682.5 1324 682.5 1323 683.5 1322 683.5 1321 682.5 1316 682.5 1315 683.5 1310 683.5 1309 684 1308 683.5 1306 683.5 1305 684 1304 684 1303 682.5 1297 682.5 1296 683.5 1295 683.5 1294 684 1293 684 1292 683.5 1287 683.5 1286 682.5 1281 682.5 1280 683.5 1279 684 1278 683 1277 683.5 1276 683.5 1275 684 1274 683.5 1273 684 1272 683.5 1271 684 1270 683 1269 682.5 1266 682.5 1265 683 1264 683.5 1263 683 1262 682.5 1256 682.5 1255 683 1254 683.5 1253 683 1252 682.5 1246 682.5 1245 683.5 1244 684 1243 683.5 1242 684 1241 683.5 1240 684 1239 683 1238 683.5 1237 683 1236 683.5 1235 682.5 1228 682.5 1227 683.5 1226 683 1225 682.5 1222 682.5 1221 683.5 1220 684 1219 683.5 1217 683.5 1216 684 1215 683.5 1214 684 1213 683.5 1212 684 1211 683.5 1210 684 1209 682.5 1203 682.5 1202 683.5 1201 683.5 1200 684 1197 684 1196 683.5 1195 683.5 1194 684 1193 684 1192 683.5 1191 683.5 1190 682.5 1182 682.5 1181 683.5 1180 683.5 1179 684 1178 683.5 1177 684 1176 683.5 1175 684 1174 683.5 1173 682.5 1169 682.5 1168 683 1167 684 1166 683 1165 682.5 1162 682.5 1161 683.5 1160 684 1159 683.5 1158 684 1157 683.5 1156 684.5 1155 683.5 1154 684 1153 683.5 1152 684 1151 683.5 1150 684.5 1149 683 1148 684 1147 683 1146 682.5 1138 682.5 1137 683 1136 684 1135 683 1134 682.5 1127 682.5 1126 683 1125 684 1124 683 1123 682.5 1121 682.5 1120 683 1119 683.5 1118 683.5 1117 682.5 1109 682.5 1108 684 1107 683.5 1106 682.5 1103 682.5 1102 683.5 1101 684 1100 683 1099 682.5 1093 682.5 1092 683.5 1091 683.5 1090 684 1089 684 1088 683.5 1087 683.5 1086 684 1085 684 1084 682.5 1075 682.5 1074 683 1073 684 1072 683 1071 682.5 1067 682.5 1066 683.5 1065 683.5 1064 682.5 1057 682.5 1056 684 1055 683.5 1054 682.5 1046 682.5 1045 683.5 1044 683.5 1043 682.5 1037 682.5 1036 683.5 1035 684 1034 682.5 1028 682.5 1027 683 1026 684.5 1025 683.5 1024 684 1023 683.5 1022 684 1021 683.5 1020 684 1019 683.5 1018 684 1017 683.5 1016 684 1015 683.5 1014 682.5 1009 682.5 1008 683.5 1007 684 1006 683 1005 682.5 999 682.5 998 683.5 997 683.5 996 683 995 682.5 989 682.5 988 683.5 987 684 986 683 985 682.5 979 682.5 978 683 977 684 976 683.5 975 682.5 972 682.5 971 683 970 684 969 683 968 682.5 963 682.5 962 683 961 683.5 960 682.5 956 682.5 955 683.5 954 683.5 953 684 952 683.5 951 682.5 946 682.5 945 683 944 683.5 943 683.5 942 682.5 935 682.5 934 683.5 931 683.5 930 684 929 683.5 927 683.5 926 682.5 922 682.5 921 683 920 684 919 683 918 682.5 914 682.5 913 683 912 684 911 683.5 910 684 909 683 908 684 907 683.5 906 684 905 683 904 682.5 898 682.5 897 683 896 684 895 683 894 684.5 893 683.5 892 684.5 891 683.5 890 684 889 683 888 684.5 887 683.5 886 684 885 683 884 682.5 875 682.5 874 683.5 873 683.5 872 682.5 867 682.5 866 683.5 865 683.5 864 682.5 858 682.5 857 684 856 683.5 854 683.5 853 684 852 683.5 851 684 850 683.5 849 684 848 683.5 847 682.5 843 682.5 842 684 841 683.5 840 682.5 834 682.5 833 683.5 832 684 831 683.5 830 684 829 683.5 828 684 827 683.5 826 684 825 683.5 822 683.5 821 682.5 817 682.5 816 683 815 684 814 683 813 684 812 683.5 811 682.5 808 682.5 807 683 806 683.5 805 683 804 682.5 800 682.5 799 683.5 798 683.5 797 682.5 794 682.5 793 683 792 684.5 791 683.5 790 684 789 683 788 684 787 683 786 682.5 783 682.5 782 683.5 781 684 780 682.5 774 682.5 773 683.5 772 683.5 771 682.5 763 682.5 762 683 761 684.5 760 683 759 682.5 753 682.5 752 683.5 751 683 750 682.5 743 682.5 742 683 741 684.5 740 683.5 739 682.5 734 682.5 733 684 732 684 731 682.5 722 682.5 721 683 720 684 719 683 718 682.5 712 682.5 711 684 710 683.5 709 682.5 702 682.5 701 683.5 700 684.5 699 683.5 698 684 697 683.5 696 684 695 683.5 694 684 693 683 692 684 691 683.5 690 684 689 683 688 682.5 684 682.5 683 683.5 682 683.5 681 683 680 682.5 673 682.5 672 683.5 671 684 670 683 669 682.5 663 682.5 662 684 659 684 658 683.5 657 683.5 656 684 653 684 652 683.5 651 683.5 650 682.5 646 682.5 645 683 644 684 643 683 642 682.5 637 682.5 636 683 635 683.5 634 683 633 682.5 629 682.5 628 683 627 684 626 683 625 682.5 621 682.5 620 683.5 619 684.5 618 683.5 617 684 616 683 615 682.5 609 682.5 608 683 607 684 606 683 605 684.5 604 683.5 603 684 602 683 601 684.5 600 683.5 599 684 598 683.5 597 684 596 683.5 595 682.5 589 682.5 588 684 587 683.5 586 684 585 683.5 584 684 583 683.5 581 683.5 580 684 579 683.5 575 683.5 574 682.5 567 682.5 566 683.5 565 683 564 682.5 559 682.5 558 683 557 683.5 556 683 555 682.5 549 682.5 548 683 547 684 546 683 545 684 544 683.5 543 684 542 683.5 541 684.5 540 683.5 539 684.5 538 683 537 684 536 683.5 535 684.5 534 683 533 682.5 526 682.5 525 683 524 684 523 683 522 684 521 683 520 682.5 516 682.5 515 684 514 684 513 683.5 510 683.5 509 684 508 684 507 682.5 499 682.5 498 683 497 683.5 496 683 495 682.5 487 682.5 486 683.5 485 684 484 683 483 682.5 476 682.5 475 683 474 684 473 683.5 472 682.5 465 682.5 464 683.5 463 683.5 462 684 461 683.5 460 682.5 457 682.5 456 683.5 455 683.5 454 684 453 684 452 683.5 450 683.5 449 684 447 684 446 682.5 443 682.5 442 683 441 684 440 683.5 439 682.5 432 682.5 431 683.5 430 684 429 683 428 682.5 420 682.5 419 683 418 684 417 683 416 682.5 411 682.5 410 683.5 409 684 408 683.5 407 684 406 683.5 405 684 404 683.5 403 684 402 683.5 401 684 400 683 399 682.5 392 682.5 391 683 390 684 389 683 388 684 387 683 386 684 385 683 384 684.5 383 683.5 382 684.5 381 683 380 684 379 683 378 682.5 372 682.5 371 683 370 683.5 369 682.5 361 682.5 360 684 359 683.5 358 684 357 683.5 353 683.5 352 682.5 348 682.5 347 683 346 684.5 345 683.5 344 684 343 683 342 684.5 341 683.5 340 684 339 683 338 682.5 334 682.5 333 683 332 684 331 683.5 330 684 329 683.5 328 684 327 683.5 326 684 325 683.5 324 683.5 323 683 322 684 321 683.5 320 682.5 315 682.5 314 683 313 683.5 312 683 311 682.5 308 682.5 307 683.5 301 683.5 300 684 299 683.5 298 683.5 297 684 296 684 295 682.5 288 682.5 287 684 286 684 285 683.5 284 684 283 682.5 277 682.5 276 683.5 275 684 274 683.5 273 684 271 684 270 683.5 269 684 268 682.5 260 682.5 259 683.5 258 684 257 683.5 256 684 255 683 254 683.5 253 683.5 252 684 251 683.5 250 684 249 683.5 248 684 247 683 246 684 245 683 244 682.5 241 682.5 240 683.5 239 683.5 238 682.5 236 682.5 235 683 234 684 233 683.5 232 684 231 683.5 230 684 229 683.5 228 684 227 683 226 684 225 683 224 684 223 683 222 682.5 217 682.5 216 683.5 215 683.5 214 684 213 683.5 211 683.5 210 684 209 683.5 208 684 207 683.5 206 682.5 198 682.5 197 683.5 196 683.5 195 682.5 191 682.5 190 684 189 683.5 188 682.5 181 682.5 180 683 179 684 178 683.5 177 684 176 683.5 175 684.5 174 683.5 173 684.5 172 683.5 171 682.5 164 682.5 163 683.5 162 684 161 683 160 682.5 157 682.5 156 683 155 683.5 154 682.5 146 682.5 145 683 144 683.5 143 683 142 682.5 136 682.5 135 683.5 130 683.5 129 682.5 123 682.5 122 683 121 683.5 120 683 119 682.5 114 682.5 113 683.5 102 683.5 101 682.5 93 682.5 92 683.5 91 684 90 683 89 682.5 80 682.5 79 683.5 78 684 77 683 76 682.5 74 682.5 73 683.5 65 683.5 64 684 63 683.5 62 684 61 683.5 60 684 59 682.5 51 682.5 50 683 49 684.5 48 683.5 47 682.5 41 682.5 40 683.5 39 684.5 38 683.5 37 684.5 36 683.5 35 684.5 34 683 33 682.5 31 682.5 30 683.5 29 684 28 683.5 27 684.5 26 683.5 25 684 24 683.5 23 684 22 683 21 684 20 683 19 682.5 14 682.5 13 683 12 684 11 683 10 684 9 683 8 684 7 683 6 684 5 683 4 684.5 3 683 2 684.5 1 683 0 682.5Z" fill="#e4f2e8"/></svg>
<div class="t" style="left:248px;top:441px;height:17px;padding:0 2px;background:#10211a;border-radius:2px;font-size:11.8px;line-height:17px;color:#e8f0ea">TP Cowbell</div>
<div class="t" style="left:248px;top:505px;height:17px;padding:0 2px;background:#10211a;border-radius:2px;font-size:11.8px;line-height:17px;color:#e8f0ea">Tom 3_01.wav</div>
<div class="t" style="left:248px;top:569px;height:17px;padding:0 2px;background:#10211a;border-radius:2px;font-size:11.8px;line-height:17px;color:#e8f0ea">Tom 2_01.wav</div>
<div class="t" style="left:248px;top:633px;height:17px;padding:0 2px;background:#10211a;border-radius:2px;font-size:11.8px;line-height:17px;color:#e8f0ea">Tom 1_01.wav</div>
<div class="t" style="left:248px;top:697px;height:17px;padding:0 2px;background:#10211a;border-radius:2px;font-size:11.8px;line-height:17px;color:#e8f0ea">Snare Top_01.wav</div>
<div class="t" style="left:248px;top:761px;height:17px;padding:0 2px;background:#10211a;border-radius:2px;font-size:11.8px;line-height:17px;color:#e8f0ea">Snare Bottom_01.wav</div>
<div class="t" style="left:248px;top:825px;height:17px;padding:0 2px;background:#10211a;border-radius:2px;font-size:11.8px;line-height:17px;color:#e8f0ea">Snare 2_01.wav</div>
<div class="t" style="left:248px;top:889px;height:17px;padding:0 2px;background:#10211a;border-radius:2px;font-size:11.8px;line-height:17px;color:#e8f0ea">Simon Gtr_01.wav</div>
<div class="t" style="left:248px;top:953px;height:17px;padding:0 2px;background:#10211a;border-radius:2px;font-size:11.8px;line-height:17px;color:#e8f0ea">Simon DI_01.wav</div>
<div class="t" style="left:248px;top:1017px;height:17px;padding:0 2px;background:#10211a;border-radius:2px;font-size:11.8px;line-height:17px;color:#e8f0ea">Sample_01.wav</div>
<div class="t" style="left:248px;top:1081px;height:17px;padding:0 2px;background:#10211a;border-radius:2px;font-size:11.8px;line-height:17px;color:#e8f0ea">Ride_01.wav</div>
<div style="left:246px;top:1088px;width:1511px;height:12px;background:#28282c"></div>
<div style="left:321.6px;top:1090.4px;width:202.6px;height:8.8px;background:#5c6065;border-radius:4.5px"></div>
<div style="left:1449.7px;top:346px;width:3.2px;height:742px;background:#dc4c3a;border-left:0.7px solid #7a2a20;border-right:0.7px solid #7a2a20;box-sizing:border-box"></div>
<div style="left:1735px;top:388px;width:11px;height:700px;background:linear-gradient(90deg,rgba(20,20,24,0),rgba(20,20,24,0.55))"></div>
<svg style="position:absolute;left:1442px;top:345px;" width="20" height="16" viewBox="0 0 20 16"><path d="M1 1h18v8l-9 6-9-6z" fill="#e2493a"/></svg>
<svg style="position:absolute;left:1357px;top:347px;" width="12" height="8" viewBox="0 0 12 8"><path d="M1 1l5 5 5-5" fill="none" stroke="#f0f0f0" stroke-width="1.8"/></svg>
<div style="left:246px;top:388px;width:10px;height:700px;background:linear-gradient(90deg,rgba(10,20,14,0.35),rgba(10,20,14,0))"></div>
<div style="left:1745px;top:346px;width:12px;height:742px;background:#333438"></div>
<div style="left:1746.5px;top:384px;width:9.5px;height:166px;background:#595c62;border:1px solid #1a1a1c;border-radius:5px;box-sizing:border-box"></div>
<div style="left:1757px;top:292px;width:291px;height:53px;background:#232227"></div>
<div style="left:1757px;top:345px;width:291px;height:755px;background:#28282c"></div>
<div style="left:1757px;top:345px;width:1px;height:755px;background:#18181a"></div>
<div style="left:1757px;top:345px;width:291px;height:1px;background:#18181a"></div>
<div style="left:1757px;top:371px;width:291px;height:1px;background:#18181a"></div>
<div class="t" style="left:1766.7px;top:350.9px;font-size:13.5px;line-height:16.2px;color:#f0f0f0;font-weight:700;">Mixer</div>
<div style="left:2007px;top:346px;width:1px;height:25px;background:#18181a"></div>
<div style="left:2021.0px;top:356px;width:4px;height:4px;background:#9a9a9a;border-radius:50%"></div>
<div style="left:2027.5px;top:356px;width:4px;height:4px;background:#9a9a9a;border-radius:50%"></div>
<div style="left:2034.0px;top:356px;width:4px;height:4px;background:#9a9a9a;border-radius:50%"></div>
<div style="left:1833px;top:372px;width:215px;height:728px;background:#242427"></div>
<div style="left:1834px;top:372px;width:71px;height:3.5px;background:#55a070"></div>
<div style="left:1833px;top:375px;width:1px;height:713px;background:#19191b"></div>
<div class="t" style="left:1834.5px;top:382.2px;width:70px;text-align:center;font-size:12.5px;line-height:15.0px;color:#ececec;font-weight:400;">A5</div>
<div style="left:1907px;top:372px;width:68px;height:3.5px;background:#55a070"></div>
<div style="left:1906px;top:375px;width:1px;height:713px;background:#19191b"></div>
<div class="t" style="left:1906.0px;top:382.2px;width:70px;text-align:center;font-size:12.5px;line-height:15.0px;color:#ececec;font-weight:400;">A6</div>
<div style="left:1977px;top:372px;width:70px;height:3.5px;background:#3b82a8"></div>
<div style="left:1976px;top:375px;width:1px;height:713px;background:#19191b"></div>
<div class="t" style="left:1977.0px;top:382.2px;width:70px;text-align:center;font-size:12.5px;line-height:15.0px;color:#ececec;font-weight:400;">Bus1</div>
<div style="left:1833px;top:404px;width:215px;height:1px;background:#1b1b1d"></div>
<div style="left:1833px;top:430px;width:215px;height:1px;background:#1b1b1d"></div>
<div style="left:1833px;top:480px;width:215px;height:1px;background:#1b1b1d"></div>
<div style="left:1833px;top:509px;width:215px;height:1px;background:#1b1b1d"></div>
<div style="left:1833px;top:578px;width:215px;height:1px;background:#1b1b1d"></div>
<div style="left:1833px;top:606px;width:215px;height:1px;background:#1b1b1d"></div>
<div style="left:1833px;top:680px;width:215px;height:1px;background:#1b1b1d"></div>
<div style="left:1833px;top:722px;width:215px;height:1px;background:#1b1b1d"></div>
<div style="left:1833px;top:750px;width:215px;height:1px;background:#1b1b1d"></div>
<div style="left:1833px;top:790px;width:215px;height:1px;background:#1b1b1d"></div>
<div style="left:1833px;top:817px;width:215px;height:1px;background:#1b1b1d"></div>
<div style="left:1833px;top:846px;width:215px;height:1px;background:#1b1b1d"></div>
<div style="left:1833px;top:876px;width:215px;height:1px;background:#1b1b1d"></div>
<div class="t" style="left:1734.0px;top:408.1px;width:90px;text-align:right;font-size:11.5px;line-height:13.8px;color:#9a9a9a;font-weight:400;">Input</div>
<div class="t" style="left:1734.0px;top:444.1px;width:90px;text-align:right;font-size:11.5px;line-height:13.8px;color:#9a9a9a;font-weight:400;">Track FX</div>
<div class="t" style="left:1734.0px;top:486.1px;width:90px;text-align:right;font-size:11.5px;line-height:13.8px;color:#9a9a9a;font-weight:400;">Order</div>
<div class="t" style="left:1734.0px;top:522.1px;width:90px;text-align:right;font-size:11.5px;line-height:13.8px;color:#9a9a9a;font-weight:400;">Effects</div>
<div class="t" style="left:1734.0px;top:585.1px;width:90px;text-align:right;font-size:11.5px;line-height:13.8px;color:#9a9a9a;font-weight:400;">Effects In</div>
<div class="t" style="left:1734.0px;top:614.1px;width:90px;text-align:right;font-size:11.5px;line-height:13.8px;color:#9a9a9a;font-weight:400;">Dynamics</div>
<div class="t" style="left:1734.0px;top:686.1px;width:90px;text-align:right;font-size:11.5px;line-height:13.8px;color:#9a9a9a;font-weight:400;">EQ</div>
<div class="t" style="left:1734.0px;top:729.1px;width:90px;text-align:right;font-size:11.5px;line-height:13.8px;color:#9a9a9a;font-weight:400;">Bus Sends</div>
<div class="t" style="left:1734.0px;top:758.1px;width:90px;text-align:right;font-size:11.5px;line-height:13.8px;color:#9a9a9a;font-weight:400;">Pan</div>
<div style="left:1840px;top:407.5px;width:60px;height:16px;background:#1e1e20;border:1px solid #151516;border-radius:2px;box-sizing:border-box"></div>
<div class="t" style="left:1844px;top:408.6px;font-size:11.5px;line-height:13.8px;color:#b0b0b0;font-weight:400;">No Input</div>
<div style="left:1840px;top:438px;width:60px;height:15px;background:#44464b;border:1px solid #1a1a1c;border-radius:2px;box-sizing:border-box"></div>
<div class="t" style="left:1844px;top:438.6px;font-size:11.5px;line-height:13.8px;color:#9a9a9e;font-weight:400;font-style:italic">Voice Iso</div>
<div style="left:1840px;top:458px;width:60px;height:15px;background:#44464b;border:1px solid #1a1a1c;border-radius:2px;box-sizing:border-box"></div>
<div class="t" style="left:1844px;top:458.6px;font-size:11.5px;line-height:13.8px;color:#9a9a9e;font-weight:400;font-style:italic">Dial Lev</div>
<div style="left:1840px;top:486px;width:60px;height:16px;background:#1e1e20;border:1px solid #151516;border-radius:2px;box-sizing:border-box"></div>
<div class="t" style="left:1846px;top:487px;font-size:10.5px;line-height:14px;font-weight:700;font-style:italic;letter-spacing:-0.2px"><span style="color:#d9a520">FX</span>&nbsp;&nbsp;<span style="color:#c4cc30">DY</span>&nbsp;&nbsp;<span style="color:#30b8d0">EQ</span></div>
<div style="left:1840px;top:515px;width:60px;height:16px;background:#1e1e20;border:1px solid #151516;border-radius:2px;box-sizing:border-box"></div>
<div class="t" style="left:1844px;top:515.8px;font-size:12px;line-height:14.4px;color:#d8b840;font-weight:400;">Limiter</div>
<div style="left:1840px;top:535.5px;width:60px;height:16px;background:#1e1e20;border:1px solid #151516;border-radius:2px;box-sizing:border-box"></div>
<div class="t" style="left:1844px;top:536.3px;font-size:12px;line-height:14.4px;color:#d8b840;font-weight:400;">FL EQ</div>
<div style="left:1840px;top:556px;width:60px;height:15.5px;background:#1e1e20;border:1px solid #151516;border-radius:2px;box-sizing:border-box"></div>
<div class="t" style="left:1860.0px;top:555.7px;width:20px;text-align:center;font-size:13px;line-height:15.6px;color:#9a9a9a;font-weight:400;">+</div>
<div style="left:1860.5px;top:583px;width:18px;height:19px;background:#d8a818;border-radius:4px"></div>
<div class="t" style="left:1859.5px;top:585.6px;width:20px;text-align:center;font-size:11.5px;line-height:13.8px;color:#3a2a00;font-weight:600;">In</div>
<svg style="position:absolute;left:1840px;top:613px;" width="60" height="61" viewBox="0 0 60 61"><rect x="0.5" y="0.5" width="59" height="60" rx="3" fill="#202023" stroke="#141416"/><path d="M30.0 1V60M1 30.5H59" stroke="#38383c"/><path d="M3 58L57 3" stroke="#c8d040" stroke-width="1.3"/></svg>
<svg style="position:absolute;left:1840px;top:686px;" width="60" height="31" viewBox="0 0 60 31"><rect x="0.5" y="0.5" width="59" height="30" rx="3" fill="#202023" stroke="#141416"/><path d="M30.0 1V30" stroke="#38383c"/><path d="M2 15.5H58" stroke="#3ab8e0" stroke-width="1.3"/></svg>
<div style="left:1840px;top:728px;width:60px;height:17px;background:#222225;border:1px solid #1a1a1c;border-radius:2px;box-sizing:border-box"></div>
<div class="t" style="left:1860.0px;top:729.3px;width:20px;text-align:center;font-size:12px;line-height:14.4px;color:#5a5a5e;font-weight:400;">+</div>
<svg style="position:absolute;left:1840px;top:757px;" width="60" height="33" viewBox="0 0 60 33"><rect x="0.5" y="0.5" width="59" height="34" rx="3" fill="#202023" stroke="#141416"/><path d="M30.0 6V33M12 20h36v13M12 20v13" stroke="#38383c" fill="none"/><rect x="27.0" y="3" width="6" height="6" fill="#3ab0f0"/></svg>
<div style="left:1913px;top:407.5px;width:57px;height:16px;background:#1e1e20;border:1px solid #151516;border-radius:2px;box-sizing:border-box"></div>
<div class="t" style="left:1917px;top:408.6px;font-size:11.5px;line-height:13.8px;color:#b0b0b0;font-weight:400;">No Input</div>
<div style="left:1913px;top:438px;width:57px;height:15px;background:#44464b;border:1px solid #1a1a1c;border-radius:2px;box-sizing:border-box"></div>
<div class="t" style="left:1917px;top:438.6px;font-size:11.5px;line-height:13.8px;color:#9a9a9e;font-weight:400;font-style:italic">Voice Iso</div>
<div style="left:1913px;top:458px;width:57px;height:15px;background:#44464b;border:1px solid #1a1a1c;border-radius:2px;box-sizing:border-box"></div>
<div class="t" style="left:1917px;top:458.6px;font-size:11.5px;line-height:13.8px;color:#9a9a9e;font-weight:400;font-style:italic">Dial Lev</div>
<div style="left:1913px;top:486px;width:57px;height:16px;background:#1e1e20;border:1px solid #151516;border-radius:2px;box-sizing:border-box"></div>
<div class="t" style="left:1919px;top:487px;font-size:10.5px;line-height:14px;font-weight:700;font-style:italic;letter-spacing:-0.2px"><span style="color:#d9a520">FX</span>&nbsp;&nbsp;<span style="color:#c4cc30">DY</span>&nbsp;&nbsp;<span style="color:#30b8d0">EQ</span></div>
<div style="left:1913px;top:515px;width:57px;height:16px;background:#1e1e20;border:1px solid #151516;border-radius:2px;box-sizing:border-box"></div>
<div class="t" style="left:1917px;top:515.8px;font-size:12px;line-height:14.4px;color:#d8b840;font-weight:400;">Dialogu...</div>
<div style="left:1913px;top:556px;width:57px;height:15.5px;background:#1e1e20;border:1px solid #151516;border-radius:2px;box-sizing:border-box"></div>
<div class="t" style="left:1931.5px;top:555.7px;width:20px;text-align:center;font-size:13px;line-height:15.6px;color:#9a9a9a;font-weight:400;">+</div>
<div style="left:1932.0px;top:583px;width:18px;height:19px;background:#d8a818;border-radius:4px"></div>
<div class="t" style="left:1931.0px;top:585.6px;width:20px;text-align:center;font-size:11.5px;line-height:13.8px;color:#3a2a00;font-weight:600;">In</div>
<svg style="position:absolute;left:1913px;top:613px;" width="57" height="61" viewBox="0 0 57 61"><rect x="0.5" y="0.5" width="56" height="60" rx="3" fill="#202023" stroke="#141416"/><path d="M28.5 1V60M1 30.5H56" stroke="#38383c"/><path d="M3 58L54 3" stroke="#c8d040" stroke-width="1.3"/></svg>
<svg style="position:absolute;left:1913px;top:686px;" width="57" height="31" viewBox="0 0 57 31"><rect x="0.5" y="0.5" width="56" height="30" rx="3" fill="#202023" stroke="#141416"/><path d="M28.5 1V30" stroke="#38383c"/><path d="M2 15.5H55" stroke="#3ab8e0" stroke-width="1.3"/></svg>
<div style="left:1913px;top:728px;width:57px;height:17px;background:#222225;border:1px solid #1a1a1c;border-radius:2px;box-sizing:border-box"></div>
<div class="t" style="left:1931.5px;top:729.3px;width:20px;text-align:center;font-size:12px;line-height:14.4px;color:#5a5a5e;font-weight:400;">+</div>
<svg style="position:absolute;left:1913px;top:757px;" width="57" height="33" viewBox="0 0 57 33"><rect x="0.5" y="0.5" width="56" height="34" rx="3" fill="#202023" stroke="#141416"/><path d="M28.5 6V33M12 20h33v13M12 20v13" stroke="#38383c" fill="none"/><rect x="25.5" y="3" width="6" height="6" fill="#3ab0f0"/></svg>
<div style="left:1983px;top:407.5px;width:59px;height:16px;background:#1e1e20;border:1px solid #151516;border-radius:2px;box-sizing:border-box"></div>
<div style="left:1983px;top:515px;width:59px;height:16px;background:#1e1e20;border:1px solid #151516;border-radius:2px;box-sizing:border-box"></div>
<div class="t" style="left:1987px;top:515.8px;font-size:12px;line-height:14.4px;color:#d8b840;font-weight:400;">Multiba...</div>
<div style="left:1983px;top:535.5px;width:59px;height:16px;background:#1e1e20;border:1px solid #151516;border-radius:2px;box-sizing:border-box"></div>
<div class="t" style="left:1987px;top:536.3px;font-size:12px;line-height:14.4px;color:#d8b840;font-weight:400;">FL EQ</div>
<div style="left:1983px;top:556px;width:59px;height:15.5px;background:#1e1e20;border:1px solid #151516;border-radius:2px;box-sizing:border-box"></div>
<div class="t" style="left:2002.5px;top:555.7px;width:20px;text-align:center;font-size:13px;line-height:15.6px;color:#9a9a9a;font-weight:400;">+</div>
<div style="left:2003.0px;top:583px;width:18px;height:19px;background:#d8a818;border-radius:4px"></div>
<div class="t" style="left:2002.0px;top:585.6px;width:20px;text-align:center;font-size:11.5px;line-height:13.8px;color:#3a2a00;font-weight:600;">In</div>
<svg style="position:absolute;left:1983px;top:613px;" width="59" height="61" viewBox="0 0 59 61"><rect x="0.5" y="0.5" width="58" height="60" rx="3" fill="#202023" stroke="#141416"/><path d="M29.5 1V60M1 30.5H58" stroke="#38383c"/><path d="M3 58L56 3" stroke="#c8d040" stroke-width="1.3"/></svg>
<svg style="position:absolute;left:1983px;top:686px;" width="59" height="31" viewBox="0 0 59 31"><rect x="0.5" y="0.5" width="58" height="30" rx="3" fill="#202023" stroke="#141416"/><path d="M29.5 1V30" stroke="#38383c"/><path d="M2 15.5H57" stroke="#3ab8e0" stroke-width="1.3"/></svg>
<div style="left:1983px;top:728px;width:59px;height:17px;background:#222225;border:1px solid #1a1a1c;border-radius:2px;box-sizing:border-box"></div>
<div class="t" style="left:2002.5px;top:729.3px;width:20px;text-align:center;font-size:12px;line-height:14.4px;color:#5a5a5e;font-weight:400;">+</div>
<div style="left:1833px;top:790px;width:215px;height:310px;background:#28282c"></div>
<div style="left:1833px;top:790px;width:1px;height:298px;background:#19191b"></div>
<div style="left:1906px;top:790px;width:1px;height:298px;background:#19191b"></div>
<div style="left:1976px;top:790px;width:1px;height:298px;background:#19191b"></div>
<div style="left:1833px;top:790px;width:215px;height:1px;background:#1b1b1d"></div>
<div style="left:1833px;top:817px;width:215px;height:1px;background:#1b1b1d"></div>
<div style="left:1833px;top:846px;width:215px;height:1px;background:#1b1b1d"></div>
<div style="left:1833px;top:876px;width:215px;height:1px;background:#1b1b1d"></div>
<div class="t" style="left:1834.5px;top:795.5px;width:70px;text-align:center;font-size:12.5px;line-height:15.0px;color:#ececec;font-weight:400;">Tom 1</div>
<div style="left:1841px;top:821px;width:18px;height:18px;background:#38383c;border-radius:3px"></div>
<div class="t" style="left:1840.0px;top:823.4px;width:20px;text-align:center;font-size:11px;line-height:13.2px;color:#8e8e8e;font-weight:400;">R</div>
<div style="left:1863px;top:821px;width:18px;height:18px;background:#38383c;border-radius:3px"></div>
<div class="t" style="left:1862.0px;top:823.4px;width:20px;text-align:center;font-size:11px;line-height:13.2px;color:#8e8e8e;font-weight:400;">S</div>
<div style="left:1885px;top:821px;width:18px;height:18px;background:#38383c;border-radius:3px"></div>
<div class="t" style="left:1884.0px;top:823.4px;width:20px;text-align:center;font-size:11px;line-height:13.2px;color:#8e8e8e;font-weight:400;">M</div>
<svg style="position:absolute;left:1857.5px;top:853px;" width="24" height="14" viewBox="0 0 24 14"><path d="M1 8 L6 3 L11 8 L17 11 L23 4" fill="none" stroke="#9a9a9a" stroke-width="1.2"/><circle cx="6" cy="3.5" r="2" fill="#28282c" stroke="#9a9a9a"/><circle cx="17" cy="10.5" r="2" fill="#28282c" stroke="#9a9a9a"/></svg>
<div class="t" style="left:1844px;top:878.4px;font-size:11px;line-height:13.2px;color:#e6e6e6;font-weight:400;">0.0</div>
<svg style="position:absolute;left:1882px;top:877px;" width="10" height="14" viewBox="0 0 10 14"><path d="M1 5l4-4 4 4M1 8l4 4 4-4" fill="#555" stroke="#555"/></svg>
<div style="left:1879px;top:893px;width:14px;height:2px;background:#b8b8b8"></div>
<div class="t" style="left:1857.0px;top:895.4px;width:20px;text-align:right;font-size:11px;line-height:13.2px;color:#8a8a8a;font-weight:400;">0</div>
<div style="left:1879px;top:902px;width:2px;height:1px;background:#8a8a8a"></div>
<div class="t" style="left:1857.0px;top:919.0px;width:20px;text-align:right;font-size:11px;line-height:13.2px;color:#8a8a8a;font-weight:400;">5</div>
<div style="left:1879px;top:926px;width:2px;height:1px;background:#8a8a8a"></div>
<div class="t" style="left:1857.0px;top:941.4px;width:20px;text-align:right;font-size:11px;line-height:13.2px;color:#8a8a8a;font-weight:400;">10</div>
<div style="left:1879px;top:948px;width:2px;height:1px;background:#8a8a8a"></div>
<div class="t" style="left:1857.0px;top:963.4px;width:20px;text-align:right;font-size:11px;line-height:13.2px;color:#8a8a8a;font-weight:400;">15</div>
<div style="left:1879px;top:970px;width:2px;height:1px;background:#8a8a8a"></div>
<div class="t" style="left:1857.0px;top:986.0px;width:20px;text-align:right;font-size:11px;line-height:13.2px;color:#8a8a8a;font-weight:400;">20</div>
<div style="left:1879px;top:993px;width:2px;height:1px;background:#8a8a8a"></div>
<div class="t" style="left:1857.0px;top:1022.4px;width:20px;text-align:right;font-size:11px;line-height:13.2px;color:#8a8a8a;font-weight:400;">30</div>
<div style="left:1879px;top:1029px;width:2px;height:1px;background:#8a8a8a"></div>
<div class="t" style="left:1857.0px;top:1050.0px;width:20px;text-align:right;font-size:11px;line-height:13.2px;color:#8a8a8a;font-weight:400;">40</div>
<div style="left:1879px;top:1057px;width:2px;height:1px;background:#8a8a8a"></div>
<div class="t" style="left:1857.0px;top:1064.1px;width:20px;text-align:right;font-size:11px;line-height:13.2px;color:#8a8a8a;font-weight:400;">50</div>
<div style="left:1879px;top:1071px;width:2px;height:1px;background:#8a8a8a"></div>
<div style="left:1840px;top:902px;width:5px;height:1px;background:#5a5a5e"></div>
<div style="left:1840px;top:925px;width:5px;height:1px;background:#5a5a5e"></div>
<div style="left:1840px;top:948px;width:5px;height:1px;background:#5a5a5e"></div>
<div style="left:1840px;top:970px;width:5px;height:1px;background:#5a5a5e"></div>
<div style="left:1840px;top:993px;width:5px;height:1px;background:#5a5a5e"></div>
<div style="left:1840px;top:1012px;width:5px;height:1px;background:#5a5a5e"></div>
<div style="left:1840px;top:1029px;width:5px;height:1px;background:#5a5a5e"></div>
<div style="left:1840px;top:1044px;width:5px;height:1px;background:#5a5a5e"></div>
<div style="left:1840px;top:1057px;width:5px;height:1px;background:#5a5a5e"></div>
<div style="left:1840px;top:1066px;width:5px;height:1px;background:#5a5a5e"></div>
<div style="left:1840px;top:1071px;width:5px;height:1px;background:#5a5a5e"></div>
<div style="left:1840px;top:1076px;width:5px;height:1px;background:#5a5a5e"></div>
<div style="left:1851px;top:903px;width:2px;height:180px;background:#141416"></div>
<svg style="position:absolute;left:1844px;top:938px;" width="16" height="22" viewBox="0 0 16 22"><rect x="0.5" y="0.5" width="15" height="21" rx="2" fill="#c0c0c0" stroke="#5a5a5a"/><rect x="1" y="10" width="14" height="2" fill="#7a7a7a"/><rect x="2" y="3" width="12" height="3" fill="#e0e0e0"/><rect x="2" y="15" width="12" height="3" fill="#a8a8a8"/></svg>
<div style="left:1883px;top:902px;width:12px;height:182px;background:#1c1c1e;border:1px solid #121214;box-sizing:border-box"></div>
<div style="left:1884px;top:967px;width:10px;height:18px;background:#f2e55c"></div>
<div style="left:1884px;top:985px;width:10px;height:98px;background:#1ec81e"></div>
<div class="t" style="left:1906.0px;top:795.5px;width:70px;text-align:center;font-size:12.5px;line-height:15.0px;color:#ececec;font-weight:400;">Snare</div>
<div style="left:1914px;top:821px;width:18px;height:18px;background:#38383c;border-radius:3px"></div>
<div class="t" style="left:1913.0px;top:823.4px;width:20px;text-align:center;font-size:11px;line-height:13.2px;color:#8e8e8e;font-weight:400;">R</div>
<div style="left:1936px;top:821px;width:18px;height:18px;background:#38383c;border-radius:3px"></div>
<div class="t" style="left:1935.0px;top:823.4px;width:20px;text-align:center;font-size:11px;line-height:13.2px;color:#8e8e8e;font-weight:400;">S</div>
<div style="left:1958px;top:821px;width:18px;height:18px;background:#38383c;border-radius:3px"></div>
<div class="t" style="left:1957.0px;top:823.4px;width:20px;text-align:center;font-size:11px;line-height:13.2px;color:#8e8e8e;font-weight:400;">M</div>
<svg style="position:absolute;left:1929.0px;top:853px;" width="24" height="14" viewBox="0 0 24 14"><path d="M1 8 L6 3 L11 8 L17 11 L23 4" fill="none" stroke="#9a9a9a" stroke-width="1.2"/><circle cx="6" cy="3.5" r="2" fill="#28282c" stroke="#9a9a9a"/><circle cx="17" cy="10.5" r="2" fill="#28282c" stroke="#9a9a9a"/></svg>
<div class="t" style="left:1917px;top:878.4px;font-size:11px;line-height:13.2px;color:#e6e6e6;font-weight:400;">0.0</div>
<svg style="position:absolute;left:1955px;top:877px;" width="10" height="14" viewBox="0 0 10 14"><path d="M1 5l4-4 4 4M1 8l4 4 4-4" fill="#555" stroke="#555"/></svg>
<div style="left:1952px;top:893px;width:14px;height:2px;background:#b8b8b8"></div>
<div class="t" style="left:1930.0px;top:895.4px;width:20px;text-align:right;font-size:11px;line-height:13.2px;color:#8a8a8a;font-weight:400;">0</div>
<div style="left:1952px;top:902px;width:2px;height:1px;background:#8a8a8a"></div>
<div class="t" style="left:1930.0px;top:919.0px;width:20px;text-align:right;font-size:11px;line-height:13.2px;color:#8a8a8a;font-weight:400;">5</div>
<div style="left:1952px;top:926px;width:2px;height:1px;background:#8a8a8a"></div>
<div class="t" style="left:1930.0px;top:941.4px;width:20px;text-align:right;font-size:11px;line-height:13.2px;color:#8a8a8a;font-weight:400;">10</div>
<div style="left:1952px;top:948px;width:2px;height:1px;background:#8a8a8a"></div>
<div class="t" style="left:1930.0px;top:963.4px;width:20px;text-align:right;font-size:11px;line-height:13.2px;color:#8a8a8a;font-weight:400;">15</div>
<div style="left:1952px;top:970px;width:2px;height:1px;background:#8a8a8a"></div>
<div class="t" style="left:1930.0px;top:986.0px;width:20px;text-align:right;font-size:11px;line-height:13.2px;color:#8a8a8a;font-weight:400;">20</div>
<div style="left:1952px;top:993px;width:2px;height:1px;background:#8a8a8a"></div>
<div class="t" style="left:1930.0px;top:1022.4px;width:20px;text-align:right;font-size:11px;line-height:13.2px;color:#8a8a8a;font-weight:400;">30</div>
<div style="left:1952px;top:1029px;width:2px;height:1px;background:#8a8a8a"></div>
<div class="t" style="left:1930.0px;top:1050.0px;width:20px;text-align:right;font-size:11px;line-height:13.2px;color:#8a8a8a;font-weight:400;">40</div>
<div style="left:1952px;top:1057px;width:2px;height:1px;background:#8a8a8a"></div>
<div class="t" style="left:1930.0px;top:1064.1px;width:20px;text-align:right;font-size:11px;line-height:13.2px;color:#8a8a8a;font-weight:400;">50</div>
<div style="left:1952px;top:1071px;width:2px;height:1px;background:#8a8a8a"></div>
<div style="left:1913px;top:902px;width:5px;height:1px;background:#5a5a5e"></div>
<div style="left:1913px;top:925px;width:5px;height:1px;background:#5a5a5e"></div>
<div style="left:1913px;top:948px;width:5px;height:1px;background:#5a5a5e"></div>
<div style="left:1913px;top:970px;width:5px;height:1px;background:#5a5a5e"></div>
<div style="left:1913px;top:993px;width:5px;height:1px;background:#5a5a5e"></div>
<div style="left:1913px;top:1012px;width:5px;height:1px;background:#5a5a5e"></div>
<div style="left:1913px;top:1029px;width:5px;height:1px;background:#5a5a5e"></div>
<div style="left:1913px;top:1044px;width:5px;height:1px;background:#5a5a5e"></div>
<div style="left:1913px;top:1057px;width:5px;height:1px;background:#5a5a5e"></div>
<div style="left:1913px;top:1066px;width:5px;height:1px;background:#5a5a5e"></div>
<div style="left:1913px;top:1071px;width:5px;height:1px;background:#5a5a5e"></div>
<div style="left:1913px;top:1076px;width:5px;height:1px;background:#5a5a5e"></div>
<div style="left:1924px;top:903px;width:2px;height:180px;background:#141416"></div>
<svg style="position:absolute;left:1917px;top:938px;" width="16" height="22" viewBox="0 0 16 22"><rect x="0.5" y="0.5" width="15" height="21" rx="2" fill="#c0c0c0" stroke="#5a5a5a"/><rect x="1" y="10" width="14" height="2" fill="#7a7a7a"/><rect x="2" y="3" width="12" height="3" fill="#e0e0e0"/><rect x="2" y="15" width="12" height="3" fill="#a8a8a8"/></svg>
<div style="left:1956px;top:902px;width:12px;height:182px;background:#1c1c1e;border:1px solid #121214;box-sizing:border-box"></div>
<div style="left:1957px;top:957px;width:10px;height:28px;background:#f2e55c"></div>
<div style="left:1957px;top:985px;width:10px;height:98px;background:#1ec81e"></div>
<div class="t" style="left:1977.0px;top:795.5px;width:70px;text-align:center;font-size:12.5px;line-height:15.0px;color:#ececec;font-weight:400;">Bus 1</div>
<div style="left:2003.0px;top:821px;width:18px;height:18px;background:#38383c;border-radius:3px"></div>
<div class="t" style="left:2002.0px;top:823.4px;width:20px;text-align:center;font-size:11px;line-height:13.2px;color:#8e8e8e;font-weight:400;">M</div>
<svg style="position:absolute;left:2000.0px;top:853px;" width="24" height="14" viewBox="0 0 24 14"><path d="M1 8 L6 3 L11 8 L17 11 L23 4" fill="none" stroke="#9a9a9a" stroke-width="1.2"/><circle cx="6" cy="3.5" r="2" fill="#28282c" stroke="#9a9a9a"/><circle cx="17" cy="10.5" r="2" fill="#28282c" stroke="#9a9a9a"/></svg>
<div class="t" style="left:1987px;top:878.4px;font-size:11px;line-height:13.2px;color:#e6e6e6;font-weight:400;">-6.2</div>
<svg style="position:absolute;left:2025px;top:877px;" width="10" height="14" viewBox="0 0 10 14"><path d="M1 5l4-4 4 4M1 8l4 4 4-4" fill="#555" stroke="#555"/></svg>
<div style="left:2022px;top:893px;width:14px;height:2px;background:#b8b8b8"></div>
<div class="t" style="left:2000.0px;top:895.4px;width:20px;text-align:right;font-size:11px;line-height:13.2px;color:#8a8a8a;font-weight:400;">0</div>
<div style="left:2022px;top:902px;width:2px;height:1px;background:#8a8a8a"></div>
<div class="t" style="left:2000.0px;top:919.0px;width:20px;text-align:right;font-size:11px;line-height:13.2px;color:#8a8a8a;font-weight:400;">5</div>
<div style="left:2022px;top:926px;width:2px;height:1px;background:#8a8a8a"></div>
<div class="t" style="left:2000.0px;top:941.4px;width:20px;text-align:right;font-size:11px;line-height:13.2px;color:#8a8a8a;font-weight:400;">10</div>
<div style="left:2022px;top:948px;width:2px;height:1px;background:#8a8a8a"></div>
<div class="t" style="left:2000.0px;top:963.4px;width:20px;text-align:right;font-size:11px;line-height:13.2px;color:#8a8a8a;font-weight:400;">15</div>
<div style="left:2022px;top:970px;width:2px;height:1px;background:#8a8a8a"></div>
<div class="t" style="left:2000.0px;top:986.0px;width:20px;text-align:right;font-size:11px;line-height:13.2px;color:#8a8a8a;font-weight:400;">20</div>
<div style="left:2022px;top:993px;width:2px;height:1px;background:#8a8a8a"></div>
<div class="t" style="left:2000.0px;top:1022.4px;width:20px;text-align:right;font-size:11px;line-height:13.2px;color:#8a8a8a;font-weight:400;">30</div>
<div style="left:2022px;top:1029px;width:2px;height:1px;background:#8a8a8a"></div>
<div class="t" style="left:2000.0px;top:1050.0px;width:20px;text-align:right;font-size:11px;line-height:13.2px;color:#8a8a8a;font-weight:400;">40</div>
<div style="left:2022px;top:1057px;width:2px;height:1px;background:#8a8a8a"></div>
<div class="t" style="left:2000.0px;top:1064.1px;width:20px;text-align:right;font-size:11px;line-height:13.2px;color:#8a8a8a;font-weight:400;">50</div>
<div style="left:2022px;top:1071px;width:2px;height:1px;background:#8a8a8a"></div>
<div style="left:1983px;top:902px;width:5px;height:1px;background:#5a5a5e"></div>
<div style="left:1983px;top:925px;width:5px;height:1px;background:#5a5a5e"></div>
<div style="left:1983px;top:948px;width:5px;height:1px;background:#5a5a5e"></div>
<div style="left:1983px;top:970px;width:5px;height:1px;background:#5a5a5e"></div>
<div style="left:1983px;top:993px;width:5px;height:1px;background:#5a5a5e"></div>
<div style="left:1983px;top:1012px;width:5px;height:1px;background:#5a5a5e"></div>
<div style="left:1983px;top:1029px;width:5px;height:1px;background:#5a5a5e"></div>
<div style="left:1983px;top:1044px;width:5px;height:1px;background:#5a5a5e"></div>
<div style="left:1983px;top:1057px;width:5px;height:1px;background:#5a5a5e"></div>
<div style="left:1983px;top:1066px;width:5px;height:1px;background:#5a5a5e"></div>
<div style="left:1983px;top:1071px;width:5px;height:1px;background:#5a5a5e"></div>
<div style="left:1983px;top:1076px;width:5px;height:1px;background:#5a5a5e"></div>
<div style="left:1994px;top:903px;width:2px;height:180px;background:#141416"></div>
<svg style="position:absolute;left:1987px;top:968.6px;" width="16" height="22" viewBox="0 0 16 22"><rect x="0.5" y="0.5" width="15" height="21" rx="2" fill="#c0c0c0" stroke="#5a5a5a"/><rect x="1" y="10" width="14" height="2" fill="#7a7a7a"/><rect x="2" y="3" width="12" height="3" fill="#e0e0e0"/><rect x="2" y="15" width="12" height="3" fill="#a8a8a8"/></svg>
<div style="left:2023px;top:902px;width:22px;height:182px;background:#1c1c1e;border:1px solid #121214;box-sizing:border-box"></div>
<div style="left:2024px;top:926px;width:10px;height:23px;background:#f2e55c"></div>
<div style="left:2024px;top:949px;width:10px;height:134px;background:#1ec81e"></div>
<div style="left:2034px;top:926px;width:10px;height:23px;background:#f2e55c"></div>
<div style="left:2034px;top:949px;width:10px;height:134px;background:#1ec81e"></div>
<div style="left:2033px;top:902px;width:1px;height:182px;background:#121214"></div>
<div style="left:1833px;top:1088px;width:215px;height:12px;background:#232326"></div>
<div style="left:1844px;top:1090px;width:33px;height:9px;background:#5c6065;border-radius:4.5px"></div>
<div style="left:0px;top:1100px;width:2048px;height:52px;background:#1c1c1f"></div>
<svg style="position:absolute;left:48px;top:1116px;" width="22" height="22" viewBox="0 0 22 22"><circle cx="11" cy="6" r="5" fill="#f0f0f0"/><circle cx="5.5" cy="15.5" r="5" fill="#f0f0f0"/><circle cx="16.5" cy="15.5" r="5" fill="#f0f0f0"/></svg>
<div class="t" style="left:77.5px;top:1119.8px;font-size:13.6px;line-height:16.3px;color:#f0f0f0;font-weight:700;">DaVinci Resolve Studio 21</div>
<div style="left:1242px;top:1101px;width:108px;height:51px;background:#0c0c0d"></div>
<div style="left:1243px;top:1149px;width:106px;height:3px;background:#e2493a"></div>
<div class="t" style="left:593.0px;top:1131.0px;width:100px;text-align:center;font-size:13.4px;line-height:16.1px;color:#9a9a9a;font-weight:400;">Media</div>
<div class="t" style="left:701.0px;top:1131.0px;width:100px;text-align:center;font-size:13.4px;line-height:16.1px;color:#9a9a9a;font-weight:400;">Photo</div>
<div class="t" style="left:810.0px;top:1131.0px;width:100px;text-align:center;font-size:13.4px;line-height:16.1px;color:#9a9a9a;font-weight:400;">Cut</div>
<div class="t" style="left:919.0px;top:1131.0px;width:100px;text-align:center;font-size:13.4px;line-height:16.1px;color:#9a9a9a;font-weight:400;">Edit</div>
<div class="t" style="left:1028.0px;top:1131.0px;width:100px;text-align:center;font-size:13.4px;line-height:16.1px;color:#9a9a9a;font-weight:400;">Fusion</div>
<div class="t" style="left:1137.0px;top:1131.0px;width:100px;text-align:center;font-size:13.4px;line-height:16.1px;color:#9a9a9a;font-weight:400;">Color</div>
<div class="t" style="left:1246.0px;top:1131.0px;width:100px;text-align:center;font-size:13.4px;line-height:16.1px;color:#f4f4f4;font-weight:700;">Fairlight</div>
<div class="t" style="left:1355.0px;top:1131.0px;width:100px;text-align:center;font-size:13.4px;line-height:16.1px;color:#9a9a9a;font-weight:400;">Deliver</div>
<svg style="position:absolute;left:633px;top:1107px;" width="22" height="18" viewBox="0 0 22 18"><rect x="2" y="4" width="18" height="13" rx="1.5" fill="none" stroke="#8a8a8a" stroke-width="1.4"/><path d="M4 2h14" stroke="#8a8a8a" stroke-width="1.2"/><path d="M5 15l4-4 3 2 3-3 4 5" fill="none" stroke="#8a8a8a" stroke-width="1.2"/><circle cx="8" cy="8" r="1.3" fill="#8a8a8a"/></svg>
<svg style="position:absolute;left:739px;top:1105px;" width="26" height="20" viewBox="0 0 26 20"><rect x="1" y="6" width="20" height="13" rx="3" fill="none" stroke="#8a8a8a" stroke-width="1.4"/><circle cx="11" cy="12.5" r="3.8" fill="none" stroke="#8a8a8a" stroke-width="1.4"/><path d="M21 1l1 2M24 4l-2 1M19 2v2" stroke="#8a8a8a" stroke-width="1"/></svg>
<svg style="position:absolute;left:848px;top:1106px;" width="26" height="18" viewBox="0 0 26 18"><path d="M3 3h18l-2 12H1z" fill="none" stroke="#8a8a8a" stroke-width="1.4"/><path d="M8 3l-2 12M15 3l-2 12" stroke="#8a8a8a" stroke-width="1.2"/><path d="M0 7h5M0 10h4" stroke="#8a8a8a" stroke-width="1"/></svg>
<svg style="position:absolute;left:958px;top:1106px;" width="24" height="20" viewBox="0 0 24 20"><path d="M12 1v18M2 5h8M14 5h8M4 10h6M14 10h8M2 15h8M14 15h6" stroke="#8a8a8a" stroke-width="2"/></svg>
<svg style="position:absolute;left:1067px;top:1105px;" width="24" height="22" viewBox="0 0 24 22"><path d="M3 20L15 7" stroke="#8a8a8a" stroke-width="3" stroke-linecap="round"/><path d="M18 2v6M15 5h6" stroke="#8a8a8a" stroke-width="1.2"/><path d="M3 8l4 2-4 2z" fill="#8a8a8a"/></svg>
<svg style="position:absolute;left:1175px;top:1105px;" width="24" height="22" viewBox="0 0 24 22"><circle cx="20.0" cy="11.0" r="1.8" fill="#8a8a8a"/><circle cx="17.7" cy="16.7" r="1.8" fill="#8a8a8a"/><circle cx="12.0" cy="19.0" r="1.8" fill="#8a8a8a"/><circle cx="6.3" cy="16.7" r="1.8" fill="#8a8a8a"/><circle cx="4.0" cy="11.0" r="1.8" fill="#8a8a8a"/><circle cx="6.3" cy="5.3" r="1.8" fill="#8a8a8a"/><circle cx="12.0" cy="3.0" r="1.8" fill="#8a8a8a"/><circle cx="17.7" cy="5.3" r="1.8" fill="#8a8a8a"/><circle cx="12" cy="11" r="2" fill="#8a8a8a"/></svg>
<svg style="position:absolute;left:1288px;top:1110px;" width="16" height="16" viewBox="0 0 16 16"><path d="M5.5 3.5l9-2.5v10" fill="none" stroke="#7ad8a0" stroke-width="1.8"/><path d="M5.5 3.5v9.5" stroke="#7ad8a0" stroke-width="1.8"/><path d="M5.5 3.5l9-2.5v2.5l-9 2.5z" fill="#7ad8a0"/><ellipse cx="3.5" cy="13" rx="2.8" ry="2.2" fill="#5ac8b0"/><ellipse cx="12.5" cy="11" rx="2.8" ry="2.2" fill="#5ac8b0"/></svg>
<svg style="position:absolute;left:1393px;top:1105px;" width="24" height="22" viewBox="0 0 24 22"><path d="M8 16 Q6 6 20 2 Q18 14 10 18z" fill="none" stroke="#8a8a8a" stroke-width="1.4"/><circle cx="14" cy="8" r="2" fill="none" stroke="#8a8a8a" stroke-width="1.2"/><path d="M7 17l-4 4M5 13l-3 1M11 19l-1 3" stroke="#8a8a8a" stroke-width="1.2"/></svg>
<svg style="position:absolute;left:1789px;top:1116px;" width="26" height="22" viewBox="0 0 26 22"><path d="M6 17a5 5 0 0 1 0-10 a7 7 0 0 1 13-1 a5 5 0 0 1 1 11z" fill="none" stroke="#3878c8" stroke-width="1.6"/><path d="M10 11a3 3 0 0 1 5-1M15 13a3 3 0 0 1-5 1" fill="none" stroke="#8e8e8e" stroke-width="1.2"/><rect x="1" y="20" width="24" height="2" fill="#555"/></svg>
<svg style="position:absolute;left:1844px;top:1117px;" width="22" height="18" viewBox="0 0 22 18"><path d="M11 1C5 1 1 4.5 1 8.5c0 2.5 1.5 4.5 4 6l-1 3 4-2c1 .3 2 .4 3 .4 6 0 10-3.5 10-7.5S17 1 11 1z" fill="#8e8e8e"/><circle cx="7" cy="8.5" r="1.2" fill="#1e1e20"/><circle cx="11" cy="8.5" r="1.2" fill="#1e1e20"/><circle cx="15" cy="8.5" r="1.2" fill="#1e1e20"/></svg>
<svg style="position:absolute;left:1895px;top:1119px;" width="22" height="17" viewBox="0 0 22 17"><circle cx="14" cy="4.5" r="3.8" fill="#8e8e8e"/><path d="M7 16c0-5 3-7 7-7s7 2 7 7z" fill="#8e8e8e"/><circle cx="5" cy="7" r="2.6" fill="#8e8e8e"/><path d="M0.5 16c0-3 2-5 4.5-5 1 0 1.5.3 2 .6-1 1.2-1.5 2.7-1.5 4.4z" fill="#8e8e8e"/></svg>
<svg style="position:absolute;left:1948px;top:1117px;" width="22" height="20" viewBox="0 0 22 20"><path d="M11 1L1 10h3v9h5v-6h4v6h5v-9h3z" fill="#8e8e8e"/></svg>
<svg style="position:absolute;left:2001px;top:1117px;" width="20" height="20" viewBox="0 0 20 20"><rect x="8.5" y="0.5" width="3" height="5" fill="#8e8e8e" transform="rotate(0 10 10)"/><rect x="8.5" y="0.5" width="3" height="5" fill="#8e8e8e" transform="rotate(45 10 10)"/><rect x="8.5" y="0.5" width="3" height="5" fill="#8e8e8e" transform="rotate(90 10 10)"/><rect x="8.5" y="0.5" width="3" height="5" fill="#8e8e8e" transform="rotate(135 10 10)"/><rect x="8.5" y="0.5" width="3" height="5" fill="#8e8e8e" transform="rotate(180 10 10)"/><rect x="8.5" y="0.5" width="3" height="5" fill="#8e8e8e" transform="rotate(225 10 10)"/><rect x="8.5" y="0.5" width="3" height="5" fill="#8e8e8e" transform="rotate(270 10 10)"/><rect x="8.5" y="0.5" width="3" height="5" fill="#8e8e8e" transform="rotate(315 10 10)"/><circle cx="10" cy="10" r="6.5" fill="#8e8e8e"/><circle cx="10" cy="10" r="3" fill="#1c1c1f"/></svg>
<div style="left:308px;top:166px;width:803px;height:817px;background:#111113;box-shadow:0 0 8px rgba(0,0,0,0.5)"></div>
<div style="left:309px;top:167px;width:801px;height:815px;background:#28282c"></div>
<div style="left:309px;top:167px;width:801px;height:30px;background:#242427"></div>
<div style="left:309px;top:197px;width:801px;height:2px;background:#161618"></div>
<div style="left:309px;top:199px;width:801px;height:29px;background:#242427"></div>
<div style="left:309px;top:228px;width:801px;height:2px;background:#161618"></div>
<div style="left:1030px;top:167px;width:1px;height:30px;background:#161618"></div>
<div style="left:1070px;top:167px;width:1px;height:30px;background:#161618"></div>
<svg style="position:absolute;left:320px;top:176px;" width="12" height="12" viewBox="0 0 12 12"><path d="M1 1l10 10M11 1L1 11" stroke="#b8b8b8" stroke-width="1.4"/></svg>
<div class="t" style="left:564.5px;top:173.7px;width:200px;text-align:center;font-size:13.8px;line-height:16.6px;color:#f0f0f0;font-weight:700;">Tom 1 - Slot 2</div>
<svg style="position:absolute;left:1042px;top:175px;" width="16" height="16" viewBox="0 0 16 16"><path d="M3.5 10.5 A6 6 0 1 0 3 6" fill="none" stroke="#8a8a8a" stroke-width="1.3"/><path d="M1 3l2 3.5 3.5-2" fill="none" stroke="#8a8a8a" stroke-width="1.2"/><path d="M9 5v6M6 8h6" stroke="#8a8a8a" stroke-width="1.3"/></svg>
<div style="left:1081.0px;top:180px;width:5px;height:5px;background:#9a9a9a;border-radius:50%"></div>
<div style="left:1088.5px;top:180px;width:5px;height:5px;background:#9a9a9a;border-radius:50%"></div>
<div style="left:1096.0px;top:180px;width:5px;height:5px;background:#9a9a9a;border-radius:50%"></div>
<div style="left:320px;top:203px;width:21px;height:21px;border:1px solid #48484c;border-radius:2px;box-sizing:border-box"></div>
<svg style="position:absolute;left:324px;top:207px;" width="13" height="13" viewBox="0 0 13 13"><path d="M6.5 1v11M1 6.5h11" stroke="#b0b0b0" stroke-width="1.3"/></svg>
<div style="left:347px;top:203px;width:194px;height:21px;background:#1d1d1f;border-radius:2px"></div>
<div class="t" style="left:358px;top:205.7px;font-size:13px;line-height:15.6px;color:#a8a8a8;font-weight:400;">Default*</div>
<svg style="position:absolute;left:520px;top:209px;" width="12" height="8" viewBox="0 0 12 8"><path d="M1 1l5 5 5-5" fill="none" stroke="#a8a8a8" stroke-width="1.4"/></svg>
<div style="left:541px;top:203px;width:1px;height:21px;background:#161618"></div>
<div style="left:542px;top:203px;width:42px;height:21px;background:#1d1d1f;border-radius:2px"></div>
<div style="left:563px;top:203px;width:1px;height:21px;background:#161618"></div>
<svg style="position:absolute;left:548px;top:208px;" width="8" height="11" viewBox="0 0 8 11"><path d="M6 1L1.5 5.5 6 10" fill="none" stroke="#a8a8a8" stroke-width="1.3"/></svg>
<svg style="position:absolute;left:570px;top:208px;" width="8" height="11" viewBox="0 0 8 11"><path d="M2 1l4.5 4.5L2 10" fill="none" stroke="#a8a8a8" stroke-width="1.3"/></svg>
<div style="left:601px;top:203px;width:64px;height:21px;border:1px solid #3e3e42;border-radius:2px;box-sizing:border-box;background:#222225"></div>
<div style="left:622px;top:203px;width:1px;height:21px;background:#3e3e42"></div>
<div style="left:643px;top:203px;width:1px;height:21px;background:#3e3e42"></div>
<div class="t" style="left:601.5px;top:206.0px;width:20px;text-align:center;font-size:12.5px;line-height:15.0px;color:#e8503c;font-weight:400;">A</div>
<svg style="position:absolute;left:627px;top:208px;" width="12" height="10" viewBox="0 0 12 10"><path d="M1 5h9M6 1l4 4-4 4" fill="none" stroke="#a8a8a8" stroke-width="1.2"/></svg>
<div class="t" style="left:644.0px;top:206.0px;width:20px;text-align:center;font-size:12.5px;line-height:15.0px;color:#b8b8b8;font-weight:400;">B</div>
<svg style="position:absolute;left:1073px;top:205px;" width="22" height="16" viewBox="0 0 22 16"><path d="M1 9l5-3M8.5 5.5L15 11.5M17.5 11l4-3" stroke="#e2493a" stroke-width="1.4"/><circle cx="7" cy="5" r="2.2" fill="none" stroke="#e2493a" stroke-width="1.3"/><circle cx="16" cy="12" r="2.2" fill="none" stroke="#e2493a" stroke-width="1.3"/></svg>
<div style="left:332px;top:248px;width:25px;height:14px;background:#1a1a1c;border-radius:7px"></div>
<div style="left:344.5px;top:250px;width:10px;height:10px;background:#ea4a3c;border-radius:50%"></div>
<div class="t" style="left:367.5px;top:246.8px;font-size:12.9px;line-height:15.5px;color:#ececec;font-weight:400;">Fairlight EQ</div>
<div class="t" style="left:321.0px;top:280.6px;width:60px;text-align:center;font-size:12.3px;line-height:14.8px;color:#e6e6e6;font-weight:400;">Input</div>
<div class="t" style="left:1042.5px;top:280.6px;width:60px;text-align:center;font-size:12.3px;line-height:14.8px;color:#e6e6e6;font-weight:400;">Output</div>
<div class="t" style="left:311.5px;top:316.7px;width:30px;text-align:right;font-size:10.5px;line-height:12.6px;color:#8a8a8a;font-weight:400;">0</div>
<div style="left:345px;top:323px;width:2px;height:1px;background:#8a8a8a"></div>
<div class="t" style="left:1031.0px;top:316.7px;width:30px;text-align:right;font-size:10.5px;line-height:12.6px;color:#8a8a8a;font-weight:400;">0</div>
<div style="left:1065px;top:323px;width:2px;height:1px;background:#8a8a8a"></div>
<div class="t" style="left:311.5px;top:347.7px;width:30px;text-align:right;font-size:10.5px;line-height:12.6px;color:#8a8a8a;font-weight:400;">-5</div>
<div style="left:345px;top:354px;width:2px;height:1px;background:#8a8a8a"></div>
<div class="t" style="left:1031.0px;top:347.7px;width:30px;text-align:right;font-size:10.5px;line-height:12.6px;color:#8a8a8a;font-weight:400;">-5</div>
<div style="left:1065px;top:354px;width:2px;height:1px;background:#8a8a8a"></div>
<div class="t" style="left:311.5px;top:378.7px;width:30px;text-align:right;font-size:10.5px;line-height:12.6px;color:#8a8a8a;font-weight:400;">-10</div>
<div style="left:345px;top:385px;width:2px;height:1px;background:#8a8a8a"></div>
<div class="t" style="left:1031.0px;top:378.7px;width:30px;text-align:right;font-size:10.5px;line-height:12.6px;color:#8a8a8a;font-weight:400;">-10</div>
<div style="left:1065px;top:385px;width:2px;height:1px;background:#8a8a8a"></div>
<div class="t" style="left:311.5px;top:408.7px;width:30px;text-align:right;font-size:10.5px;line-height:12.6px;color:#8a8a8a;font-weight:400;">-15</div>
<div style="left:345px;top:415px;width:2px;height:1px;background:#8a8a8a"></div>
<div class="t" style="left:1031.0px;top:408.7px;width:30px;text-align:right;font-size:10.5px;line-height:12.6px;color:#8a8a8a;font-weight:400;">-15</div>
<div style="left:1065px;top:415px;width:2px;height:1px;background:#8a8a8a"></div>
<div class="t" style="left:311.5px;top:438.7px;width:30px;text-align:right;font-size:10.5px;line-height:12.6px;color:#8a8a8a;font-weight:400;">-20</div>
<div style="left:345px;top:445px;width:2px;height:1px;background:#8a8a8a"></div>
<div class="t" style="left:1031.0px;top:438.7px;width:30px;text-align:right;font-size:10.5px;line-height:12.6px;color:#8a8a8a;font-weight:400;">-20</div>
<div style="left:1065px;top:445px;width:2px;height:1px;background:#8a8a8a"></div>
<div class="t" style="left:311.5px;top:488.3px;width:30px;text-align:right;font-size:10.5px;line-height:12.6px;color:#8a8a8a;font-weight:400;">-30</div>
<div style="left:345px;top:495px;width:2px;height:1px;background:#8a8a8a"></div>
<div class="t" style="left:1031.0px;top:488.3px;width:30px;text-align:right;font-size:10.5px;line-height:12.6px;color:#8a8a8a;font-weight:400;">-30</div>
<div style="left:1065px;top:495px;width:2px;height:1px;background:#8a8a8a"></div>
<div class="t" style="left:311.5px;top:524.7px;width:30px;text-align:right;font-size:10.5px;line-height:12.6px;color:#8a8a8a;font-weight:400;">-40</div>
<div style="left:345px;top:531px;width:2px;height:1px;background:#8a8a8a"></div>
<div class="t" style="left:1031.0px;top:524.7px;width:30px;text-align:right;font-size:10.5px;line-height:12.6px;color:#8a8a8a;font-weight:400;">-40</div>
<div style="left:1065px;top:531px;width:2px;height:1px;background:#8a8a8a"></div>
<div class="t" style="left:311.5px;top:542.7px;width:30px;text-align:right;font-size:10.5px;line-height:12.6px;color:#8a8a8a;font-weight:400;">-50</div>
<div style="left:345px;top:549px;width:2px;height:1px;background:#8a8a8a"></div>
<div class="t" style="left:1031.0px;top:542.7px;width:30px;text-align:right;font-size:10.5px;line-height:12.6px;color:#8a8a8a;font-weight:400;">-50</div>
<div style="left:1065px;top:549px;width:2px;height:1px;background:#8a8a8a"></div>
<div style="left:350px;top:323px;width:12px;height:245px;background:#1c1c1e;border:1px solid #101012;box-sizing:border-box"></div>
<div style="left:351px;top:445px;width:10px;height:122px;background:#1ec81e"></div>
<div style="left:351px;top:411px;width:10px;height:2px;background:#d8c870"></div>
<div style="left:1070px;top:323px;width:12px;height:245px;background:#1c1c1e;border:1px solid #101012;box-sizing:border-box"></div>
<div style="left:1071px;top:440px;width:10px;height:127px;background:#1ec81e"></div>
<div style="left:1071px;top:408px;width:10px;height:2px;background:#d8c870"></div>
<div style="left:400px;top:283px;width:621px;height:285px;background:#222126;border:1.5px solid #141418;box-sizing:border-box"></div>
<svg style="position:absolute;left:400px;top:283px;" width="621" height="285" viewBox="0 0 621 285"><path d="M107.4 33.3V251.5" stroke="#38373d" stroke-width="1"/><path d="M163.0 33.3V251.5" stroke="#38373d" stroke-width="1"/><path d="M219.5 33.3V251.5" stroke="#38373d" stroke-width="1"/><path d="M275.0 33.3V251.5" stroke="#38373d" stroke-width="1"/><path d="M331.6 33.3V251.5" stroke="#38373d" stroke-width="1"/><path d="M387.3 33.3V251.5" stroke="#38373d" stroke-width="1"/><path d="M443.3 33.3V251.5" stroke="#38373d" stroke-width="1"/><path d="M499.4 33.3V251.5" stroke="#38373d" stroke-width="1"/><path d="M555.4 33.3V251.5" stroke="#38373d" stroke-width="1"/><path d="M33.5 87.3H587.3" stroke="#38373d" stroke-width="1"/><path d="M33.5 142.5H587.3" stroke="#38373d" stroke-width="1"/><path d="M33.5 196.8H587.3" stroke="#38373d" stroke-width="1"/><rect x="33.5" y="33.3" width="553.8" height="218.2" fill="none" stroke="#4a4a50" stroke-width="1"/><path d="M33.7 239.8 C36.8 236.6 45.8 227.5 52.0 220.7 C58.2 213.9 64.9 205.0 71.0 198.8 C77.1 192.6 82.6 187.8 88.6 183.4 C94.6 179.0 100.8 175.9 106.9 172.4 C113.0 168.9 118.5 165.4 125.2 162.2 C131.9 159.0 139.9 155.7 147.2 153.4 C154.5 151.1 161.9 149.5 169.2 148.2 C176.5 146.9 182.8 145.9 191.1 145.3 C199.4 144.7 210.5 144.5 219.0 144.6 C227.5 144.7 234.8 145.0 242.4 146.0 C250.0 147.0 257.6 149.0 264.4 150.4 C271.2 151.8 279.0 153.4 283.4 154.1 C287.8 154.8 288.6 155.0 290.7 154.8 C292.8 154.6 292.4 154.1 295.9 153.1 C299.4 152.1 305.6 150.1 312.0 149.0 C318.4 147.9 326.7 146.8 334.0 146.3 C341.3 145.8 348.7 145.6 356.0 146.0 C363.3 146.4 370.6 147.5 377.9 149.0 C385.2 150.5 393.8 153.2 399.9 154.8 C406.0 156.4 411.0 157.6 414.5 158.5 C418.0 159.4 418.3 160.4 420.8 160.2 C423.2 159.9 424.2 158.8 429.2 157.0 C434.2 155.2 443.8 151.5 451.1 149.7 C458.4 147.9 465.0 146.7 473.1 146.0 C481.2 145.3 491.5 145.2 499.5 145.3 C507.5 145.4 514.8 145.7 521.4 146.8 C528.0 147.9 532.4 149.9 539.0 151.9 C545.6 153.8 554.9 156.8 561.0 158.5 C567.1 160.2 571.3 161.4 575.6 162.2 C579.9 163.0 585.1 163.1 587.0 163.3 L587.3 142.5 L33.5 142.5 Z" fill="#2a7a90" fill-opacity="0.42"/><path d="M33.5 142.5H587.3" stroke="#3a6a78" stroke-width="1"/><path d="M33.7 239.8 C36.8 236.6 45.8 227.5 52.0 220.7 C58.2 213.9 64.9 205.0 71.0 198.8 C77.1 192.6 82.6 187.8 88.6 183.4 C94.6 179.0 100.8 175.9 106.9 172.4 C113.0 168.9 118.5 165.4 125.2 162.2 C131.9 159.0 139.9 155.7 147.2 153.4 C154.5 151.1 161.9 149.5 169.2 148.2 C176.5 146.9 182.8 145.9 191.1 145.3 C199.4 144.7 210.5 144.5 219.0 144.6 C227.5 144.7 234.8 145.0 242.4 146.0 C250.0 147.0 257.6 149.0 264.4 150.4 C271.2 151.8 279.0 153.4 283.4 154.1 C287.8 154.8 288.6 155.0 290.7 154.8 C292.8 154.6 292.4 154.1 295.9 153.1 C299.4 152.1 305.6 150.1 312.0 149.0 C318.4 147.9 326.7 146.8 334.0 146.3 C341.3 145.8 348.7 145.6 356.0 146.0 C363.3 146.4 370.6 147.5 377.9 149.0 C385.2 150.5 393.8 153.2 399.9 154.8 C406.0 156.4 411.0 157.6 414.5 158.5 C418.0 159.4 418.3 160.4 420.8 160.2 C423.2 159.9 424.2 158.8 429.2 157.0 C434.2 155.2 443.8 151.5 451.1 149.7 C458.4 147.9 465.0 146.7 473.1 146.0 C481.2 145.3 491.5 145.2 499.5 145.3 C507.5 145.4 514.8 145.7 521.4 146.8 C528.0 147.9 532.4 149.9 539.0 151.9 C545.6 153.8 554.9 156.8 561.0 158.5 C567.1 160.2 571.3 161.4 575.6 162.2 C579.9 163.0 585.1 163.1 587.0 163.3" fill="none" stroke="#3ec0dc" stroke-width="1.8"/><circle cx="97.4" cy="215.6" r="6.6" fill="#222126" stroke="#3ec0dc" stroke-width="1.6"/><text x="97.4" y="219.2" text-anchor="middle" font-family="Liberation Sans" font-weight="700" font-size="9.5" fill="#f0f0f0">1</text><circle cx="147.6" cy="166.5" r="6.6" fill="#222126" stroke="#3ec0dc" stroke-width="1.6"/><text x="147.6" y="170.1" text-anchor="middle" font-family="Liberation Sans" font-weight="700" font-size="9.5" fill="#f0f0f0">2</text><circle cx="290.7" cy="154.8" r="6.6" fill="#222126" stroke="#3ec0dc" stroke-width="1.6"/><text x="290.7" y="158.4" text-anchor="middle" font-family="Liberation Sans" font-weight="700" font-size="9.5" fill="#f0f0f0">3</text><circle cx="420.8" cy="160.4" r="6.6" fill="#222126" stroke="#3ec0dc" stroke-width="1.6"/><text x="420.8" y="164.0" text-anchor="middle" font-family="Liberation Sans" font-weight="700" font-size="9.5" fill="#f0f0f0">4</text><circle cx="545.6" cy="166.8" r="6.6" fill="#222126" stroke="#3ec0dc" stroke-width="1.6"/><text x="545.6" y="170.4" text-anchor="middle" font-family="Liberation Sans" font-weight="700" font-size="9.5" fill="#f0f0f0">5</text><text x="25.0" y="37.8" text-anchor="end" font-family="Liberation Sans" font-size="10.5" fill="#8a8a8a">20</text><text x="25.0" y="91.8" text-anchor="end" font-family="Liberation Sans" font-size="10.5" fill="#8a8a8a">10</text><text x="25.0" y="147.0" text-anchor="end" font-family="Liberation Sans" font-size="10.5" fill="#8a8a8a">0dB</text><text x="25.0" y="201.3" text-anchor="end" font-family="Liberation Sans" font-size="10.5" fill="#8a8a8a">-10</text><text x="25.0" y="256.0" text-anchor="end" font-family="Liberation Sans" font-size="10.5" fill="#8a8a8a">-20</text><text x="113.0" y="271.0" text-anchor="middle" font-family="Liberation Sans" font-size="10.5" fill="#8a8a8a">50Hz</text><text x="166.0" y="271.0" text-anchor="middle" font-family="Liberation Sans" font-size="10.5" fill="#8a8a8a">100</text><text x="222.0" y="271.0" text-anchor="middle" font-family="Liberation Sans" font-size="10.5" fill="#8a8a8a">200</text><text x="278.0" y="271.0" text-anchor="middle" font-family="Liberation Sans" font-size="10.5" fill="#8a8a8a">400</text><text x="334.0" y="271.0" text-anchor="middle" font-family="Liberation Sans" font-size="10.5" fill="#8a8a8a">800</text><text x="396.0" y="271.0" text-anchor="middle" font-family="Liberation Sans" font-size="10.5" fill="#8a8a8a">1.60k</text><text x="452.0" y="271.0" text-anchor="middle" font-family="Liberation Sans" font-size="10.5" fill="#8a8a8a">3.20k</text><text x="508.0" y="271.0" text-anchor="middle" font-family="Liberation Sans" font-size="10.5" fill="#8a8a8a">6.40k</text><text x="565.0" y="271.0" text-anchor="middle" font-family="Liberation Sans" font-size="10.5" fill="#8a8a8a">12.80k</text></svg>
<div style="left:331px;top:585px;width:754px;height:378px;background:#2a2a2e;border:1px solid #1c1c1e;border-radius:3px;box-sizing:border-box"></div>
<div style="left:457.5px;top:606px;width:1px;height:329px;background:#1a1a1c"></div>
<div style="left:583px;top:606px;width:1px;height:329px;background:#1a1a1c"></div>
<div style="left:708.3px;top:606px;width:1px;height:329px;background:#1a1a1c"></div>
<div style="left:834px;top:606px;width:1px;height:329px;background:#1a1a1c"></div>
<div style="left:959.4px;top:606px;width:1px;height:329px;background:#1a1a1c"></div>
<div style="left:359.0px;top:596.5px;width:69px;height:25px;background:#1a1a1d;border:1px solid #141416;border-radius:12.5px;box-sizing:border-box"></div>
<div class="t" style="left:353.5px;top:600.8px;width:80px;text-align:center;font-size:13.6px;line-height:16.3px;color:#e2584a;font-weight:400;">Band 1</div>
<div style="left:360.5px;top:637px;width:66px;height:23px;background:#19191b;border-radius:11.5px"></div>
<svg style="position:absolute;left:363.5px;top:637px;" width="60" height="23" viewBox="0 0 60 23"><path d="M11 17.5 L19 7.5 Q20.5 6 23 6 H28" fill="none" stroke="#e0e0e0" stroke-width="1.5"/><path d="M40 8.5l4.5 4.5 4.5-4.5" fill="none" stroke="#c8c8c8" stroke-width="1.4"/></svg>
<svg style="position:absolute;left:372px;top:673px;" width="44" height="44" viewBox="0 0 44 44"><defs><radialGradient id="kg393694" cx="0.4" cy="0.35" r="0.7"><stop offset="0" stop-color="#d6d6d6"/><stop offset="0.6" stop-color="#b4b4b4"/><stop offset="1" stop-color="#8e8e8e"/></radialGradient></defs><circle cx="22.0" cy="22.0" r="16.2" fill="#1a1a1c"/><circle cx="22.0" cy="22.0" r="12.8" fill="url(#kg393694)"/><circle cx="8.2" cy="35.8" r="0.9" fill="#6a6a6e"/><circle cx="35.8" cy="35.8" r="0.9" fill="#6a6a6e"/><path d="M10.54 33.46 A16.2 16.2 0 0 1 8.26 30.58" fill="none" stroke="#3ab8e0" stroke-width="2.6"/><path d="M20.30 23.06 L11.40 28.62" stroke="#101010" stroke-width="2.8" stroke-linecap="round"/></svg>
<div class="t" style="left:355.0px;top:714.6px;width:30px;text-align:center;font-size:11px;line-height:13.2px;color:#8a8a8a;font-weight:400;">20</div>
<div class="t" style="left:379.0px;top:714.6px;width:30px;text-align:center;font-size:11px;line-height:13.2px;color:#8a8a8a;font-weight:400;">Hz</div>
<div class="t" style="left:406.5px;top:714.6px;width:30px;text-align:center;font-size:11px;line-height:13.2px;color:#8a8a8a;font-weight:400;">19k</div>
<div style="left:365.5px;top:736px;width:53px;height:23px;background:#1c1c1e;border:1px solid #323236;border-radius:3px;box-sizing:border-box"></div>
<div class="t" style="left:362.0px;top:739.7px;width:60px;text-align:center;font-size:13px;line-height:15.6px;color:#f4f4f4;font-weight:700;">44</div>
<svg style="position:absolute;left:372px;top:771px;" width="44" height="44" viewBox="0 0 44 44"><defs><radialGradient id="kg393792" cx="0.4" cy="0.35" r="0.7"><stop offset="0" stop-color="#d6d6d6"/><stop offset="0.6" stop-color="#b4b4b4"/><stop offset="1" stop-color="#8e8e8e"/></radialGradient></defs><circle cx="22.0" cy="22.0" r="16.2" fill="#1a1a1c"/><circle cx="22.0" cy="22.0" r="12.8" fill="url(#kg393792)"/><circle cx="8.2" cy="35.8" r="0.9" fill="#6a6a6e"/><circle cx="35.8" cy="35.8" r="0.9" fill="#6a6a6e"/><path d="M5.86 23.41 A16.2 16.2 0 0 1 22.00 5.80" fill="none" stroke="#3ab8e0" stroke-width="2.6"/><path d="M20.01 22.17 L9.55 23.09" stroke="#101010" stroke-width="2.8" stroke-linecap="round"/></svg>
<div class="t" style="left:353.5px;top:812.7px;width:30px;text-align:center;font-size:11px;line-height:13.2px;color:#8a8a8a;font-weight:400;">-20</div>
<div class="t" style="left:379.0px;top:812.7px;width:30px;text-align:center;font-size:11px;line-height:13.2px;color:#8a8a8a;font-weight:400;">dB</div>
<div class="t" style="left:406.5px;top:812.7px;width:30px;text-align:center;font-size:11px;line-height:13.2px;color:#8a8a8a;font-weight:400;">+20</div>
<div style="left:365.5px;top:834.5px;width:53px;height:22.5px;background:#1c1c1e;border:1px solid #323236;border-radius:3px;box-sizing:border-box"></div>
<div class="t" style="left:362.0px;top:838.0px;width:60px;text-align:center;font-size:13px;line-height:15.6px;color:#f4f4f4;font-weight:700;">-12.6</div>
<svg style="position:absolute;left:372px;top:869px;" width="44" height="44" viewBox="0 0 44 44"><defs><radialGradient id="kg393891" cx="0.4" cy="0.35" r="0.7"><stop offset="0" stop-color="#d6d6d6"/><stop offset="0.6" stop-color="#b4b4b4"/><stop offset="1" stop-color="#8e8e8e"/></radialGradient></defs><circle cx="22.0" cy="22.0" r="16.2" fill="#1a1a1c"/><circle cx="22.0" cy="22.0" r="12.8" fill="url(#kg393891)"/><circle cx="8.2" cy="35.8" r="0.9" fill="#6a6a6e"/><circle cx="35.8" cy="35.8" r="0.9" fill="#6a6a6e"/><path d="M10.54 33.46 A16.2 16.2 0 0 1 6.28 18.08" fill="none" stroke="#3ab8e0" stroke-width="2.6"/><path d="M20.06 21.52 L9.87 18.98" stroke="#101010" stroke-width="2.8" stroke-linecap="round"/></svg>
<div class="t" style="left:351.0px;top:910.8px;width:30px;text-align:center;font-size:11px;line-height:13.2px;color:#8a8a8a;font-weight:400;">Low</div>
<div class="t" style="left:379.0px;top:910.8px;width:30px;text-align:center;font-size:11px;line-height:13.2px;color:#8a8a8a;font-weight:400;">Q</div>
<div class="t" style="left:402.0px;top:910.8px;width:30px;text-align:center;font-size:11px;line-height:13.2px;color:#8a8a8a;font-weight:400;">Hi</div>
<div style="left:365.5px;top:933px;width:53px;height:22px;background:#1c1c1e;border:1px solid #323236;border-radius:3px;box-sizing:border-box"></div>
<div class="t" style="left:362.0px;top:936.2px;width:60px;text-align:center;font-size:13px;line-height:15.6px;color:#f4f4f4;font-weight:700;">2.3</div>
<div style="left:484.6px;top:596.5px;width:69px;height:25px;background:#1a1a1d;border:1px solid #141416;border-radius:12.5px;box-sizing:border-box"></div>
<div class="t" style="left:479.1px;top:600.8px;width:80px;text-align:center;font-size:13.6px;line-height:16.3px;color:#e2584a;font-weight:400;">Band 2</div>
<div style="left:486.1px;top:637px;width:66px;height:23px;background:#19191b;border-radius:11.5px"></div>
<svg style="position:absolute;left:489.1px;top:637px;" width="60" height="23" viewBox="0 0 60 23"><path d="M8 7h7q5 0 6 5 q-1 5-6 5H8M21 12h8" fill="none" stroke="#e0e0e0" stroke-width="1.5"/><path d="M40 8.5l4.5 4.5 4.5-4.5" fill="none" stroke="#c8c8c8" stroke-width="1.4"/></svg>
<svg style="position:absolute;left:497px;top:673px;" width="44" height="44" viewBox="0 0 44 44"><defs><radialGradient id="kg519694" cx="0.4" cy="0.35" r="0.7"><stop offset="0" stop-color="#d6d6d6"/><stop offset="0.6" stop-color="#b4b4b4"/><stop offset="1" stop-color="#8e8e8e"/></radialGradient></defs><circle cx="22.0" cy="22.0" r="16.2" fill="#1a1a1c"/><circle cx="22.0" cy="22.0" r="12.8" fill="url(#kg519694)"/><circle cx="8.2" cy="35.8" r="0.9" fill="#6a6a6e"/><circle cx="35.8" cy="35.8" r="0.9" fill="#6a6a6e"/><path d="M10.54 33.46 A16.2 16.2 0 0 1 9.41 32.19" fill="none" stroke="#3ab8e0" stroke-width="2.6"/><path d="M20.45 23.26 L12.29 29.87" stroke="#101010" stroke-width="2.8" stroke-linecap="round"/></svg>
<div class="t" style="left:480.6px;top:714.6px;width:30px;text-align:center;font-size:11px;line-height:13.2px;color:#8a8a8a;font-weight:400;">20</div>
<div class="t" style="left:504.6px;top:714.6px;width:30px;text-align:center;font-size:11px;line-height:13.2px;color:#8a8a8a;font-weight:400;">Hz</div>
<div class="t" style="left:532.1px;top:714.6px;width:30px;text-align:center;font-size:11px;line-height:13.2px;color:#8a8a8a;font-weight:400;">19k</div>
<div style="left:491.1px;top:736px;width:53px;height:23px;background:#1c1c1e;border:1px solid #323236;border-radius:3px;box-sizing:border-box"></div>
<div class="t" style="left:487.6px;top:739.7px;width:60px;text-align:center;font-size:13px;line-height:15.6px;color:#f4f4f4;font-weight:700;">81</div>
<svg style="position:absolute;left:497px;top:771px;" width="44" height="44" viewBox="0 0 44 44"><defs><radialGradient id="kg519792" cx="0.4" cy="0.35" r="0.7"><stop offset="0" stop-color="#d6d6d6"/><stop offset="0.6" stop-color="#b4b4b4"/><stop offset="1" stop-color="#8e8e8e"/></radialGradient></defs><circle cx="22.0" cy="22.0" r="16.2" fill="#1a1a1c"/><circle cx="22.0" cy="22.0" r="12.8" fill="url(#kg519792)"/><circle cx="8.2" cy="35.8" r="0.9" fill="#6a6a6e"/><circle cx="35.8" cy="35.8" r="0.9" fill="#6a6a6e"/><path d="M14.65 7.57 A16.2 16.2 0 0 1 22.00 5.80" fill="none" stroke="#3ab8e0" stroke-width="2.6"/><path d="M21.09 20.22 L16.33 10.86" stroke="#101010" stroke-width="2.8" stroke-linecap="round"/></svg>
<div class="t" style="left:479.1px;top:812.7px;width:30px;text-align:center;font-size:11px;line-height:13.2px;color:#8a8a8a;font-weight:400;">-20</div>
<div class="t" style="left:504.6px;top:812.7px;width:30px;text-align:center;font-size:11px;line-height:13.2px;color:#8a8a8a;font-weight:400;">dB</div>
<div class="t" style="left:532.1px;top:812.7px;width:30px;text-align:center;font-size:11px;line-height:13.2px;color:#8a8a8a;font-weight:400;">+20</div>
<div style="left:491.1px;top:834.5px;width:53px;height:22.5px;background:#1c1c1e;border:1px solid #323236;border-radius:3px;box-sizing:border-box"></div>
<div class="t" style="left:487.6px;top:838.0px;width:60px;text-align:center;font-size:13px;line-height:15.6px;color:#f4f4f4;font-weight:700;">-3.9</div>
<svg style="position:absolute;left:497px;top:869px;" width="44" height="44" viewBox="0 0 44 44"><defs><radialGradient id="kg519891" cx="0.4" cy="0.35" r="0.7"><stop offset="0" stop-color="#d6d6d6"/><stop offset="0.6" stop-color="#b4b4b4"/><stop offset="1" stop-color="#8e8e8e"/></radialGradient></defs><circle cx="22.0" cy="22.0" r="16.2" fill="#1a1a1c"/><circle cx="22.0" cy="22.0" r="12.8" fill="url(#kg519891)"/><circle cx="8.2" cy="35.8" r="0.9" fill="#6a6a6e"/><circle cx="35.8" cy="35.8" r="0.9" fill="#6a6a6e"/><path d="M10.54 33.46 A16.2 16.2 0 0 1 6.28 18.08" fill="none" stroke="#3ab8e0" stroke-width="2.6"/><path d="M20.06 21.52 L9.87 18.98" stroke="#101010" stroke-width="2.8" stroke-linecap="round"/></svg>
<div class="t" style="left:476.6px;top:910.8px;width:30px;text-align:center;font-size:11px;line-height:13.2px;color:#8a8a8a;font-weight:400;">Low</div>
<div class="t" style="left:504.6px;top:910.8px;width:30px;text-align:center;font-size:11px;line-height:13.2px;color:#8a8a8a;font-weight:400;">Q</div>
<div class="t" style="left:527.6px;top:910.8px;width:30px;text-align:center;font-size:11px;line-height:13.2px;color:#8a8a8a;font-weight:400;">Hi</div>
<div style="left:491.1px;top:933px;width:53px;height:22px;background:#1c1c1e;border:1px solid #323236;border-radius:3px;box-sizing:border-box"></div>
<div class="t" style="left:487.6px;top:936.2px;width:60px;text-align:center;font-size:13px;line-height:15.6px;color:#f4f4f4;font-weight:700;">2.3</div>
<div style="left:610.2px;top:596.5px;width:69px;height:25px;background:#1a1a1d;border:1px solid #141416;border-radius:12.5px;box-sizing:border-box"></div>
<div class="t" style="left:604.7px;top:600.8px;width:80px;text-align:center;font-size:13.6px;line-height:16.3px;color:#e2584a;font-weight:400;">Band 3</div>
<div style="left:611.7px;top:637px;width:66px;height:23px;background:#19191b;border-radius:11.5px"></div>
<svg style="position:absolute;left:614.7px;top:637px;" width="60" height="23" viewBox="0 0 60 23"><path d="M6 12h7M23 12h7" stroke="#e0e0e0" stroke-width="1.5"/><circle cx="18" cy="12" r="4.8" fill="none" stroke="#e0e0e0" stroke-width="1.5"/><path d="M40 8.5l4.5 4.5 4.5-4.5" fill="none" stroke="#c8c8c8" stroke-width="1.4"/></svg>
<svg style="position:absolute;left:623px;top:673px;" width="44" height="44" viewBox="0 0 44 44"><defs><radialGradient id="kg644694" cx="0.4" cy="0.35" r="0.7"><stop offset="0" stop-color="#d6d6d6"/><stop offset="0.6" stop-color="#b4b4b4"/><stop offset="1" stop-color="#8e8e8e"/></radialGradient></defs><circle cx="22.0" cy="22.0" r="16.2" fill="#1a1a1c"/><circle cx="22.0" cy="22.0" r="12.8" fill="url(#kg644694)"/><circle cx="8.2" cy="35.8" r="0.9" fill="#6a6a6e"/><circle cx="35.8" cy="35.8" r="0.9" fill="#6a6a6e"/><path d="M10.54 33.46 A16.2 16.2 0 0 1 8.41 30.82" fill="none" stroke="#3ab8e0" stroke-width="2.6"/><path d="M20.32 23.09 L11.52 28.81" stroke="#101010" stroke-width="2.8" stroke-linecap="round"/></svg>
<div class="t" style="left:606.2px;top:714.6px;width:30px;text-align:center;font-size:11px;line-height:13.2px;color:#8a8a8a;font-weight:400;">20</div>
<div class="t" style="left:630.2px;top:714.6px;width:30px;text-align:center;font-size:11px;line-height:13.2px;color:#8a8a8a;font-weight:400;">Hz</div>
<div class="t" style="left:657.7px;top:714.6px;width:30px;text-align:center;font-size:11px;line-height:13.2px;color:#8a8a8a;font-weight:400;">19k</div>
<div style="left:616.7px;top:736px;width:53px;height:23px;background:#1c1c1e;border:1px solid #323236;border-radius:3px;box-sizing:border-box"></div>
<div class="t" style="left:613.2px;top:739.7px;width:60px;text-align:center;font-size:13px;line-height:15.6px;color:#f4f4f4;font-weight:700;">480</div>
<svg style="position:absolute;left:623px;top:771px;" width="44" height="44" viewBox="0 0 44 44"><defs><radialGradient id="kg644792" cx="0.4" cy="0.35" r="0.7"><stop offset="0" stop-color="#d6d6d6"/><stop offset="0.6" stop-color="#b4b4b4"/><stop offset="1" stop-color="#8e8e8e"/></radialGradient></defs><circle cx="22.0" cy="22.0" r="16.2" fill="#1a1a1c"/><circle cx="22.0" cy="22.0" r="12.8" fill="url(#kg644792)"/><circle cx="8.2" cy="35.8" r="0.9" fill="#6a6a6e"/><circle cx="35.8" cy="35.8" r="0.9" fill="#6a6a6e"/><path d="M19.19 6.05 A16.2 16.2 0 0 1 22.00 5.80" fill="none" stroke="#3ab8e0" stroke-width="2.6"/><path d="M21.65 20.03 L19.83 9.69" stroke="#101010" stroke-width="2.8" stroke-linecap="round"/></svg>
<div class="t" style="left:604.7px;top:812.7px;width:30px;text-align:center;font-size:11px;line-height:13.2px;color:#8a8a8a;font-weight:400;">-20</div>
<div class="t" style="left:630.2px;top:812.7px;width:30px;text-align:center;font-size:11px;line-height:13.2px;color:#8a8a8a;font-weight:400;">dB</div>
<div class="t" style="left:657.7px;top:812.7px;width:30px;text-align:center;font-size:11px;line-height:13.2px;color:#8a8a8a;font-weight:400;">+20</div>
<div style="left:616.7px;top:834.5px;width:53px;height:22.5px;background:#1c1c1e;border:1px solid #323236;border-radius:3px;box-sizing:border-box"></div>
<div class="t" style="left:613.2px;top:838.0px;width:60px;text-align:center;font-size:13px;line-height:15.6px;color:#f4f4f4;font-weight:700;">-1.7</div>
<svg style="position:absolute;left:623px;top:869px;" width="44" height="44" viewBox="0 0 44 44"><defs><radialGradient id="kg644891" cx="0.4" cy="0.35" r="0.7"><stop offset="0" stop-color="#d6d6d6"/><stop offset="0.6" stop-color="#b4b4b4"/><stop offset="1" stop-color="#8e8e8e"/></radialGradient></defs><circle cx="22.0" cy="22.0" r="16.2" fill="#1a1a1c"/><circle cx="22.0" cy="22.0" r="12.8" fill="url(#kg644891)"/><circle cx="8.2" cy="35.8" r="0.9" fill="#6a6a6e"/><circle cx="35.8" cy="35.8" r="0.9" fill="#6a6a6e"/><path d="M10.54 33.46 A16.2 16.2 0 0 1 6.28 18.08" fill="none" stroke="#3ab8e0" stroke-width="2.6"/><path d="M20.06 21.52 L9.87 18.98" stroke="#101010" stroke-width="2.8" stroke-linecap="round"/></svg>
<div class="t" style="left:602.2px;top:910.8px;width:30px;text-align:center;font-size:11px;line-height:13.2px;color:#8a8a8a;font-weight:400;">Low</div>
<div class="t" style="left:630.2px;top:910.8px;width:30px;text-align:center;font-size:11px;line-height:13.2px;color:#8a8a8a;font-weight:400;">Q</div>
<div class="t" style="left:653.2px;top:910.8px;width:30px;text-align:center;font-size:11px;line-height:13.2px;color:#8a8a8a;font-weight:400;">Hi</div>
<div style="left:616.7px;top:933px;width:53px;height:22px;background:#1c1c1e;border:1px solid #323236;border-radius:3px;box-sizing:border-box"></div>
<div class="t" style="left:613.2px;top:936.2px;width:60px;text-align:center;font-size:13px;line-height:15.6px;color:#f4f4f4;font-weight:700;">2.3</div>
<div style="left:735.8px;top:596.5px;width:69px;height:25px;background:#1a1a1d;border:1px solid #141416;border-radius:12.5px;box-sizing:border-box"></div>
<div class="t" style="left:730.3px;top:600.8px;width:80px;text-align:center;font-size:13.6px;line-height:16.3px;color:#e2584a;font-weight:400;">Band 4</div>
<div style="left:737.3px;top:637px;width:66px;height:23px;background:#19191b;border-radius:11.5px"></div>
<svg style="position:absolute;left:740.3px;top:637px;" width="60" height="23" viewBox="0 0 60 23"><path d="M6 12h7M23 12h7" stroke="#e0e0e0" stroke-width="1.5"/><circle cx="18" cy="12" r="4.8" fill="none" stroke="#e0e0e0" stroke-width="1.5"/><path d="M40 8.5l4.5 4.5 4.5-4.5" fill="none" stroke="#c8c8c8" stroke-width="1.4"/></svg>
<svg style="position:absolute;left:748px;top:673px;" width="44" height="44" viewBox="0 0 44 44"><defs><radialGradient id="kg770694" cx="0.4" cy="0.35" r="0.7"><stop offset="0" stop-color="#d6d6d6"/><stop offset="0.6" stop-color="#b4b4b4"/><stop offset="1" stop-color="#8e8e8e"/></radialGradient></defs><circle cx="22.0" cy="22.0" r="16.2" fill="#1a1a1c"/><circle cx="22.0" cy="22.0" r="12.8" fill="url(#kg770694)"/><circle cx="8.2" cy="35.8" r="0.9" fill="#6a6a6e"/><circle cx="35.8" cy="35.8" r="0.9" fill="#6a6a6e"/><path d="M10.54 33.46 A16.2 16.2 0 0 1 6.15 25.37" fill="none" stroke="#3ab8e0" stroke-width="2.6"/><path d="M20.04 22.42 L9.77 24.60" stroke="#101010" stroke-width="2.8" stroke-linecap="round"/></svg>
<div class="t" style="left:731.8px;top:714.6px;width:30px;text-align:center;font-size:11px;line-height:13.2px;color:#8a8a8a;font-weight:400;">20</div>
<div class="t" style="left:755.8px;top:714.6px;width:30px;text-align:center;font-size:11px;line-height:13.2px;color:#8a8a8a;font-weight:400;">Hz</div>
<div class="t" style="left:783.3px;top:714.6px;width:30px;text-align:center;font-size:11px;line-height:13.2px;color:#8a8a8a;font-weight:400;">19k</div>
<div style="left:742.3px;top:736px;width:53px;height:23px;background:#1c1c1e;border:1px solid #323236;border-radius:3px;box-sizing:border-box"></div>
<div class="t" style="left:738.8px;top:739.7px;width:60px;text-align:center;font-size:13px;line-height:15.6px;color:#f4f4f4;font-weight:700;">2366</div>
<svg style="position:absolute;left:748px;top:771px;" width="44" height="44" viewBox="0 0 44 44"><defs><radialGradient id="kg770792" cx="0.4" cy="0.35" r="0.7"><stop offset="0" stop-color="#d6d6d6"/><stop offset="0.6" stop-color="#b4b4b4"/><stop offset="1" stop-color="#8e8e8e"/></radialGradient></defs><circle cx="22.0" cy="22.0" r="16.2" fill="#1a1a1c"/><circle cx="22.0" cy="22.0" r="12.8" fill="url(#kg770792)"/><circle cx="8.2" cy="35.8" r="0.9" fill="#6a6a6e"/><circle cx="35.8" cy="35.8" r="0.9" fill="#6a6a6e"/><path d="M16.99 6.59 A16.2 16.2 0 0 1 22.00 5.80" fill="none" stroke="#3ab8e0" stroke-width="2.6"/><path d="M21.38 20.10 L18.14 10.11" stroke="#101010" stroke-width="2.8" stroke-linecap="round"/></svg>
<div class="t" style="left:730.3px;top:812.7px;width:30px;text-align:center;font-size:11px;line-height:13.2px;color:#8a8a8a;font-weight:400;">-20</div>
<div class="t" style="left:755.8px;top:812.7px;width:30px;text-align:center;font-size:11px;line-height:13.2px;color:#8a8a8a;font-weight:400;">dB</div>
<div class="t" style="left:783.3px;top:812.7px;width:30px;text-align:center;font-size:11px;line-height:13.2px;color:#8a8a8a;font-weight:400;">+20</div>
<div style="left:742.3px;top:834.5px;width:53px;height:22.5px;background:#1c1c1e;border:1px solid #323236;border-radius:3px;box-sizing:border-box"></div>
<div class="t" style="left:738.8px;top:838.0px;width:60px;text-align:center;font-size:13px;line-height:15.6px;color:#f4f4f4;font-weight:700;">-2.7</div>
<svg style="position:absolute;left:748px;top:869px;" width="44" height="44" viewBox="0 0 44 44"><defs><radialGradient id="kg770891" cx="0.4" cy="0.35" r="0.7"><stop offset="0" stop-color="#d6d6d6"/><stop offset="0.6" stop-color="#b4b4b4"/><stop offset="1" stop-color="#8e8e8e"/></radialGradient></defs><circle cx="22.0" cy="22.0" r="16.2" fill="#1a1a1c"/><circle cx="22.0" cy="22.0" r="12.8" fill="url(#kg770891)"/><circle cx="8.2" cy="35.8" r="0.9" fill="#6a6a6e"/><circle cx="35.8" cy="35.8" r="0.9" fill="#6a6a6e"/><path d="M10.54 33.46 A16.2 16.2 0 0 1 6.28 18.08" fill="none" stroke="#3ab8e0" stroke-width="2.6"/><path d="M20.06 21.52 L9.87 18.98" stroke="#101010" stroke-width="2.8" stroke-linecap="round"/></svg>
<div class="t" style="left:727.8px;top:910.8px;width:30px;text-align:center;font-size:11px;line-height:13.2px;color:#8a8a8a;font-weight:400;">Low</div>
<div class="t" style="left:755.8px;top:910.8px;width:30px;text-align:center;font-size:11px;line-height:13.2px;color:#8a8a8a;font-weight:400;">Q</div>
<div class="t" style="left:778.8px;top:910.8px;width:30px;text-align:center;font-size:11px;line-height:13.2px;color:#8a8a8a;font-weight:400;">Hi</div>
<div style="left:742.3px;top:933px;width:53px;height:22px;background:#1c1c1e;border:1px solid #323236;border-radius:3px;box-sizing:border-box"></div>
<div class="t" style="left:738.8px;top:936.2px;width:60px;text-align:center;font-size:13px;line-height:15.6px;color:#f4f4f4;font-weight:700;">2.3</div>
<div style="left:861.4px;top:596.5px;width:69px;height:25px;background:#1a1a1d;border:1px solid #141416;border-radius:12.5px;box-sizing:border-box"></div>
<div class="t" style="left:855.9px;top:600.8px;width:80px;text-align:center;font-size:13.6px;line-height:16.3px;color:#e2584a;font-weight:400;">Band 5</div>
<div style="left:862.9px;top:637px;width:66px;height:23px;background:#19191b;border-radius:11.5px"></div>
<svg style="position:absolute;left:865.9px;top:637px;" width="60" height="23" viewBox="0 0 60 23"><path d="M8 12h8 M28 7h-5q-5 0-7 5q2 5 7 5h5" fill="none" stroke="#e0e0e0" stroke-width="1.5"/><path d="M40 8.5l4.5 4.5 4.5-4.5" fill="none" stroke="#c8c8c8" stroke-width="1.4"/></svg>
<svg style="position:absolute;left:874px;top:673px;" width="44" height="44" viewBox="0 0 44 44"><defs><radialGradient id="kg895694" cx="0.4" cy="0.35" r="0.7"><stop offset="0" stop-color="#d6d6d6"/><stop offset="0.6" stop-color="#b4b4b4"/><stop offset="1" stop-color="#8e8e8e"/></radialGradient></defs><circle cx="22.0" cy="22.0" r="16.2" fill="#1a1a1c"/><circle cx="22.0" cy="22.0" r="12.8" fill="url(#kg895694)"/><circle cx="8.2" cy="35.8" r="0.9" fill="#6a6a6e"/><circle cx="35.8" cy="35.8" r="0.9" fill="#6a6a6e"/><path d="M10.54 33.46 A16.2 16.2 0 0 1 28.33 7.09" fill="none" stroke="#3ab8e0" stroke-width="2.6"/><path d="M22.78 20.16 L26.88 10.49" stroke="#101010" stroke-width="2.8" stroke-linecap="round"/></svg>
<div class="t" style="left:857.4px;top:714.6px;width:30px;text-align:center;font-size:11px;line-height:13.2px;color:#8a8a8a;font-weight:400;">20</div>
<div class="t" style="left:881.4px;top:714.6px;width:30px;text-align:center;font-size:11px;line-height:13.2px;color:#8a8a8a;font-weight:400;">Hz</div>
<div class="t" style="left:908.9px;top:714.6px;width:30px;text-align:center;font-size:11px;line-height:13.2px;color:#8a8a8a;font-weight:400;">19k</div>
<div style="left:867.9px;top:736px;width:53px;height:23px;background:#1c1c1e;border:1px solid #323236;border-radius:3px;box-sizing:border-box"></div>
<div class="t" style="left:864.4px;top:739.7px;width:60px;text-align:center;font-size:13px;line-height:15.6px;color:#f4f4f4;font-weight:700;">11212</div>
<svg style="position:absolute;left:874px;top:771px;" width="44" height="44" viewBox="0 0 44 44"><defs><radialGradient id="kg895792" cx="0.4" cy="0.35" r="0.7"><stop offset="0" stop-color="#d6d6d6"/><stop offset="0.6" stop-color="#b4b4b4"/><stop offset="1" stop-color="#8e8e8e"/></radialGradient></defs><circle cx="22.0" cy="22.0" r="16.2" fill="#1a1a1c"/><circle cx="22.0" cy="22.0" r="12.8" fill="url(#kg895792)"/><circle cx="8.2" cy="35.8" r="0.9" fill="#6a6a6e"/><circle cx="35.8" cy="35.8" r="0.9" fill="#6a6a6e"/><path d="M14.65 7.57 A16.2 16.2 0 0 1 22.00 5.80" fill="none" stroke="#3ab8e0" stroke-width="2.6"/><path d="M21.09 20.22 L16.33 10.86" stroke="#101010" stroke-width="2.8" stroke-linecap="round"/></svg>
<div class="t" style="left:855.9px;top:812.7px;width:30px;text-align:center;font-size:11px;line-height:13.2px;color:#8a8a8a;font-weight:400;">-20</div>
<div class="t" style="left:881.4px;top:812.7px;width:30px;text-align:center;font-size:11px;line-height:13.2px;color:#8a8a8a;font-weight:400;">dB</div>
<div class="t" style="left:908.9px;top:812.7px;width:30px;text-align:center;font-size:11px;line-height:13.2px;color:#8a8a8a;font-weight:400;">+20</div>
<div style="left:867.9px;top:834.5px;width:53px;height:22.5px;background:#1c1c1e;border:1px solid #323236;border-radius:3px;box-sizing:border-box"></div>
<div class="t" style="left:864.4px;top:838.0px;width:60px;text-align:center;font-size:13px;line-height:15.6px;color:#f4f4f4;font-weight:700;">-3.7</div>
<svg style="position:absolute;left:874px;top:869px;" width="44" height="44" viewBox="0 0 44 44"><defs><radialGradient id="kg895891" cx="0.4" cy="0.35" r="0.7"><stop offset="0" stop-color="#d6d6d6"/><stop offset="0.6" stop-color="#b4b4b4"/><stop offset="1" stop-color="#8e8e8e"/></radialGradient></defs><circle cx="22.0" cy="22.0" r="16.2" fill="#1a1a1c"/><circle cx="22.0" cy="22.0" r="12.8" fill="url(#kg895891)"/><circle cx="8.2" cy="35.8" r="0.9" fill="#6a6a6e"/><circle cx="35.8" cy="35.8" r="0.9" fill="#6a6a6e"/><path d="M10.54 33.46 A16.2 16.2 0 0 1 6.28 18.08" fill="none" stroke="#3ab8e0" stroke-width="2.6"/><path d="M20.06 21.52 L9.87 18.98" stroke="#101010" stroke-width="2.8" stroke-linecap="round"/></svg>
<div class="t" style="left:853.4px;top:910.8px;width:30px;text-align:center;font-size:11px;line-height:13.2px;color:#8a8a8a;font-weight:400;">Low</div>
<div class="t" style="left:881.4px;top:910.8px;width:30px;text-align:center;font-size:11px;line-height:13.2px;color:#8a8a8a;font-weight:400;">Q</div>
<div class="t" style="left:904.4px;top:910.8px;width:30px;text-align:center;font-size:11px;line-height:13.2px;color:#8a8a8a;font-weight:400;">Hi</div>
<div style="left:867.9px;top:933px;width:53px;height:22px;background:#1c1c1e;border:1px solid #323236;border-radius:3px;box-sizing:border-box"></div>
<div class="t" style="left:864.4px;top:936.2px;width:60px;text-align:center;font-size:13px;line-height:15.6px;color:#f4f4f4;font-weight:700;">2.3</div>
<div style="left:987.0px;top:596.5px;width:69px;height:25px;background:#262629;border:1px solid #3c3c40;border-radius:12.5px;box-sizing:border-box"></div>
<div class="t" style="left:981.5px;top:600.8px;width:80px;text-align:center;font-size:13.6px;line-height:16.3px;color:#9a9a9a;font-weight:400;">Band 6</div>
<div style="left:988.5px;top:637px;width:66px;height:23px;background:#19191b;border-radius:11.5px"></div>
<svg style="position:absolute;left:991.5px;top:637px;" width="60" height="23" viewBox="0 0 60 23"><path d="M9 6H15Q19 6 24 17" fill="none" stroke="#e0e0e0" stroke-width="1.5"/><path d="M40 8.5l4.5 4.5 4.5-4.5" fill="none" stroke="#c8c8c8" stroke-width="1.4"/></svg>
<svg style="position:absolute;left:1000px;top:673px;" width="44" height="44" viewBox="0 0 44 44"><defs><radialGradient id="kg1021694" cx="0.4" cy="0.35" r="0.7"><stop offset="0" stop-color="#d6d6d6"/><stop offset="0.6" stop-color="#b4b4b4"/><stop offset="1" stop-color="#8e8e8e"/></radialGradient></defs><circle cx="22.0" cy="22.0" r="16.2" fill="#1a1a1c"/><circle cx="22.0" cy="22.0" r="12.8" fill="url(#kg1021694)"/><circle cx="8.2" cy="35.8" r="0.9" fill="#6a6a6e"/><circle cx="35.8" cy="35.8" r="0.9" fill="#6a6a6e"/><path d="M10.54 33.46 A16.2 16.2 0 1 1 35.11 31.52" fill="none" stroke="#3ab8e0" stroke-width="2.6"/><path d="M23.62 23.18 L32.11 29.35" stroke="#101010" stroke-width="2.8" stroke-linecap="round"/></svg>
<div class="t" style="left:983.0px;top:714.6px;width:30px;text-align:center;font-size:11px;line-height:13.2px;color:#8a8a8a;font-weight:400;">20</div>
<div class="t" style="left:1007.0px;top:714.6px;width:30px;text-align:center;font-size:11px;line-height:13.2px;color:#8a8a8a;font-weight:400;">Hz</div>
<div class="t" style="left:1034.5px;top:714.6px;width:30px;text-align:center;font-size:11px;line-height:13.2px;color:#8a8a8a;font-weight:400;">19k</div>
<div style="left:993.5px;top:736px;width:53px;height:23px;background:#1c1c1e;border:1px solid #323236;border-radius:3px;box-sizing:border-box"></div>
<div class="t" style="left:990.0px;top:739.7px;width:60px;text-align:center;font-size:13px;line-height:15.6px;color:#f4f4f4;font-weight:700;">19000</div>
<svg style="position:absolute;left:1000px;top:771px;" width="44" height="44" viewBox="0 0 44 44"><defs><radialGradient id="kg1021792" cx="0.4" cy="0.35" r="0.7"><stop offset="0" stop-color="#d6d6d6"/><stop offset="0.6" stop-color="#b4b4b4"/><stop offset="1" stop-color="#8e8e8e"/></radialGradient></defs><circle cx="22.0" cy="22.0" r="16.2" fill="#1a1a1c"/><circle cx="22.0" cy="22.0" r="12.8" fill="url(#kg1021792)"/><circle cx="8.2" cy="35.8" r="0.9" fill="#6a6a6e"/><circle cx="35.8" cy="35.8" r="0.9" fill="#6a6a6e"/><path d="M22.00 20.00 L22.00 9.50" stroke="#101010" stroke-width="2.8" stroke-linecap="round"/></svg>
<div class="t" style="left:981.5px;top:812.7px;width:30px;text-align:center;font-size:11px;line-height:13.2px;color:#8a8a8a;font-weight:400;">-20</div>
<div class="t" style="left:1007.0px;top:812.7px;width:30px;text-align:center;font-size:11px;line-height:13.2px;color:#8a8a8a;font-weight:400;">dB</div>
<div class="t" style="left:1034.5px;top:812.7px;width:30px;text-align:center;font-size:11px;line-height:13.2px;color:#8a8a8a;font-weight:400;">+20</div>
<div style="left:993.5px;top:834.5px;width:53px;height:22.5px;background:#1c1c1e;border:1px solid #323236;border-radius:3px;box-sizing:border-box"></div>
<div class="t" style="left:990.0px;top:838.0px;width:60px;text-align:center;font-size:13px;line-height:15.6px;color:#f4f4f4;font-weight:700;">0.0</div>
<svg style="position:absolute;left:1000px;top:869px;" width="44" height="44" viewBox="0 0 44 44"><defs><radialGradient id="kg1021891" cx="0.4" cy="0.35" r="0.7"><stop offset="0" stop-color="#d6d6d6"/><stop offset="0.6" stop-color="#b4b4b4"/><stop offset="1" stop-color="#8e8e8e"/></radialGradient></defs><circle cx="22.0" cy="22.0" r="16.2" fill="#1a1a1c"/><circle cx="22.0" cy="22.0" r="12.8" fill="url(#kg1021891)"/><circle cx="8.2" cy="35.8" r="0.9" fill="#6a6a6e"/><circle cx="35.8" cy="35.8" r="0.9" fill="#6a6a6e"/><path d="M10.54 33.46 A16.2 16.2 0 0 1 6.28 18.08" fill="none" stroke="#3ab8e0" stroke-width="2.6"/><path d="M20.06 21.52 L9.87 18.98" stroke="#101010" stroke-width="2.8" stroke-linecap="round"/></svg>
<div class="t" style="left:979.0px;top:910.8px;width:30px;text-align:center;font-size:11px;line-height:13.2px;color:#8a8a8a;font-weight:400;">Low</div>
<div class="t" style="left:1007.0px;top:910.8px;width:30px;text-align:center;font-size:11px;line-height:13.2px;color:#8a8a8a;font-weight:400;">Q</div>
<div class="t" style="left:1030.0px;top:910.8px;width:30px;text-align:center;font-size:11px;line-height:13.2px;color:#8a8a8a;font-weight:400;">Hi</div>
<div style="left:993.5px;top:933px;width:53px;height:22px;background:#1c1c1e;border:1px solid #323236;border-radius:3px;box-sizing:border-box"></div>
<div class="t" style="left:990.0px;top:936.2px;width:60px;text-align:center;font-size:13px;line-height:15.6px;color:#f4f4f4;font-weight:700;">2.3</div></body></html>
